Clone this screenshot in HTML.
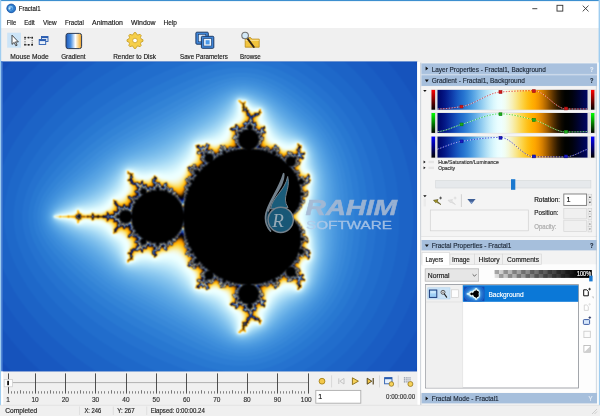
<!DOCTYPE html>
<html><head><meta charset="utf-8"><title>Fractal1</title>
<style>
html,body{margin:0;padding:0;background:#f0f0f0}
body{width:600px;height:416px;overflow:hidden;font-family:"Liberation Sans", sans-serif}
svg{display:block}
</style></head><body>
<svg width="600" height="416" viewBox="0 0 600 416" style="will-change:transform">
<defs><linearGradient id="uf" x1="0" x2="1" y1="0" y2="0"><stop offset="0.0000" stop-color="#000764"/><stop offset="0.0250" stop-color="#010d76"/><stop offset="0.0500" stop-color="#041988"/><stop offset="0.0750" stop-color="#092b9b"/><stop offset="0.1000" stop-color="#0f3eac"/><stop offset="0.1250" stop-color="#1652bc"/><stop offset="0.1500" stop-color="#1d65c7"/><stop offset="0.1750" stop-color="#2674d0"/><stop offset="0.2000" stop-color="#3586d7"/><stop offset="0.2250" stop-color="#4998df"/><stop offset="0.2500" stop-color="#61abe6"/><stop offset="0.2750" stop-color="#7cbeec"/><stop offset="0.3000" stop-color="#96cff1"/><stop offset="0.3250" stop-color="#b0dff6"/><stop offset="0.3500" stop-color="#c7edfa"/><stop offset="0.3750" stop-color="#daf7fd"/><stop offset="0.4000" stop-color="#e8fdff"/><stop offset="0.4250" stop-color="#eeffff"/><stop offset="0.4500" stop-color="#f1fdf2"/><stop offset="0.4750" stop-color="#f4f7d8"/><stop offset="0.5000" stop-color="#f7efb4"/><stop offset="0.5250" stop-color="#f9e68a"/><stop offset="0.5500" stop-color="#fbda60"/><stop offset="0.5750" stop-color="#fdce38"/><stop offset="0.6000" stop-color="#fec018"/><stop offset="0.6250" stop-color="#ffb304"/><stop offset="0.6500" stop-color="#fea600"/><stop offset="0.6750" stop-color="#ef9400"/><stop offset="0.7000" stop-color="#d27d00"/><stop offset="0.7250" stop-color="#ab6300"/><stop offset="0.7500" stop-color="#7f4800"/><stop offset="0.7750" stop-color="#542f00"/><stop offset="0.8000" stop-color="#2d1a00"/><stop offset="0.8250" stop-color="#100a00"/><stop offset="0.8500" stop-color="#010200"/><stop offset="0.8750" stop-color="#000203"/><stop offset="0.9000" stop-color="#00020f"/><stop offset="0.9250" stop-color="#000323"/><stop offset="0.9500" stop-color="#00043a"/><stop offset="0.9750" stop-color="#000550"/><stop offset="1.0000" stop-color="#000764"/></linearGradient><linearGradient id="gr" x1="0" x2="0" y1="0" y2="1"><stop offset="0" stop-color="#f00"/><stop offset="1" stop-color="#000"/></linearGradient><linearGradient id="gg" x1="0" x2="0" y1="0" y2="1"><stop offset="0" stop-color="#0f0"/><stop offset="1" stop-color="#000"/></linearGradient><linearGradient id="gb" x1="0" x2="0" y1="0" y2="1"><stop offset="0" stop-color="#00f"/><stop offset="1" stop-color="#000"/></linearGradient><linearGradient id="gicon" x1="0" x2="1" y1="0" y2="0"><stop offset="0" stop-color="#1c57b8"/><stop offset=".3" stop-color="#4a8fe0"/><stop offset=".6" stop-color="#fff"/><stop offset=".85" stop-color="#f6c56a"/><stop offset="1" stop-color="#e89a20"/></linearGradient><linearGradient id="opa" x1="0" x2="1" y1="0" y2="0"><stop offset="0" stop-color="#000" stop-opacity=".12"/><stop offset=".85" stop-color="#000" stop-opacity=".97"/><stop offset="1" stop-color="#000"/></linearGradient><radialGradient id="thumb" cx=".62" cy=".5" r=".6"><stop offset="0" stop-color="#fff"/><stop offset=".45" stop-color="#cfe6fa"/><stop offset="1" stop-color="#1b5fc4"/></radialGradient><filter id="soft" x="0" y="0" width="1" height="1" color-interpolation-filters="sRGB"><feConvolveMatrix order="3" kernelMatrix="1 2 1 2 5 2 1 2 1" edgeMode="duplicate" preserveAlpha="true"/></filter></defs>
<rect x="0.00" y="0.00" width="600.00" height="416.00" fill="#f0f0f0"/>
<rect x="0.00" y="0.00" width="600.00" height="28.00" fill="#fff"/>
<rect x="0.00" y="0.00" width="600.00" height="1.10" fill="#3d8fcf"/>
<rect x="0.00" y="0.00" width="1.20" height="416.00" fill="#9fcdf0"/>
<rect x="598.60" y="0.00" width="1.40" height="416.00" fill="#9fcdf0"/>
<circle cx="11.2" cy="8.4" r="4.5" fill="#2f7fd0"/><circle cx="11.2" cy="8.4" r="4.3" fill="none" stroke="#1f57a6" stroke-width=".9"/><circle cx="10.6" cy="8.2" r="2.4" fill="#86c2f0"/><circle cx="11.3" cy="8.8" r="1.400" fill="#3b88d6"/><circle cx="9.800" cy="8.300" r=".8" fill="#e6f3fc"/>
<line x1="532.30" y1="8.70" x2="537.30" y2="8.70" stroke="#333" stroke-width="0.9"/>
<rect x="557.00" y="5.30" width="5.80" height="5.80" fill="none" stroke="#333" stroke-width="0.9"/>
<path d="M582.7 5.6l5.8 5.8M588.5 5.6l-5.8 5.8" stroke="#333" stroke-width=".9" fill="none"/>
<rect x="7.20" y="32.70" width="13.80" height="15.00" fill="#cce4f7"/>
<path d="M12 35.2v9.2l2.2-2 1.6 3.4 1.3-.6-1.6-3.3h2.9z" fill="#fff" stroke="#222" stroke-width=".8" stroke-linejoin="round"/>
<rect x="25" y="37.6" width="7.2" height="7.2" fill="none" stroke="#333" stroke-width=".8" stroke-dasharray="1.2 1.2"/>
<rect x="24.20" y="36.80" width="1.60" height="1.60" fill="#222"/>
<rect x="31.40" y="36.80" width="1.60" height="1.60" fill="#222"/>
<rect x="24.20" y="44.00" width="1.60" height="1.60" fill="#222"/>
<rect x="31.40" y="44.00" width="1.60" height="1.60" fill="#222"/>
<rect x="27.80" y="36.80" width="1.60" height="1.60" fill="#222"/>
<rect x="27.80" y="44.00" width="1.60" height="1.60" fill="#222"/>
<rect x="41.50" y="36.50" width="6.50" height="5.00" fill="#e8f0fa" stroke="#2a5db0" stroke-width="0.9"/>
<rect x="41.50" y="36.50" width="6.50" height="1.60" fill="#2a5db0"/>
<rect x="39.20" y="39.50" width="6.50" height="5.00" fill="#e8f0fa" stroke="#2a5db0" stroke-width="0.9"/>
<rect x="39.20" y="39.50" width="6.50" height="1.60" fill="#2a5db0"/>
<rect x="66.00" y="33.40" width="15.60" height="15.20" fill="url(#gicon)" stroke="#2b3b55" stroke-width="1.0" rx="2.2"/>
<path d="M142.96 39.72L142.96 41.28L140.93 42.30L140.47 43.42L141.18 45.58L140.08 46.68L137.92 45.97L136.80 46.43L135.78 48.46L134.22 48.46L133.20 46.43L132.08 45.97L129.92 46.68L128.82 45.58L129.53 43.42L129.07 42.30L127.04 41.28L127.04 39.72L129.07 38.70L129.53 37.58L128.82 35.42L129.92 34.32L132.08 35.03L133.20 34.57L134.22 32.54L135.78 32.54L136.80 34.57L137.92 35.03L140.08 34.32L141.18 35.42L140.47 37.58L140.93 38.70z" fill="#f6cf4a" stroke="#c9a02a" stroke-width=".9" stroke-linejoin="round"/>
<circle cx="135" cy="40.5" r="2.3" fill="#fff" stroke="#c9a02a" stroke-width=".8"/>
<rect x="195.90" y="32.20" width="12.40" height="12.00" fill="#3f86d8" stroke="#1d3a66" stroke-width="1.0" rx="1"/>
<rect x="198.40" y="34.40" width="7.40" height="7.40" fill="#dbeafa" stroke="#1d3a66" stroke-width="0.6"/>
<rect x="201.40" y="36.30" width="12.40" height="12.00" fill="#3f86d8" stroke="#1d3a66" stroke-width="1.0" rx="1"/>
<rect x="203.80" y="38.60" width="7.60" height="7.40" fill="#eef5fd" stroke="#1d3a66" stroke-width="0.6"/>
<rect x="205.60" y="40.20" width="4.00" height="4.20" fill="#4a98e8"/>
<path d="M245.200 37.600h5.400l1.200 1.500h7.400v8.100h-14z" fill="#f2c43e" stroke="#b88a1c" stroke-width=".8" stroke-linejoin="round"/>
<path d="M245.600 40.300h13.200" stroke="#fbe39a" stroke-width="1.100"/>
<path d="M247.400 38.400l6.400 8.600" stroke="#33261a" stroke-width="1.900" stroke-linecap="round"/>
<circle cx="245.100" cy="35.500" r="3.300" fill="#d3e9f8" stroke="#747474" stroke-width="1.100"/>
<rect x="1.20" y="61.50" width="416.00" height="1.00" fill="#2a66c4"/>
<svg x="2.2" y="61.650" width="415" height="310" viewBox="0 0 415 310" fill-rule="evenodd"><g filter="url(#soft)"><rect x="-6" y="-6" width="427" height="322" fill="#124ab5"/><g transform="scale(.1)"><path fill="#144db8" d="M4148 3098l-4146 0 0-3096 4146 0z"/>
<path fill="#1653bc" d="M4112 3098l-4023 0-87-97 0-2902 87-97 4025 0 34 46 0 3004-34 46z"/>
<path fill="#1858c0" d="M3858 3098l-3471 0-109-102-99-104-94-110-83-110 0-2244 83-110 94-110 99-104 109-102 3471 0 82 100 75 103 69 107 64 113 0 1213 0 1037-64 113-69 107-75 103z"/>
<path fill="#1a5dc3" d="M3632 3098l-2963 0-104-82-100-87-93-88-87-91-80-92-75-96-67-97-61-100 0-1630 56-93 62-90 56-74 59-71 63-72 68-70 72-70 74-66 76-64 81-63 2963 0 85 90 80 96 73 100 69 107 62 110 55 113 49 117 43 121 0 1388-43 121-49 117-55 113-62 110-69 107-73 100-82 98z"/>
<path fill="#1c63c6" d="M3428 3098l-2488 0-122-82-116-87-124-102-113-104-103-107-92-108-83-110-38-56-35-57-32-57-29-56-27-57-24-58 0-1014 47-108 59-110 68-107 78-106 68-83 73-81 79-80 84-77 90-77 94-74 96-70 102-68 2488 0 77 70 75 76 69 80 67 87 60 87 57 93 53 97 47 100 42 103 37 103 31 107 25 107 20 110 14 110 8 110 3 110-3 113-9 110-14 110-20 107-25 106-32 107-36 103-41 100-47 100-53 97-57 93-60 87-67 87-69 80-75 76z"/>
<path fill="#1e68c9" d="M3208 3098l-1968 0-82-44-83-48-80-50-80-53-73-52-74-56-70-57-69-60-64-60-63-62-57-61-57-64-53-66-47-63-45-67-41-67-37-65-32-65-29-66-24-64-20-63-16-67-13-66-8-64-4-63 0-67 4-63 8-63 12-67 15-63 21-67 24-63 27-64 33-66 35-65 40-65 46-67 46-63 52-65 54-62 81-87 88-84 93-82 100-80 104-75 110-74 113-68 115-63 1970 0 78 59 74 62 75 72 72 77 67 80 61 83 57 87 51 90 47 93 41 97 36 100 31 103 26 107 20 106 14 110 8 110 3 110-3 114-8 110-14 106-19 107-26 107-31 103-34 97-41 96-46 94-51 90-56 86-61 84-66 80-71 76-77 74-82 70z"/>
<path fill="#216dcc" d="M3005 3098l-1463 0-144-65-140-72-140-81-130-84-123-88-117-92-110-97-100-99-53-58-49-57-45-57-45-60-41-60-35-56-31-57-29-57-24-56-21-57-18-57-13-53-10-57-7-56-3-57 1-53 4-57 8-53 11-57 16-57 19-56 22-57 27-57 29-56 34-58 38-59 42-59 44-58 49-59 51-57 56-59 57-56 96-88 100-82 110-82 114-77 120-74 126-71 127-64 127-57 1463 0 100 62 97 71 93 79 87 84 66 75 63 79 56 80 51 83 46 87 41 90 37 93 31 97 27 100 21 100 16 106 11 107 5 107-1 110-6 110-11 106-17 104-21 100-26 96-31 94-36 90-42 90-46 86-49 80-56 80-59 75-64 72-70 70-73 65-77 62-81 56z"/>
<path fill="#2572cf" d="M2772 3098l-891 0-119-42-130-53-134-60-136-70-107-58-103-61-100-64-94-65-90-67-86-70-80-70-77-73-74-77-69-79-62-77-54-77-45-73-39-74-30-70-24-70-14-56-9-57-5-57 0-56 5-57 9-57 14-56 19-57 23-57 29-60 34-60 38-60 42-60 49-63 53-63 58-64 62-63 64-60 69-62 70-57 74-57 76-55 80-55 80-50 87-52 93-53 97-50 93-46 97-44 90-38 90-35 86-29 892 0 79 34 80 42 63 38 64 42 63 46 60 49 58 52 55 55 51 55 50 60 45 60 41 60 39 63 36 67 32 67 29 70 27 73 23 73 20 77 18 80 13 80 11 80 7 83 4 84 0 86-2 84-6 83-10 83-12 80-16 80-19 77-22 73-25 74-28 70-31 66-34 67-37 63-39 60-43 60-48 60-50 57-52 53-57 54-58 50-60 46-64 45-63 40-67 37-66 33z"/>
<path fill="#2878d1" d="M2482 3098l-235 0-45-6-74-13-76-19-80-23-87-30-97-38-106-46-114-53-113-56-107-57-106-61-100-61-94-61-83-59-80-60-77-62-73-64-70-66-67-68-63-69-57-68-48-63-43-63-35-60-29-57-24-57-18-56-12-54-7-56-1-50 3-54 9-53 13-53 18-54 23-53 28-53 34-57 41-60 48-63 54-64 60-66 62-64 64-61 70-63 70-58 77-59 80-58 83-56 90-57 94-55 100-56 103-54 103-51 100-46 94-40 86-35 84-29 76-24 77-20 73-14 69-10 236 0 15 2 60 10 60 14 60 18 60 22 60 26 64 32 62 36 61 39 60 43 60 47 57 49 53 50 50 52 44 50 42 53 39 53 37 57 34 57 31 60 28 60 26 63 23 67 21 66 17 67 15 70 12 73 10 74 7 76 5 77 1 80-1 80-4 77-7 76-10 77-12 73-16 74-17 66-20 67-23 67-24 60-28 60-31 60-32 56-37 57-41 57-46 57-49 56-53 53-54 51-60 51-60 46-61 42-63 39-60 34-60 29-63 27-63 23-60 16-60 13z"/>
<path fill="#2d7dd4" d="M2418 3042l-60 0-63-4-63-8-67-13-67-17-70-22-76-27-80-32-104-46-120-56-126-64-117-62-110-61-97-58-93-59-87-59-76-56-74-57-70-59-70-62-67-65-66-68-60-66-52-63-41-55-35-51-29-50-24-50-18-47-14-50-8-50-3-47 1-50 7-46 11-47 16-47 20-46 27-50 32-51 38-53 49-61 56-65 60-64 67-66 67-62 70-61 70-56 73-56 83-59 87-57 93-57 100-58 114-62 116-61 120-59 110-51 87-37 80-32 73-26 70-21 67-16 63-12 64-8 63-3 57 0 56 5 57 9 57 12 53 16 57 21 56 24 57 29 60 34 60 39 60 43 60 46 57 49 53 50 50 51 46 52 37 47 37 50 33 50 31 53 28 54 27 56 23 57 20 57 20 63 16 63 15 67 12 67 9 70 7 70 6 73 2 73 0 74-2 73-5 73-7 74-9 70-13 70-14 66-16 64-19 60-21 60-23 56-26 57-28 53-31 54-33 50-36 50-43 53-47 53-53 54-53 49-57 48-60 46-60 43-60 38-56 32-57 28-57 25-56 20-54 15-56 13-57 8z"/>
<path fill="#3283d6" d="M2445 2988l-53 2-57-2-57-6-56-11-60-14-60-19-67-24-70-28-100-45-120-58-150-76-147-77-110-61-96-56-90-55-87-58-77-54-70-52-70-57-70-60-70-65-70-68-66-70-57-64-40-50-33-46-27-43-23-43-16-40-13-43-9-43-3-44 1-43 6-40 11-43 15-40 18-40 25-44 29-43 36-47 50-59 60-65 66-68 70-66 67-60 67-56 66-53 74-54 83-58 83-53 90-55 100-57 124-67 140-73 140-70 113-54 77-34 70-29 63-23 60-19 57-14 56-11 54-7 53-3 53 1 50 4 54 8 50 12 50 15 53 21 50 23 53 28 57 33 60 40 60 44 60 48 57 49 52 49 48 50 44 50 34 43 33 47 31 47 27 46 26 50 23 50 21 54 19 53 17 57 15 60 24 123 17 137 8 140-1 143-10 143-18 134-12 63-14 60-16 57-18 56-20 54-23 53-24 50-27 50-29 47-32 46-41 54-42 50-47 50-52 50-53 47-60 49-60 45-60 41-57 35-53 29-54 25-50 21-50 16-50 13-53 10z"/>
<path fill="#3888d8" d="M2445 2945l-40 2-47-1-60-7-36-7-54-13-56-18-54-20-63-26-100-47-143-72-344-181-190-107-103-62-67-43-76-54-54-40-73-58-63-53-2-3-55-47-90-84-138-139-45-53-30-40-19-30-21-37-14-30-14-43-7-30-4-44 1-33 3-27 9-36 12-37 17-37 24-40 30-43 32-40 39-43 75-77 140-133 55-47 2-3 80-67 133-101 63-43 84-53 116-69 111-61 3-3 380-201 200-99 106-46 54-20 56-18 54-13 36-7 60-7 24-1 50 1 50 5 40 6 43 11 53 17 50 20 54 25 53 30 57 36 53 37 63 48 57 46 57 50 50 48 40 42 44 50 60 80 30 47 24 43 45 93 36 100 31 114 21 110 13 106 9 157 0 150-6 120-13 123-10 60-14 70-31 114-36 100-45 93-24 43-30 47-36 50-44 53-54 59-60 58-57 50-57 46-106 79-40 26-57 33-53 28-57 24-47 16-50 14-53 10z"/>
<path fill="#3d8ddb" d="M2458 2912l-43 3-40-1-40-3-43-8-44-10-43-14-50-19-53-23-157-76-230-122-450-245-87-50-73-46-110-78-123-100-204-178-66-62-50-51-34-37-30-37-25-37-20-33-16-33-11-34-7-30-3-33 1-30 6-33 10-34 13-30 19-34 23-35 27-35 33-39 47-48 57-54 173-154 143-120 57-44 57-40 100-65 126-73 494-267 250-129 106-49 87-31 40-11 37-7 40-6 36-2 44 1 43 4 47 9 43 11 47 16 46 19 47 23 47 27 51 33 56 40 64 50 69 58 60 53 50 48 42 45 37 43 28 37 27 40 46 80 41 90 35 100 26 100 19 106 12 114 6 130 1 150-6 140-12 120-18 106-27 107-16 50-20 53-20 47-22 47-24 43-27 43-33 47-35 43-40 44-47 46-60 56-70 59-67 54-60 45-46 31-44 26-46 25-44 19-43 17-47 14-46 11z"/>
<path fill="#4292dc" d="M2448 2885l-36 2-34 0-33-3-37-7-36-9-37-12-83-35-144-74-482-265-268-142-76-44-67-41-87-61-96-78-267-225-60-54-47-45-57-64-23-30-18-30-15-29-10-27-7-30-3-27 2-27 5-30 9-26 13-30 18-30 20-28 26-33 30-33 47-46 57-51 256-218 100-81 87-63 70-45 83-48 265-141 389-214 220-117 80-37 66-24 64-15 63-5 40 1 43 5 40 8 44 12 43 15 43 19 44 22 43 26 50 34 57 42 153 128 57 51 43 42 37 39 33 39 26 36 25 36 42 77 39 90 30 93 24 97 16 100 11 107 5 130 0 156-4 137-11 113-16 104-26 103-33 100-40 90-23 43-25 40-30 43-33 41-37 40-43 43-64 57-89 76-70 57-57 43-44 29-40 24-43 23-40 17-40 16-43 13-44 9z"/>
<path fill="#4896de" d="M2442 2865l-60 1-60-8-64-18-66-29-90-48-529-298-112-60-216-111-63-35-57-36-67-46-70-55-160-134-180-147-86-77-54-57-22-29-17-26-13-27-9-23-6-27-2-23 2-24 5-26 8-24 13-26 17-27 20-27 51-56 40-37 50-44 183-149 154-128 66-53 64-45 53-35 60-34 330-172 540-304 80-44 60-27 57-21 53-11 53-5 37 1 40 5 40 9 40 11 40 15 43 19 40 21 40 24 48 34 56 43 186 158 84 77 32 35 27 33 47 67 39 73 36 87 31 97 22 93 14 93 9 104 4 123 0 170-3 133-9 107-15 97-24 103-32 100-19 47-20 43-22 40-22 37-28 40-29 36-35 38-40 39-63 57-129 110-58 47-50 38-40 27-37 22-40 21-40 18-40 15-40 11-40 9z"/>
<path fill="#4d9be0" d="M2422 2849l-50-2-50-8-50-16-54-24-55-31-201-120-366-210-125-66-226-112-60-33-53-33-47-33-51-39-188-157-214-167-70-61-50-52-34-47-12-23-8-20-5-20-2-23 2-24 4-20 8-21 11-22 16-24 20-26 50-52 70-61 214-167 188-157 48-37 46-32 57-36 60-33 226-112 125-66 349-201 210-125 60-33 50-23 47-16 46-10 44-3 33 1 37 5 40 9 36 11 40 15 40 19 37 19 40 25 42 30 46 37 232 197 67 64 50 59 24 33 20 33 37 74 34 86 29 97 18 87 13 90 6 100 3 126 0 184-3 120-7 96-13 90-23 100-16 54-18 50-37 86-19 37-22 37-26 36-27 34-30 32-37 36-243 208-81 64-39 26-37 21-36 18-40 17-37 13-40 11-37 7z"/>
<path fill="#53a0e2" d="M2435 2832l-47 1-46-6-47-14-47-21-59-34-211-133-369-217-133-70-228-107-53-29-47-28-43-30-47-36-141-120-62-50-217-161-73-60-47-47-32-42-11-20-8-20-4-16-2-20 2-20 3-17 8-20 10-20 31-41 47-48 76-63 221-165 196-164 43-33 44-31 50-31 53-29 231-108 133-70 375-220 205-130 53-31 43-20 40-14 37-7 40-3 33 1 33 5 34 8 36 11 40 15 37 17 37 20 33 20 37 26 39 32 131 114 133 111 53 50 42 48 40 57 36 66 31 77 29 90 20 83 14 84 7 86 4 104-1 363-5 93-10 80-19 97-30 103-16 47-20 47-17 36-21 37-22 33-25 34-27 30-33 33-47 42-123 103-112 98-59 47-66 43-70 35-36 14-40 12-34 8z"/>
<path fill="#59a4e3" d="M2425 2819l-40 0-40-6-40-13-37-16-53-32-123-86-80-51-390-233-73-40-67-34-230-102-50-27-44-26-40-28-40-31-138-119-66-53-72-54-167-116-70-55-43-42-30-37-16-33-4-17-2-16 1-17 4-17 6-16 11-19 26-34 44-43 70-55 170-119 72-54 68-54 133-116 40-31 40-28 43-26 50-27 234-104 67-34 73-40 390-233 80-51 123-86 50-30 37-17 33-11 33-7 34-2 30 1 30 4 33 8 37 12 36 14 37 17 33 18 34 21 60 46 146 131 150 122 44 41 35 39 37 53 32 60 31 77 29 90 19 80 13 77 8 80 2 93 0 400-4 83-8 74-18 96-28 100-33 90-17 37-20 37-21 33-22 30-25 29-30 30-44 38-126 103-134 120-54 43-62 41-34 18-36 16-37 14-37 11-33 7z"/>
<path fill="#5ea8e5" d="M2435 2805l-40 2-37-4-36-10-37-17-50-31-120-90-80-54-410-249-67-37-70-34-233-98-43-22-40-24-40-27-37-29-134-119-70-57-80-57-179-118-67-51-40-36-27-32-15-29-4-14-1-16 1-17 3-13 15-30 25-31 40-38 70-53 179-118 80-57 70-57 131-116 36-29 37-26 47-28 50-25 213-89 57-27 60-31 95-55 345-211 73-49 121-90 45-30 34-18 30-11 30-7 33-3 27 1 30 4 33 8 34 11 73 31 33 18 30 19 33 23 32 27 102 97 49 43 158 125 33 32 27 29 34 47 31 57 27 63 27 84 21 80 14 73 9 73 3 84-1 226 1 230-2 70-6 64-16 90-27 100-34 96-33 70-18 30-22 30-25 30-27 26-40 35-142 113-132 123-49 41-57 38-63 32-70 26-30 8z"/>
<path fill="#63ace6" d="M2438 2795l-36 3-34-2-33-9-37-16-46-29-120-96-77-54-421-260-62-35-59-29-71-30-167-64-50-24-47-27-33-23-37-29-133-122-72-57-87-60-188-119-70-52-33-30-23-26-14-27-5-26 4-27 11-24 24-29 36-33 70-52 188-119 87-60 72-57 130-119 37-30 33-23 43-25 47-23 218-86 59-27 63-33 85-50 362-224 70-49 117-94 43-30 30-16 23-9 33-9 30-2 24 1 26 3 60 17 37 14 40 18 33 18 30 19 32 23 31 27 97 95 44 39 47 39 123 93 33 30 28 30 34 47 27 50 24 57 28 86 22 80 13 67 9 70 3 77-3 250 3 240-2 63-4 50-15 87-25 96-33 100-32 70-17 30-20 29-21 25-26 26-43 37-102 77-48 39-47 42-86 85-47 41-53 36-60 31-64 25-33 9z"/>
<path fill="#68b0e7" d="M2428 2788l-33 2-33-4-34-10-30-15-40-29-123-104-80-58-65-42-152-91-156-101-70-41-60-31-67-29-227-85-40-19-33-20-28-19-29-24-137-126-43-37-43-33-79-54-181-107-57-38-36-28-30-27-19-23-12-23-4-20 4-24 12-23 19-23 30-27 36-28 57-38 181-107 79-54 43-33 43-37 134-124 57-43 36-22 40-19 235-88 67-30 65-34 60-36 153-99 157-94 63-41 80-59 116-97 41-30 27-15 23-9 27-6 26-2 24 1 26 4 54 15 80 35 33 17 27 17 26 19 26 24 101 101 52 49 54 43 117 85 30 27 27 28 31 43 28 50 23 57 26 83 23 84 13 63 7 67 3 76-5 254 5 246-1 60-5 54-13 80-27 100-31 96-15 37-15 30-18 30-19 27-20 24-22 22-38 32-100 72-54 43-53 49-97 98-42 36-51 34-66 32-64 24z"/>
<path fill="#6db4e9" d="M2418 2782l-30 0-30-4-26-9-27-14-35-27-118-106-80-61-67-43-153-93-154-101-70-42-57-30-59-27-71-27-169-57-44-20-36-21-27-18-27-22-134-128-46-40-44-34-81-53-135-75-56-34-57-36-37-27-23-20-19-21-11-20-4-20 3-20 11-22 17-20 26-23 37-27 57-36 56-34 135-75 81-53 44-34 46-40 134-128 27-22 27-18 36-21 44-20 169-57 74-29 63-28 57-30 67-41 146-97 158-95 66-44 83-63 111-100 36-28 23-13 23-9 24-6 26-2 24 1 23 4 50 15 83 36 30 16 27 17 26 19 26 23 98 104 56 53 55 43 116 80 30 26 26 28 31 43 26 47 21 53 24 77 23 83 13 63 8 64 3 76-7 247 0 67 7 190-1 66-5 57-12 73-25 97-32 100-14 37-15 30-16 26-18 27-20 23-21 21-36 30-101 69-59 47-57 53-95 100-42 37-50 32-76 36-57 20z"/>
<path fill="#73b7ea" d="M2418 2775l-30 1-26-4-27-9-23-13-36-28-68-67-40-37-40-34-43-33-70-46-157-94-150-103-71-43-58-30-61-27-76-27-164-52-43-18-37-20-26-19-25-20-122-122-39-35-38-30-45-33-48-30-177-95-113-70-30-22-23-24-12-19-5-20 2-17 10-20 15-17 23-21 40-28 63-38 60-34 130-69 44-26 40-27 43-33 40-34 43-40 92-93 28-25 27-19 37-21 40-17 172-55 74-27 64-27 61-32 65-41 150-102 157-94 70-47 43-32 40-34 40-37 68-67 36-28 20-12 20-7 23-5 23-2 44 4 46 14 90 41 27 14 27 16 23 19 22 20 98 107 57 55 61 48 115 76 29 24 25 26 25 34 23 40 20 46 17 54 33 113 13 60 9 67 3 73-1 70-8 197 1 66 8 184 0 63-4 57-10 66-18 70-38 130-14 37-15 30-15 27-18 26-18 22-20 20-43 34-109 71-48 38-60 58-95 104-37 33-21 15-27 16-80 38-53 20z"/>
<path fill="#78bbeb" d="M2422 2769l-30 1-27-3-23-8-24-12-33-29-63-67-40-39-40-35-44-34-70-48-163-97-153-107-68-43-59-30-67-28-80-27-160-46-40-16-33-18-23-16-26-22-121-125-42-38-42-34-43-30-48-30-168-85-127-73-30-22-20-19-12-17-5-20 4-20 13-20 20-20 30-22 127-73 168-85 49-30 46-33 42-34 41-38 118-122 22-19 24-17 33-19 43-17 166-48 78-27 66-28 64-33 66-42 144-101 166-99 70-48 44-34 43-38 37-36 63-67 31-27 19-11 17-7 20-5 23-2 40 3 43 13 97 44 50 28 22 17 21 20 97 111 60 59 30 24 31 23 119 74 27 22 23 24 25 33 21 37 16 36 15 47 38 133 13 54 8 60 4 70-2 76-8 140-2 64 1 70 10 183 0 67-3 53-9 57-15 63-41 140-13 37-14 30-15 26-16 24-16 20-20 20-44 34-107 66-53 40-60 58-97 112-36 33-23 16-24 13-86 40-44 17z"/>
<path fill="#7dbfec" d="M2428 2762l-30 3-26-2-24-7-23-12-30-26-60-69-40-42-43-39-44-35-73-50-163-97-154-110-69-44-64-32-67-27-80-25-156-41-37-13-33-18-26-18-26-23-85-94-40-40-37-33-42-33-48-33-46-27-164-78-133-74-27-18-20-18-13-19-4-16 3-17 11-18 20-19 30-21 133-74 164-78 46-27 48-33 42-33 37-33 43-44 79-87 25-23 26-19 34-18 36-14 162-42 84-27 71-29 63-33 64-41 104-77 46-31 166-99 73-50 44-36 43-40 37-38 57-66 30-27 16-10 17-7 20-4 20-2 40 4 37 11 106 49 44 25 22 18 20 20 91 109 33 36 31 28 29 24 33 23 117 69 27 20 23 24 21 27 20 33 17 37 13 36 45 160 9 40 9 54 3 63-2 87-10 150-3 63 2 67 12 180 1 66-3 54-6 46-12 54-46 163-12 33-12 27-14 27-16 23-16 20-19 20-41 31-112 66-57 43-54 53-95 114-19 20-19 16-20 14-24 14-93 44-33 14z"/>
<path fill="#83c2ed" d="M2418 2759l-26 1-24-3-20-6-20-11-27-25-56-70-37-41-43-41-45-38-36-27-39-25-123-70-44-27-44-31-109-83-67-43-66-34-69-27-88-25-153-36-37-13-30-15-23-17-26-24-78-90-43-45-42-38-42-33-45-30-48-28-40-19-120-53-143-75-27-18-20-17-12-17-3-13 3-17 12-17 20-17 27-18 143-75 120-53 40-19 48-28 46-31 41-32 39-34 43-45 85-98 25-22 27-19 26-13 34-11 160-37 90-28 43-16 40-18 37-19 39-23 47-33 92-71 45-32 47-29 116-66 67-45 51-41 49-46 40-44 53-67 20-20 17-12 17-9 20-5 23-2 37 4 36 11 117 55 33 20 19 15 17 17 94 118 34 36 31 29 29 23 34 24 119 65 27 20 20 21 21 27 20 33 14 30 13 37 56 207 7 50 3 60-2 90-13 150-2 66 2 67 14 180 1 67-2 53-7 47-10 43-48 173-10 30-12 27-17 30-17 23-18 22-20 18-37 25-73 39-37 21-35 25-35 30-27 27-29 33-82 104-34 33-38 23-106 51-34 13z"/>
<path fill="#88c6ef" d="M2408 2755l-23 0-20-3-17-5-16-10-26-25-51-70-33-40-44-43-46-41-37-27-40-27-127-70-46-29-46-33-94-76-54-37-36-22-38-19-39-16-43-16-94-26-156-32-30-10-27-12-25-18-25-23-77-93-43-47-44-40-48-37-45-30-49-26-154-65-147-74-26-16-20-16-13-16-4-13 2-14 11-16 17-14 27-17 153-78 117-48 40-18 46-26 50-33 47-36 40-37 43-47 77-93 25-23 25-18 27-12 30-10 160-33 93-26 43-16 40-17 37-19 37-22 50-35 94-76 46-33 46-29 117-64 70-47 53-44 50-50 37-43 51-70 19-19 14-11 16-7 20-5 20-2 33 4 34 10 123 58 30 18 21 18 18 20 64 86 34 41 27 29 29 27 30 24 35 23 119 61 23 17 23 23 20 25 18 30 14 30 11 30 24 96 33 118 8 46 2 57-3 93-14 154-3 66 3 67 15 177 2 73-2 53-6 40-8 37-27 90-24 97-11 30-10 23-17 30-17 23-18 20-20 18-33 21-71 35-37 20-39 26-33 29-50 52-30 37-58 79-18 20-17 16-37 23-117 56-30 10z"/>
<path fill="#8dc9f0" d="M2425 2749l-27 3-23-2-20-5-19-10-23-23-48-72-33-42-44-45-46-42-39-29-41-28-127-69-47-28-43-32-100-84-57-39-34-20-39-19-40-17-44-14-96-25-153-27-30-9-24-11-23-16-23-22-74-95-43-48-47-43-48-38-47-30-48-25-41-18-109-42-160-77-27-15-16-14-11-12-4-13 2-14 9-12 20-17 24-13 163-79 109-42 41-18 48-25 47-30 48-38 47-43 43-48 74-95 23-22 23-16 24-11 30-9 153-27 50-12 50-14 45-15 40-17 38-19 37-22 53-38 97-81 43-32 47-28 123-67 36-23 34-25 54-46 46-49 37-45 46-68 17-20 14-11 16-8 17-3 17-2 33 3 33 10 67 34 60 27 27 16 20 17 17 20 59 84 34 43 30 33 30 28 33 26 36 23 33 16 58 25 26 14 24 17 21 21 21 27 16 26 13 27 11 30 24 103 33 114 7 40 3 46-4 107-16 157-3 66 3 67 17 173 3 77-2 53-4 34-8 33-29 97-23 100-18 46-15 27-18 27-19 22-20 17-37 22-71 32-35 18-38 25-35 30-27 28-27 30-30 40-56 79-14 17-17 15-30 19-63 29-57 29-23 10z"/>
<path fill="#93cdf1" d="M2422 2745l-27 3-23-2-20-6-14-8-11-10-10-14-42-68-33-45-44-47-46-43-40-32-43-28-42-23-89-46-46-29-43-32-97-85-59-42-35-20-40-19-43-17-43-14-50-13-50-10-147-22-27-7-23-10-23-15-24-23-70-94-46-54-45-42-52-40-47-30-50-25-36-15-114-41-166-77-24-13-16-13-10-12-4-10 3-14 11-12 16-13 24-13 166-77 114-41 36-15 50-25 47-30 52-40 46-44 45-52 70-94 24-23 23-15 23-10 27-7 147-22 50-10 50-13 46-15 44-17 40-20 36-21 54-39 97-85 43-32 46-29 125-66 39-24 36-28 54-47 50-54 30-40 42-70 16-20 15-12 13-6 14-3 16-2 34 3 30 8 73 39 63 28 20 12 17 13 18 20 55 84 37 49 30 34 31 30 35 26 34 21 33 16 64 25 26 14 20 14 20 19 20 25 16 26 13 27 10 27 25 109 34 114 6 37 2 40-4 113-19 157-3 66 3 70 15 114 4 53 4 80-1 53-4 30-6 30-31 101-23 103-16 43-17 30-18 27-18 20-18 15-34 20-73 29-37 18-37 24-36 31-29 29-28 33-33 45-50 76-14 16-16 15-27 17-63 28-63 35-20 7z"/>
<path fill="#98d0f2" d="M2422 2742l-24 3-23-1-17-4-16-9-10-9-10-14-37-66-29-44-44-51-54-50-40-32-45-30-41-23-87-42-47-29-43-34-97-88-30-23-31-21-35-20-44-20-43-16-43-13-44-11-56-11-150-18-27-7-20-9-22-15-21-22-64-92-44-53-49-46-57-44-50-31-46-24-40-15-107-35-90-41-83-36-20-10-17-12-12-12-3-10 2-11 10-12 16-13 24-12 83-36 90-41 107-35 40-15 46-24 50-31 57-44 49-46 44-53 64-92 21-22 22-15 20-9 27-7 150-18 56-11 47-11 43-14 40-15 44-20 40-23 56-41 97-88 43-34 47-29 123-62 40-26 40-30 54-49 50-56 30-43 36-66 14-20 11-10 12-6 17-5 16-2 34 3 30 9 66 37 67 29 23 14 17 15 14 16 48 77 38 53 33 40 34 32 36 28 35 20 32 14 67 24 23 11 20 14 20 19 15 18 19 30 12 24 10 26 24 114 35 113 6 33 2 37-5 113-5 50-16 114-3 66 3 67 16 117 5 50 5 86-1 54-4 30-6 26-30 94-23 106-8 27-9 20-16 30-16 23-17 19-20 17-30 17-73 27-38 17-39 24-36 30-30 31-30 36-35 49-46 73-13 17-16 16-27 16-67 29-60 34-16 7z"/>
<path fill="#9dd4f3" d="M2395 2742l-17-1-16-3-14-6-12-10-14-20-37-75-27-39-50-57-60-56-34-27-37-23-132-65-43-26-41-32-93-89-33-27-33-23-37-21-40-19-42-15-48-13-59-13-54-10-140-12-24-5-20-8-22-15-18-20-63-97-40-50-53-51-64-49-44-27-49-23-46-17-101-29-81-37-95-39-37-21-10-10-4-10 2-10 9-11 16-12 24-12 95-39 81-37 101-29 46-17 49-23 44-27 64-49 53-51 40-50 63-97 18-20 22-15 20-8 24-5 140-12 54-10 59-13 48-13 42-15 40-19 37-21 33-23 33-27 93-89 41-32 43-26 133-66 37-23 37-29 60-56 46-54 27-39 37-75 14-20 9-8 13-7 14-4 16-1 34 4 26 7 70 41 64 26 23 13 17 15 14 18 46 78 36 53 34 40 33 33 37 28 40 23 36 15 60 18 24 11 20 12 20 19 15 20 18 30 12 23 9 23 23 117 28 83 8 27 5 33 2 37-6 123-22 154-4 66 4 67 23 163 5 97-1 47-8 50-32 96-7 30-14 80-7 24-9 20-16 30-18 26-18 20-17 13-30 16-73 24-37 15-42 26-37 30-31 32-33 42-34 49-42 73-13 17-15 13-23 15-70 29-67 39-23 7z"/>
<path fill="#a2d7f4" d="M2398 2739l-16 0-17-2-13-6-12-9-13-20-35-77-25-40-22-27-27-30-63-60-33-26-37-24-39-20-98-45-43-25-36-30-64-66-33-31-34-27-36-26-36-20-38-17-43-14-50-13-63-13-54-8-136-9-24-4-16-7-20-13-18-18-62-102-20-28-20-24-27-26-30-27-65-50-42-25-46-22-50-17-100-27-88-39-92-36-37-19-10-10-3-8 2-10 8-9 13-9 27-13 92-36 88-39 100-27 50-17 46-22 44-26 67-52 30-27 26-27 37-48 62-102 18-18 20-13 20-8 26-4 100-5 47-5 105-20 48-13 41-14 39-17 37-21 33-24 34-27 33-31 64-66 36-30 43-25 98-45 39-20 37-24 36-28 64-62 26-30 20-26 27-43 32-71 10-16 11-10 10-6 14-4 13-1 33 3 27 7 73 44 64 25 20 11 16 14 15 20 42 77 37 54 36 46 34 33 36 27 42 23 28 11 64 17 26 10 20 13 21 19 16 20 16 27 12 23 8 20 6 27 10 66 6 30 30 84 7 26 5 30 2 30-7 130-24 157-5 63 5 67 24 160 7 103-1 44-3 26-7 30-24 67-9 30-17 100-6 23-9 20-18 34-16 23-15 18-17 14-17 10-16 7-70 19-39 15-41 24-40 32-30 32-37 47-33 51-39 71-12 17-16 15-23 13-42 15-25 11-67 41-20 7z"/>
<path fill="#a8daf5" d="M2405 2735l-23 2-17-3-13-6-12-10-10-16-28-72-27-46-20-27-27-30-36-38-34-31-34-26-36-22-36-18-100-45-44-25-35-30-61-67-34-33-36-30-37-25-37-21-40-17-43-14-50-11-106-19-44-3-97-2-26-4-20-7-17-11-18-20-59-103-16-24-20-25-24-24-33-30-40-33-33-24-44-25-46-21-54-17-93-22-87-38-96-36-37-18-9-10-3-6 2-10 10-10 37-18 96-36 87-38 97-23 53-18 47-21 43-25 33-25 37-30 33-30 24-24 20-25 16-24 59-103 18-20 17-11 20-7 26-4 97-2 47-3 110-20 53-13 40-13 37-17 36-21 37-25 37-32 30-29 61-67 32-27 47-28 100-45 40-19 36-24 34-27 70-69 43-53 27-46 28-72 10-16 8-8 10-6 14-4 13-1 33 4 24 6 16 8 34 24 23 14 22 9 45 15 20 12 14 13 13 17 39 78 34 51 40 52 35 36 31 24 37 21 40 15 83 21 27 14 20 18 15 20 17 27 12 23 8 20 7 30 12 87 8 30 29 76 7 34 2 33-8 137-26 153-5 63 2 34 3 33 26 157 8 113 0 37-3 26-7 27-26 70-9 27-5 29-10 74-5 20-8 20-18 33-18 27-15 17-16 13-30 14-74 18-39 15-42 23-39 31-33 36-40 54-30 47-34 69-12 16-14 15-23 14-45 15-23 10-69 44-17 5z"/>
<path fill="#adddf6" d="M2412 2732l-24 3-16-1-17-6-12-10-10-16-25-74-13-26-13-22-20-27-27-30-43-45-32-30-32-25-36-21-34-17-100-42-46-26-33-29-61-69-33-34-37-32-40-28-36-20-40-17-44-13-56-12-107-17-43-2-94 2-23-3-20-6-18-12-15-17-57-107-17-25-19-24-24-26-31-28-45-36-34-25-47-27-53-21-47-14-73-14-27-8-77-35-89-30-27-11-23-14-9-11 4-10 8-8 37-18 99-34 87-39 90-18 57-17 47-20 45-26 35-25 42-35 31-28 24-26 19-24 17-25 57-107 15-17 18-12 20-6 23-3 94 2 43-2 43-6 73-13 54-12 40-13 40-17 37-20 36-26 37-32 33-34 61-69 33-29 46-26 100-42 37-18 37-23 36-29 74-75 23-28 18-24 14-23 11-24 24-69 8-17 8-9 10-6 24-5 36 4 24 6 13 8 37 27 20 12 23 10 47 15 16 9 14 12 15 20 35 75 33 53 40 54 37 38 36 27 37 20 40 14 63 12 20 6 24 12 22 19 12 17 20 33 17 37 7 30 6 63 5 27 9 30 29 73 7 34 2 30-9 140-28 153-5 63 1 30 4 34 28 160 9 116-1 37-3 27-7 26-26 64-9 30-5 26-9 77-5 20-6 17-20 36-18 27-14 15-17 13-13 8-17 6-70 13-40 14-45 24-41 34-34 37-43 60-27 45-31 68-12 16-13 14-20 11-47 15-23 10-67 45-13 5z"/>
<path fill="#b2e1f7" d="M2395 2732l-17 1-13-3-13-6-9-9-7-13-22-74-12-26-14-24-16-24-24-27-50-54-30-29-33-27-37-22-36-17-104-42-26-13-20-13-31-28-56-68-33-36-40-35-40-28-37-21-40-16-43-12-57-11-73-12-40-5-40-1-94 4-23-2-20-6-17-11-13-17-53-107-17-26-17-22-23-25-29-27-52-43-36-26-46-26-55-21-49-13-70-12-26-7-78-35-89-29-33-13-20-11-8-10 1-7 3-4 10-8 14-6 33-13 89-29 74-34 27-8 77-12 45-13 55-21 46-26 36-26 52-43 29-27 23-25 17-22 17-26 53-107 13-17 17-11 20-6 23-2 94 4 40-1 40-5 73-12 57-11 43-12 41-17 39-22 40-29 40-35 33-36 53-65 31-28 20-13 26-13 104-42 36-17 38-23 36-29 78-81 22-26 17-24 13-24 12-26 22-74 7-13 6-7 9-6 10-3 14-2 40 5 20 6 13 8 37 29 20 12 26 11 44 12 20 12 12 13 9 13 35 80 47 73 40 51 20 20 25 20 38 23 37 15 27 7 53 7 23 6 20 10 22 18 13 17 20 33 10 20 7 17 6 27 6 69 4 27 9 29 22 48 9 27 6 30 2 30-10 140-30 153-4 33-2 30 2 30 4 34 24 120 6 40 10 120 0 33-4 27-7 26-27 64-9 26-5 30-7 77-5 20-7 17-35 60-13 15-17 13-13 7-17 6-70 11-40 12-23 11-23 13-24 17-20 17-36 42-47 68-23 41-29 67-11 16-14 13-16 9-44 12-26 11-20 12-37 29-13 8-17 5z"/>
<path fill="#b8e4f8" d="M2402 2728l-20 3-14-2-13-5-10-9-6-13-11-49-8-28-11-27-13-23-16-23-22-26-56-62-30-30-34-27-36-21-33-14-107-41-27-13-20-13-28-27-55-72-34-37-40-36-43-31-43-23-47-17-47-10-106-17-40-5-34-2-116 9-20-2-17-5-13-9-13-16-51-112-14-25-17-23-22-23-25-24-65-54-33-24-47-26-57-21-50-12-70-9-23-5-76-35-94-29-33-12-20-10-7-9 3-10 20-12 30-11 101-31 76-35 23-5 70-9 50-12 57-21 47-26 33-24 65-54 25-24 22-23 17-23 14-25 51-112 13-16 13-9 17-5 20-2 116 9 34-2 40-5 106-17 47-10 47-17 46-25 44-32 40-37 33-37 52-68 28-27 20-13 27-13 107-41 36-16 37-22 33-27 86-91 19-24 16-23 13-23 11-27 8-28 11-49 6-13 7-7 10-5 20-4 40 6 16 4 14 8 33 28 23 15 27 11 47 12 19 12 12 13 10 17 21 57 11 23 47 73 20 29 20 24 20 19 22 18 39 24 39 15 30 7 56 5 20 5 20 10 21 18 12 16 23 40 13 27 5 27 4 70 5 30 8 26 24 50 8 20 7 30 2 30-11 144-33 156-4 30-2 30 2 30 4 30 27 127 6 37 11 123 0 30-4 27-6 23-29 63-10 30-5 30-5 77-3 17-7 16-37 64-15 16-17 12-27 10-67 7-43 11-23 11-24 13-23 16-20 18-19 19-18 23-53 80-20 37-22 60-13 20-12 13-16 9-44 11-20 7-30 17-43 36-17 6z"/>
<path fill="#bde7f9" d="M2385 2729l-20-2-10-5-8-7-6-17-6-40-9-33-9-27-12-23-16-23-17-22-94-102-33-28-37-21-33-14-113-41-24-11-20-12-14-13-13-13-49-71-34-39-43-41-44-32-46-25-47-15-40-9-130-19-33-3-33 0-84 10-26 2-24-2-13-4-12-9-10-13-48-116-13-24-16-23-18-20-22-20-78-66-33-25-23-13-27-13-58-20-52-11-67-6-23-5-49-25-24-10-100-28-30-11-20-10-7-7 2-7 5-4 16-9 34-12 100-28 24-10 49-25 23-5 67-6 52-11 58-20 27-13 23-13 33-25 78-66 22-20 18-20 16-23 13-24 48-116 10-13 12-9 13-4 24-2 26 2 84 10 33 0 33-3 130-19 40-9 47-15 46-25 44-32 43-41 34-39 49-71 13-13 14-13 20-12 24-11 113-41 33-14 37-21 33-28 87-94 30-38 17-28 13-32 9-35 7-43 4-14 5-6 8-6 10-3 14-2 43 6 13 4 14 9 33 30 23 15 27 11 43 8 10 4 10 7 12 13 11 20 17 54 10 23 50 80 20 30 17 20 20 20 23 19 34 21 36 16 40 9 57 2 17 3 20 8 23 19 15 20 26 46 7 17 5 27 3 70 4 30 10 30 24 46 8 20 7 30 2 30-13 147-34 153-5 30-1 30 1 30 4 31 36 159 5 74 7 56 0 27-4 27-6 23-31 63-9 27-5 30-3 80-4 17-6 16-37 64-13 13-16 12-14 6-13 4-67 3-23 4-20 6-27 12-23 13-23 16-21 17-19 20-17 22-58 88-16 34-22 63-12 20-12 12-17 9-43 8-27 11-23 15-33 30-14 9-13 4z"/>
<path fill="#c3eaf9" d="M2395 2725l-13 2-14-1-10-4-9-7-5-13-5-44-7-33-8-27-13-26-13-20-16-22-101-112-33-26-35-20-33-14-115-38-23-10-20-12-15-13-12-13-47-73-33-41-47-45-46-34-44-23-46-15-34-6-76-9-77-11-30-2-27 1-103 15-20 0-17-4-11-7-10-13-45-119-14-26-14-22-16-18-20-18-93-79-30-21-23-14-24-10-60-20-53-10-67-4-20-4-66-32-39-13-95-25-23-10-9-8 0-4 6-6 16-8 30-10 75-19 32-10 24-10 33-18 16-7 20-4 67-4 55-10 60-20 25-12 23-14 27-19 93-79 20-18 16-18 14-22 14-26 45-119 10-13 11-7 17-4 20 0 103 15 27 1 30-2 77-11 76-9 34-6 46-15 44-23 46-34 47-45 33-41 47-73 12-13 15-13 20-12 23-10 115-38 33-14 39-22 32-28 96-106 25-34 16-30 11-30 6-31 8-55 3-7 9-7 20-5 47 6 13 4 13 9 31 31 23 16 30 11 43 7 10 4 10 7 11 14 9 16 17 61 20 39 50 80 17 23 23 26 27 22 36 23 39 16 21 6 20 3 57-1 17 2 23 10 20 17 10 13 28 50 8 17 4 27 1 73 4 30 10 30 25 43 9 20 6 27 3 30-1 20-7 53-5 74-38 158-5 32-2 26 2 30 4 30 39 160 5 77 7 53 1 27-4 27-7 23-9 20-23 40-10 30-4 30-1 80-3 13-5 17-37 63-15 17-17 11-23 8-63-1-40 7-44 18-23 14-23 16-24 22-21 25-65 102-17 34-17 61-9 16-11 14-10 7-10 4-40 6-26 9-27 17-34 33-9 7-14 5z"/>
<path fill="#c8edfa" d="M2385 2725l-10 1-13-4-10-6-5-8-4-53-6-33-12-37-16-30-21-27-103-117-31-26-36-20-33-13-120-37-27-12-16-11-12-10-11-14-41-68-34-45-49-49-26-21-24-17-43-22-46-14-34-6-87-8-77-12-30-1-26 2-70 15-27 4-20 0-17-3-11-8-9-13-39-117-13-27-15-23-14-17-17-16-55-45-50-44-25-18-23-13-25-11-34-12-33-9-53-9-64 0-20-4-46-25-20-9-37-11-70-16-30-9-20-8-9-7 0-4 6-5 13-7 40-12 60-14 40-11 27-11 46-25 20-4 64 0 53-9 33-9 34-12 25-11 23-13 25-18 50-44 55-45 17-16 14-17 15-23 13-27 39-117 9-13 11-8 17-3 20 0 27 4 70 15 26 2 30-1 77-12 87-8 34-6 46-14 43-22 24-17 26-21 49-49 34-45 41-68 11-14 12-10 16-11 27-12 120-37 33-13 36-20 31-26 103-117 24-31 14-29 11-34 6-33 4-53 4-7 7-6 20-5 57 10 13 8 34 36 23 15 30 11 43 5 10 4 8 5 10 14 10 20 14 56 8 20 9 17 68 109 23 27 29 24 41 25 40 16 20 4 20 3 57-4 17 1 20 8 20 17 10 13 30 54 7 16 4 30-1 74 3 25 10 28 26 43 9 20 7 27 3 30-1 20-9 53-4 74-41 160-5 30-2 26 2 30 5 30 41 160 5 77 8 57 1 23-4 27-7 23-8 17-26 43-10 27-3 30 0 83-3 17-5 13-36 63-13 14-17 12-10 4-13 3-63-4-20 2-20 4-24 8-23 11-23 13-24 17-23 21-22 25-68 110-15 34-14 56-10 20-10 14-8 5-10 4-40 4-26 8-17 10-13 9-40 41-10 4z"/>
<path fill="#cdf0fb" d="M2392 2722l-10 2-14-1-10-3-8-8-3-10 0-44-3-30-9-33-11-27-24-36-55-60-57-69-33-27-37-20-26-9-64-17-63-20-23-10-17-10-10-8-11-14-42-76-30-41-27-29-30-28-27-22-23-16-42-21-45-13-36-5-80-5-87-13-27-1-26 3-67 16-33 6-20 1-14-3-9-6-8-13-37-120-11-27-15-23-13-17-17-17-53-40-53-49-29-21-25-14-29-12-33-10-41-10-47-6-60 1-16-2-14-5-35-22-21-9-39-11-68-14-27-7-20-7-11-8 0-4 5-5 16-7 37-10 68-14 45-14 20-9 30-19 14-5 16-2 60 1 47-6 41-10 33-10 29-12 25-14 29-21 53-49 53-40 17-17 13-17 15-23 11-27 37-120 8-13 9-6 14-3 20 1 33 6 67 16 26 3 27-1 87-13 80-5 36-5 47-14 43-22 24-17 26-22 30-28 24-26 30-41 42-76 11-14 10-8 17-10 23-10 63-20 64-17 30-11 36-20 32-27 55-67 52-56 22-30 14-30 10-37 4-33 0-40 2-10 3-7 6-5 20-4 50 7 10 4 11 8 29 34 17 13 17 9 26 7 40 3 7 2 10 7 11 15 8 17 11 57 14 33 73 118 21 25 27 23 43 27 42 17 23 5 20 1 20-1 37-6 13 1 20 7 24 18 38 65 7 16 3 27-3 77 3 26 11 30 27 40 10 20 6 24 3 33-1 20-10 53-1 50-4 27-42 157-6 30-1 26 1 27 5 30 43 160 4 27 1 50 10 56 1 24-4 30-7 23-8 17-27 40-11 30-3 30 3 83-2 13-5 14-18 30-20 36-13 14-17 11-10 4-13 2-60-7-20 1-20 3-24 8-25 11-28 16-24 17-23 21-20 25-41 71-30 47-12 30-11 56-8 17-9 13-9 7-10 4-43 3-27 9-13 7-17 13-29 34-11 8-10 4z"/>
<path fill="#d3f3fc" d="M2385 2723l-10 0-13-3-8-5-4-7 2-50-4-34-9-39-14-30-22-30-58-63-37-49-15-18-32-27-39-20-27-9-60-13-67-20-23-9-20-11-10-10-8-11-35-72-14-22-16-23-27-29-33-33-27-23-26-18-41-20-43-12-40-5-80-2-93-15-27 0-27 3-63 19-37 7-16 2-14-3-9-7-6-10-33-127-11-27-14-22-13-16-16-15-58-43-53-50-27-20-26-15-29-12-31-9-51-11-46-5-57 4-16-1-14-7-30-19-23-11-43-11-87-18-30-10-8-5 0-4 5-4 20-7 36-10 65-12 45-13 20-9 30-19 14-7 16-1 57 4 46-5 51-11 31-9 29-12 26-15 27-20 53-50 58-43 16-15 13-16 14-22 11-27 33-127 6-10 9-7 14-3 16 2 37 7 63 19 27 3 27 0 93-15 80-2 40-5 43-12 41-20 26-18 27-23 33-33 27-29 16-23 14-22 35-72 8-11 10-10 20-11 23-9 67-20 63-14 27-10 37-19 16-13 17-15 53-68 61-67 18-26 13-30 8-37 4-33-2-50 8-10 20-5 27 6 27 3 6 3 8 6 16 21 13 15 17 14 16 9 27 8 43 0 10 5 6 5 10 13 9 20 7 53 4 17 8 15 31 48 29 53 16 27 20 24 24 20 48 30 42 17 23 4 23 1 20-2 37-8 13 0 20 7 22 17 7 10 15 31 16 25 6 11 3 23-5 84 3 30 5 16 7 14 28 38 10 18 6 24 3 33-1 20-11 50-1 53-3 27-45 153-6 27-2 23 0 30 6 34 47 163 3 27 1 53 11 50 1 20-3 33-6 24-10 18-28 38-7 14-5 16-3 30 5 87-1 13-5 14-19 29-19 37-11 11-17 12-13 5-10 1-60-11-20 0-24 4-23 7-25 11-29 17-26 19-23 21-17 22-42 75-32 50-11 30-7 53-9 20-10 13-6 5-10 5-43 0-27 8-16 9-17 14-13 15-16 21-8 6-6 3-27 3z"/>
<path fill="#d8f6fd" d="M2382 2722l-20-3-7-4-4-7-1-6 5-40-1-34-9-43-12-30-22-30-62-67-34-49-17-20-14-14-18-13-38-20-33-10-60-12-70-19-20-7-17-10-10-9-9-13-31-72-13-23-15-22-27-30-41-42-27-23-23-16-40-20-44-11-40-4-83 1-70-14-30-3-27 1-23 4-60 21-33 8-20 3-14-2-7-6-5-10-30-130-10-27-14-23-14-17-14-13-62-44-54-53-30-22-26-15-30-11-90-20-40-3-54 7-13 0-13-6-30-21-24-10-53-14-63-11-40-10-14-7 0-4 4-3 16-6 37-9 67-12 46-12 24-10 29-21 11-5 16-1 54 7 43-4 60-12 30-8 30-12 27-15 30-23 50-50 62-44 14-13 14-17 14-23 10-27 30-130 5-10 7-6 14-2 20 3 33 8 60 21 23 4 27 1 30-3 70-14 83 1 40-4 44-11 40-20 23-16 27-23 41-42 27-30 15-22 13-23 31-72 9-13 10-9 17-10 20-7 70-19 60-12 33-10 38-20 18-13 14-14 17-20 34-49 62-67 24-33 12-34 7-40 1-30-5-40 1-6 7-9 20-5 27 7 27 2 6 3 9 8 15 23 10 12 18 15 18 11 27 6 43-1 14 8 7 10 11 23 5 53 3 15 7 15 35 54 42 80 19 23 24 21 53 32 24 11 20 7 26 4 24 0 20-3 33-11 13 0 20 7 20 16 9 13 13 30 17 23 6 13 2 24-8 83 3 27 4 16 7 14 31 38 10 18 6 20 4 37-2 20-12 50 0 53-4 27-48 157-5 23-3 23 0 30 7 34 49 163 4 27 0 53 12 50 2 20-4 37-6 20-10 18-31 38-7 14-4 16-3 30 6 47 2 40-1 13-4 10-20 30-20 40-12 12-16 11-10 3-14 0-40-11-20-3-20 0-20 3-23 7-27 12-34 20-26 18-20 18-16 21-42 79-35 54-7 15-3 15-5 53-11 23-7 10-14 8-43-1-28 7-19 11-16 14-10 12-15 23-9 8-10 4-23 1z"/>
<path fill="#def9fd" d="M2388 2719l-10 2-16-3-7-5-3-5 7-43 0-33-7-47-13-33-21-30-64-67-36-55-16-21-15-14-19-13-36-18-32-9-62-9-73-19-20-7-17-10-8-8-7-10-28-76-13-24-14-20-23-28-53-55-24-21-23-16-20-11-20-9-43-10-40-3-64 5-23-1-20-3-50-11-33-3-27 1-23 5-57 23-40 11-17 2-10-2-8-8-3-10-7-43-19-93-9-24-12-20-12-15-14-15-18-13-51-32-16-15-34-37-33-26-27-14-30-11-97-19-40-2-50 10-13 0-10-5-33-24-24-10-56-13-60-9-44-11-10-5 0-4 4-3 16-5 40-9 63-9 51-13 23-11 30-22 10-5 13 0 50 10 40-2 100-20 29-11 28-15 30-24 48-51 53-33 18-13 14-15 14-17 10-18 9-24 19-93 7-43 3-10 8-8 10-2 17 2 40 11 57 23 23 5 27 1 33-3 50-11 20-3 23-1 64 5 40-3 43-10 20-9 20-11 23-16 24-21 53-55 23-28 14-20 13-24 28-76 7-10 8-8 17-10 20-7 73-19 62-9 32-9 36-18 19-13 15-14 16-21 36-55 66-70 21-30 12-33 6-47 0-30-7-43 3-5 7-5 16-3 27 8 23 1 7 1 10 9 13 24 10 13 19 17 18 10 13 5 17 2 43-4 7 3 7 5 5 9 11 23 1 53 4 17 5 13 37 54 30 63 13 24 19 23 21 18 60 37 24 10 20 6 26 4 24 0 20-5 33-13 10-2 10 2 10 4 23 19 6 10 14 32 19 24 5 17-2 50-8 53 1 17 3 17 5 13 8 13 29 33 11 17 6 17 4 40-2 20-13 50 0 53-3 27-25 80-27 80-6 23-3 24 2 30 6 30 28 83 25 80 3 27 0 53 13 50 2 20-4 40-6 17-11 17-31 36-8 13-5 17-2 30 7 47 4 43-1 13-4 10-20 28-17 39-9 9-20 15-14 3-10 0-36-14-24-5-20 0-20 2-23 7-23 10-41 23-30 20-18 17-15 20-13 23-30 63-37 54-5 13-4 17 0 50-5 13-11 20-8 7-7 3-43-4-17 2-13 5-18 10-19 17-10 13-13 24-7 6-10 4-23 1z"/>
<path fill="#e3fbfe" d="M2385 2719l-7 1-16-3-9-9 10-40 1-30-5-53-4-17-7-16-10-17-11-13-69-70-11-17-22-41-17-22-14-14-18-13-18-10-23-10-30-7-70-8-80-20-17-7-10-7-7-8-5-10-14-49-13-34-21-36-20-24-66-71-21-19-23-16-36-18-44-10-46-2-64 8-20 1-23-4-50-13-37-3-23 1-25 6-18 7-34 18-43 13-17 3-10-2-6-6-3-10-4-40-9-40-8-60-8-23-11-20-15-20-19-17-19-13-38-19-13-10-44-51-16-14-17-13-30-15-30-11-103-18-20-2-20 2-50 13-10 0-10-5-28-24-25-12-57-12-60-7-43-10-13-5 0-4 3-2 10-3 46-10 60-8 54-11 25-12 28-24 10-5 10 0 50 13 20 2 20-2 103-18 30-11 30-16 17-12 17-15 43-50 13-10 38-19 19-13 19-17 15-20 11-20 8-23 8-60 9-40 4-40 3-10 6-6 10-2 17 3 43 13 34 18 18 7 25 6 23 1 37-3 50-13 23-4 20 1 64 8 46-2 44-10 36-18 23-16 21-19 66-71 20-24 21-36 13-34 14-49 5-10 7-8 10-7 17-7 80-20 70-8 30-7 23-10 18-10 18-13 14-14 17-22 22-41 11-17 69-70 11-13 10-17 7-16 4-17 5-53-1-30-10-40 9-9 16-3 27 9 23 0 8 3 7 6 12 25 10 14 20 18 20 12 17 5 16 2 40-7 7 2 6 6 13 23 3 10-3 50 3 17 4 13 10 17 29 37 32 72 11 21 15 20 20 18 70 42 22 10 22 7 26 3 27-2 20-6 29-15 11-3 17 4 24 19 6 10 13 33 19 23 6 17-4 53-9 50 0 20 3 17 6 13 8 14 31 29 11 17 7 20 4 37-3 20-15 50 2 50-4 30-27 83-28 77-7 27-2 20 0 26 7 30 30 84 27 83 4 30-2 50 15 50 3 17-4 40-7 20-11 17-22 19-11 14-8 13-5 17-3 16 1 17 9 47 5 43-1 13-4 10-21 27-16 40-27 22-14 4-10-1-33-17-23-6-20-2-24 2-23 6-27 12-51 30-24 17-18 16-13 19-42 91-29 37-10 17-4 13-3 17 3 50-3 10-13 23-6 6-7 2-30-6-13-1-17 2-16 6-17 11-20 18-10 14-12 25-7 6-8 3-23 0z"/>
<path fill="#e8feff" d="M2382 2719l-20-3-8-8 12-36 3-30-3-60-4-18-6-16-11-16-11-14-59-55-13-15-11-16-19-44-17-24-16-16-17-12-21-11-23-9-33-7-63-3-40-11-44-8-16-6-10-6-7-7-6-10-17-71-10-26-14-24-16-21-80-88-20-19-20-14-37-17-40-9-27-1-26 1-64 12-20 1-20-3-53-16-20-3-20-1-23 3-20 5-20 8-40 24-47 14-17 0-5-5-2-10-2-43-9-40-1-40-3-20-7-23-11-21-16-22-20-18-22-13-38-17-14-9-10-10-32-44-14-13-18-13-32-17-30-10-60-9-50-9-20-1-20 2-17 5-30 11-10 1-7-3-28-27-12-7-16-6-57-11-57-6-46-9-13-4 0-4 3-2 13-3 43-8 60-7 57-11 25-12 28-27 7-3 10 1 30 11 17 5 20 2 20-1 50-9 60-9 30-10 32-17 18-13 14-13 32-44 10-10 14-9 38-17 22-13 20-18 16-22 11-21 7-23 3-20 1-40 9-40 2-43 2-10 5-5 17 0 47 14 40 24 20 8 20 5 23 3 20-1 20-3 53-16 20-3 20 1 64 12 26 1 27-1 40-9 37-17 20-14 20-19 80-88 16-21 14-24 10-26 17-71 6-10 7-7 10-6 16-6 44-8 40-11 63-3 33-7 23-9 21-11 17-12 16-16 17-24 19-44 11-16 13-15 62-59 11-14 9-16 6-16 3-17 3-60-3-27-12-36 8-8 16-3 27 11 10 0 13-2 7 2 8 10 9 23 9 13 21 20 20 13 16 6 17 1 17-2 20-7 6-1 11 7 14 27 2 6-6 50 1 17 4 13 10 17 24 27 9 13 31 79 10 20 14 17 16 15 84 49 20 9 20 6 30 2 26-3 20-8 27-17 10-3 17 4 23 18 6 9 11 33 7 10 13 13 6 17-5 53-12 50 0 20 2 17 7 17 8 12 34 28 12 16 6 17 5 40-4 20-13 35-3 15-1 13 4 37-4 30-16 42-12 41-32 80-7 24-2 20 1 26 6 27 34 87 12 41 16 42 4 30-4 37 1 13 3 15 13 35 3 17-4 43-6 17-12 16-26 20-10 10-8 14-5 16-3 17 1 20 12 47 6 46-1 10-4 10-22 27-11 33-4 7-29 22-10 2-10-1-30-19-23-9-23-2-24 1-23 6-23 10-65 37-22 15-16 15-12 16-9 18-31 79-9 13-24 27-10 17-4 13-1 17 6 50-2 6-14 27-11 7-6-1-20-7-17-2-17 1-16 6-20 13-21 20-9 13-9 23-8 10-7 2-13-2-10 0z"/>
<path fill="#edfffe" d="M2385 2716l-7 2-16-3-7-7 15-36 5-24-1-70-2-16-6-17-10-17-11-12-63-55-16-16-9-17-16-46-9-17-10-13-14-14-20-13-26-13-24-9-30-4-63 2-43-12-44-6-16-6-10-5-6-7-3-7-5-43-11-43-7-20-9-17-18-23-45-47-43-55-17-16-20-15-33-16-20-6-20-2-33-1-30 2-24 5-43 13-17 3-16-3-37-16-20-6-20-3-23 1-27 3-20 6-20 10-30 25-50 17-13 2-7-5-1-6 0-47-9-43 3-37-1-23-5-22-11-22-19-26-23-20-24-13-40-13-13-8-9-10-18-31-11-15-16-16-20-14-32-17-28-9-26-4-40-2-37-9-20-2-20 0-17 3-20 7-24 13-9 1-7-5-13-16-10-10-13-8-14-5-66-12-54-3-53-10-5-2 0-4 5-2 53-10 54-3 66-12 14-5 13-8 10-10 13-16 7-5 9 1 24 13 20 7 20 3 20 0 54-11 43-2 27-5 30-10 30-17 19-14 14-15 28-45 9-10 13-8 40-13 24-13 23-20 19-26 11-22 5-22 1-23-3-37 9-43 0-47 1-6 7-5 13 2 50 17 30 25 20 10 20 6 27 3 23 1 20-3 20-6 37-16 16-3 17 3 43 13 24 5 30 2 33-1 20-2 20-6 33-16 20-15 17-16 43-55 45-47 18-23 9-17 7-20 11-43 5-43 3-7 6-7 10-5 16-6 44-6 43-12 63 2 34-5 23-9 24-12 19-14 16-16 17-27 16-46 9-17 12-13 69-60 11-14 9-16 5-14 2-16 0-74-5-23-14-33 7-7 16-3 17 9 10 3 10 1 13-4 7 3 6 8 6 23 8 13 23 25 24 15 16 5 20 0 14-3 20-10 6-1 10 7 15 32-11 50 0 17 4 17 10 16 26 24 9 13 6 13 28 84 13 21 20 19 97 56 17 7 16 5 34 2 30-5 16-8 27-22 10-4 17 4 23 18 5 10 8 33 5 7 19 16 5 17-6 27-1 23-12 34-4 16-1 20 2 20 7 17 9 13 12 10 25 15 11 12 7 17 6 43-4 20-16 37-3 13 0 13 5 37-4 30-17 40-13 43-36 84-7 23-3 20 2 23 6 24 38 90 13 43 17 40 4 30-5 37 0 13 3 13 14 34 6 20-5 43-6 17-13 15-25 15-12 10-9 13-7 20-2 17 1 16 4 20 12 37 2 22 5 21-3 17-6 8-11 9-8 10-12 40-5 6-24 17-10 2-10-2-26-22-24-11-23-4-30 1-20 5-20 8-87 50-14 10-17 16-12 21-28 83-6 13-9 13-26 24-11 20-3 13 0 17 11 50-13 30-12 9-6-1-20-10-14-3-20 0-16 5-24 15-23 25-8 13-6 23-6 8-7 3-13-4-10 1-10 3z"/>
<path fill="#f0fef7" d="M2382 2716l-4 1-6-3-10 0-7-6 19-26 9-20 2-57 6-37-1-13-4-13-9-17-14-17-38-24-21-19-22-16-13-14-4-13-1-30-3-17-8-20-11-18-15-15-21-14-37-16-31-11-16-2-14 1-46 11-17 2-37-14-16-2-30 1-24-7-6-5-4-8 2-40-7-56-5-19-6-15-21-26-49-44-9-13-18-37-13-21-20-22-24-19-23-11-23-7-24-2-34 2-32 4-24 5-16 6-40 21-17 4-10-2-37-23-23-10-23-2-44 4-23 5-20 10-13 13-15 22-5 4-30 9-17 10-17 2-2-2 2-23 5-20 1-13-11-37 11-43 2-27-2-20-8-20-28-38-13-14-13-10-24-9-46-5-14-4-7-10-12-37-9-16-12-15-15-12-41-23-27-10-37-5-46 3-34-11-23-4-23 1-19 6-18 8-23 18-7 3-20-31-14-12-15-6-21-4-23-1-30-5-37-3-17 2-10-3-46-6 0-4 3-1 40-4 13-4 17 2 37-3 30-5 23-1 21-4 15-6 14-12 20-31 7 3 23 18 18 8 19 6 23 1 23-4 34-11 46 3 37-5 27-10 41-23 15-12 12-15 9-16 12-37 7-10 14-4 46-5 24-9 13-10 13-14 28-38 8-20 2-20-2-27-11-43 11-37-1-13-5-20-2-23 2-2 17 2 17 10 30 9 5 4 15 22 13 13 20 10 23 5 44 4 23-2 23-10 37-23 10-2 17 4 40 21 16 6 24 5 32 4 34 2 24-2 23-7 23-11 24-19 20-22 13-21 18-37 9-13 49-44 21-26 6-15 5-19 7-56-2-40 4-8 6-5 24-7 30 1 16-2 37-14 17 2 46 11 14 1 16-2 31-11 37-16 21-14 15-15 11-18 8-20 3-17 1-30 4-13 13-14 22-16 21-19 38-24 14-17 9-17 4-13 1-13-6-37-2-57-9-20-19-26 7-6 10 0 6-3 5 2 9 9 13 5 13 0 10-6 6 2 6 10-1 17 4 13 29 34 24 19 16 5 26 0 20-7 17-15 7 2 6 5 4 15 8 12 0 3-21 50-3 17 3 17 6 13 10 13 9 7 21 11 9 9 6 13 10 40 5 37 6 20 11 21 16 17 15 9 45 17 60 40 27 9 43 0 17-2 13-4 20-14 10-12 7-14 10-7 13 3 14 12 10 5 4 10 3 27 3 10 8 10 18 9 3 4 3 13-8 24-2 26-16 30-6 20-4 27 3 23 10 20 12 14 12 6 27 7 12 10 9 17 0 23 5 20-1 7-7 20-17 26-6 17 1 13 9 24 2 10-4 33-20 36-6 27-6 17-48 93-7 20-2 17 1 20 7 23 49 97 6 17 6 27 20 36 4 33-2 10-9 24 0 16 5 14 17 26 8 24-1 10-4 13 0 23-9 17-12 10-27 7-13 8-14 16-8 22-2 20 4 24 6 20 16 30 2 26 8 20-3 17-6 7-15 6-8 10-8 44-6 5-6 3-10 10-7 3-10 2-7-3-16-27-10-9-14-8-26-6-40 0-17 2-17 7-60 40-45 17-16 10-15 16-11 21-6 20-5 37-10 40-6 13-9 9-21 11-9 7-10 13-6 13-3 17 3 17 21 50 0 3-8 12-4 15-6 5-7 2-17-15-20-7-26 0-16 5-24 19-29 34-4 13 1 17-6 10-6 2-10-6-13 0-13 5z"/>
<path fill="#f1fcf2" d="M2382 2715l-4 2-6-4-10 0-7-5 21-26 9-20 2-57 8-37-1-13-3-13-9-19-14-15-12-10-31-17-20-18-23-16-11-12-5-13 2-30-3-20-7-20-13-20-13-14-21-13-56-23-20-6-27-1-46 14-14 3-10-2-16-9-14-4-16-2-27 2-30-9-6-6 4-47-8-63-7-24-9-13-12-13-54-47-8-13-17-39-13-21-23-27-24-18-26-12-27-5-27 0-56 7-34 9-45 26-18 5-10-3-40-27-21-9-22-1-54 6-20 5-16 10-14 15-11 19-5 6-27 7-20 12-13 4-4-1-1-5 2-23 6-17 1-13-2-10-10-27 14-43 3-27-2-20-6-17-10-16-21-29-14-14-13-10-13-6-14-4-50-2-10-4-5-8-11-37-7-17-12-16-15-11-50-29-23-8-40-4-43 5-30-11-30-5-20 1-20 7-20 10-21 18-6 2-17-30-14-12-16-8-23-4-23 0-17-4-17-2-33-2-17 3-13-5-42-4 0-4 2 0 40-4 13-5 17 3 33-2 17-2 17-4 23 0 23-4 16-8 14-12 17-30 6 2 21 18 20 10 20 7 20 1 30-5 30-11 43 5 40-4 23-8 50-29 15-11 12-16 7-17 11-37 5-8 10-4 50-2 14-4 13-6 13-10 14-14 21-29 10-16 6-17 2-20-3-27-14-43 10-27 2-10-1-13-6-17-2-23 1-5 4-1 13 4 20 12 27 7 5 6 11 19 14 15 16 10 20 5 54 6 22-1 21-9 40-27 10-3 18 5 45 26 34 9 56 7 27 0 27-5 26-12 24-18 23-27 13-21 17-39 8-13 54-47 12-13 9-13 7-24 8-63-4-47 6-6 30-9 27 2 16-2 14-4 16-9 10-2 14 3 46 14 27-1 20-6 56-23 21-13 13-14 13-20 7-20 3-20-2-30 5-13 11-12 23-16 20-18 31-17 12-10 14-15 9-19 3-13 1-13-8-37-2-57-9-20-21-26 7-5 10 0 6-4 14 12 13 6 13-1 10-7 6 2 5 10-2 17 5 14 29 36 14 12 10 7 17 4 26 0 10-3 10-4 17-16 7 1 5 5 4 17 7 9 2 4-2 7-10 15-13 32-2 16 2 14 7 15 8 11 14 10 21 9 9 11 15 54 3 33 4 20 11 23 18 19 17 9 43 14 60 42 13 6 17 4 47 0 16-3 14-5 10-6 10-9 7-11 7-16 9-6 13 2 14 14 10 4 4 9 2 13 0 17 3 10 7 8 17 6 3 3 3 3 3 13-10 24 1 20-2 6-18 30-6 20-4 27 2 23 9 20 16 17 13 7 27 4 11 9 9 17 0 23 6 20-1 7-9 20-17 26-6 17 1 13 9 20 3 14-4 33-20 33-7 34-7 16-12 20-38 74-6 16-3 17 2 20 6 20 39 77 12 20 7 16 7 34 20 33 4 33-3 14-9 20-1 15 6 15 16 23 10 27 0 6-5 17 0 23-9 17-11 9-27 4-17 10-14 17-8 23-1 24 7 30 5 13 13 20 4 10 0 23 10 24-3 13-6 6-13 4-8 7-6 11 0 19-4 20-6 4-6 2-14 14-13 2-6-2-3-4-8-18-6-9-10-9-14-8-26-6-44 0-16 3-14 5-63 44-45 15-17 10-16 17-11 23-4 20-3 33-15 54-9 11-21 9-14 10-8 11-7 15-2 14 2 16 13 32 10 15 2 7-2 4-7 9-4 17-5 5-7 1-17-16-10-4-10-3-26 0-16 3-11 8-14 12-29 36-5 14 2 17-5 10-6 2-10-7-13-1-13 6z"/>
<path fill="#f2fbec" d="M2378 2717l-6-4-10 0-7-5 24-30 7-16 3-57 9-37-3-26-10-20-15-17-14-10-28-13-21-20-22-14-13-13-4-13 3-30-2-20-8-24-12-20-14-13-20-13-80-31-30 1-57 19-6-1-34-15-20-2-23 3-30-9-6-9 6-40-5-33-1-30-7-28-20-25-57-48-7-12-14-37-13-23-23-28-26-22-27-13-27-5-26 1-64 8-30 9-46 29-17 5-11-4-39-29-20-8-20-2-60 7-20 6-17 11-10 11-16 29-30 8-17 12-17 3 2-28 7-17 1-13-3-14-10-23 14-37 6-33-1-20-8-20-38-52-23-19-27-8-50 0-10-4-4-7-16-55-10-15-16-13-50-29-24-8-43-5-43 7-30-13-30-4-24 1-16 6-20 11-21 20-6 2-16-32-17-13-14-6-23-4-23 1-34-7-33-1-17 2-13-4-41-4 1-4 40-4 13-4 17 2 33-1 34-7 23 1 23-4 14-6 17-13 16-32 6 2 21 20 20 11 16 6 24 1 30-4 30-13 43 7 43-5 24-8 50-29 16-13 10-15 16-55 4-7 10-4 50 0 27-8 23-19 38-52 8-20 1-20-6-33-14-37 10-23 3-14-1-13-7-17-2-28 17 3 17 12 30 8 16 29 10 11 17 11 20 6 60 7 20-2 20-8 39-29 11-4 17 5 46 29 30 9 64 8 26 1 27-5 27-13 26-22 23-28 13-23 14-37 7-12 57-48 20-25 7-28 1-30 5-33-6-40 6-9 30-9 23 3 20-2 34-15 6-1 57 19 30 1 80-31 20-13 14-13 12-20 8-24 2-20-3-30 4-13 13-13 22-14 21-20 28-13 14-10 15-17 10-20 3-26-9-37-3-57-7-16-24-30 7-5 10 0 6-4 14 13 13 6 13-2 10-7 6 2 5 10-3 20 5 13 28 34 26 22 17 4 30-2 16-7 17-17 7 1 5 5 3 17 9 13-27 54-2 16 2 14 6 16 11 14 13 8 23 9 8 9 15 54 1 36 4 20 11 24 16 16 18 10 44 12 60 44 13 7 17 4 50-1 30-7 13-8 10-10 7-11 4-16 9-6 13 3 13 13 11 4 3 6 2 16 0 17 3 10 9 10 19 7 5 16-10 24 1 20-2 6-17 27-7 18-6 32 2 23 11 24 13 14 17 8 27 3 10 8 9 17 0 23 6 20-10 27-19 26-6 17 2 13 10 20 3 14-4 33-21 33-6 30-6 17-53 97-9 33 1 20 7 20 54 100 6 17 6 30 21 33 4 33-3 14-10 20-2 13 6 17 19 26 10 24 0 6-6 17 0 23-9 17-10 8-27 3-17 8-16 18-9 23-1 17 3 23 8 27 15 21 5 12 0 23 10 24-3 13-5 6-16 4-7 7-5 13 0 17-4 20-12 6-13 13-13 3-5-2-15-31-13-12-14-8-26-5-47-1-17 3-13 6-63 46-44 12-20 11-14 15-11 24-4 20-1 36-15 54-8 9-23 9-13 8-11 14-6 16-2 14 2 16 27 54-9 13-3 17-5 5-7 1-17-17-16-7-30-2-17 4-26 22-28 34-5 13 3 20-5 10-6 2-10-7-13-2-13 6z"/>
<path fill="#f3fae7" d="M2378 2717l-6-5-10 1-6-5 13-13 18-30 3-60 11-40-3-24-10-20-16-19-11-7-33-15-19-18-24-16-12-11-4-13 4-30-1-23-9-24-11-19-14-14-20-12-83-32-17-1-13 2-33 14-24 7-6-1-20-11-14-4-20-2-23 3-30-8-5-9 7-40-5-33 0-33-7-27-19-23-61-50-6-10-14-43-11-21-26-31-26-22-27-12-27-4-23 1-73 11-27 9-42 28-18 7-9-3-41-31-20-9-20-2-63 8-20 7-15 10-12 15-13 27-24 5-13 6-10 8-17 4 2-25 8-20 1-13-3-14-11-23 15-33 8-37-1-20-5-18-40-55-24-20-26-9-54 2-10-4-4-9-12-52-10-16-14-12-56-32-24-8-46-4-40 8-30-14-30-4-20 1-20 7-23 12-19 20-5 2-15-32-15-13-14-7-26-4-23 1-34-6-36-2-14 3-13-5-40-3 0-4 40-3 13-5 14 3 36-2 34-6 23 1 26-4 14-7 15-13 15-32 5 2 19 20 23 12 20 7 20 1 30-4 30-14 40 8 46-4 24-8 56-32 14-12 10-16 12-52 4-9 10-4 54 2 26-9 24-20 40-55 5-18 1-20-8-37-15-33 11-23 3-14-1-13-8-20-2-25 17 4 10 8 13 6 24 5 13 27 12 15 15 10 20 7 63 8 20-2 20-9 41-31 9-3 18 7 42 28 27 9 73 11 23 1 27-4 27-12 26-22 26-31 11-21 14-43 6-10 61-50 19-23 7-27 0-33 5-33-7-40 5-9 30-8 23 3 20-2 14-4 20-11 6-1 24 7 33 14 13 2 17-1 83-32 20-12 14-14 11-19 9-24 1-23-4-30 4-13 12-11 24-16 19-18 33-15 11-7 16-19 10-20 3-24-11-40-3-60-18-30-13-13 6-5 10 1 6-5 14 14 13 5 13-1 10-8 5 2 5 10-3 20 5 13 13 14 14 20 18 17 10 7 17 3 30-2 16-6 17-18 3-1 8 6 4 17 9 13-29 54-3 16 3 17 7 17 11 12 13 8 21 6 9 7 5 13 3 20 7 24 1 36 4 24 11 22 16 18 20 10 44 10 26 18 34 27 13 7 17 4 56-2 27-7 20-17 8-14 4-16 8-6 13 3 12 13 12 5 3 5 2 16-2 17 3 10 10 11 20 6 5 16-11 24 2 20-4 10-15 20-7 15-8 38 1 23 10 24 16 16 18 8 23 0 14 9 9 17-1 23 7 20-10 27-20 26-7 17 2 13 11 20 3 14-3 30-22 36-10 44-56 99-7 17-3 17 1 17 6 20 43 81 14 22 7 20 5 27 22 36 3 30-3 14-11 20-2 13 7 17 20 26 9 24 1 6-7 17 1 23-9 17-14 9-23 0-18 8-16 16-11 27 0 23 9 37 4 10 15 20 5 10-1 23 11 24-3 13-5 6-17 3-8 8-5 13 2 17-2 16-3 5-14 6-10 12-13 3-7-4-10-28-13-14-13-8-24-6-53-2-17 3-13 6-37 29-26 18-44 10-23 13-15 17-10 24-3 20-1 36-7 20-3 24-4 10-7 9-24 7-15 10-11 14-6 16-2 17 3 13 29 54-9 13-4 17-8 6-3-1-17-18-16-6-30-2-17 3-10 7-18 17-14 20-13 14-5 13 3 20-5 10-5 2-10-8-13-1-13 5z"/>
<path fill="#f3f9e1" d="M2378 2716l-6-4-10 1-6-5 13-13 19-30 3-60 12-40-3-27-10-20-15-16-16-10-31-13-17-17-26-17-13-13-3-10 6-30 0-20-7-24-13-23-13-14-20-13-87-33-17-1-13 3-37 16-20 6-6-1-20-11-14-5-20-1-23 4-30-8-5-9 8-43-5-30 1-37-6-23-18-23-63-50-7-14-12-40-12-23-28-33-26-22-27-11-27-4-96 13-30 11-41 29-16 7-8-3-42-34-20-9-20-1-30 6-33 2-20 6-17 12-10 13-13 29-25 6-12 5-10 9-17 3 2-24 9-20 2-13-3-14-12-23 15-33 10-40-1-20-6-17-42-57-24-20-26-8-54 4-8-2-4-7-12-57-11-16-15-13-30-14-26-17-24-8-46-3-37 9-33-15-34-5-20 2-16 6-24 13-18 21-5 1-13-31-17-14-13-7-30-4-20 2-30-7-37-1-17 3-12-5-40-3 0-4 40-3 12-5 17 3 37-1 30-7 20 2 30-4 13-7 17-14 13-31 5 1 18 21 24 13 16 6 20 2 34-5 33-15 37 9 46-3 24-8 26-17 30-14 15-13 11-16 12-57 4-7 8-2 54 4 26-8 24-20 42-57 6-17 1-20-10-40-15-33 12-23 3-14-2-13-9-20-2-24 17 3 10 9 12 5 25 6 13 29 10 13 17 12 20 6 33 2 30 6 20-1 20-9 42-34 8-3 16 7 41 29 30 11 96 13 30-5 26-12 28-23 26-33 10-22 12-38 7-14 63-50 18-23 6-23-1-37 5-30-8-43 5-9 30-8 23 4 20-1 14-5 20-11 6-1 20 6 37 16 13 3 17-1 87-33 20-13 13-14 13-23 7-24 0-20-6-30 3-10 13-13 26-17 17-17 31-13 16-10 15-16 10-20 3-27-12-40-3-60-19-30-13-13 6-5 10 1 6-4 14 14 13 5 13-1 10-9 5 2 5 10-4 20 4 13 44 50 13 9 17 4 33-3 17-9 13-16 3-1 8 6 3 17 10 13-31 54-3 16 2 17 8 17 11 13 12 7 27 8 5 5 6 13 2 24 8 20-1 36 4 24 10 23 16 18 20 10 33 6 14 4 30 21 30 26 13 7 13 3 57-2 28-6 12-8 12-12 7-14 3-16 8-5 13 2 11 13 13 5 3 5 2 16-2 17 3 12 10 10 17 2 5 6 2 13-11 24 2 20-3 10-16 20-6 13-10 40 1 23 10 24 16 18 20 8 23-1 13 8 10 17-1 23 6 20-10 27-21 26-6 17 1 13 12 20 4 14-5 33-22 33-4 27-5 17-55 96-9 20-3 17 1 20 7 20 44 80 14 20 6 20 4 27 22 33 5 33-4 14-12 20-1 13 6 17 21 26 10 24 0 6-6 17 1 23-10 17-13 8-23-1-20 8-17 19-10 26 0 23 11 40 5 10 14 17 4 10-2 20 12 23-2 17-5 6-17 2-9 9-4 13 2 17-2 16-7 7-10 4-10 12-13 2-7-4-4-17-6-12-13-14-13-8-27-6-53-2-17 3-13 7-30 26-30 21-14 4-33 6-21 11-16 18-10 23-3 23 1 33-8 23-2 24-6 13-5 5-27 8-12 7-11 13-8 17-2 17 3 16 31 54-10 13-3 17-8 6-3-1-13-16-17-9-33-3-17 4-13 9-44 50-4 13 4 20-5 10-5 2-10-9-13-1-13 5z"/>
<path fill="#f4f8db" d="M2378 2716l-6-4-10 1-6-5 12-11 17-22 4-10 3-63 11-24 3-13-3-27-10-20-18-19-13-8-34-13-16-17-24-14-15-15-3-10 7-30 0-20-7-27-13-23-13-14-16-10-93-35-17-1-13 2-33 17-24 7-6 0-20-13-12-3-22-2-23 5-30-9-4-8 8-43-5-33 2-37-5-20-18-23-65-50-7-14-12-43-10-20-27-35-27-23-27-12-30-4-100 16-26 9-34 26-23 12-7-2-43-36-20-9-20-1-33 7-34 2-20 6-13 10-10 13-11 28-6 6-23 4-10 4-10 9-17 4 3-24 9-20 2-13-3-14-13-23 16-30 11-37 0-23-6-20-45-61-23-19-27-7-54 5-7-1-5-7-11-59-10-16-13-12-34-15-26-17-21-8-49-3-40 10-30-16-34-4-20 2-16 6-24 13-19 22-4 1-13-32-17-14-13-7-30-4-20 2-14-4-20-2-36-1-14 2-10-4-41-3 0-4 41-3 10-4 14 2 36-1 20-2 14-4 20 2 30-4 13-7 17-14 13-32 4 1 19 22 24 13 16 6 20 2 34-4 30-16 40 10 49-3 21-8 26-17 34-15 13-12 10-16 11-59 5-7 7-1 54 5 27-7 23-19 45-61 6-20 0-23-11-37-16-30 13-23 3-14-2-13-9-20-3-24 17 4 10 9 10 4 23 4 6 6 11 28 10 13 13 10 20 6 34 2 33 7 20-1 20-9 43-36 7-2 23 12 34 26 26 9 100 16 30-4 27-12 27-23 27-35 10-20 12-43 7-14 65-50 18-23 5-20-2-37 5-33-8-43 4-8 30-9 23 5 22-2 12-3 20-13 6 0 24 7 33 17 13 2 17-1 93-35 16-10 13-14 13-23 7-27 0-20-7-30 3-10 15-15 24-14 16-17 34-13 13-8 18-19 10-20 3-27-3-13-11-24-3-63-4-10-17-22-12-11 6-5 10 1 6-4 14 14 13 5 10 0 13-9 5 1 5 10-4 17 3 16 15 14 10 16 20 22 13 9 17 3 36-4 14-8 11-15 5-3 10 10 1 13 9 10 0 7-12 13-20 37-3 16 2 16 7 18 13 15 16 8 21 4 9 9 4 14 2 20 8 20-2 36 3 24 12 26 15 17 22 11 33 4 14 4 29 21 31 27 13 7 13 3 64-3 23-6 13-9 10-12 7-13 3-17 7-5 13 2 10 13 14 5 3 5 1 16-2 17 4 13 10 10 17 2 5 5 2 13-12 24 3 16-2 10-3 7-16 17-6 13-10 43 2 24 11 23 16 17 20 7 23-2 13 8 10 17-2 23 7 20-10 27-22 26-7 17 2 13 12 20 4 10 0 10-4 27-23 33-4 30-4 14-59 100-7 16-4 17 1 17 7 20 35 60 11 23 14 20 6 17 4 30 23 33 4 27 0 10-4 10-12 20-2 13 7 17 22 26 10 24 0 6-7 17 2 23-10 17-13 8-26-2-18 7-16 18-12 29 1 23 11 43 7 11 13 13 4 10-2 20 1 7 11 16-2 17-5 5-17 2-10 9-4 14 2 17-1 16-7 7-10 3-10 13-13 2-7-4-3-18-7-13-13-14-13-9-24-5-56-2-17 3-13 7-31 27-29 21-14 4-33 4-23 12-16 19-10 23-3 24 2 36-8 20-2 20-4 14-9 9-21 4-16 8-13 15-7 18-2 16 3 16 20 37 12 13 0 7-9 10-1 13-10 10-5-3-11-15-14-8-36-4-17 3-13 9-20 22-10 16-15 14-3 16 4 17-5 10-5 1-13-9-10 0-13 5z"/>
<path fill="#f4f7d5" d="M2378 2716l-5-4-11 0-6-4 12-10 18-23 4-10 3-60 12-27 3-13-2-27-10-20-19-20-15-9-34-12-16-18-24-13-15-14-2-10 8-27 1-23-8-29-14-24-13-14-17-10-93-35-17-1-13 3-33 18-24 8-6-1-17-11-13-5-24-3-23 6-30-8-4-8 10-40-6-36 3-37-6-23-19-24-65-48-6-12-10-43-10-22-30-38-27-23-27-11-30-4-23 3-40 11-40 4-27 11-30 25-23 13-6-2-44-38-17-9-20-2-33 8-37 2-20 6-16 13-11 16-7 24-6 6-16 1-17 6-10 10-17 4 4-27 9-17 2-13-3-14-13-23 15-27 13-40 1-23-6-20-48-65-20-17-27-7-57 7-10-4-10-61-8-16-15-14-33-15-30-19-20-7-54-3-36 10-27-15-37-6-20 2-16 6-24 14-19 23-4 1-7-22-6-11-17-15-13-6-30-4-20 3-14-5-20-2-36-1-14 3-8-4-42-3 0-4 42-3 8-4 14 3 36-1 20-2 14-5 20 3 30-4 13-6 17-15 6-11 7-22 4 1 19 23 24 14 16 6 20 2 37-6 27-15 36 10 54-3 20-7 30-19 33-15 15-14 8-16 10-61 10-4 57 7 27-7 20-17 48-65 6-20-1-23-13-40-15-27 13-23 3-14-2-13-9-17-4-27 17 4 10 10 17 6 16 1 6 6 7 24 11 16 16 13 20 6 37 2 33 8 20-2 17-9 44-38 6-2 23 13 30 25 27 11 40 4 40 11 23 3 30-4 27-11 27-23 30-38 10-22 10-43 6-12 65-48 19-24 6-23-3-37 6-36-10-40 4-8 30-8 23 6 24-3 13-5 17-11 6-1 24 8 33 18 13 3 17-1 93-35 17-10 13-14 14-24 8-29-1-23-8-27 2-10 15-14 24-13 16-18 34-12 15-9 19-20 10-20 2-27-3-13-12-27-3-60-4-10-18-23-12-10 6-4 11 0 5-4 13 14 17 7 10-2 10-9 5 1 5 10-5 17 3 16 16 15 10 16 20 22 13 10 13 2 42-5 12-7 11-16 5-3 10 10 0 13 10 10 0 7-13 13-21 37-3 13 1 17 8 20 12 14 16 10 24 3 9 9 4 10 1 24 8 20-3 36 4 27 10 24 17 18 23 11 33 3 10 3 31 21 33 30 13 6 13 3 64-3 23-6 13-9 10-11 7-13 3-20 7-5 13 2 10 14 14 5 3 4 1 16-3 17 4 13 11 11 17 1 6 8 1 10-13 24 3 16-2 10-5 10-14 14-5 10-12 46 2 24 12 26 17 16 20 7 23-3 13 7 10 17-3 23 8 20-11 27-22 26-7 17 1 13 14 20 3 10 1 10-4 27-22 30-3 10-2 20-5 17-16 23-13 27-31 50-8 20-3 16 2 17 6 17 34 56 13 27 14 20 7 20 3 27 24 33 4 27-1 10-3 10-14 20-1 13 7 17 22 26 10 24 0 10-7 13 3 23-10 17-13 7-26-3-20 9-17 19-11 28 1 22 12 45 6 10 14 13 5 10-3 20 1 7 11 16-2 17-4 5-18 2-9 7-5 16 3 17-1 16-7 7-10 2-10 14-13 2-7-5-2-16-4-12-14-16-13-9-23-6-64-3-13 3-13 6-33 30-31 21-10 3-33 3-13 5-13 8-15 17-9 23-4 27 3 36-8 20-1 24-4 10-9 9-24 3-16 10-12 14-8 20-1 17 3 13 21 37 13 13 0 7-10 10 0 13-10 10-5-3-11-16-12-7-42-5-13 2-13 10-20 22-10 16-16 15-3 16 5 17-5 10-5 1-10-9-10-2-17 7z"/>
<path fill="#f5f6d0" d="M2378 2716l-5-4-11 0-6-4 12-10 19-23 4-10 2-60 16-37 1-16-2-14-10-20-20-21-14-9-36-11-16-19-24-12-14-14-3-10 10-30 0-20-7-27-13-27-13-13-16-10-54-18-43-19-17-1-13 3-33 19-27 9-20-13-13-5-24-2-23 6-30-9-4-7 11-40-6-36 4-37-6-23-8-14-11-10-67-49-5-11-8-40-10-24-33-43-27-23-27-11-26-3-24 3-43 12-40 4-27 11-30 26-23 14-5-2-45-40-17-9-20-1-36 9-37 1-19 6-14 12-10 15-8 27-6 5-17 1-16 7-10 10-17 4 4-27 10-17 2-10-3-17-14-23 16-27 14-40 1-23-5-20-9-13-23-27-19-29-20-15-14-5-16-2-60 8-5-7-5-47-4-14-9-16-14-12-33-14-30-20-20-7-54-3-36 12-27-16-37-6-20 2-13 5-27 15-16 21-7 4-10-31-20-17-12-6-31-4-20 3-14-5-20-2-36-1-14 3-7-4-42-3 0-4 42-3 7-4 14 3 36-1 20-2 14-5 20 3 31-4 12-6 20-17 10-31 7 4 16 21 27 15 13 5 20 2 37-6 27-16 36 12 54-3 20-7 30-20 33-14 14-12 9-16 4-14 5-47 5-7 60 8 16-2 14-5 20-15 19-29 23-27 9-13 5-20-1-23-14-40-16-27 14-23 3-17-2-10-10-17-4-27 17 4 10 10 16 7 17 1 6 5 8 27 10 15 14 12 19 6 37 1 36 9 20-1 17-9 45-40 5-2 23 14 30 26 27 11 40 4 43 12 24 3 26-3 27-11 27-23 33-43 10-24 8-40 5-11 67-49 11-10 8-14 6-23-4-37 6-36-11-40 4-7 30-9 23 6 24-2 13-5 20-13 27 9 33 19 13 3 17-1 43-19 54-18 16-10 13-13 13-27 7-27 0-20-10-30 3-10 14-14 24-12 16-19 36-11 14-9 20-21 10-20 2-14-1-16-16-37-2-60-4-10-19-23-12-10 6-4 11 0 5-4 6 4 1 5 5 5 18 7 10-2 10-9 5 1 5 10-6 17 3 16 17 16 10 16 20 23 12 9 14 2 44-5 13-10 9-14 4-3 10 10 0 13 10 10 0 7-13 13-22 37-4 13 2 17 7 20 14 16 16 9 24 2 8 9 4 10 1 24 9 20-4 36 3 27 11 27 16 16 22 11 36 2 14 5 30 22 26 26 14 8 13 3 70-3 20-5 13-10 14-15 5-14 1-16 7-5 13 2 10 14 14 5 3 4 1 16-4 17 4 13 5 7 7 5 17 0 5 8 2 10-13 24 3 16-2 10-5 9-15 15-5 10-12 46 1 24 13 26 16 17 19 7 26-4 12 7 10 17-2 23 7 20 0 7-10 20-23 26-7 17 1 13 14 20 4 10 1 10-5 27-22 30-3 10-1 20-7 20-15 20-13 27-31 50-9 20-3 16 2 17 8 20 33 53 13 27 15 20 7 20 1 20 3 10 22 30 5 27-1 10-4 10-14 20-1 13 7 17 23 26 10 24-1 10-6 13 2 23-10 17-8 6-30-3-20 8-17 19-12 30 0 20 13 47 6 10 15 13 4 10-2 23 12 20-2 17-4 5-20 2-7 6-6 17 4 17-1 16-7 7-10 2-10 14-13 2-7-5-1-16-5-14-14-15-13-10-20-5-67-4-13 3-13 6-30 29-30 22-14 5-36 2-24 12-16 19-9 23-3 27 4 36-9 20-1 24-4 10-8 9-24 2-16 9-14 16-7 20-2 17 4 13 22 37 13 13 0 7-10 10 0 13-10 10-4-3-9-14-13-10-44-5-14 2-12 9-20 23-10 16-17 16-3 16 6 17-5 10-5 1-10-9-10-2-18 7-5 5-1 5z"/>
<path fill="#f5f4ca" d="M2378 2716l-4-4-12 0-6-4 13-10 18-23 5-9 2-61 17-37 1-16-2-14-12-22-20-21-13-8-33-9-20-21-24-12-14-13-2-10 9-27 2-23-8-31-13-26-14-13-16-10-50-15-34-17-16-5-27 3-33 20-27 10-20-14-13-5-24-2-23 7-30-9-3-7 11-40-6-36 5-37-6-23-8-14-10-10-69-50-5-10-8-43-10-23-34-45-26-22-24-10-30-4-24 4-43 13-43 4-27 12-25 24-25 16-9-6-41-38-17-8-20-2-36 10-37 0-20 7-13 11-10 15-9 29-5 5-18 1-15 6-10 11-17 4 4-27 11-17 2-10-3-17-15-23 16-23 16-44 2-23-6-20-11-17-22-23-19-30-21-17-14-4-16-2-60 10-5-7-6-60-9-17-15-13-35-14-27-19-23-8-54-3-33 13-30-17-37-6-20 2-16 6-24 14-17 22-6 4-10-32-20-17-10-5-33-5-20 4-13-6-21-1-36-1-14 3-6-4-42-3 0-4 42-3 6-4 14 3 36-1 21-1 13-6 20 4 33-5 10-5 20-17 10-32 6 4 17 22 24 14 16 6 20 2 37-6 30-17 33 13 54-3 23-8 27-19 35-14 15-13 9-17 6-60 5-7 60 10 16-2 14-4 21-17 19-30 22-23 11-17 6-20-2-23-16-44-16-23 15-23 3-17-2-10-11-17-4-27 17 4 10 11 15 6 18 1 5 5 9 29 10 15 13 11 20 7 37 0 36 10 20-2 17-8 41-38 9-6 25 16 25 24 27 12 43 4 43 13 24 4 30-4 24-10 26-22 34-45 10-23 8-43 5-10 69-50 10-10 8-14 6-23-5-37 6-36-11-40 3-7 30-9 23 7 24-2 13-5 20-14 27 10 33 20 27 3 16-5 34-17 50-15 16-10 14-13 13-26 8-31-2-23-9-27 2-10 14-13 24-12 20-21 33-9 13-8 20-21 12-22 2-14-1-16-17-37-2-61-5-9-18-23-13-10 6-4 12 0 4-4 6 4 1 6 5 4 18 8 14-4 6-8 4 1 6 10-6 17 2 16 18 16 10 18 20 22 10 8 16 3 44-6 10-6 16-21 10 10-1 13 10 10 1 7-13 12-23 38-4 13 1 17 9 23 11 13 19 10 24 2 8 8 4 10 1 24 8 23-5 33 4 27 10 27 16 18 24 11 36 1 14 5 29 21 27 28 14 8 13 3 70-4 20-5 13-9 14-16 6-15 0-16 7-5 13 2 10 15 10 1 7 7-2 6 2 10-3 17 3 13 10 11 7 2 13-1 5 8 2 10-14 24 4 16-2 10-5 9-14 11-6 11-14 49 1 20 13 30 17 18 20 7 26-5 12 7 10 17-3 23 8 20-1 7-9 20-25 26-7 17 2 13 15 20 4 10 1 10-5 27-23 30-3 10 0 20-6 17-17 23-10 23-36 57-8 17-3 16 3 17 8 20 36 57 10 23 17 23 6 17 0 20 3 10 23 30 5 27-1 10-4 10-15 20-2 13 7 17 25 26 10 24-1 10-7 13 3 23-10 17-12 7-26-5-20 7-17 18-13 32 0 21 13 47 6 10 15 13 5 10-3 23 13 20-2 17-4 5-13-1-7 2-8 7-5 17 3 17-2 10 2 6-7 7-10 1-10 15-13 2-7-5 0-16-5-14-15-17-13-9-20-5-67-4-13 2-13 6-31 31-29 21-14 5-36 1-26 13-14 16-10 27-4 27 5 33-8 23-1 24-4 10-8 8-24 2-19 10-11 13-9 23-1 17 4 13 23 38 13 12-1 7-10 10 1 13-10 10-16-21-10-6-44-6-16 3-10 8-20 22-10 18-18 16-2 16 6 17-6 10-4 1-6-8-14-4-18 8-5 4-1 6z"/>
<path fill="#f6f3c5" d="M2378 2716l-4-4-12 0-6-4 13-10 23-30 3-40-1-23 17-33 3-17-3-17-12-23-21-22-15-8-31-7-20-22-24-11-13-13-3-10 11-27 2-23-8-30-13-27-12-13-17-10-57-18-30-16-16-4-17 0-13 4-30 19-27 10-20-14-13-4-24-3-23 8-30-9-3-7 11-40-6-33 7-37-6-27-8-13-10-10-71-50-4-10-7-43-10-23-36-49-24-20-26-12-30-3-24 4-43 14-43 4-27 12-23 24-27 17-8-5-12-14-30-26-17-8-23-1-33 10-37 0-20 6-16 13-11 19-5 25-5 5-20 1-15 7-8 10-17 3 4-13 0-13 10-14 3-13-3-19-14-21 16-23 17-44 2-23-6-20-10-17-23-23-19-31-20-16-13-6-17-2-63 12-4-7-6-62-10-18-14-11-36-14-25-18-25-10-54-2-13 4-20 10-30-18-40-6-27 5-26 15-10 9-11 16-6 3-10-32-20-17-10-5-33-4-20 4-14-6-46-3-24 4-6-4-41-3 0-4 41-3 6-4 24 4 46-3 14-6 20 4 33-4 10-5 20-17 10-32 6 3 11 16 10 9 26 15 27 5 40-6 30-18 20 10 13 4 54-2 25-10 25-18 36-14 14-11 10-18 6-62 4-7 63 12 17-2 13-6 20-16 19-31 23-23 10-17 6-20-2-23-17-44-16-23 14-21 3-19-3-13-10-14 0-13-4-13 17 3 8 10 15 7 20 1 5 5 5 25 11 19 16 13 20 6 37 0 33 10 23-1 17-8 30-26 12-14 8-5 27 17 23 24 27 12 43 4 43 14 24 4 30-3 26-12 24-20 36-49 10-23 7-43 4-10 71-50 10-10 8-13 6-27-7-37 6-33-11-40 3-7 30-9 23 8 24-3 13-4 20-14 27 10 30 19 13 4 17 0 16-4 30-16 57-18 17-10 12-13 13-27 8-30-2-23-11-27 3-10 13-13 24-11 20-22 31-7 15-8 21-22 12-23 3-17-3-17-17-33 1-23-3-40-23-30-13-10 6-4 12 0 4-4 6 4 1 6 4 4 19 8 10-2 10-10 4 1 6 10-7 17 3 16 5 7 10 7 13 20 20 23 10 8 16 3 44-6 10-7 16-21 10 10-1 13 10 10 1 7-12 10-26 40-4 13 2 17 9 23 11 14 17 9 27 2 8 8 4 10 0 24 9 23-6 33 4 30 10 27 16 17 25 11 36 0 10 3 32 22 28 30 14 8 13 3 73-5 20-6 14-10 12-16 5-14-1-16 4-4 16 2 10 14 10 1 7 7-2 6 2 14-4 13 3 13 11 12 7 2 13-2 5 8 1 10-14 24 5 16-4 14-18 16-5 10-15 50 2 24 13 29 18 17 19 6 26-5 12 6 10 17-3 26 7 10 1 7-1 7-10 20-25 26-7 17 3 17 15 16 3 10 1 10-4 27-24 30-3 30-5 17-16 21-12 25-35 54-9 20-3 16 2 17 8 20 37 57 12 25 16 21 5 17 3 30 24 30 4 27-1 10-3 10-15 16-3 17 7 17 25 26 11 24-1 10-5 6-2 7 3 23-10 17-12 6-26-5-20 6-17 17-14 33-1 20 15 51 5 9 15 12 6 11-4 23 14 20-2 17-7 5-7-2-10 2-9 8-5 17 4 13-2 14 2 6-7 7-10 1-10 14-13 2-7-4 1-16-5-14-12-16-17-12-17-4-70-5-13 2-13 6-32 33-32 22-10 3-36 0-14 5-13 8-16 18-8 24-4 30 6 33-9 23 0 24-4 10-8 8-27 2-17 9-11 14-9 23-2 17 4 13 26 40 12 10-1 7-10 10 1 13-10 10-16-21-10-7-44-6-16 3-10 8-20 23-13 20-10 7-5 7-3 16 7 17-6 10-4 1-10-10-10-2-19 8-4 4-1 6z"/>
<path fill="#f6f2bf" d="M2378 2716l-3-4-13 0-6-4 14-10 22-30 2-10-1-16 3-14-1-23 18-33 2-17-2-17-12-23-22-23-14-8-33-7-17-19-27-14-15-16-1-6 13-30 1-20-8-33-13-27-10-10-17-11-60-18-30-17-16-4-17 0-13 4-30 21-27 10-20-14-11-5-26-3-23 8-30-8-3-7 12-40-6-33 7-37-4-26-8-14-10-10-73-50-4-10-6-43-8-21-37-50-27-25-26-11-30-2-27 5-40 14-43 4-27 12-23 24-27 18-47-44-20-11-23-1-33 11-24-1-16 1-20 8-14 11-10 18-6 27-4 5-16 0-17 6-10 12-17 3 4-13 1-13 9-14 4-13-4-20-14-20 17-23 18-44 2-23-6-20-10-17-24-23-20-34-20-16-13-5-17-1-63 13-4-4-5-66-9-17-16-13-33-11-27-20-26-10-54-2-13 4-20 10-30-18-40-5-27 4-26 15-10 9-11 17-6 3-5-23-5-10-20-17-10-4-33-5-20 4-14-5-43-3-17 0-10 3-6-3-40-3 0-4 40-3 6-3 10 3 17 0 43-3 14-5 20 4 33-5 10-4 20-17 5-10 5-23 6 3 11 17 10 9 26 15 27 4 40-5 30-18 20 10 13 4 54-2 26-10 27-20 33-11 16-13 9-17 5-66 4-4 63 13 17-1 13-5 20-16 20-34 24-23 10-17 6-20-2-23-18-44-17-23 14-20 4-20-4-13-9-14-1-13-4-13 17 3 10 12 17 6 16 0 4 5 6 27 10 18 14 11 20 8 16 1 24-1 33 11 23-1 20-11 47-44 27 18 23 24 27 12 43 4 40 14 27 5 30-2 26-11 27-25 37-50 8-21 6-43 4-10 73-50 10-10 8-14 4-26-7-37 6-33-12-40 3-7 30-8 23 8 26-3 11-5 20-14 27 10 30 21 13 4 17 0 16-4 30-17 60-18 17-11 10-10 13-27 8-33-1-20-13-30 1-6 15-16 27-14 17-19 33-7 14-8 22-23 12-23 2-17-2-17-18-33 1-23-3-14 1-16-2-10-22-30-14-10 6-4 13 0 3-4 6 4 4 10 20 8 10-2 10-10 4 1 6 10-7 17 2 16 5 7 13 10 11 18 20 24 10 7 16 3 44-6 10-7 16-22 10 10-1 13 10 10 1 7-13 10-7 14-19 26-4 13 1 17 9 23 14 17 19 8 24 0 7 8 5 14-1 20 9 23-6 33 3 30 9 26 17 18 13 8 14 4 33-1 13 3 31 22 29 32 10 6 14 4 76-4 20-6 14-11 13-18 4-13-1-16 4-3 16 1 10 14 10 1 7 7-2 6 2 14-4 13 2 13 5 8 7 4 7 2 13-1 5 7 1 10-14 24 0 6 4 10-3 14-19 16-4 7-16 53 0 20 15 34 18 17 20 7 26-7 12 6 10 17-3 26 7 10 1 7-1 7-10 20-26 26-7 17 3 17 15 16 5 14-4 33-25 30-2 30-6 17-15 20-13 26-37 57-8 17-3 16 2 17 9 20 37 57 13 26 15 20 6 17 2 30 25 30 4 33-5 14-15 16-3 17 7 17 26 26 11 24-1 10-7 10 3 26-10 17-12 6-26-7-22 8-11 10-7 10-13 33 0 17 16 53 4 7 16 12 6 11 0 7-4 10 0 6 14 20-1 14-5 7-17-1-7 4-6 6-4 17 4 13-2 14 2 6-7 7-10 1-10 14-13 2-7-4 1-16-4-14-13-17-17-12-17-5-73-4-13 2-14 8-29 32-31 22-13 3-33-1-14 4-14 8-16 18-9 26-3 30 6 33-9 23 1 20-5 14-7 8-24 0-19 8-14 17-9 23-1 17 4 13 19 26 7 14 13 10-1 7-10 10 1 13-10 10-16-22-10-7-44-6-16 3-10 7-20 24-11 18-13 10-5 7-2 16 7 17-6 10-4 1-10-10-10-2-20 8-4 10z"/>
<path fill="#f7f0b9" d="M2378 2716l-3-4-13 0-6-4 14-10 23-30 2-10-2-16 3-14-1-23 19-33 3-17-2-17-12-23-22-23-16-9-33-6-17-20-27-13-15-16 0-6 13-30 2-20-10-38-13-25-10-11-17-9-56-16-34-18-16-5-17 0-13 4-30 22-27 11-20-15-10-4-27-3-23 8-30-8-3-3 0-4 13-40-6-33 8-37-1-13-4-16-17-21-40-29-34-21-5-10-5-43-8-23-41-56-24-20-26-11-30-2-27 6-40 15-47 4-26 13-21 24-26 18-47-46-20-11-23 0-33 12-24-3-16 2-20 7-14 11-13 27-4 23-3 2-16-1-15 6-5 3-7 10-16 3 0-6 4-7 0-13 10-14 4-13-4-20-15-20 18-23 18-44 3-23-5-20-11-17-24-23-22-37-20-15-17-5-16-1-60 14-3-3-5-66-8-17-14-13-14-7-23-5-27-20-26-10-56-2-11 4-20 11-30-19-40-5-27 4-26 16-10 8-11 18-6 3-5-23-4-10-21-18-10-4-33-4-20 4-10-5-24-3-40 0-10 3-6-4-39-2 0-4 39-2 6-4 10 3 40 0 24-3 10-5 20 4 33-4 10-4 21-18 4-10 5-23 6 3 11 18 10 8 26 16 27 4 40-5 30-19 20 11 11 4 56-2 26-10 27-20 23-5 14-7 14-13 8-17 5-66 3-3 60 14 16-1 17-5 20-15 22-37 24-23 11-17 5-20-3-23-18-44-18-23 15-20 4-20-4-13-10-14 0-13-4-7 0-6 16 3 7 10 5 3 15 6 16-1 3 2 4 23 13 27 14 11 20 7 16 2 24-3 33 12 23 0 20-11 47-46 26 18 21 24 26 13 47 4 40 15 27 6 30-2 26-11 24-20 41-56 8-23 5-43 5-10 34-21 40-29 17-21 4-16 1-13-8-37 6-33-13-40 0-4 3-3 30-8 23 8 27-3 10-4 20-15 27 11 30 22 13 4 17 0 16-5 34-18 56-16 17-9 10-11 13-25 10-38-2-20-13-30 0-6 15-16 27-13 17-20 33-6 16-9 22-23 12-23 2-17-3-17-19-33 1-23-3-14 2-16-2-10-23-30-14-10 6-4 13 0 3-4 6 4 4 10 20 9 10-2 10-10 4 0 6 10-8 17 2 16 5 7 14 10 9 17 22 26 10 7 14 3 46-7 10-6 16-23 10 10-2 13 5 7 6 3 0 7-12 10-7 13-20 27-4 13 1 17 10 25 13 16 20 8 24 0 7 7 4 14-1 20 10 23-7 33 3 33 10 26 17 18 27 11 33-2 13 3 30 22 30 33 10 6 14 4 80-6 16-5 14-10 13-18 5-15-1-16 3-3 16 1 10 15 10 0 7 7-2 6 2 14-5 13 2 13 6 9 7 4 20 0 5 7 1 10-15 24 0 6 5 10-3 14-20 16-4 7-16 53 0 22 17 35 17 16 10 4 13 2 23-8 12 6 10 17-4 26 9 14-1 10-6 7-4 13-27 26-7 17 3 17 15 15 4 8 2 10-3 27-9 14-18 19-2 30-5 17-16 20-14 30-36 53-8 17-3 16 2 17 7 17 38 56 14 30 16 20 5 17 2 30 18 19 9 14 3 27-2 10-4 8-15 15-3 17 7 17 27 26 11 24-1 10-8 10 4 26-10 17-12 6-23-8-13 2-10 4-10 8-9 11-15 34 0 20 16 53 4 7 17 13 6 10 0 7-5 10 0 6 15 20-1 14-5 7-17-1-13 9-5 18 5 13-2 14 2 6-7 7-10 0-10 15-13 2-6-4 1-16-4-14-14-19-14-11-16-4-44-2-33-4-13 3-14 7-30 33-30 22-13 3-33-2-15 4-15 10-15 17-9 24-3 33 7 33-10 23 1 20-4 14-7 7-24 0-20 8-13 16-10 25-1 17 4 13 20 27 7 13 12 10 0 7-6 3-5 7 2 13-10 10-16-23-10-6-46-7-14 3-10 7-22 26-9 17-14 10-5 7-2 16 8 17-6 10-4 0-10-10-10-2-20 9-4 10z"/>
<path fill="#f7efb2" d="M2378 2715l-3-4-13 1-6-4 15-10 23-30 2-10-3-16 4-14-2-23 3-7 14-16 4-10 3-17-2-17-12-23-23-25-17-8-33-6-18-21-26-12-15-15 0-6 15-30 2-17-8-36-15-31-9-10-16-10-64-17-30-18-16-5-17 0-13 4-30 23-27 12-20-16-10-4-27-3-23 9-10-5-13 0-7-3-3-3 0-4 14-40-7-33 9-37 0-13-5-17-15-20-42-30-28-14-9-9-6-50-8-23-41-57-26-23-23-9-30-3-30 6-40 17-47 3-26 14-22 25-25 18-47-47-18-11-25-1-33 13-27-3-17 2-20 8-13 14-10 21-5 26-18 1-16 6-11 12-15 4-1-6 4-10-1-7 14-20 1-10-4-20-15-20 17-21 21-46 3-23-5-20-10-17-29-26-18-34-20-16-15-6-17-1-63 16-3-3 0-23-3-43-8-17-16-15-14-6-23-5-27-21-26-9-57-2-10 4-20 12-30-20-40-5-27 4-27 16-9 8-11 19-6 2-3-19-6-13-21-18-10-5-33-4-20 5-8-5-9-2-53-1-14 3-6-4-38-2 0-4 38-2 6-4 10 3 37 0 27-3 10-5 20 5 33-4 10-5 21-18 6-13 3-19 6 2 11 19 9 8 27 16 27 4 40-5 30-20 20 12 10 4 57-2 26-9 27-21 23-5 14-6 16-15 8-17 3-43 0-23 3-3 63 16 17-1 15-6 20-16 18-34 29-26 10-17 5-20-3-23-21-46-17-21 15-20 4-20-1-10-14-20 1-7-4-10 1-6 15 4 11 12 16 6 18 1 5 26 10 21 13 14 20 8 17 2 27-3 33 13 25-1 18-11 47-47 25 18 22 25 26 14 47 3 40 17 30 6 30-3 23-9 26-23 41-57 8-23 6-50 9-9 28-14 42-30 15-20 5-17 0-13-9-37 7-33-14-40 0-4 3-3 7-3 13 0 10-5 23 9 27-3 10-4 20-16 27 12 30 23 13 4 17 0 16-5 30-18 64-17 16-10 9-10 15-31 8-36-2-17-15-30 0-6 15-15 26-12 18-21 33-6 17-8 23-25 12-23 2-17-3-17-4-10-14-16-3-7 2-23-4-14 3-16-2-10-23-30-15-10 6-4 13 1 3-4 5 3 4 10 21 9 10-2 10-10 4 0 6 10-6 10-3 10 3 14 4 6 15 10 8 17 10 10 13 17 10 7 13 3 20-5 28-2 15-14 10-16 10 10-2 13 5 7 6 3 0 7-13 10-6 13-20 23-5 14 0 16 9 27 13 17 21 10 26-1 7 7 4 14-1 20 9 20-1 13-6 23 4 37 9 23 15 17 13 8 17 5 13 0 20-4 13 4 30 22 30 34 10 6 14 3 36-4 44-1 16-5 14-11 15-20 3-14-1-16 3-3 16 1 10 15 10 0 7 7-3 6 3 14-5 13 2 13 6 10 7 4 20-1 5 7 1 10-15 24 0 6 5 10-4 14-19 15-5 8-16 53 0 20 15 35 9 12 9 7 22 6 26-9 11 6 11 17-4 26 7 10 2 10-11 24-28 26-7 17 3 17 14 13 6 10 2 10-3 13-1 14-8 14-18 19-2 7 1 20-6 20-17 20-14 30-36 53-8 17-4 16 2 17 8 17 38 56 14 30 17 20 6 20-1 20 2 7 18 19 8 14 1 14 3 13-2 10-6 10-14 13-3 17 7 17 28 26 11 24-2 10-7 10 4 26-11 17-7 5-7 1-13-7-14-2-20 8-16 17-16 38 1 17 16 53 7 10 15 10 5 10 1 7-5 10 0 6 15 20-1 14-5 7-17-2-13 9-5 19 5 13-3 14 3 6-7 7-10 0-10 15-13 2-6-4 1-16-3-14-15-20-14-11-16-5-47-1-30-4-13 2-14 7-30 34-30 22-13 4-20-4-13 0-17 5-13 8-15 17-9 23-4 37 6 23 1 13-9 20 1 20-4 14-7 7-26-1-21 10-13 17-9 27 0 16 5 14 20 23 6 13 13 10 0 7-6 3-5 7 2 13-10 10-10-16-15-14-28-2-20-5-13 3-10 7-13 17-10 10-8 17-15 10-4 6-3 14 3 10 6 10-6 10-4 0-10-10-10-2-21 9-4 10z"/>
<path fill="#f8eeac" d="M2378 2715l-3-4-13 1-6-4 15-10 23-30 2-10-2-16 3-14-1-23 2-6 13-14 6-13 3-17-2-18-11-22-25-27-17-7-33-5-17-21-27-12-12-11-4-7 16-30 3-23-10-40-13-26-10-10-13-8-67-18-30-19-16-5-17 1-13 4-10 6-20 18-27 11-20-16-10-3-27-4-23 10-9-5-14 0-7-3-3-3 0-4 15-40-8-36 11-34 0-13-5-17-7-11-10-10-43-30-27-14-9-8-4-50-8-23-42-60-23-21-27-12-30-1-30 6-40 18-47 3-26 13-23 27-24 17-6-4-11-14-30-30-16-10-14-2-13 1-33 13-27-3-17 2-20 8-13 13-10 22-5 27-18 0-17 7-10 12-15 4-1-6 5-10-2-7 12-17 4-13-4-20-16-20 18-20 22-47 3-23-6-22-12-18-27-23-19-37-9-8-13-8-17-5-16 0-27 10-33 7-3-3 1-20-2-46-10-19-16-15-14-5-23-5-24-20-26-10-60-1-10 3-20 12-30-20-40-5-27 4-28 17-8 8-11 19-6 2-3-21-5-11-22-19-10-4-37-4-16 5-7-5-10-2-53-2-14 4-6-4-37-2 0-4 37-2 6-4 10 3 40 0 24-2 10-6 16 5 37-4 10-4 22-19 5-11 3-21 6 2 11 19 8 8 28 17 27 4 40-5 30-20 20 12 10 3 60-1 26-10 24-20 23-5 14-5 16-15 10-19 2-46-1-20 3-3 33 7 27 10 16 0 17-5 13-8 9-8 19-37 27-23 12-18 6-22-3-23-22-47-18-20 16-20 4-20-4-13-12-17 2-7-5-10 1-6 15 4 10 12 17 7 18 0 5 27 10 22 13 13 20 8 17 2 27-3 33 13 13 1 14-2 16-10 30-30 11-14 6-4 24 17 23 27 26 13 47 3 40 18 30 6 30-1 27-12 23-21 42-60 8-23 4-50 9-8 27-14 43-30 10-10 7-11 5-17 0-13-11-34 8-36-15-40 0-4 3-3 7-3 14 0 9-5 23 10 27-4 10-3 20-16 27 11 20 18 10 6 13 4 17 1 16-5 30-19 67-18 13-8 10-10 13-26 10-40-3-23-16-30 4-7 12-11 27-12 17-21 33-5 17-7 25-27 11-22 2-18-3-17-6-13-13-14-2-6 1-23-3-14 2-16-2-10-23-30-15-10 6-4 13 1 3-4 5 3 4 10 21 10 10-3 10-10 4 0 6 10-6 9-3 11 3 16 6 7 13 7 7 17 11 10 13 18 10 7 13 3 17-4 20-1 13-3 16-17 7-13 10 10-2 13 4 7 7 3 0 7-14 10-6 13-20 23-6 14 0 16 11 28 13 18 20 8 27-1 6 7 5 14-1 22 9 18 0 10-9 26 4 37 9 24 17 18 14 8 16 4 13 0 20-4 10 1 33 24 30 35 10 6 14 4 36-6 47-1 17-6 13-12 13-18 3-14-2-16 3-3 16 1 10 15 4 2 6-1 7 6-3 6 2 14-5 13 3 15 6 8 7 5 7 1 13-3 5 7 1 10 0 4-16 20 0 6 6 10-4 14-19 14-6 9-4 20-12 33-1 20 17 37 16 17 20 7 14-2 13-8 7 1 7 5 10 17-4 26 8 10 2 10-9 14-3 10-28 26-7 17 3 17 14 13 7 10 2 10-4 13 0 14-8 13-19 20-2 7 1 20-6 20-16 20-12 26-40 57-8 17-3 16 2 17 8 17 41 60 12 26 16 20 6 20-1 20 2 7 19 20 8 13 0 14 4 13-2 10-7 10-14 13-3 17 7 17 28 26 3 10 9 14-2 10-8 10 4 26-10 17-7 5-7 1-13-8-14-2-20 7-16 17-17 38 1 19 18 56 5 7 16 10 5 10 1 7-6 10 0 6 16 20-3 17-6 5-7-3-10 0-10 8-5 10-1 10 5 13-2 14 3 6-7 6-6-1-4 2-10 15-13 2-6-4 2-16-3-14-16-22-14-10-13-4-50-2-30-5-13 2-14 8-30 35-33 24-10 1-20-4-13 0-17 5-16 9-15 17-8 26-4 34 9 26 0 10-9 18 1 22-5 14-6 7-27-1-20 8-13 18-11 28 0 16 6 14 20 23 6 13 14 10 0 7-7 3-4 7 2 13-10 10-7-13-16-17-13-3-20-1-17-4-13 3-10 7-13 18-11 10-7 17-13 7-6 7-3 16 3 11 6 9-6 10-4 0-10-10-10-3-21 10-4 10z"/>
<path fill="#f8eca5" d="M2378 2715l-3-4-13 0-6-3 15-10 24-30 2-10-3-16 4-14-2-23 21-30 5-20-2-17-11-23-27-28-17-8-20 0-13-4-17-21-10-6-13-3-16-13-3-7 16-30 4-20-11-46-12-24-12-12-13-7-63-15-34-22-16-5-17 1-17 6-26 23-27 12-20-16-10-4-27-3-23 9-8-4-22-3-3-3 1-4 15-40-8-36 11-34 0-13-4-17-8-13-11-10-23-14-20-15-27-14-8-7-5-53-6-20-44-63-23-22-27-11-30-1-30 7-40 19-33 0-17 3-26 14-17 24-27 20-6-4-11-15-16-15-14-16-16-10-14-2-13 2-33 14-27-4-20 3-18 7-13 13-11 27-3 23-18 0-17 6-10 13-14 4-2-6 5-10-2-7 13-17 4-13-4-20-16-20 17-20 23-47 4-20-5-23-13-20-28-23-19-38-20-16-16-5-17-1-30 11-33 8-3-3 2-20-3-49-8-17-15-14-15-6-25-4-23-21-27-10-60-1-10 3-20 13-3 0-14-14-11-6-42-6-27 4-16 12-14 6-6 7-14 22-4-2-2-20-4-10-20-18-11-5-39-4-16 5-7-5-10-2-53-2-14 4-6-4-32-2 0-4 32-2 6-4 10 4 40-1 24-2 10-6 16 5 39-4 11-5 20-18 4-10 2-20 4-2 14 22 6 7 14 6 16 12 27 4 42-6 11-6 14-14 3 0 20 13 10 3 60-1 27-10 23-21 25-4 15-6 15-14 8-17 3-49-2-20 3-3 33 8 30 11 17-1 16-5 20-16 19-38 28-23 13-20 5-23-4-20-23-47-17-20 16-20 4-20-4-13-13-17 2-7-5-10 2-6 14 4 10 13 17 6 18 0 3 23 11 27 13 13 18 7 20 3 27-4 33 14 13 2 14-2 16-10 14-16 16-15 11-15 6-4 27 20 17 24 26 14 17 3 33 0 40 19 30 7 30-1 27-11 23-22 44-63 6-20 5-53 8-7 27-14 20-15 23-14 11-10 8-13 4-17 0-13-11-34 8-36-15-40-1-4 3-3 22-3 8-4 23 9 27-3 10-4 20-16 27 12 26 23 17 6 17 1 16-5 34-22 63-15 13-7 12-12 12-24 11-46-4-20-16-30 3-7 16-13 13-3 10-6 17-21 13-4 20 0 17-8 27-28 11-23 2-17-5-20-21-30 2-23-4-14 3-16-2-10-24-30-15-10 6-3 13 0 3-4 5 3 4 10 21 10 10-2 10-11 4 0 6 10-6 7-4 13 3 17 7 6 12 7 8 18 13 12 11 17 10 7 13 2 20-6 17 0 13-3 17-17 3-10 3-3 10 10-3 13 5 7 6 3 1 7-14 10-6 13-21 23-6 14 0 16 12 31 13 17 10 5 13 3 24-2 6 6 5 14-2 23 10 17-1 10-9 26 4 37 7 23 16 19 17 9 17 5 13-1 20-5 10 2 34 25 29 35 10 6 14 3 36-6 47-1 17-5 13-13 13-19 4-17-3-13 3-3 16 1 9 15 5 2 6-1 7 6-3 6 2 14-6 13 4 16 5 7 8 5 7 1 13-3 5 7 1 10 0 4-13 13-4 7 1 6 6 10-4 14-19 13-6 9-5 21-13 33 0 20 18 39 16 16 20 7 14-2 13-8 7 0 7 5 10 17-4 26 8 10 2 10-9 14-3 10-29 26-7 17 3 17 15 13 6 10 3 10-4 13 0 14-8 13-20 20 0 30-6 17-17 20-12 26-42 60-7 17-3 13 3 17 7 17 42 60 12 26 17 20 6 17 0 30 20 20 8 13 0 14 4 13-3 10-6 10-15 13-3 17 7 17 29 26 3 10 9 14-2 10-8 10 4 26-10 17-7 5-7 0-13-8-14-2-20 7-16 16-19 42 1 17 13 33 6 23 5 7 17 11 5 9 1 7-6 10-1 6 4 7 13 13-3 17-6 5-7-4-10 1-11 8-6 20 6 13-2 14 3 6-7 6-6-1-5 2-9 15-13 2-6-4 3-13-4-17-16-23-14-11-16-4-47 0-30-6-13 2-14 7-29 35-34 25-10 2-20-5-17 0-16 5-16 10-14 17-7 23-4 37 9 26 1 10-10 17 2 23-5 14-6 6-24-2-13 3-10 5-13 17-12 31 0 16 6 14 21 23 6 13 14 10-1 7-6 3-5 7 3 13-10 10-3-3-3-10-17-17-13-3-17 0-20-6-13 2-10 7-11 17-13 12-8 18-12 7-7 6-3 17 4 13 6 7-6 10-4 0-10-11-10-2-21 10-4 10z"/>
<path fill="#f8eb9f" d="M2378 2715l-3-4-13 0-6-3 16-10 23-28 2-12-2-16 3-14-2-23 4-7 14-13 5-10 4-20-1-18-12-22-28-30-16-7-21 0-13-3-17-22-10-5-13-3-16-13-3-7 17-30 4-20-2-17-10-34-10-20-10-11-14-8-66-15-30-20-20-7-17 0-17 6-10 7-16 18-27 12-20-17-10-4-27-3-23 10-7-4-23-3-3-3 1-4 15-36-8-40 13-34-1-16-4-15-6-12-11-10-81-50-3-53-6-20-46-67-23-21-27-10-30-1-30 7-40 20-33 0-17 3-27 14-17 25-26 20-6-4-11-16-16-14-14-18-16-9-14-2-13 1-33 15-27-4-20 2-20 9-12 13-11 27-2 23-18 0-17 6-5 4-5 9-14 4-2-6 5-10-2-7 14-17 3-13-3-20-17-20 18-20 8-20 16-27 3-23-6-23-11-17-29-23-12-30-8-11-20-15-16-5-17 0-30 12-33 8-3-3 2-20-1-50-8-16-17-16-13-5-27-4-23-21-30-11-57 0-10 3-20 14-3-1-14-13-10-7-43-5-27 3-20 15-11 4-9 11-10 18-4-2-2-22-4-8-20-18-9-5-37-5-10 1-10 4-10-5-24-2-40-1-10 4-6-4-29-2 0-4 29-2 6-4 10 4 40-1 24-2 10-5 10 4 10 1 37-5 9-5 20-18 4-8 2-22 4-2 10 18 9 11 11 4 20 15 27 3 43-5 10-7 14-13 3-1 20 14 10 3 57 0 30-11 23-21 27-4 13-5 17-16 8-16 1-50-2-20 3-3 33 8 30 12 17 0 16-5 20-15 8-11 12-30 29-23 11-17 6-23-3-23-16-27-8-20-18-20 17-20 3-20-3-13-14-17 2-7-5-10 2-6 14 4 5 9 5 4 17 6 18 0 2 23 11 27 12 13 20 9 20 2 27-4 33 15 13 1 14-2 16-9 14-18 16-14 11-16 6-4 26 20 17 25 27 14 17 3 33 0 40 20 30 7 30-1 27-10 23-21 46-67 6-20 3-53 81-50 11-10 6-12 4-15 1-16-13-34 8-40-15-36-1-4 3-3 23-3 7-4 23 10 27-3 10-4 20-17 27 12 16 18 10 7 17 6 17 0 20-7 30-20 66-15 14-8 10-11 10-20 10-34 2-17-4-20-17-30 3-7 16-13 13-3 10-5 17-22 13-3 21 0 16-7 28-30 12-22 1-18-4-20-5-10-14-13-4-7 2-23-3-14 2-16-2-12-23-28-16-10 6-3 13 0 3-4 5 3 3 10 22 10 10-2 10-11 4 0 5 10-5 7-4 13 3 17 6 6 13 7 8 19 13 11 10 17 11 8 13 2 20-6 17 0 13-3 17-17 3-11 3-3 10 10-3 13 4 7 7 3 1 7-15 10-5 13-23 23-5 14 0 16 13 33 13 16 10 5 13 3 24-3 6 6 4 14-1 23 10 17-1 10-10 26 4 40 8 24 16 16 17 10 13 4 17 0 20-6 13 3 30 23 17 23 13 14 10 6 14 3 36-7 47 0 17-6 13-12 14-21 3-17-3-13 3-3 16 1 9 15 5 2 6-1 7 6-3 6 2 14-6 13 4 18 6 8 7 3 7 1 10-4 3 0 4 7 2 10 0 4-14 13-3 7 0 6 7 10-4 14-5 5-15 8-5 7-4 20-15 40 0 16 19 41 16 16 20 6 14-2 13-9 7 0 7 5 10 17-5 26 9 10 2 10-9 14-3 10-30 26-7 17 2 17 17 13 6 10 3 10-4 13 0 14-9 13-20 20 0 30-5 17-18 20-11 26-43 60-8 17-2 13 2 17 8 17 43 60 11 26 18 20 5 17 0 30 20 20 9 13 0 14 4 13-3 10-6 10-17 13-2 17 7 17 30 26 3 10 9 14-2 10-9 10 5 26-10 17-7 5-7 0-13-9-14-2-20 6-17 17-19 43 1 17 14 33 5 23 5 7 18 11 5 9 1 7-7 10 0 6 3 7 14 13-3 17-6 4-7-3-10 0-12 9-5 20 6 13-2 14 3 6-7 6-6-1-5 2-9 15-13 2-6-4 3-13-3-17-17-25-14-10-16-4-47 0-33-7-14 3-10 6-13 14-17 23-30 23-13 3-20-6-17 0-16 5-17 11-15 18-6 23-4 37 10 26 1 10-10 17 1 23-4 14-6 6-24-3-13 3-10 5-13 16-13 33 0 16 5 14 23 23 5 13 15 10-1 7-7 3-4 7 3 13-10 10-3-3-3-11-17-17-13-3-17 0-20-6-13 2-11 8-10 17-13 11-8 19-13 7-6 6-3 17 4 13 5 7-5 10-4 0-10-11-10-2-22 10-3 10z"/>
<path fill="#f9e99a" d="M2382 2713l-4 2-3-4-13 0-6-3 16-9 23-28 3-13-3-16 4-14-2-23 3-7 15-13 5-10 4-20-2-20-13-23-27-28-14-6-23 0-13-3-17-23-10-5-13-3-15-12-4-7 18-30 4-20-3-20-10-33-10-20-10-11-14-7-66-15-30-21-20-7-17 1-17 6-10 7-16 19-27 12-20-18-9-3-28-4-23 11-7-4-23-3-3-3 1-4 16-36-8-40 13-34 0-16-5-17-6-10-10-10-28-15-18-15-25-12-11-8-2-7-1-46-6-20-47-70-23-20-26-10-28-1-33 8-40 21-33-1-17 3-27 14-17 26-26 20-5-4-12-17-15-13-15-19-16-10-14-1-13 1-33 16-27-5-20 3-20 8-13 14-10 26-2 24-18-1-17 7-5 4-5 9-13 4-3-6 5-7-2-10 14-17 4-13-4-20-17-20 19-20 8-20 16-27 4-23-6-23-11-17-30-23-12-30-9-13-19-14-17-5-17-1-13 4-17 9-33 9-3-3 3-20-1-50-9-18-17-15-13-5-27-3-23-22-27-10-60-1-10 3-20 15-3-1-14-14-10-6-43-6-27 4-20 15-11 4-9 10-10 19-4-2-2-23-4-8-28-22-38-5-10 1-10 4-14-6-20-2-40 0-10 4-6-4-27-2 0-4 27-2 6-4 10 4 40 0 20-2 14-6 10 4 10 1 38-5 28-22 4-8 2-23 4-2 10 19 9 10 11 4 20 15 27 4 43-6 10-6 14-14 3-1 20 15 10 3 60-1 27-10 23-22 27-3 13-5 17-15 9-18 1-50-3-20 3-3 33 9 17 9 13 4 17-1 17-5 19-14 9-13 12-30 30-23 11-17 6-23-4-23-16-27-8-20-19-20 17-20 4-20-4-13-14-17 2-10-5-7 3-6 13 4 5 9 5 4 17 7 18-1 2 24 10 26 13 14 20 8 20 3 27-5 33 16 13 1 14-1 16-10 15-19 15-13 12-17 5-4 26 20 17 26 27 14 17 3 33-1 40 21 33 8 28-1 26-10 23-20 47-70 6-20 1-46 2-7 11-8 25-12 18-15 28-15 10-10 6-10 5-17 0-16-13-34 8-40-16-36-1-4 3-3 23-3 7-4 23 11 28-4 9-3 20-18 27 12 16 19 10 7 17 6 17 1 20-7 30-21 66-15 14-7 10-11 10-20 10-33 3-20-4-20-18-30 4-7 15-12 13-3 10-5 17-23 13-3 23 0 14-6 27-28 13-23 2-20-4-20-5-10-15-13-3-7 2-23-4-14 3-16-3-13-23-28-16-9 6-3 13 0 3-4 5 3 3 10 22 11 10-3 10-10 4 0 5 9-5 7-5 13 3 17 6 6 14 7 8 20 12 10 10 17 12 8 13 3 20-7 17 0 13-3 17-17 3-11 3-3 10 10-3 14 4 6 7 3 1 7-15 10-5 13-23 23-6 14 0 16 14 35 13 15 23 7 24-3 6 6 4 14-2 23 11 17-1 10-10 26 3 40 8 24 14 16 17 10 16 5 17-1 20-6 13 3 30 23 28 36 12 8 14 3 36-8 50 0 14-5 13-12 15-22 2-17-3-13 3-3 16 1 8 15 6 3 6-2 6 6-3 6 3 14-6 13 4 19 6 7 7 3 7 1 10-4 3 1 4 6 2 10 0 4-14 13-4 7 1 6 7 10-4 14-5 5-16 8-5 7-4 20-15 40 0 16 18 40 17 17 21 7 14-3 13-9 7 0 6 5 11 17-5 26 9 10 1 10-8 14-3 10-30 26-8 17 0 10 3 8 17 13 6 9 3 10-5 13 1 14-9 13-20 20-2 7 2 23-6 17-17 20-11 26-44 60-8 17-2 13 1 14 7 16 46 64 11 26 17 20 6 17-2 23 2 7 20 20 9 13-1 14 5 13-3 10-6 9-17 13-3 8 0 10 8 17 30 26 3 10 8 14-1 10-9 10 5 26-11 17-6 5-7 0-13-9-14-3-21 7-12 10-7 10-17 40 2 17 14 36 4 20 5 7 19 11 6 12-7 14-1 6 4 7 14 13-3 17-6 4-7-4-10 1-13 9-4 20 6 13-3 14 3 6-6 6-6-2-6 3-8 15-13 2-6-4 3-13-2-17-18-26-14-10-16-4-47 0-33-7-14 3-12 8-28 36-30 23-13 3-20-6-17-1-16 5-17 10-14 16-8 24-3 40 10 26 1 10-11 17 2 23-4 14-6 6-24-3-23 7-13 15-14 35 0 16 6 14 23 23 5 13 15 10-1 7-7 3-4 6 3 14-10 10-3-3-3-11-17-17-13-3-17 0-20-7-13 3-12 8-10 17-12 10-8 20-14 7-6 6-3 17 5 13 5 7-5 9-4 0-10-10-10-3-22 11z"/>
<path fill="#f9e895" d="M2382 2713l-4 2-3-4-13 0-6-3 16-9 23-27 3-14-3-16 4-14-2-23 5-8 13-12 6-10 4-20-2-20-13-23-28-29-14-6-23 1-13-3-10-17-7-6-10-5-13-3-15-12-4-7 19-30 4-20-13-53-9-20-10-10-12-8-74-17-26-20-20-7-17 1-17 6-10 7-16 19-27 12-17-15-10-5-30-4-23 11-7-4-23-3-3-3 1-4 16-36-8-40 14-34 0-16-5-17-5-10-10-10-27-14-20-16-26-12-11-8-2-7 0-46-6-20-45-68-23-23-27-11-30-1-33 8-40 22-33-1-17 3-27 14-8 10-9 17-26 20-5-4-12-17-15-13-15-20-16-10-27 0-33 17-27-6-20 3-20 7-13 14-10 27-3 25-17-1-17 6-7 6-3 8-13 4-3-6 6-10-3-7 15-17 3-13-3-20-18-20 20-20 7-20 17-27 4-23-6-23-13-19-29-21-11-30-8-14-22-15-16-5-17 0-13 4-20 11-30 8-3-3 3-20-2-16 3-20-1-14-8-16-17-17-15-6-27-3-22-21-28-11-60-1-13 6-17 12-3 0-14-15-10-6-46-5-24 3-20 15-12 5-18 29-3-2-3-23-4-9-27-21-39-5-10 1-10 4-14-7-20-1-40 0-10 3-6-3-26-2 0-4 26-2 6-3 10 3 40 0 20-1 14-7 10 4 10 1 39-5 27-21 4-9 3-23 3-2 18 29 12 5 20 15 24 3 46-5 10-6 14-15 3 0 17 12 13 6 60-1 28-11 22-21 27-3 15-6 17-17 8-16 1-14-3-20 2-16-3-20 3-3 30 8 20 11 13 4 17 0 16-5 22-15 8-14 11-30 29-21 13-19 6-23-4-23-17-27-7-20-20-20 18-20 3-20-3-13-15-17 3-7-6-10 3-6 13 4 3 8 7 6 17 6 17-1 3 25 10 27 13 14 20 7 20 3 27-6 33 17 27 0 16-10 15-20 15-13 12-17 5-4 26 20 9 17 8 10 27 14 17 3 33-1 40 22 33 8 30-1 27-11 23-23 45-68 6-20 0-46 2-7 11-8 26-12 20-16 27-14 10-10 5-10 5-17 0-16-14-34 8-40-16-36-1-4 3-3 23-3 7-4 23 11 30-4 10-5 17-15 27 12 16 19 10 7 17 6 17 1 20-7 26-20 74-17 12-8 10-10 9-20 13-53-4-20-19-30 4-7 15-12 13-3 10-5 7-6 10-17 13-3 23 1 14-6 28-29 13-23 2-20-4-20-6-10-13-12-5-8 2-23-4-14 3-16-3-14-23-27-16-9 6-3 13 0 3-4 5 3 2 10 23 11 10-2 10-11 4 0 5 9-5 7-5 13 3 17 5 6 15 7 8 20 12 10 9 17 13 9 13 2 20-7 13 1 17-3 7-5 10-13 3-11 3-3 10 10-3 3 0 12 4 5 7 3 1 7-15 9-6 14-23 23-6 14 0 16 13 34 14 16 11 6 13 2 24-4 6 6 4 14-2 23 10 17-1 10-10 26 3 40 7 24 16 18 17 9 16 5 17-1 20-7 13 4 29 22 28 37 13 8 14 3 33-8 50 0 17-5 13-12 15-23 3-17-4-13 3-3 16 1 8 15 6 3 6-2 6 6-3 6 3 14-7 13 5 20 6 7 8 3 19-3 3 3 3 13 0 4-15 13-3 7 0 6 8 10-4 14-5 5-16 8-5 7-4 20-16 40 0 16 17 39 7 9 10 9 23 8 14-3 13-10 7 0 6 5 11 17-5 26 9 10 1 10-7 10-4 14-31 26-8 17 0 10 4 9 17 12 6 9 3 10-5 13 1 14-9 13-21 20-1 7 2 23-6 17-18 20-11 26-43 60-9 17-2 13 1 14 8 16 45 64 11 26 18 20 6 17-2 23 1 7 21 20 9 13-1 14 5 13-3 10-6 9-17 12-4 9 0 10 8 17 31 26 4 14 7 10-1 10-9 10 5 26-11 17-6 5-7 0-13-10-14-3-23 8-10 9-7 9-18 42 2 17 15 36 4 20 5 7 19 11 6 12 0 4-8 10 0 6 3 7 15 13-3 17-6 4-7-4-10 0-13 10-5 20 7 13-3 14 3 6-6 6-6-2-6 3-8 15-13 2-6-4 4-13-3-17-15-23-13-12-17-5-50 0-33-8-14 3-13 8-28 37-29 22-13 4-20-7-17-1-18 6-17 10-14 16-7 24-3 40 10 26 1 10-10 17 2 23-4 14-6 6-14-3-13-1-13 3-10 6-14 19-12 33 1 13 6 14 23 23 6 14 15 9-1 7-7 3-4 5 0 12 3 3-10 10-3-3-3-11-10-13-7-5-17-3-13 1-20-7-13 2-13 9-9 17-12 10-8 20-15 7-5 6-3 17 5 13 5 7-5 9-4 0-10-11-10-2-23 11z"/>
<path fill="#f9e790" d="M2382 2713l-4 2-3-4-13 0-6-3 16-9 24-27 3-14-4-16 5-14-3-23 5-8 12-9 8-13 4-20-1-20-14-23-29-30-14-6-23 1-13-3-10-17-6-5-11-6-13-2-15-12-4-7 19-30 5-20-12-53-10-21-10-11-13-8-74-15-26-21-20-7-17 1-17 6-10 7-16 20-20 11-7 1-17-15-10-5-30-4-23 11-7-4-23-3-3-3 1-4 17-36-9-40 15-34 0-16-4-17-7-12-9-8-28-14-20-16-23-11-14-9-2-7 1-46-5-20-47-71-23-22-27-11-30-1-33 9-40 23-33-2-17 3-28 15-9 11-8 16-25 20-5-4-12-18-14-12-16-21-16-10-14-1-16 2-30 17-27-6-23 3-17 6-13 14-10 26 0 20-3 7-17-1-17 6-7 6-3 8-13 4-3-6 6-10-3-7 15-17 4-13-4-20-18-20 20-20 8-20 17-27 4-20-5-26-14-20-29-20-12-32-7-12-9-9-14-7-16-5-17 0-13 4-17 10-33 10-3-3 3-20-1-16 3-20-1-14-8-17-17-17-14-6-29-2-21-21-29-11-60-1-13 5-17 13-3 0-14-15-10-7-46-5-25 4-19 15-13 5-17 29-3-2-3-23-4-9-26-22-40-4-10 1-10 4-14-7-20-1-40 0-10 3-6-4-24-1 0-4 24-1 6-4 10 3 40 0 20-1 14-7 10 4 10 1 40-4 26-22 4-9 3-23 3-2 17 29 13 5 19 15 25 4 46-5 10-7 14-15 3 0 17 13 13 5 60-1 29-11 21-21 29-2 14-6 17-17 8-17 1-14-3-20 1-16-3-20 3-3 33 10 17 10 13 4 17 0 16-5 14-7 9-9 7-12 12-32 29-20 14-20 5-26-4-20-17-27-8-20-20-20 18-20 4-20-4-13-15-17 3-7-6-10 3-6 13 4 3 8 7 6 17 6 17-1 3 7 0 20 10 26 13 14 17 6 23 3 27-6 30 17 16 2 14-1 16-10 16-21 14-12 12-18 5-4 25 20 8 16 9 11 28 15 17 3 33-2 40 23 33 9 30-1 27-11 23-22 47-71 5-20-1-46 2-7 14-9 23-11 20-16 28-14 9-8 7-12 4-17 0-16-15-34 9-40-17-36-1-4 3-3 23-3 7-4 23 11 30-4 10-5 17-15 7 1 20 11 16 20 10 7 17 6 17 1 20-7 26-21 74-15 13-8 10-11 10-21 12-53-5-20-19-30 4-7 15-12 13-2 11-6 6-5 10-17 13-3 23 1 14-6 29-30 14-23 1-20-4-20-8-13-12-9-5-8 3-23-5-14 4-16-3-14-24-27-16-9 6-3 13 0 3-4 5 3 2 10 23 11 10-2 10-11 4 0 5 9-5 6-5 14 2 17 6 7 15 6 8 20 12 10 8 17 14 10 13 2 20-8 13 1 15-2 9-5 11-15 2-10 3-3 10 10-3 3 0 12 3 5 8 3 1 7-15 9-6 14-24 23-6 14-1 13 13 35 14 18 10 5 16 3 24-4 6 6 4 14-3 23 11 17-2 13-10 23 4 42 6 23 17 18 17 9 16 5 17-1 20-8 13 4 29 22 28 38 10 7 13 4 14-1 23-8 50 1 17-5 13-12 16-24 2-17-4-13 3-3 16 1 8 15 6 3 6-2 6 6-3 6 3 14-5 6-2 7 4 20 6 7 8 3 7 1 10-5 3 1 3 3 3 13-1 4-14 13-3 7 0 6 8 10-4 14-5 5-17 8-5 7-3 20-17 40 0 16 21 44 7 9 10 7 14 5 10 1 10-3 13-11 7 0 6 5 11 17-1 10-5 16 11 14 0 6-7 10-5 14-30 26-9 17 1 10 4 10 17 11 6 9 2 10-4 13 1 10-2 7-7 10-21 20-2 7 3 23-6 17-18 20-11 26-44 60-9 17-2 13 2 17 9 17 44 60 11 26 18 20 6 17-3 23 2 7 21 20 7 10 2 7-1 10 4 13-2 10-6 9-17 11-4 10-1 10 9 17 30 26 5 14 7 10 0 6-11 14 5 16 1 10-11 17-6 5-7 0-13-11-14-3-11 2-12 6-9 8-8 10-18 43 0 13 17 40 3 20 5 7 20 11 6 12 0 4-8 10 0 6 3 7 14 13-2 17-6 4-7-4-10 0-8 3-5 7-5 20 2 7 5 6-3 14 3 6-6 6-6-2-6 3-8 15-13 2-6-4 4-13-2-17-16-24-13-12-17-5-50 1-33-9-14 3-13 8-28 38-29 22-13 4-20-8-17-1-20 6-17 11-13 15-6 23-4 42 10 23 2 13-11 17 3 23-4 14-6 6-24-4-16 3-10 5-14 18-13 35 1 13 6 14 24 23 6 14 15 9-1 7-8 3-3 5 0 12 3 3-10 10-3-3-2-10-11-15-9-5-15-2-13 1-20-8-13 2-14 10-8 17-12 10-8 20-15 6-6 7-2 17 5 14 5 6-5 9-4 0-10-11-10-2-23 11z"/>
<path fill="#f9e68c" d="M2382 2713l-4 2-3-5-13 1-6-3 16-9 24-27 3-14-4-16 5-14-3-23 5-7 13-10 7-11 5-22-1-20-13-23-31-31-14-6-23 2-13-3-16-22-11-6-13-2-15-12-4-7 20-30 5-20-13-57-10-20-10-10-17-8-70-14-26-21-20-7-17 1-17 6-13 10-12 17-25 13-6-1-14-15-10-5-30-4-23 12-13-6-10 1-7-2-3-3 1-4 18-36-9-40 15-34 0-16-5-20-7-10-10-9-27-13-20-16-23-10-13-9-3-7 2-46-5-20-28-40-20-33-23-23-23-9-30-2-37 9-40 24-33-2-17 3-29 16-8 9-8 18-25 20-5-4-12-19-13-11-17-23-16-9-14-1-16 2-30 17-27-6-26 4-17 7-11 13-10 26 1 20-3 7-17-2-17 7-7 5-3 9-13 4-3-6 6-10-3-7 16-17 3-13-3-20-19-20 19-18 9-22 18-27 4-20-5-26-14-20-29-20-16-41-10-11-14-8-19-6-17 0-13 5-17 10-33 10-3-3 4-20-2-16 3-20 0-14-9-19-17-16-16-6-27-1-23-23-30-11-60 1-10 4-17 14-3 0-14-16-10-6-46-5-27 4-15 14-15 6-17 29-3-2-3-23-4-10-26-21-40-5-10 1-10 5-14-7-56-1-14 3-6-4-23-1 0-4 23-1 6-4 10 3 40 0 21-1 13-7 10 5 10 1 40-5 26-21 4-10 3-23 3-2 17 29 15 6 15 14 27 4 46-5 10-6 14-16 3 0 17 14 10 4 60 1 30-11 23-23 27-1 16-6 17-16 9-19 0-14-3-20 2-16-4-20 3-3 33 10 17 10 13 5 17 0 19-6 14-8 10-11 16-41 29-20 14-20 5-26-4-20-18-27-9-22-19-18 19-20 3-20-3-13-16-17 3-7-6-10 3-6 13 4 3 9 7 5 17 7 17-2 3 7-1 20 10 26 11 13 17 7 26 4 27-6 30 17 16 2 14-1 16-9 17-23 13-11 12-19 5-4 25 20 8 18 8 9 29 16 17 3 33-2 40 24 37 9 30-2 23-9 23-23 20-33 28-40 5-20-2-46 3-7 13-9 23-10 20-16 27-13 10-9 7-10 5-20 0-16-15-34 9-40-18-36-1-4 3-3 7-2 10 1 13-6 23 12 30-4 10-5 14-15 6-1 25 13 12 17 13 10 17 6 17 1 20-7 26-21 70-14 17-8 10-10 10-20 13-57-5-20-20-30 4-7 15-12 13-2 11-6 16-22 13-3 23 2 14-6 31-31 13-23 1-20-5-22-7-11-13-10-5-7 3-23-5-14 4-16-3-14-24-27-16-9 6-3 13 1 3-5 5 3 2 11 23 10 10-2 10-11 4 0 5 9-5 6-6 14 3 17 6 7 14 6 8 20 13 10 8 17 14 11 13 2 20-9 13 2 16-3 8-5 10-13 3-12 3-3 10 10-3 3 0 13 11 7 1 7-13 6-8 17-25 23-6 14-1 13 14 37 14 17 12 6 14 2 24-5 6 6 4 14-4 13 1 10 11 17-2 13-11 23 5 47 6 20 16 17 18 10 16 4 17-1 20-8 13 3 28 22 29 39 10 7 13 4 14-2 23-7 50 1 17-5 13-12 16-25 2-17-4-13 3-3 16 1 7 15 7 3 6-2 6 6-3 6 3 14-6 6-1 7 4 20 6 7 8 4 7 0 10-5 3 1 3 3 0 10 3 3-1 4-14 13-4 7 2 10 7 6-5 14-4 4-17 8-6 8-3 20-17 40 0 16 21 44 8 10 9 6 15 6 10 0 10-3 13-11 7 1 6 4 11 20-6 23 11 14 0 6-7 10-5 14-28 23-8 10-3 10 0 10 4 10 18 11 6 9 2 10-4 13 1 10-2 7-10 13-14 10-5 7-1 7 3 23-6 17-18 20-11 26-45 60-9 17-2 13 1 14 8 16 47 64 11 26 18 20 6 17-3 23 1 7 5 7 14 10 10 13 2 7-1 10 4 13-2 10-6 9-18 11-4 10 0 10 3 10 8 10 28 23 5 14 7 10 0 6-11 14 6 23-11 20-6 4-7 1-13-11-14-3-23 7-10 8-7 9-19 45 0 13 17 40 3 20 6 8 20 11 6 11 0 4-8 10-1 6 4 7 14 13-2 17-6 4-7-4-10-1-13 10-4 8-1 13 1 7 6 6-3 14 3 6-6 6-6-2-7 3-7 15-13 2-6-4 4-13-2-17-16-25-13-12-17-5-50 1-33-9-14 3-13 8-29 39-28 22-13 3-20-8-17-1-20 6-18 12-13 16-6 20-4 44 11 23 2 13-11 17-1 10 4 13-4 14-6 6-24-5-14 2-12 6-14 17-14 37 1 13 6 14 25 23 8 17 13 6-1 7-11 7 0 13 3 3-10 10-3-3-3-12-10-13-8-5-16-3-13 2-20-9-13 2-14 11-8 17-13 10-8 20-14 6-6 7-3 17 6 14 5 6-5 9-4 0-10-11-10-2-23 10z"/>
<path fill="#fae27d" d="M2382 2713l-4 2-3-5-13 1-6-3 16-8 24-28 3-14-4-16 5-14-3-23 5-7 13-10 7-10 6-23-1-20-14-23-31-32-14-5-23 2-13-3-14-21-13-7-13-2-17-16-2-3 2-3 9-10 11-20 3-17-13-59-9-18-11-11-17-8-70-13-26-22-20-7-17 1-20 8-10 8-12 18-25 13-6-1-14-15-10-5-30-4-23 12-13-6-10 1-7-2-3-3 1-4 18-36-9-40 15-34 1-16-6-20-7-12-10-8-27-12-20-17-23-9-13-9-2-7 2-46-5-20-29-40-20-35-23-22-24-10-29-1-37 10-40 24-33-2-17 2-30 17-7 8-8 19-25 20-5-4-12-19-13-11-17-24-16-9-14-1-16 3-30 17-27-7-28 5-15 7-12 13-10 30 2 16-3 7-17-2-17 7-7 5-3 9-13 4-3-6 6-10-3-7 16-17 4-13-4-20-19-20 19-17 9-23 19-27 4-20-5-26-13-20-31-20-16-42-10-11-13-8-20-6-17 0-13 5-17 11-33 10-3-3 4-20-2-16 4-20 0-14-10-20-17-16-16-6-27-1-23-23-30-10-34 2-13-3-13 1-10 5-17 14-3 0-14-16-10-7-46-5-27 5-15 14-15 6-17 28-3-1-2-20-5-13-26-21-40-5-10 1-10 5-14-7-56-1-14 3-6-4-22-1 0-4 22-1 6-4 10 3 40 0 21-1 13-7 10 5 10 1 40-5 26-21 5-13 2-20 3-1 17 28 15 6 15 14 27 5 46-5 10-7 14-16 3 0 17 14 10 5 13 1 13-3 34 2 30-10 23-23 27-1 16-6 17-16 10-20 0-14-4-20 2-16-4-20 3-3 33 10 17 11 13 5 17 0 20-6 13-8 10-11 16-42 31-20 13-20 5-26-4-20-19-27-9-23-19-17 19-20 4-20-4-13-16-17 3-7-6-10 3-6 13 4 3 9 7 5 17 7 17-2 3 7-2 16 10 30 12 13 15 7 28 5 27-7 30 17 16 3 14-1 16-9 17-24 13-11 12-19 5-4 25 20 8 19 7 8 30 17 17 2 33-2 40 24 37 10 29-1 24-10 23-22 20-35 29-40 5-20-2-46 2-7 13-9 23-9 20-17 27-12 10-8 7-12 6-20-1-16-15-34 9-40-18-36-1-4 3-3 7-2 10 1 13-6 23 12 30-4 10-5 14-15 6-1 25 13 12 18 10 8 20 8 17 1 20-7 26-22 70-13 17-8 11-11 9-18 13-59-3-17-11-20-9-10-2-3 2-3 17-16 13-2 13-7 14-21 13-3 23 2 14-5 31-32 14-23 1-20-6-23-7-10-13-10-5-7 3-23-5-14 4-16-3-14-24-28-16-8 6-3 13 1 3-5 5 3 2 11 23 10 10-2 10-11 4 0 5 9-5 6-6 14 2 17 7 7 14 6 8 20 12 10 9 18 14 10 13 2 20-9 13 2 17-3 7-5 10-13 3-12 3-3 10 10-3 3 0 13 11 7 1 7-14 6-7 17-26 23-6 14 0 13 14 38 14 17 10 5 16 2 24-5 6 6 4 14-4 23 12 17-2 13-11 23 4 47 7 22 14 15 20 10 16 5 17-2 20-8 13 3 30 24 27 38 10 7 13 3 14-1 23-8 50 1 17-4 13-13 17-25 2-17-5-13 3-3 16 1 7 15 7 4 6-3 6 6-3 6 3 14-6 6-1 7 4 20 5 7 9 4 7 0 10-5 3 1 3 3 0 10 3 3-3 6-13 11-3 7 2 10 7 6-5 14-4 4-17 8-6 8-3 20-17 40 0 16 20 44 8 10 9 6 12 5 14 2 13-5 10-10 7 1 6 4 11 20-6 23 11 14 0 6-9 13 0 7-33 29-10 18 0 10 5 10 18 11 6 9 2 10-4 13 1 10-2 7-10 13-14 10-5 7-1 7 3 23-6 17-19 20-10 26-48 64-6 13-3 13 2 14 7 16 48 64 10 26 19 20 6 17-3 23 1 7 5 7 14 10 10 13 2 7-1 10 4 13-2 10-6 9-18 11-5 10 0 10 10 18 33 29 0 7 9 13 0 6-11 14 6 23-11 20-6 4-7 1-13-12-14-3-23 7-10 8-7 9-20 46 1 13 17 40 5 24 7 6 17 9 6 11 0 4-9 10 0 6 3 7 15 13-2 17-6 4-7-5-10 0-13 9-4 9-1 13 1 7 6 6-3 14 3 6-6 6-6-3-7 4-7 15-13 2-6-4 5-13-2-17-17-25-13-13-17-4-50 1-33-10-14 3-13 8-27 38-30 24-13 3-20-8-20-1-17 5-20 13-12 16-5 20-4 44 11 23 2 13-12 17 4 23-4 14-6 6-24-5-16 2-10 5-14 17-14 38 0 13 6 14 26 23 7 17 14 6-1 7-11 7 0 13 3 3-10 10-3-3-3-12-10-13-7-5-17-3-13 2-20-9-13 2-14 10-9 18-12 10-8 20-14 6-7 7-2 17 6 14 5 6-5 9-4 0-10-11-10-2-23 10z"/>
<path fill="#fbdb62" d="M2382 2712l-4 2-3-4-13 1-6-3 15-6 27-30 3-17-6-13 7-14-4-13 1-13 18-10 8-10 7-27 0-20-10-20-37-38-17-6-23 4-13-2-12-21-15-8-13-1-16-15-1-5 11-11 14-20 3-14-14-70-7-14-13-12-17-9-74-9-23-24-10-5-13-4-17 2-22 9-10 10-11 19-27 14-17-18-10-5-33-4-17 13-3 0-13-6-7 2-10-3-3-2 8-14 2-10 9-10 3-6 0-7-12-33 15-20 5-12 0-18-4-21-7-13-9-8-34-13-17-15-23-8-15-9-2-7 5-50-3-16-10-17-20-23-21-44-24-23-23-9-27-1-46 13-40 29-34-6-16 4-30 18-7 10-4 15-26 23-13-21-18-15-12-24-17-11-17-1-20 5-26 19-27-9-33 5-17 9-9 14-8 30 3 16-3 7-16-3-10 6-7 0-7 5-3 10-13 5-2-6 4-4 2-6-3-7 17-17 4-10-3-20-3-6-19-17 22-17 6-20 19-20 7-13 3-20-6-27-5-10-9-10-34-18-7-32-6-13-11-11-16-9-20-6-17 1-13 6-20 15-10 1-20 9-3-3 6-23-3-13 7-20 0-17-7-17-20-20-17-6-30 2-17-22-33-13-17-1-20 4-13-3-13 0-10 5-17 17-5-3-8-13-10-8-50-6-27 4-7 4-10 13-13 3-7 9-10 22-4-8 1-10-4-16-13-7-6-10-10-6-44-4-16 6-7-5-7-2-56-1-14 4-3-3-12-2 0-4 12-2 3-3 10 4 14 0 50-2 10-6 16 6 44-4 10-6 6-10 13-7 4-16-1-10 4-8 10 22 7 9 13 3 10 13 7 4 27 4 50-6 10-8 8-13 5-3 17 17 10 5 13 0 13-3 20 4 17-1 33-13 17-22 30 2 17-6 20-20 7-17 0-17-7-20 3-13-6-23 3-3 20 9 10 1 20 15 13 6 17 1 20-6 16-9 11-11 6-13 7-32 34-18 9-10 5-10 6-27-3-20-7-13-19-20-6-20-22-17 19-17 3-6 3-20-4-10-17-17 3-7-2-6-4-4 2-6 13 5 3 10 7 5 7 0 10 6 16-3 3 7-3 16 8 30 9 14 17 9 33 5 27-9 26 19 20 5 17-1 17-11 12-24 18-15 13-21 26 23 4 15 7 10 30 18 16 4 34-6 40 29 46 13 27-1 23-9 24-23 21-44 20-23 10-17 3-16-5-50 2-7 15-9 23-8 17-15 34-13 9-8 7-13 4-21 0-18-5-12-15-20 12-33 0-7-3-6-9-10-2-10-8-14 3-2 10-3 7 2 13-6 3 0 17 13 33-4 10-5 17-18 27 14 11 19 10 10 22 9 17 2 13-4 10-5 23-24 74-9 17-9 14-13 7-17 13-66-3-14-14-20-11-11 1-5 16-15 13-1 15-8 12-21 13-2 23 4 17-6 37-38 10-20 0-20-7-27-8-10-18-10-1-13 4-13-7-14 6-13-3-17-27-30-15-6 6-3 13 1 3-4 4 2 0 7 3 5 23 11 10-3 14-11 5 8-5 4-8 16 0 10 4 10 7 7 10 0 3 3 7 21 13 9 7 18 17 14 16 1 17-11 13 2 17-2 10-8 9-14 1-10 3-2 9 9-2 3-1 13 4 5 7 2 2 7-16 6-6 17-29 23-7 14 0 13 18 43 11 15 12 5 22 2 20-8 6 6 4 14-6 16 0 7 13 17-1 10-12 16-3 10 4 50 5 20 15 17 25 13 16 4 20-4 17-10 10 2 33 25 17 31 10 12 10 6 13 4 14-2 23-11 53 3 17-5 10-11 19-30 1-18-6-12 3-3 16 2 7 15 7 3 6-3 6 6-4 10 4 6-9 14 3 23 7 9 10 4 7 0 13-6 3 3 0 10 3 3-6 10-12 7-3 7 2 10 8 6-4 14-8 5-14 5-7 6-2 24-20 40 0 16 23 50 16 14 14 5 14 2 13-6 10-12 7 0 6 5 4 9 6 7 0 10-7 13 1 6 12 11 0 6-9 10 0 10-35 27-7 10-4 10-1 10 4 10 7 7 16 5 6 8 2 10-5 13 1 10-1 7-10 12-20 15-3 10 5 13 0 10-5 17-20 18-11 28-13 14-36 50-8 13-3 13 2 14 9 16 36 50 13 14 11 28 20 18 5 17 0 10-5 13 3 10 20 15 10 12 1 7-1 10 5 13-2 10-6 8-16 5-7 7-4 10 1 10 4 10 7 10 35 27 0 10 9 10 0 6-12 11-1 6 7 13 0 10-6 7-4 9-6 5-7 0-10-12-13-6-14 2-14 5-16 14-24 53 2 17 19 36 2 24 7 6 18 7 8 13-2 6-6 5-2 9 3 7 17 13-2 17-6 3-7-5-7-1-11 3-5 4-6 13-1 13 2 7 7 10-4 6 4 10-6 6-6-3-7 3-7 15-6-1-7 3-6-3 6-12-1-18-19-30-10-11-17-5-53 3-33-13-14 2-13 8-10 12-17 31-33 25-10 2-17-10-20-4-23 7-22 13-11 15-5 19-4 50 3 10 12 16 1 10-13 17 0 7 6 16-4 14-6 6-20-8-22 2-12 5-11 15-18 43 0 13 7 14 29 23 6 17 16 6-2 7-7 2-4 5 1 13 2 3-9 9-3-2-1-10-9-14-10-8-17-2-13 2-17-11-16 1-17 14-7 18-13 9-7 21-3 3-10 0-7 7-4 10 0 10 8 16 5 4-5 8-14-11-10-3-23 11-3 5z"/>
<path fill="#fcd349" d="M2382 2712l-4 2-3-5-13 2-5-3 15-6 28-30 2-17-6-13 8-14-5-13 0-13 18-7 10-10 9-33 1-17-8-17-44-46-17-5-23 8-10-1-6-6-2-10-5-8-17-8-13 1-16-15-1-4 27-29 5-13-11-50-2-27-6-14-13-13-20-9-77-6-23-28-23-9-17 2-27 12-7 8-9 22-27 15-23-25-17 1-20-5-17 15-16-7-17 0-2-2 9-14 1-10 8-6 5-10-13-40 18-20 5-10 1-20-5-27-7-11-10-8-33-9-23-19-35-13-2-7 8-50-2-16-13-20-21-24-18-46-27-27-21-8-26 0-54 17-36 31-34-7-16 2-34 21-6 11-3 16-24 23-12-23-18-13-10-26-17-13-13-2-27 6-26 22-27-11-37 5-13 7-11 15-8 34 5 16-3 6-16-3-10 6-10 1-7 15-13 4-2-5 7-10-4-7 19-16 4-11-6-26-20-17 22-14 7-23 18-16 12-17 2-20-8-33-15-18-36-16-7-45-10-12-19-9-24-8-17 1-17 9-16 16-14 2-16 9-3-3 7-23-3-13 9-20 1-20-8-17-23-22-17-5-30 5-17-25-33-12-20 0-17 5-13-5-17 1-23 23-22-25-15-3-13 3-23-6-30 5-14 17-15 4-15 30-4-7-1-26-8-7-7 0-6-12-7-5-47-4-16 7-6-6-8-1-60-1-10 3-10-4 0-4 10-4 24 4 46-2 8-1 6-6 16 7 47-4 7-5 6-12 7 0 8-7 1-26 4-7 15 30 15 4 14 17 30 5 23-6 13 3 15-3 22-25 23 23 17 1 13-5 17 5 20 0 33-12 17-25 30 5 17-5 23-22 8-17-1-20-9-20 3-13-7-23 3-3 16 9 14 2 16 16 17 9 17 1 24-8 19-9 10-12 7-45 36-16 15-18 8-33-2-20-12-17-18-16-7-23-22-14 20-17 6-26-4-11-19-16 4-7-7-10 2-5 13 4 7 15 10 1 10 6 16-3 3 6-5 16 8 34 11 15 13 7 37 5 27-11 26 22 27 6 13-2 17-13 10-26 18-13 12-23 24 23 3 16 6 11 34 21 16 2 34-7 36 31 54 17 26 0 21-8 27-27 18-46 21-24 13-20 2-16-8-50 2-7 35-13 23-19 33-9 10-8 7-11 5-27-1-20-5-10-18-20 13-40-5-10-8-6-1-10-9-14 2-2 17 0 16-7 17 15 20-5 17 1 23-25 27 15 9 22 7 8 27 12 17 2 23-9 23-28 77-6 20-9 13-13 6-14 2-27 11-50-5-13-27-29 1-4 16-15 13 1 17-8 5-8 2-10 6-6 10-1 23 8 17-5 44-46 8-17-1-17-9-33-10-10-18-7 0-13 5-13-8-14 6-13-2-17-28-30-15-6 5-3 13 2 3-5 4 2 3 13 23 11 7-1 17-14 5 8-6 3-8 17 3 20 9 9 13 1 7 23 13 7 4 17 20 18 16 0 17-12 13 3 18-3 9-6 10-17 1-10 2-2 9 9-4 16 12 7 1 7-14 4-5 6-2 12-31 21-8 13-2 14 21 50 13 16 10 4 25 0 19-10 6 6 3 14-7 23 12 13 2 7-1 7-15 20-2 10 4 16 0 44 5 13 9 10 32 17 18 4 17-3 20-14 7 0 11 6 9 12 15 8 25 46 13 9 13 3 14-3 23-14 30 0 27 5 16-6 28-43 0-20-7-10 3-3 16 2 7 17 7 2 6-4 6 6-5 10 5 6-10 14 4 27 7 7 13 4 17-8 5 16-5 9-14 8-3 7 2 10 10 6-5 14-10 6-13 2-8 8 0 24-23 40 0 16 26 54 17 13 28 7 13-6 10-14 13 4 10 19-8 27 12 7 2 9-10 10 1 10-37 26-13 21 1 13 4 10 8 6 14 1 8 10 2 10-5 13 1 17-10 11-23 16-2 10 7 16-6 24-20 16-10 30-12 11-41 53-11 26 2 14 7 13 43 56 12 11 10 30 20 16 6 24-7 16 2 10 23 16 10 11-1 17 5 13-2 10-8 10-14 1-8 6-4 10-1 13 13 21 37 26-1 10 10 10-2 9-12 7 8 27-10 19-13 4-10-14-13-6-14 1-20 9-13 13-25 54 1 13 23 40 2 27 9 6 17 4 8 13-2 6-8 4-2 10 3 7 19 13-2 17-6 2-14-7-18 8-5 14-1 16 10 14-5 6 5 10-6 6-6-4-6 2-7 16-11 3-9-3 7-10-1-23-23-37-7-6-13-3-27 5-30 0-23-14-14-3-13 3-13 9-25 46-15 8-9 12-11 6-7 0-20-14-17-3-18 4-32 17-9 10-5 13 0 44-4 16 2 10 15 20 1 7-2 7-12 13 7 23-3 14-6 6-19-10-25 0-10 4-13 16-21 50 2 14 8 13 31 21 2 12 5 6 14 4-1 7-12 7 4 16-9 9-2-2-1-10-10-17-9-6-18-3-13 3-17-12-16 0-20 18-4 17-13 7-7 23-13 1-9 9-3 20 8 17 6 3-5 8-17-14-7-1-23 11z"/>
<path fill="#fdcb32" d="M2378 2713l-3-4-13 2-5-3 16-6 5-10 16-10 8-10 2-17-8-13 9-14-6-13 0-13 19-5 12-12 12-40-1-13-7-14-32-29-17-22-17-3-23 11-10-1-6-6-1-11-6-9-17-7-13 1-15-14-2-3 31-30 5-13-13-50 1-30-7-17-16-13-21-8-33 2-40-3-7-5-17-25-11-8-12-4-20 3-30 14-8 10-5 20-27 17-17-23-6-4-17 3-13-7-7 0-17 16-16-6-17 0-2-2 9-12 1-12 11-6 5-10-16-40 22-20 4-10-3-50-14-17-40-9-19-18-21-5-20-11 12-54-2-16-14-22-21-22-8-33-8-17-29-32-27-9-30 5-50 19-33 34-34-11-16 3-36 21-5 10-3 20-23 23-8-13-2-10-19-13-2-13-9-20-17-11-13-1-30 8-23 24-27-14-40 6-13 8-11 16-1 20-5 14 6 16-3 6-16-5-10 8-12 1-4 7 0 7-14 5-2-5 5-4 2-6-4-7 19-13 5-14-5-26-22-17 25-15 4-22 31-26 7-24-9-36-7-14-13-10-35-10-1-42-14-19-40-16-20-1-20 10-16 19-10 1-17 8-3-3 6-23-4-10 8-14 5-20-1-13-6-10-22-22-13-8-13 0-24 9-3-2-13-25-34-12-23-1-17 6-13-6-17 1-10 6-13 18-14-21-9-6-14-1-13 3-20-6-30 3-10 6-7 14-10-1-7 5-13 30-3-7 0-26-7-7-10-1-3-9-7-7-50-4-10 1-6 6-5-6-9-2-33 1-13-2 0-4 13-2 7 2 33-2 7-7 6 6 10 1 50-4 7-7 3-9 10-1 7-7 0-26 3-7 13 30 7 5 10-1 7 14 10 6 30 3 20-6 13 3 14-1 9-6 14-21 13 18 10 6 17 1 13-6 17 6 23-1 34-12 13-25 3-2 24 9 13 0 13-8 22-22 6-10 1-13-5-20-8-14 4-10-6-23 3-3 17 8 10 1 16 19 20 10 20-1 40-16 14-19 1-42 35-10 13-10 7-14 9-36-7-24-31-26-4-22-25-15 22-17 5-26-5-14-19-13 4-7-2-6-5-4 2-5 14 5 0 7 4 7 12 1 10 8 16-5 3 6-6 16 5 14 1 20 11 16 13 8 40 6 27-14 23 24 30 8 13-1 17-11 9-20 2-13 19-13 2-10 8-13 23 23 3 20 5 10 36 21 16 3 34-11 33 34 50 19 30 5 27-9 29-32 8-17 8-33 21-22 14-22 2-16-12-54 20-11 21-5 19-18 40-9 14-17 3-50-4-10-22-20 16-40-5-10-11-6-1-12-9-12 2-2 17 0 16-6 17 16 7 0 13-7 17 3 6-4 17-23 27 17 5 20 8 10 30 14 20 3 12-4 11-8 17-25 7-5 40-3 33 2 21-8 16-13 7-17-1-30 13-50-5-13-31-30 2-3 15-14 13 1 17-7 6-9 1-11 6-6 10-1 23 11 17-3 17-22 32-29 7-14 1-13-12-40-12-12-19-5 0-13 6-13-9-14 8-13-2-17-8-10-16-10-5-10-16-6 5-3 13 2 3-4 7 15 23 11 7-1 17-14 4 7-5 3-10 20 4 19 9 8 13 0 6 23 15 7 4 20 20 18 20-1 13-13 13 3 20-3 7-5 10-17 1-12 2-2 9 9-5 16 6 7 7 1 1 6-14 3-6 7-1 12-34 21-9 13-2 14 3 10 11 13 11 33 10 13 13 4 27-2 17-11 6 6-1 7 4 7-8 23 5 10 10 7 0 3-3 9-15 14-3 14 5 16-2 47 5 13 9 10 38 18 16 4 20-5 17-16 7 0 10 6 10 14 13 6 26 50 14 9 13 3 14-3 16-15 10-2 27 1 27 6 16-4 30-48-1-20-8-10 3-3 16 3 4 13 6 6 10-5 6 6-6 10 6 6-11 14 5 30 7 6 13 3 17-9 3 6-1 7 3 3-5 9-16 8-3 7 2 10 12 6-5 14-10 6-14 0-8 7 0 27-25 40-1 16 14 20 14 37 13 10 20 9 14 1 16-8 7-15 7 0 6 4 4 12 6 7-9 27 3 4 10 3 2 9-11 10 1 10-3 4-33 20-16 23 0 13 6 13 10 6 14-1 8 9 2 10-1 7-5 6 1 17-9 11-23 12-4 7 0 7 8 16-5 24-22 16-3 17-6 13-12 10-10 17-35 40-10 23 2 14 8 13 35 40 10 17 12 10 6 13 3 17 22 16 5 24-8 16 1 10 26 16 9 11-2 13 6 10-1 17-8 9-14-1-9 5-7 14 0 13 16 23 33 20 3 4-1 10 11 10-2 9-10 3-3 4 9 27-6 7-4 12-6 4-7 0-7-15-16-8-14 1-20 9-13 10-14 37-15 23 2 13 25 40 0 27 8 7 21 3 8 13-2 5-10 5-2 10 3 7 20 13-2 17-2 3-17-9-20 8-5 31 11 14-6 6 6 10-6 6-10-5-6 6-4 13-10 3-9-3 8-10 1-20-30-48-16-4-27 6-27 1-10-2-16-15-14-3-13 3-14 9-26 50-13 6-10 14-10 6-7 0-17-16-20-5-20 5-36 19-12 21 2 47-5 20 3 10 15 14 3 9 0 3-10 7-5 10 8 23-4 7 1 7-6 6-17-11-27-2-13 4-10 13-11 33-11 13-3 10 2 14 9 13 34 21 1 12 6 7 14 3-1 6-7 1-6 7 5 16-9 9-2-2-1-12-10-17-7-5-20-3-13 3-13-13-20-1-20 18-4 20-15 7-6 23-13 0-9 8-4 19 10 20 5 3-4 7-17-14-7-1-23 11zM1112 1385l-3-3 3-3 3 3zM578 1556l-6-4 6-8 20 4 0 4zM1112 1721l-3-3 3-3 3 3z"/>
<path fill="#fec31e" d="M2378 2713l-12-8 7-3 12-16 11-4 7-10 1-20-8-10 8-7 3-7-8-13 0-13 19-3 14-11 13-43 0-13-9-17-34-28-7-16-7-7-16-3-17 6-10 7-10-1-6-5 2-6-6-14-20-9-13 2-15-13-2-3 32-27 7-13-1-13-14-40 5-30-8-20-16-14-25-9-33 6-44-4-16-29-14-11-13-5-17 3-35 16-8 10-3 23-27 17-17-25-6-3-17 3-13-8-7 0-7 3-3 10-7 5-16-7-17 1-2-2 9-10 2-14 12-6 5-10 0-7-10-13-7-20 21-17 7-10-2-57-15-17-43-6-22-20-18-3-20-10 7-17 1-20 7-17 0-16-19-27-21-20-8-43-17-26-17-17-27-10-30 6-56 23-30 36-34-13-16 2-40 25-4 10 0 20-14 10-9 13-10-25-19-11 0-13-9-24-15-11-14-1-34 9-9 7-13 20-27-17-20 6-23 1-14 9-10 16 1 21-6 14 4 13 4 3-3 6-16-6-10 9-14 1-2 14-14 4-2-4 6-4 2-6-5-7 21-13 5-14-5-26-24-17 25-12 5-11 0-14 14-6 19-17 6-10 2-13-10-44-7-13-16-10-34-7 2-43-5-13-9-9-47-17-17 0-16 8-12 11-8 13-10 0-17 10-3-3 7-23-4-10 9-14 7-20-1-13-5-10-27-27-10-6-16 0-24 11-16-29-37-12-23 1-14 6-13-7-17 1-10 6-13 20-13-22-7-5-17-3-13 4-7-5-13-1-30 2-10 6-7 16-10-2-9 6-11 29-3-6 0-29-7-6-10 1-3-12-7-5-50-4-10 2-6 5-7-6-25-2 0-4 8-3 4 3 16-3 4-5 6 5 10 2 44-2 9-3 7-16 10 1 7-6 0-29 3-6 11 29 9 6 10-2 7 16 10 6 30 2 13-1 7-5 13 4 17-3 7-5 13-22 13 20 10 6 17 1 13-7 14 6 23 1 37-12 16-29 24 11 16 0 10-6 27-27 5-10 1-13-7-20-9-14 4-10-7-23 3-3 17 10 10 0 8 13 12 11 16 8 17 0 47-17 9-9 5-13-2-43 34-7 16-10 7-13 10-44-2-13-6-10-19-17-14-6 0-14-5-11-25-12 24-17 5-26-5-14-21-13 5-7-2-6-6-4 2-4 14 4 2 14 14 1 10 9 16-6 3 6-4 3-4 13 6 14-1 21 10 16 14 9 23 1 20 6 27-17 13 20 9 7 34 9 14-1 15-11 9-24 0-13 19-11 10-25 9 13 14 10 0 20 4 10 40 25 16 2 34-13 30 36 56 23 30 6 27-10 17-17 17-26 8-43 21-20 19-27 0-16-7-17-1-20-7-17 20-10 18-3 22-20 43-6 15-17 2-57-7-10-21-17 7-20 10-13 0-7-5-10-12-6-2-14-9-10 2-2 17 1 16-7 7 5 3 10 7 3 7 0 13-8 17 3 6-3 17-25 27 17 3 23 8 10 35 16 17 3 13-5 14-11 16-29 44-4 33 6 25-9 16-14 8-20-5-30 14-40 1-13-7-13-32-27 2-3 15-13 13 2 20-9 6-14-2-6 6-5 10-1 10 7 17 6 16-3 7-7 7-16 34-28 9-17 0-13-13-43-14-11-19-3 0-13 8-13-3-7-8-7 8-10-1-20-7-10-11-4-12-16-7-3 12-8 6 15 24 12 7-1 17-15 4 7-6 3-10 20 4 20 8 8 15-1 4 10 0 13 16 7 1 18 22 22 22-1 13-15 13 4 20-3 8-5 2-10 7-7 1-13 2-2 9 9-6 16 7 7 7 1 0 6-15 3-5 7 0 11-35 19-12 16-2 14 5 13 13 13 11 37 9 10 11 3 30-3 17-13 6 6-2 7 5 7-4 3-6 20 6 10 11 7-2 10-16 13-6 13 7 20-5 50 5 14 7 8 47 21 13 3 24-9 13-16 7 1 10 6 10 14 13 5 23 53 17 11 13 3 17-5 17-18 33 0 30 8 17-5 28-50-2-20-9-10 3-3 16 4 3 12 7 7 10-5 6 5-6 10 6 6-12 13 4 31 6 6 16 4 17-9 3 5-2 7 4 3-5 8-13 6-7 6 2 14 12 6-4 14-10 5-17 0-8 8 0 10 4 10-1 7-9 16-19 24-2 16 18 24 11 33 10 10 26 11 14 2 16-9 7-17 7 0 6 4 3 12 6 4 1 10-10 13-1 7 5 6 10 1 1 9-11 10 2 7-3 7-9 3-7 9-17 6-14 15-5 10 1 17 5 10 10 7 17-3 8 9 1 10 0 7-6 6 2 17-12 13-22 10-4 7 0 7 10 16-5 24-23 16-6 27-16 13-9 17-37 40-11 23 8 24 40 43 9 17 16 13 6 27 23 16 5 24-10 16 0 7 4 7 22 10 12 13-2 17 6 6 0 7-1 10-8 9-17-3-10 7-5 10-1 17 5 10 14 15 17 6 7 9 9 3 3 7-2 7 11 10-1 9-10 1-5 6 1 7 10 13-1 10-6 4-3 12-6 4-7 0-7-17-16-9-14 2-26 11-10 10-11 33-18 27 2 13 19 24 9 16 1 7-5 13 3 10 6 5 17 0 10 5 4 14-11 4-3 12 3 7 21 13-3 7 1 10-2 2-17-9-20 7-6 33 12 14-6 6 6 10-6 5-10-5-7 7-3 12-10 4-9-3 9-10 2-20-28-50-17-5-30 8-33 0-17-18-17-5-13 3-17 11-23 53-13 5-10 14-10 6-7 1-13-16-24-9-13 3-47 21-7 8-5 14 5 50-7 20 6 13 16 13 2 10-11 7-6 10 6 20 4 3-5 7 2 7-6 6-17-13-30-3-11 3-9 10-11 37-13 13-5 13 2 14 12 16 35 19 0 11 5 7 15 3 0 6-7 1-7 7 6 16-9 9-2-2-1-13-7-7-2-10-8-5-20-3-13 4-13-15-22-1-22 22-1 18-16 7 0 13-4 10-15-1-8 8-4 20 10 20 6 3-4 7-17-15-7-1-24 12zM2365 394l-8-2 5-2 5 2zM1112 1385l0-5 3 2zM578 1555l-4-3 4-7 9 3 0 4zM618 1552l-3 2-5-6 5-2 6 2zM625 1552l-2-4 5 0zM1112 1720l0-5 3 3zM2365 2709l-8-1 8-2z"/>
<path fill="#ffbb0e" d="M2378 2712l-12-7 8-3 11-15 12-5 7-10 1-20-9-10 10-7 2-7-2-6-7-7 3-3-3-10 3-3 15 3 15-10 17-47 0-13-8-17-39-30-5-17-9-8-16-2-17 7-10 9-10-1-5-5 2-6-7-15-20-9-13 3-17-16 36-27 6-13-1-10-15-43 8-30-7-23-17-13-30-10-33 8-14-4-30 1-6-20-14-16-10-9-13-4-17 4-40 19-6 10 0 23-11 4-16 13-6-13-14-16-20 4-17-10-11 5-2 10-7 5-16-8-17 2-2-2 4-7 6-3 1-14 11-3 8-13 0-7-11-13-7-20 24-17 5-7 2-13-1-47-8-13-12-9-43-1-10-14-14-9-16 0-20-10 9-20 0-14 9-20 0-16-19-27-23-20-4-43-22-36-17-16-20-8-20 1-17 6-23 14-27 7-16 14-7 14-13 16-34-15-16 1-17 14-17 6-9 8-3 10 2 20-15 10-8 13-9-26-19-10 1-13-9-27-14-12-17-1-36 12-9 8-11 20-27-19-20 7-27 0-13 11-9 17 2 20-6 14 4 13 5 3-2 4-20-4-7 8-14 1-3 15-13 4-1-4 7-8-4-9 21-13 5-14-4-10 0-16-25-17 24-10 6-10 0-17 14-5 22-18 6-10 2-13-9-27-2-20-7-13-16-10-36-4 5-46-5-13-10-10-30-7-20-10-17 0-16 8-14 15-6 13-10 0-17 10-3-3 8-23-5-10 9-10 10-27-6-22-16-12-14-18-10-5-16 1-24 13-13-29-10-5-13 0-14-7-26 0-14 8-10-7-22 0-8 4-13 22-13-23-7-5-17-2-13 5-7-6-16-2-30 3-10 9-4 13-10-2-10 6-10 30-3-6 1-30-8-6-10 2-2-12-8-6-50-3-10 1-6 6-4-6-16-2-4 2-3-2 3-6 10 2 10-2 4-6 6 6 10 1 54-4 4-5 2-12 10 2 8-6-1-30 3-6 10 30 10 6 10-2 4 13 10 9 30 3 16-2 7-6 13 5 17-2 7-5 13-23 13 22 8 4 22 0 10-7 14 8 26 0 14-7 13 0 10-5 13-29 24 13 16 1 10-5 14-18 16-12 6-22-10-27-9-10 5-10-8-23 3-3 17 10 10 0 6 13 14 15 16 8 17 0 20-10 30-7 10-10 5-13-5-46 36-4 16-10 7-13 2-20 9-27-2-13-6-10-22-18-14-5 0-17-6-10-24-10 25-17 0-16 4-10-5-14-21-13 4-9-7-8 1-4 13 4 3 15 14 1 7 8 20-4 2 4-5 3-4 13 6 14-2 20 9 17 13 11 27 0 20 7 27-19 11 20 9 8 36 12 17-1 14-12 9-27-1-13 19-10 9-26 8 13 15 10-2 20 3 10 9 8 17 6 17 14 16 1 34-15 13 16 7 14 16 14 27 7 23 14 17 6 20 1 20-8 17-16 22-36 4-43 23-20 19-27 0-16-9-20 0-14-9-20 20-10 16 0 14-9 10-14 43-1 12-9 8-13 1-47-2-13-5-7-24-17 7-20 11-13 0-7-8-13-11-3-1-14-6-3-4-7 2-2 17 2 16-8 7 5 2 10 11 5 17-10 20 4 14-16 6-13 16 13 11 4 0 23 6 10 40 19 17 4 13-4 10-9 14-16 6-20 30 1 14-4 33 8 30-10 17-13 7-23-8-30 15-43 1-10-6-13-36-27 17-16 13 3 20-9 7-15-2-6 5-5 10-1 10 9 17 7 16-2 9-8 5-17 39-30 8-17 0-13-17-47-15-10-15 3-3-3 3-10-3-3 7-7 2-6-2-7-10-7 9-10-1-20-7-10-12-5-11-15-8-3 12-7 5 14 25 12 7 0 17-15 4 6-6 3-12 20 6 24 11 6 11-3 5 10-3 7 2 6 5 6 12 1 1 20 20 22 10 2 16-4 11-16 13 6 20-3 10-9 1-8 8-10-1-10 2-2 9 9-6 16 7 8 7 0 0 6-16 3-5 7 1 11-10 2-10 9-17 7-13 17-2 14 5 13 15 13 9 37 10 12 13 4 17-5 13 0 17-14 6 6-2 7 5 7-5 3-6 20 5 10 13 7-3 11-18 12-5 13 8 20-8 54 5 13 8 8 53 23 10 1 24-9 6-6 5-10 9-2 10 6 10 15 13 4 3 17 7 10 10 26 19 14 14 4 20-8 14-19 33 0 33 11 16-5 5-7 3-16 20-30-4-21-8-9 2-2 16 4 4 4-1 7 7 7 7-1 3-4 6 5-7 10 6 6-12 10 4 36 4 4 19 5 7-1 10-9 3 5-3 7 4 3-4 8-15 6-6 6 1 14 14 6-4 14-10 5-17-2-10 8-1 9 7 13-10 23-22 24-2 16 18 20 11 37 9 11 40 15 21-9 4-7 2-12 7-1 6 5 2 11 7 4 1 10-11 13-1 7 4 6 12 2 1 8-12 10 3 10-6 7-8 0-5 8-17 5-20 24 0 20 6 13 11 6 17-5 7 9 2 10 0 7-7 6 4 10-1 7-12 13-20 7-9 10 3 10 9 10 0 13-4 4-1 10-8 8-16 8-1 20-3 7-17 13-9 17-41 43-9 20 1 10 8 14 41 43 9 17 17 13 3 7 1 20 16 8 8 8 1 10 4 4 0 13-9 10-3 10 9 10 20 7 12 13 1 7-4 10 7 6 0 7-2 10-7 9-17-5-11 6-6 13 0 20 20 24 17 5 5 8 8 0 6 7-3 10 12 10-1 8-12 2-4 6 1 7 11 13-1 10-7 4-2 11-6 5-7-1-2-12-4-7-21-9-41 16-8 10-9 33-17 17-4 10 3 13 22 24 8 16 2 7-7 13 2 10 9 7 17-2 10 5 4 14-11 3-5 13 3 7 23 13 0 4-4 3 2 10-2 2-10-9-7-1-22 8-5 37 12 10-6 6 7 10-6 5-3-4-7-1-7 7 1 7-4 4-10 4-8-2 8-9 4-21-20-30-3-16-5-7-16-5-33 11-33 0-14-19-20-8-14 4-19 14-10 26-7 10-3 17-13 4-10 15-10 6-9-2-5-10-6-6-24-9-11 2-54 23-11 20 8 54-8 20 5 13 18 12 3 11-13 7-5 10 6 20 5 3-5 7 2 7-6 6-17-14-13 0-17-5-13 4-10 12-9 37-15 13-5 13 2 14 13 17 17 7 10 9 10 2-1 11 5 7 16 3 0 6-7 0-7 8 6 16-9 9-2-2 1-10-8-10-1-8-10-9-20-3-13 6-11-16-16-4-10 2-20 22-1 20-12 1-5 6-2 6 3 7-5 10-11-3-11 6-6 24 12 20 6 3-4 6-17-15-7 0-25 12zM582 1554l-7-2 3-7 7 3z"/>
<path fill="#ffb204" d="M2378 2712l-11-7 8-3 10-15 13-5 7-10 1-20-9-10 10-7 2-7-1-6-9-7 3-3-2-10 18 1 17-11 7-30 10-17 1-13-11-20-40-27-2-17-8-10-10-4-10 1-20 10-7 9-10-2-5-4 2-6-4-14-23-11-13 4-17-16 14-7 9-12 14-5 7-13 0-13-17-43 11-30-2-14-6-13-13-10-37-13-13 2-20 9-14-4-30 1-6-23-20-24-14-5-16 3-24 14-21 7-7 13 1 23-11 4-15 13-13-26-7-5-20 5-10-9-7-2-13 7-1 10-6 4-16-7-17 1 2-8 7-3 1-14 12-3 8-13-2-10-11-10-7-20 24-14 8-10 1-63-8-13-12-9-10-2-36 4-10-16-14-8-16 1-20-10 10-17 0-20 10-14 2-19-23-30-22-17-1-43-26-45-14-14-20-8-20 1-23 9-23 18-27 5-15 14-6 16-12 15-34-17-16 1-17 16-17 5-10 7-4 10 4 23-16 10-7 13-7-13 0-13-21-10 2-13-7-31-17-12-13-1-20 10-20 3-10 9-10 22-24-21-10 1-13 7-13-3-16 2-11 9-11 18 3 23-6 14 4 13 6 3-2 4-17-6-10 10-14 1-4 15-12 3-1-3 8-7-1-7-4-3 11-9 10-3 7-15-6-10 1-16-11-10-8-1-7-6 26-10 6-10-1-16 12-4 24-17 8-10 3-16-11-27-1-23-8-14-17-9-20 1-14-1-5-4 11-43-4-14-12-12-13-5-20-1-20-12-17 1-20 11-12 15-4 13-10-1-17 11-3-3 9-23-6-10 11-10 11-27-5-23-20-13-11-17-13-7-16 1-24 16-11-30-12-6-13 1-17-8-23 1-14 8-10-8-23 0-10 8-1 7-9 13-11-23-9-7-17-1-13 5-10-6-43 1-10 7-4 16-10-3-10 5-10 32-2-6 1-30-9-7-10 2-1-11-5-6-54-4-10 2-6 5-4-5-8-2 0-4 8-2 4-5 6 5 10 2 54-4 5-6 1-11 10 2 9-7-1-30 2-6 10 32 10 5 10-3 4 16 10 7 43 1 10-6 13 5 17-1 9-7 11-23 9 13 1 7 10 8 23 0 10-8 14 8 23 1 17-8 13 1 12-6 11-30 24 16 16 1 13-7 11-17 20-13 5-23-11-27-11-10 6-10-9-23 3-3 17 11 10-1 4 13 12 15 20 11 17 1 20-12 20-1 13-5 12-12 4-14-11-43 5-4 14-1 20 1 17-9 8-14 1-23 11-27-3-16-8-10-24-17-12-4 1-16-6-10-26-10 7-6 8-1 11-10-1-16 6-10-7-15-10-3-11-9 4-3 1-7-8-7 1-3 12 3 4 15 14 1 10 10 17-6 2 4-6 3-4 13 6 14-3 23 11 18 11 9 16 2 13-3 13 7 10 1 24-21 10 22 10 9 20 3 20 10 13-1 17-12 7-31-2-13 21-10 0-13 7-13 7 13 16 10-4 23 4 10 10 7 17 5 17 16 16 1 34-17 12 15 6 16 15 14 27 5 23 18 23 9 20 1 20-8 14-14 26-45 1-43 22-17 23-30-2-19-10-14 0-20-10-17 20-10 16 1 14-8 10-16 36 4 10-2 12-9 8-13-1-63-8-10-24-14 7-20 11-10 2-10-8-13-12-3-1-14-7-3-2-8 17 1 16-7 6 4 1 10 13 7 7-2 10-9 20 5 7-5 13-26 15 13 11 4-1 23 7 13 21 7 24 14 16 3 14-5 20-24 6-23 30 1 14-4 20 9 13 2 37-13 13-10 6-13 2-14-11-30 17-43 0-13-7-13-14-5-9-12-14-7 17-16 13 4 23-11 4-14-2-6 5-4 10-2 7 9 20 10 10 1 10-4 8-10 2-17 40-27 11-20-1-13-10-17-7-30-17-11-18 1 2-10-3-3 9-7 1-6-2-7-10-7 9-10-1-20-7-10-13-5-10-15-8-3 11-7 4 14 26 13 7 0 17-15 3 4-17 21 5 27 12 7 10-4 6 10-4 7 1 7 7 6 12 0-1 20 22 24 10 2 17-5 10-17 13 7 7-4 13 1 10-8 1-10 8-10-1-10 2-2 2 5 7 4-4 3-3 13 8 8 7 1 0 4-13 1-8 6-1 7 2 7-3 3-9 0-8 8-17 5-15 17-3 17 4 13 18 13 8 40 12 13 13 3 17-8 16 1 14-15 6 6-3 7 6 7-5 3-8 20 7 11 13 6-3 10-21 13-5 13 10 20-11 54 4 13 8 10 12 6 16 2 30 15 10 2 27-12 8-16 9-2 11 8 7 14 15 3 3 7-1 10 8 10 7 27 23 17 13 3 20-7 7-9 1-8 6-5 10-2 13 4 7-3 36 14 17-5 7-10 1-16 20-30-5-22-8-8 2-2 16 5 3 3-1 7 8 8 7-1 3-5 6 5-7 10 6 6-13 10 4 37 4 5 20 4 7-1 10-10 3 5-3 7 4 3-7 10-13 4-7 6 4 17 13 3-4 14-10 5-20-3-9 8-1 10 9 13-11 23-24 24-2 16 5 9 15 11 7 17 4 23 7 8 43 17 24-12 3-18 7-1 6 5 2 11 7 4 1 10-12 13-1 8 7 7 10 0 1 8-13 10 4 10-6 6-9 1-7 9-14 2-22 26 0 20 5 13 14 8 17-6 7 8 2 10 0 7-8 10 5 6-2 7-11 12-23 8-8 10 2 10 12 10 0 13-5 7 2 3-10 12-17 7 0 21-4 7-18 13-8 17-43 43-10 20 2 10 8 14 43 43 8 17 18 13 4 7 0 21 17 7 10 12-2 3 5 7 0 13-12 10-2 10 8 10 23 8 11 12 2 7-5 6 8 10 0 7-2 10-7 8-17-6-14 8-5 13 0 20 22 26 14 2 7 9 9 1 6 6-4 10 13 10-1 8-10 0-7 7 1 8 12 13-1 10-7 4-2 11-6 5-7-1-3-18-24-12-43 17-7 8-4 23-7 17-15 11-5 9 2 16 24 24 3 10 6 6 2 7-9 13 3 13 7 5 20-3 10 5 4 14-13 3-4 17 26 17 1 3-4 3 2 10-2 2-10-10-7-1-23 7-5 39 13 10-6 6 7 10-6 5-3-5-7-1-8 8 1 7-3 3-13 6-5-3 8-8 5-22-20-30-1-16-7-10-17-5-36 14-7-3-13 4-10-2-6-5-7-17-17-7-17 3-23 17-7 27-8 10 1 10-3 7-15 3-7 14-11 8-9-2-8-16-27-12-10 2-30 15-16 2-12 6-8 10-4 13 11 54-10 20 5 13 21 13 3 10-13 6-7 11 8 20 5 3-6 7 3 7-6 6-14-15-16 1-17-8-13 3-12 13-8 40-18 13-4 13 3 17 15 17 17 5 8 8 9 0 3 3-2 7 1 7 8 6 13 1 0 4-7 1-8 8 3 13 4 3-7 4-2 5-2-2 1-10-8-10-1-10-10-8-13 1-7-4-13 7-10-17-17-5-10 2-22 24 1 20-12 0-7 6-1 7 4 7-6 10-10-4-12 7-5 27 17 21-3 4-17-15-7 0-26 13zM582 1554l-7-2 3-6 7 2z"/>
<path fill="#ffaa00" d="M2378 2711l-10-6 7-3 2-7 8-7 10-3 10-10 2-23-10-10 11-7 2-7-2-7-9-6 3-3-2-10 15 3 20-10 8-33 12-17 1-13-11-20-17-8-6-9-19-10-1-20-10-10-10-4-10 1-20 12-7 9-10-1-5-4 3-6-5-16-23-10-13 4-17-15 15-7 8-12 17-4 7-13 0-14-20-43 14-27-1-17-4-13-16-13-40-13-13 2-20 12-14-6-26 4-5-3-3-20-16-22-10-9-10-3-22 8-18 12-23 6-7 12 3 26-12 4-14 12-4-12-8-7-1-8-7-4-20 6-10-11-7-1-13 6-3 5 2 7-6 4-16-8-17 2 2-8 8-3-2-7 2-6 13-4 9-13-1-10-14-10 0-9-7-11 28-14 5-6 2-20-3-17 5-20-1-13-9-14-14-9-10-1-16 5-20 1-9-16-15-9-6-1-10 4-20-10 11-17-1-17 12-16 3-20-25-32-23-15 5-33-2-11-27-49-17-17-20-7-20 3-23 9-23 21-27 4-17 15-5 18-11 15-34-19-16 0-20 20-14 2-12 9-4 10 6 23-16 10-7 13-6-13 0-13-21-10 2-13-6-34-16-12-16-2-20 13-20 2-11 9-9 23-24-22-13 2-10 7-13-3-17 1-10 7-12 22 4 23-7 14 5 13 5 3-1 4-17-6-10 10-14 0-6 16-10 3-1-3 8-7-1-7-4-3 8-3 3-6 10-1 8-17-6-10 2-13-3-7-24-13 10-6 10 0 6-3 6-11-2-15 13-4 10-9 17-9 7-10 4-16-3-10-11-17 2-23-7-14-19-12-23 3-18-4 13-43-3-14-12-15-14-6-23 2-20-14-20 2-13 7-16 18-4 15-10-1-17 12-3-3 10-23-6-10 9-7 13-23 2-17-7-17-20-10-8-17-10-7-13-3-10 2-24 19-3-4-3-23-14-10-16 2-7-7-13-3-20 2-14 9-10-9-20-1-12 7-2 10-9 12-8-12-2-10-7-7-20-2-13 5-7-6-16-1-37 4-10 20-7-2-10 5-6 19-5-8-1-17-8-5-6 1-4-9-6-7-48-3 0-4 8-2 40-1 6-7 4-9 6 1 8-5 1-17 5-8 6 19 10 5 7-2 10 20 37 4 16-1 7-6 13 5 20-2 7-7 2-10 8-12 9 12 2 10 12 7 20-1 10-9 14 9 20 2 13-3 7-7 16 2 14-10 3-23 3-4 24 19 10 2 13-3 10-7 8-17 20-10 7-17-2-17-13-23-9-7 6-10-10-23 3-3 17 12 10-1 4 15 16 18 13 7 20 2 20-14 23 2 14-6 12-15 3-14-13-43 18-4 23 3 19-12 7-14-2-23 11-17 3-10-4-16-7-10-17-9-10-9-13-4 2-15-6-11-6-3-10 0-10-6 24-13 3-7-2-13 6-10-8-17-10-1-3-6-8-3 4-3 1-7-8-7 1-3 10 3 6 16 14 0 10 10 17-6 1 4-5 3-5 13 7 14-4 23 12 22 10 7 17 1 13-3 10 7 13 2 24-22 9 23 11 9 20 2 20 13 16-2 16-12 6-34-2-13 21-10 0-13 6-13 7 13 16 10-6 23 4 10 12 9 14 2 20 20 16 0 34-19 11 15 5 18 17 15 27 4 23 21 23 9 20 3 20-7 17-17 27-49 2-11-5-33 23-15 25-32-3-20-12-16 1-17-11-17 20-10 10 4 6-1 15-9 9-16 20 1 16 5 10-1 14-9 9-14 1-13-5-20 3-17-2-20-5-6-28-14 7-11 0-9 14-10 1-10-9-13-13-4-2-6 2-7-8-3-2-8 17 2 16-8 6 4-2 7 3 5 13 6 7-1 10-11 20 6 7-4 1-8 8-7 4-12 14 12 12 4-3 26 7 12 23 6 18 12 22 8 10-3 10-9 16-22 3-20 5-3 26 4 14-6 20 12 13 2 40-13 16-13 4-13 1-17-14-27 20-43 0-14-7-13-17-4-8-12-15-7 17-15 13 4 23-10 5-16-3-6 5-4 10-1 7 9 20 12 10 1 10-4 10-10 1-20 19-10 6-9 17-8 11-20-1-13-12-17-8-33-20-10-15 3 2-10-3-3 9-6 2-7-2-7-11-7 10-10-2-23-10-10-10-3-8-7-2-7-7-3 10-6 4 13 30 14 16-14 4-1 3 3-6 4-11 17 4 28 10 6 6 1 7-5 3 3 3 7-5 7 2 9 7 5 12-1-3 20 24 27 10 1 17-5 7-7 3-12 13 7 7-4 13 2 11-9 0-10 9-10-1-10 9 7-3 3-4 13 9 8 7 1 0 3-7 3-7-1-8 6-1 7 3 7-3 3-7-2-10 9-17 4-18 19-3 17 6 16 19 10 6 42 14 15 13 2 17-10 16 1 14-15 6 5-3 7 6 7-6 3-8 20 8 12 13 5-6 13-20 10-5 13 11 20-3 24-9 20-1 13 4 13 8 10 11 5 20 1 30 17 10 2 29-15 7-16 8-1 11 7 6 14 15 3 4 7-2 10 9 10 1 20 5 10 24 17 13 4 21-8 7-10 0-10 9-5 7-2 13 5 7-4 36 16 20-6 7-11-3-13 22-33-6-24-6-4 0-4 16 5 3 3-1 7 8 9 10-7 6 5-8 10 7 6-2 4-9 2-4 4 6 40 28 7 13-12 3 5-3 7 4 3-7 10-15 4-6 6 4 17 13 7-3 10-10 4-20-4-10 8-2 12 11 13-3 7-6 6-3 12-23 18-5 10-1 10 6 10 17 10 8 17 2 23 8 10 44 17 25-13 3-10-1-8 7-2 6 5 1 11 8 4 1 10-13 12-1 11 8 6 10-1 1 8-5 6-9 4 5 7-6 9-10 1-6 9-14 1-24 27 1 26 6 10 14 8 17-9 6 8 3 10 0 7-9 6 6 10-2 7-6 3 1 4-13 9-18 4-8 10 2 10 14 10 0 13-6 7 3 3-10 11-17 6-2 7 2 16-4 7-19 13-7 17-10 7-38 40-8 16 8 20 38 40 10 7 7 17 19 13 4 7-2 16 2 7 17 6 10 11-3 3 6 7 0 13-14 10-2 10 8 10 18 4 13 9-1 4 6 3 2 7-6 10 9 6 0 7-3 10-6 8-17-9-14 8-6 10-1 26 24 27 14 1 6 9 10 1 6 9-5 7 9 4 5 6-1 8-10-1-8 6 1 11 13 12-1 10-8 4-1 11-6 5-7-2 1-8-3-10-25-13-44 17-8 10-2 23-8 17-17 10-6 10 1 10 5 10 23 18 3 12 6 6 3 7-11 13 3 14 9 6 20-4 10 4 3 10-13 7-4 17 6 6 18 7 4 7-4 3 2 10-2 2-13-12-27 6-7 41 4 4 9 2 2 4-7 6 8 10-6 5-10-7-8 9 1 7-3 3-13 6-5-3 8-6 6-24-22-33 3-13-7-11-20-6-36 16-7-4-13 5-7-2-9-5 0-10-4-8-20-10-14 3-27 18-5 10-1 20-9 10 2 10-4 7-15 3-6 14-11 7-8-1-7-16-29-15-10 2-30 17-20 1-11 5-8 10-4 13 1 13 9 20 3 24-11 20 5 13 20 10 6 13-13 5-8 12 8 20 6 3-6 7 3 7-6 5-14-15-16 1-17-10-13 2-14 15-6 42-19 10-6 16 3 17 18 19 17 4 10 9 7-2 3 3-3 7 1 7 8 6 7-1 7 3 0 3-7 1-9 8 4 13 3 3-9 7 1-10-9-10 0-10-11-9-13 2-7-4-13 7-3-12-7-7-17-5-10 1-24 27 3 20-12-1-7 5-2 9 5 7-3 7-3 3-7-5-6 1-10 6-4 28 11 17 6 4-3 3-4-1-16-14-30 14zM758 1501l-2-9 2-5 3 8zM662 1559l-4-6-6-1 0-4 6-1 4-6 6 6 9 1 0 4-9 1zM582 1554l-6-2 2-6 6 2zM758 1613l-2-5 2-9 3 6z"/>
<path fill="#f39900" d="M2378 2711l-8-6 36-30 2-23-11-10 11-6 3-8-3-8-9-5 4-3-3-10 19 3 19-10 6-33 12-14 3-16-14-24-17-5-6-10-19-8 2-20-10-12-20-5-23 15-7 10-10-2-4-3 3-6-4-17-25-10-10 6-20-16 16-7 7-11 17-3 8-12 1-17-22-43 17-27-5-33-12-11-47-15-13 3-20 13-14-6-26 5-5-3-1-20-18-27-20-10-26 11-17 13-23 4-6 13 5 26-13 3-13 13-13-29-7-4-20 7-10-11-7-1-16 9 0 12-7 2-13-8-17 2 3-9 7-2 0-12 13-4 11-14-1-10-16-10-6-20 29-13 6-7-3-37 7-20 0-13-9-14-18-12-46 8-8-16-16-10-16 3-20-9 12-17-2-17 13-15 5-21-28-34-22-13 5-43-19-30-8-24-16-18-17-7-20 1-33 14-20 22-30 5-17 16-2 14-11 18-34-22-16 1-20 22-14 0-15 11-3 10 8 23-17 10-6 13-6-13 1-13-22-10 4-13-5-10 1-21-6-12-10-5-20-3-20 15-24 2-10 12-6 21-24-24-13 2-10 9-13-5-20 2-8 7-13 23 6 23-8 14 5 13 6 3-2 4-16-7-10 10-14 0-7 17-9 1 7-8-5-10 11-8 11-2 8-17-7-10 1-20-26-13 10-6 16-2 7-12-3-15 13-3 30-17 11-28-2-10-15-17 5-23-6-14-23-14-23 4-18-3 17-47-16-28-13-6-27 4-20-16-22 3-11 6-18 21-2 15-10-2-17 13-3-3 11-23-7-10 12-9 14-25 0-10-5-20-23-10-6-16-10-10-26-2-24 21-9-33-14-5-13 3-17-9-26 1-11 9-10-9-26 0-8 7 0 10-9 11-8-21-9-8-21-2-12 6-7-6-46 0-10 6-7 17-7-3-10 5-6 19-4-24-10-6-6 2-10-17-24-2 7-6 18-1 9-16 6 2 10-6 4-24 6 19 10 5 7-3 7 17 10 6 46 0 7-6 12 6 21-2 9-8 8-21 9 11 0 10 8 7 26 0 10-9 11 9 26 1 17-9 13 3 14-5 9-33 24 21 26-2 10-10 6-16 23-10 5-20 0-10-14-25-12-9 7-10-11-23 3-3 17 13 10-2 2 15 18 21 11 6 22 3 20-16 27 4 13-6 16-28-17-47 18-3 23 4 23-14 6-14-5-23 15-17 2-10-11-28-30-17-13-3 3-15-7-12-16-2-10-6 26-13-1-20 7-10-8-17-11-2-11-8 5-10-7-8 9 1 7 17 14 0 10 10 16-7 2 4-6 3-5 13 8 14-6 23 13 23 8 7 20 2 13-5 10 9 13 2 24-24 6 21 10 12 24 2 20 15 20-3 10-5 6-12-1-21 5-10-4-13 22-10-1-13 6-13 6 13 17 10-8 23 3 10 15 11 14 0 20 22 16 1 34-22 11 18 2 14 17 16 30 5 20 22 33 14 20 1 17-7 16-18 8-24 19-30-5-43 22-13 28-34-5-21-13-15 2-17-12-17 20-9 16 3 16-10 8-16 46 8 18-12 9-14 0-13-7-20 3-37-6-7-29-13 6-20 16-10 1-10-11-14-13-4 0-12-7-2-3-9 17 2 13-8 7 2 0 12 16 9 7-1 10-11 20 7 7-4 13-29 13 13 13 3-5 26 6 13 23 4 17 13 26 11 20-10 18-27 1-20 5-3 26 5 14-6 20 13 13 3 47-15 12-11 5-33-17-27 22-43-1-17-8-12-17-3-7-11-16-7 20-16 10 6 25-10 4-17-3-6 4-3 10-2 7 10 23 15 20-5 10-12-2-20 19-8 6-10 17-5 14-24-3-16-12-14-6-33-19-10-19 3 3-10-4-3 9-5 3-8-3-8-11-6 11-10-2-23-36-30 8-6 3 13 25 13 6 2 13-10 3 1-12 20 6 27 10 5 13-5 3 3 0 24 7 5 11-2-3 20 25 29 30-6 7-19 13 8 10-5 10 3 12-10-1-10 9-10-1-10 9 7-7 16 16 12-15 2-8 6 3 14-3 2-7-1-13 10-14 1-21 21-3 17 6 16 21 10 5 44 16 16 16 0 14-11 16 2 14-16 6 5-4 7 7 7-6 3-10 20 10 13 13 4-6 13-20 8-7 15 13 20-16 57 3 15 10 11 13 5 20-1 40 20 30-16 6-17 8-1 10 7 6 14 16 3 1 17 9 10 3 30 28 20 13 4 24-10 6-11-1-10 15-7 13 6 7-5 33 18 25-5 7-14-5-13 23-33-6-24-7-8 16 5 1 10 9 9 10-7 5 5-7 10 7 6-2 4-14 6 6 40 5 5 24 2 13-12 0 12 4 3-7 10-16 4-6 6 4 17 14 7-3 10-10 4-23-5-10 11-1 10 12 13-2 7-7 6-2 11-26 19-6 20 6 10 16 6 6 8 6 16 0 24 8 8 46 17 26-15 1-18 7-2 6 6 0 10 8 4 1 10-12 11-2 12 7 7 12-1 0 7-14 10 6 7-6 9-10 0-6 10-14 0-26 28 1 26 5 10 17 9 17-10 9 18-1 7-8 6 5 10-6 14-13 9-21 4-7 10 2 10 16 10 0 13-6 7 2 3-9 11-18 6 1 23-4 7-19 12-7 18-50 47-8 16 8 20 50 47 9 20 17 10 4 7-1 23 18 6 9 11-2 3 6 7 0 13-16 10 0 14 10 8 23 6 12 15-6 10 9 10-4 20-8 4-13-9-13 5-9 14-1 26 26 28 14 0 6 10 10 0 6 6-6 10 13 6 1 10-14 1-5 9 3 10 11 10-1 10-8 4 1 10-7 6-8-3 0-17-22-15-50 17-8 8 0 24-6 16-6 8-16 6-6 13 6 17 26 19 2 11 7 6 2 7-12 13 4 15 10 6 20-5 10 4 3 10-14 7-4 17 6 6 19 7 4 7-4 3 1 10-14-10-27 4-8 43 14 6 2 4-7 6 7 10-5 5-10-7-9 9-1 10-13 6-5-3 9-6 6-24-23-33 5-13-7-14-25-5-33 18-7-5-13 6-15-7 1-10-6-11-24-10-13 4-28 20-3 30-9 10-1 17-16 3-6 14-10 7-8-1-6-17-30-16-40 20-23-1-13 7-8 11-2 16 16 54-13 20 7 15 20 8 6 13-13 4-10 13 10 20 6 3-7 7 4 7-6 5-12-15-18 1-17-12-17 3-12 14-5 44-21 10-6 20 3 13 21 21 14 1 13 10 7-1 3 2-3 14 8 6 15 2-16 12 7 16-9 7 1-10-9-10 1-10-12-10-10 3-10-5-13 8-7-19-30-6-25 29 3 20-11-2-7 5 0 24-3 3-13-5-10 5-6 27 12 20-3 1-13-10-6 2-25 13zM662 1559l-8-7 8-11 13 7zM582 1553l-6-1 2-6 6 2zM695 1553l-7-5 10 0z"/>
<path fill="#cb7800" d="M2388 2696l-6-4 23-14 5-23-2-7-10-6 11-4 3-10-2-10-10-3 4-3-3-10 11 5 28-9 5-36 15-10 5-20-16-27-17-2-8-11-19-7 4-23-11-12-16-7-10 0-24 20-3 10-10-2-3-28-17-2-10-8-10 8-20-16 17-5 6-12 20 0 8-10 3-23-16-17 2-10-12-16 21-24 1-30-4-13-13-10-36-5-20-10-30 22-14-8-26 7-4-3 1-20-14-16-3-17-24-12-30 17-13 14-13-3-15 4-5 13 9 30-13 2-13 14-2-12-9-7 1-10-10-6-20 9-10-14-10 0-14 8 1 15-7 1-3-6-7 2-3-4-17 3 3-8 9-3-2-10 13-3 14-17 0-11-17-7-3-14-7-5 17-13 10 3 13-9 0-28-7-13 14-23 0-14-30-29-14 0-16 12-20 3-7-18-17-10-6-1-10 6-20-9 15-17-5-17 13-10 11-20 1-10-8-10-17-9-10-15-21-9 10-43-21-30-5-30-23-28-17-6-17 3-40 21-16 26-30 1-20 19 0 17-10 17-11-10-9 0-17-18-13 2-14 13-6 14-14-2-20 14-2 10 12 23-18 10-5 12-6-12 3-15-23-8 4-10-5-13 6-27-5-10-11-6-26-5-10 5-14 17-20-2-12 14 1 14-5 9-20-27-17 2-10 12-10-7-23 0-10 7-14 25 0 12 8 10-9 17 6 13 7 3-8 3-7-7-7 1-6 10-14-1-6 16-7-15 10-8 13-2 8-17-8-10 3-20-27-13 8-6 10 3 8-4 7-13-5-13 3-3 10 1 10-12 26-6 12-30-5-14-17-13 9-23-6-17-29-17-23 10-17-3 6-10-1-10 13-13 5-14-4-13-17-23-15-5-24 11-20-21-30 5-26 29 0 15-10-2-17 13 10-25-8-10 12-7 1-10 14-13 3-10-5-28-10-6-17 0-3-21-10-10-30-2-24 26-3-32-20-9-13 5-7-8-33-1-14 10-6-9-27-2-13 10 1 10-8 10-7-21-9-9-24-1-10 5-7-6-23 0-7 4-16-3-10 3-7 20-7-3-10 4-6 20-4-25-10-6-6 4-7-16-13-3 16-10 4-13 6 4 10-6 4-25 6 20 10 4 7-3 7 20 10 3 16-3 7 4 23 0 7-6 10 5 24-1 9-9 7-21 8 10-1 10 13 10 27-2 6-9 14 10 33-1 7-8 13 5 20-9 3-32 24 26 32-3 8-9 3-21 17 0 10-6 5-28-3-10-14-13-1-10-12-7 8-10-10-25 17 13 10-2 0 15 26 29 30 5 20-21 24 11 15-5 17-23 4-13-5-14-13-13 1-10-6-10 17-3 23 10 29-17 6-17-9-23 17-13 5-14-12-30-26-6-10-12-10 1-3-3 5-13-7-13-8-4-10 3-8-6 27-13-3-20 8-10-8-17-13-2-10-8 7-15 6 16 14-1 6 10 7 1 7-7 8 3-7 3-6 13 9 17-8 10 0 12 14 25 10 7 23 0 10-7 10 12 17 2 20-27 5 9-1 14 12 14 20-2 14 17 10 5 26-5 11-6 5-10-6-27 5-13-4-10 23-8-3-15 6-12 5 12 18 10-12 23 2 10 20 14 14-2 6 14 14 13 13 2 17-18 9 0 11-10 10 17 0 17 20 19 30 1 16 26 40 21 17 3 17-6 23-28 5-30 21-30-10-43 21-9 10-15 17-9 8-10-1-10-11-20-13-10 5-17-15-17 20-9 10 6 6-1 17-10 7-18 20 3 16 12 14 0 30-29 0-14-14-23 7-13 0-28-13-9-10 3-17-13 7-5 3-14 17-7 0-11-14-17-13-3 2-10-9-3-3-8 17 3 3-4 7 2 3-6 7 1-1 15 14 8 10 0 10-14 20 9 10-6-1-10 9-7 2-12 13 14 13 2-9 30 5 13 15 4 13-3 13 14 30 17 24-12 3-17 14-16-1-20 4-3 26 7 14-8 30 22 20-10 36-5 13-10 4-13-1-30-21-24 12-16-2-10 16-17-3-23-8-10-20 0-6-12-17-5 20-16 10 8 10-8 17-2 3-28 10-2 3 10 24 20 10 0 16-7 11-12-4-23 19-7 8-11 17-2 16-27-5-20-15-10-5-36-28-9-11 5 3-10-4-3 10-3 2-10-3-10-11-4 10-6 2-7-5-23-23-14 6-4 24 14 14-10-2 10-9 7 6 20-2 10 13 7 13-6 2 2-1 24 6 6 14-3-6 13 2 10 10 4 16 26 34-10 3-18 10 9 13-6 10 4 12-9 0-13 8-9 5 2-5 14 16 6-6 4-10-1-7 7 1 16-10-2-7 9-19 1-4 9-18 11-5 13 7 27 25 6-3 17 7 10-3 19 16 18 17 3 17-16 20 1 10-17 6 5-5 7 8 7-7 3-12 20 13 15 13 2-6 12-24 7-7 17 3 10 14 10-7 14 2 10-13 16-4 20 2 17 8 10 19 7 20-7 43 26 31-19 6-20 7 0 10 6 3 14 19 3 3 7-3 13 10 10-2 27 36 28 10 3 28-15 5-13-3-10 14-6 13 7 7-7 33 22 26-3 10-16-8-17 3-7 22-26-8-24-10-6 5-2 13 6 0 9 10 11 10-8 5 4-8 10 6 10-10 0-6 6 6 10-1 30 8 8 7-3 20 3 7-7 3 3 0 13-22 7-6 6 7 20 14 4-6 12-27-7-10 4-9 21 16 11-1 9-9 6 0 10-30 20-7 20 7 14 20 3 5 7 6 16-2 27 7 9 17-1 37 18 23-16 4-13-4-7 7-2 8 9-2 8 8 2 1 10-12 9-3 16 10 7 10-2 0 6-16 10 8 7-6 9-10-2-10 13-11-3-5 9-24 17 5 40 22 13 17-13 8 17 0 7-10 6 1 7 6 3-9 16-10 6-19 2-12 10 2 16 13 1 6 6 0 13-7 7 3 3-9 10-22 7 5 17-4 13-12 10-8 0 1 10-7 10-13 7-7 12-37 31-7 13 7 17 37 31 7 12 13 7 7 10-1 10 8 0 12 10 4 13-5 17 22 7 9 10-3 3 7 7 0 13-6 6-13 1-2 16 12 10 19 2 10 6 9 16-6 3-1 7 10 6 0 7-8 17-17-13-22 13-5 40 24 17 5 9 11-3 10 13 10-2 6 9-8 7 16 10 0 6-10-2-10 7 3 16 12 9-1 10-8 2 2 8-8 9-7-2 4-7-4-13-23-16-37 18-17-1-7 9 2 27-6 16-5 7-20 3-7 14 7 20 30 20 0 10 9 6 1 9-16 11 9 21 10 4 27-7 6 12-14 4-7 20 6 6 22 7 0 13-3 3-7-7-20 3-7-3-8 8 1 30-6 10 6 6 10 0-6 10 8 10-5 4-10-8-10 11 0 9-13 6-5-2 10-6 8-24-22-26-3-7 8-17-10-16-26-3-33 22-7-7-13 7-14-6 3-10-5-13-28-15-10 3-36 28 2 27-10 10 3 13-3 7-19 3-3 14-10 6-7 0-6-20-31-19-43 26-20-7-19 7-8 10-2 17 4 20 13 16-2 10 7 14-14 10-3 10 7 17 24 7 6 12-13 2-13 15 12 20 7 3-8 7 5 7-6 5-10-17-20 1-17-16-17 3-16 18 3 19-7 10 3 17-25 6-7 27 5 13 18 11 4 9 19 1 7 9 10-2-1 16 7 7 10-1 6 4-16 6 5 14-5 2-8-9 0-13-12-9-10 4-13-6-10 9-3-18-34-10-16 26-10 4-2 10 6 13-14-3-6 6 1 24-2 2-13-6-13 7 2 10-6 20 9 7 2 10-14-10zM662 1555l-3-3 3-7 6 3z"/>
<path fill="#8f5200" d="M2388 412l-6-4 6-4 5 4zM2425 2691l-13-10-13 4 9-10-2-7 5-13-1-7-12-6 13-4 2-10-1-10-12-3 5-3-4-10 14 7 27-9 4-15-4-7 6-6-2-10 16-7 8-17-2-10-16-27-20 1-7-12-19-5 9-23-11-14-22-10-10 0-14 20-10 3-3 11-10-1-2-29-18-1-10-10-10 9-19-15 16-3 6-13 22 3 8-9 4-31-17-13 2-11-14-16 23-17 6-43-4-12-20-11-36-1-20-13-10 4-20 22-14-8-10 1-6 7-10 0-3-3 3-20-17-16 1-20-28-15-10 3-33 33-10-5-23 5-3 9 3 20 9 10 0 6-13 1-13 15-2-12-8-7 3-10-16-10-17 13-7-15-13 0-16 9 5 13-6 3-16-9-13 3-1-5 10-5-3-10 13-2 19-22-9-14-15-2 2-7-10-10 17-13 10 6 18-10-4-30-7-13 18-23 1-14-36-35-17 2-13 16-7-2-13 5-6-19-11-3-6-7-7-2-10 8-20-9 17-17-6-17 12-6 14-20 3-17-7-8-20-6-13-19-20-7 14-43-24-30 0-30-27-41-17-5-20 5-23 20-20 8-13 28-31-2-23 23 3 17-9 16-10-10-10 0-17-22-13 2-15 17-5 14-14-4-25 17 0 10 14 23-9 1-9 9-4 12-6-12 6-10-2-6-23-7 5-13-6-10 11-30-5-10-10-8-37-5-10 7-10 19-20-6-14 19 3 14-5 9-20-30-20 4-7 12-10-8-27 0-10 9-2 14-9 6-2 14 10 13-9 20 6 3 0 7 8 3-8 3-10-9-10 12-14-1-6 17-7-15 10-7 13-2 9-21-8-7 3-22-15-8-9 2-3-5 7-6 10 5 10-4 7-15-7-13 3-3 10 3 10-13 7 2 22-6 14-33-6-17-20-10 15-27-8-16-14-4-20-14-10 2-13 12-17-3 7-7-1-13 17-13 6-14-2-12-12-11-8-19-20-6-24 17-13-22-17-3-10 7-20 5-8 21-9 3 1 17-10-1-17 13 6-19 5-3 0-7-9-6 14-7 1-10 16-13 3-10-5-30-11-8-20 3 1-22-8-10-30-6-9 3-21 29 0-33-20-10-7 0-6 7-10-10-37 0-10 10-6-10-14 3-16-4-12 11 3 10-8 9-6-22-6-7-28-2-10 5-7-6-13 0 20-10 10 5 28-2 6-7 6-22 8 9-3 10 12 11 16-4 14 3 6-10 10 10 37 0 10-10 6 7 7 0 20-10 0-33 21 29 9 3 30-6 8-10-1-22 20 3 11-8 5-30-3-10-16-13-1-10-14-7 9-6 0-7-5-3-6-19 17 13 10-1-1 17 9 3 8 21 20 5 10 7 17-3 13-22 24 17 20-6 8-19 12-11 2-12-6-14-17-13 1-13-7-7 17-3 13 12 10 2 20-14 14-4 8-16-15-27 20-10 6-17-14-33-22-6-7 2-10-13-10 3-3-3 7-13-7-15-10-4-10 5-7-6 3-5 9 2 15-8-3-22 8-7-9-21-13-2-10-7 7-15 6 17 14-1 10 12 10-9 8 3-8 3 0 7-6 3 9 20-10 13 2 14 9 6 2 14 10 9 27 0 10-8 7 12 20 4 20-30 5 9-3 14 14 19 20-6 10 19 10 7 37-5 10-8 5-10-11-30 6-10-5-13 23-7 2-6-6-10 6-12 4 12 9 9 9 1-14 23 0 10 25 17 14-4 5 14 15 17 13 2 17-22 10 0 10-10 9 16-3 17 23 23 31-2 13 28 20 8 23 20 20 5 17-5 27-41 0-30 24-30-14-43 20-7 13-19 20-6 7-8-3-17-14-20-12-6 6-17-17-17 20-9 10 8 7-2 6-7 11-3 6-19 13 5 7-2 13 16 17 2 36-35-1-14-18-23 7-13 4-30-18-10-10 6-17-13 10-10-2-7 15-2 9-14-19-22-13-2 3-10-10-5 1-5 13 3 16-9 6 3-5 13 16 9 13 0 7-15 17 13 16-10-3-10 8-7 2-12 13 15 13 1 0 6-9 10-3 20 3 9 23 5 10-5 33 33 10 3 28-15-1-20 17-16-3-20 3-3 10 0 6 7 10 1 14-8 20 22 10 4 20-13 36-1 20-11 4-12-6-43-23-17 14-16-2-11 17-13-4-31-8-9-22 3-6-13-16-3 19-15 10 9 10-10 18-1 2-29 10-1 3 11 10 3 14 20 10 0 22-10 11-14-9-23 19-5 7-12 20 1 16-27 2-10-8-17-16-7 2-10-6-6 4-7-4-15-27-9-14 7 4-10-5-3 12-3 1-10-2-10-13-4 12-6 1-7-5-13 2-7-9-10 13 4 13-10-2 9-9 7 7 20-3 12 14 6 15-5 2 7-6 3 1 14 8 8 13-5-7 20 4 6 11 4 5 17 10 9 10 0 7-9 17-1 3-21 10 10 13-7 10 6 14-11-1-13 4-3 3 11 10 5-10 2-9 8 3 16-10-4-7 11-17-4-6 12-23 13-4 10 7 33 29 3-5 17 9 13-8 17 25 25 13-1 17-20 20 3 10-19 5 5-4 7 7 7-19 16-1 7 11 7 3 10 14 0-6 12-24 2-10 22 3 10 17 10-8 14 1 13-14 10-7 37 5 12 30 13 20-11 43 30 11-4 6-13 17-7 5-20 5 0 9 6 3 14 8 5 10-4 5 9-4 13 11 10-8 20 2 11 20 8 20 22 10 2 33-20 2-16-4-7 13-6 13 8 7-8 10 10 10 1 10 14 33-3 10-23-11-13 2-7 9-4 1-9 13-13-7-10-1-14-10-6 17 4-1 9 11 12 10-2-3 10 7 3-4 6-10-3-5 7 7 10-4 10 4 4 0 23 35 2 7-8 4 9-4 9-6-2-22 13 8 20 15 4-5 6 2 4-9 3-20-11-10 2-12 26 9 10 10 2-1 8-10 6 3 7-6 6-10 7-10 0-15 17-3 13 12 19 20-2 5 7 5 16-5 27 8 13 23-3 10 4 17 16 7 0 25-20 3-13-4-7 6-2 7 9-1 9 7 1 2 10-12 7-5 19 12 7 6-3 3 6-16 9 3 8 5 0-5 9-12-2 0 6-8 7-13-5-3 11-27 17 5 40 22 16 13-4 7-11 8 16 0 7-12 7 0 6 9 3-2 7-7 3 0 6-10 6-16-1-17 11-2 12 4 10 8 2 7-5 6 6 0 13-8 7 4 3-16 13-18 4-1 7 9 6-5 17-11 10-10 0 2 10-6 10-13 5-5 12-42 33-9 13 9 17 40 32 7 13 13 5 6 10-2 10 10 0 11 10 5 17-9 6 1 7 18 4 16 13-4 3 8 7 0 13-6 6-7-5-10 5 1 21 16 9 23 3 11 14-8 10 12 10-2 17-6 6-9-13-18 0-17 17 1 23-4 14 27 17 3 11 13-5 8 7 0 6 12-2 5 6-8 11 13 4 3 8-17 3-4 7 5 16 12 7-2 10-7 1 0 12-10 6-1-22-29-21-30 21-23-3-8 13 5 27-5 16-5 7-14-4-9 4-10 20 4 10 15 17 10 0 14 10-1 10 10 6 1 8-10 2-9 10 12 26 10 2 20-11 9 3-2 4 5 6-15 4-8 20 22 13 6-2 3 15-3 3-7-8-35 2 0 23-4 4 4 10-7 10 5 7 10-3 4 6-7 3 3 10-10-2-11 12 3 7-15 8-4-2 10-6 1-14 7-10-13-13-1-9-9-4-2-7 11-13-10-23-33-3-10 14-10 1-10 10-7-8-13 8-13-6 4-7-2-16-33-20-10 2-20 22-20 8-2 11 8 20-11 10 4 13-5 9-10-4-8 5-3 14-9 6-5 0-5-20-17-7-6-13-11-4-43 30-20-11-30 12-5 13 6 34 15 13-1 13 8 14-17 10-3 10 10 22 24 2 6 12-14 0-3 10-11 7 1 7 19 16-7 7 4 7-5 5-10-19-20 3-17-20-13-1-25 25 8 17-9 13 5 17-29 3-7 33 4 10 23 13 6 12 17-4 7 11 10-4-3 16 9 8 10 2-10 5-3 11-4-3 1-13-14-11-10 6-13-7-10 10-3-21-17-1-7-9-10 0-10 9-5 17-11 4-4 6 7 20-13-5-8 8-1 14 6 3-2 7-15-5-14 6 3 12-7 20 9 7zM762 1598l-2-26-12-7-6 5 0-10-11-8 11-12 0-10 6 5 12-7 2-26 0 16 16 10 9-3-2 9 6 11 21 3 6-5 13 5-13 9-6-5-21 3-6 11 2 9-9-3-16 10zM665 1553l-6-1 3-6 5 2zM2388 2696l-6-4 3-3 8 3z"/>
<path fill="#512d00" d="M2392 410l-10-2 6-3zM2422 420l-7-2 10-9zM2408 2682l-6 0 7-7-3-7 6-16-10-10 10-3 2-17-6-7-8 0 8-6 14 0 6-7 7 5 8-5 5-17-6-7 7-6-3-10 16-3 11-27-15-20-3-14-7-2-16 6-6-14-19-3-2-3 13-17 0-10-36-22-14 1-10 24-10 0-3 13-7 0-5-3 4-26-12-4-10 3-3-9-7-3-10 11-19-15 16-2 6-13 24 5 9-10-1-17 6-16-21-14 3-10-12-10-2-6 22-10 4-7-1-27 10-16-4-15-23-13-40 4-7-11-13-6-20 14-1 10-9 6-14-9-13 3-3 6-10 0 0-27-17-12 5-24-35-17-10 5-7 16-13 6-10 14-10-6-20-1-7 4-3 9 6 27 10 7 0 6-13 0-13 16-1-12-9-7 5-10-18-12-17 15-7-18-15 2-16 10 6 13-5 2-6-6-7 2-7-5-3-16 13 0 22-24-12-16-13 2 1-9-10-10 9-3 7-10 10 7 16-2 6-5 0-10-9-14 2-13-8-10 23-23 3-14-17-16-13-7-10-17-20 2-13 21-7-3-13 5-7-21-10-1-13-10-10 10-5-6-14-3 18-17-8-17 15-6 6-14 10-6 3-17-7-10-25-4-4-13-9-8-10 1-10-6 5-10 0-10 14-20-15-23-14-10 6-27-18-40-12-14-20-6-28 13-15 20-17 4-6 6-14 30-23-8-7 3-6 12-17 13 6 17-9 16-10-11-13-2-11-22-13-1-20 23-3 13-14-5-10 11-6-1-13 9 1 10 12 10 5 13-9 0-10 10-3 12 0-8-6-4 8-10-2-6-23-6-3-4 8-7-8-13 17-30-4-10-14-12-20 4-20-10-13 11-1 13-6 7-16-9-7 2-13 23 4 11-4 9-4-9-7-4-2-16-7-4-20 5-7 14-10-10-10 3-17-4-12 12-1 13-10 7-1 17 11 10-11 17 7 10-3 3-10-3-6 12-5-6 11-20-8-10 5-20-29-13 6-5 10 5 10-3 0-7 9-10-8-13 2-3 10 4 8-5 2-9 23 2 10-6 3-17 12-16-8-19-22-8 19-27-1-10-9-11-17 0-8-12-15-4-20 17-16-3 9-13-3-7 21-13 5-10-1-17-17-13-5-22-27-5-20 21-10-24-20-4-10 10-10-2-10 5-9 14-1 10-9 3 2 17-6-3-10 6-4-10 6-3 0-7-9-6 15-7-1-10 19-13 2-14-5-10 5-13-15-15-23 7 4-25-11-11-16 2-10-7-12 2-18 29-5-9 2-23-21-9-10 2-3 7-7-10-40-1-10 11-3-10-13-1-4 3-13-4-15 9 2 13-7 8-6-11 2-10-6-7-30-3 3-6 27-1 6-7-2-10 6-11 7 8-2 13 15 9 13-4 4 3 13-1 3-10 6 3 1 8 27 2 17-3 6-10 7 9 20-4 9-8-4-20 5-9 18 29 12 2 10-7 16 2 11-11-4-25 23 7 15-15-5-13 5-10-2-14-19-13 1-10-15-7 9-6 0-7-6-3 4-10 10 6 6-3-2 17 9 3 1 10 9 14 10 5 10-2 10 10 20-4 10-24 20 21 27-5 5-22 17-13 1-17-5-10-21-13 3-7-9-13 16-3 20 17 15-4 8-12 17 0 9-11 1-10-19-27 22-8 8-19-12-16-3-17-10-6-23 2-2-9-8-5-10 4-2-3 8-13-9-10 0-7-10-3-10 5-6-5 29-13-5-20 8-10-11-20 5-6 6 12 10-3 3 3-7 10 11 17-11 10 1 17 10 7 1 13 12 12 17-4 10 3 10-10 7 14 20 5 7-4 2-16 7-4 4-9 4 9-4 11 13 23 7 2 16-9 6 7 1 13 13 11 20-10 20 4 14-12 4-10-17-30 8-13-8-7 3-4 23-6 2-6-8-10 6-4 0-8 3 12 10 10 9 0-5 13-12 10-1 10 13 9 6-1 10 11 14-5 3 13 20 23 13-1 11-22 13-2 10-11 9 16-6 17 17 13 6 12 7 3 23-8 14 30 6 6 17 4 15 20 28 13 20-6 12-14 18-40-6-27 14-10 15-23-14-20 0-10-5-10 10-6 10 1 9-8 4-13 25-4 7-10-3-17-10-6-6-14-15-6 8-17-18-17 14-3 5-6 10 10 13-10 10-1 7-21 13 5 7-3 13 21 20 2 10-17 13-7 17-16-3-14-23-23 8-10-2-13 9-14 0-10-6-5-16-2-10 7-7-10-9-3 10-10-1-9 13 2 12-16-22-24-13 0 3-16 7-5 7 2 6-6 5 2-6 13 16 10 15 2 7-18 17 15 18-12-5-10 9-7 1-12 13 16 13 0 0 6-10 7-6 27 3 9 7 4 20-1 10-6 10 14 13 6 7 16 10 5 35-17-5-24 17-12 0-27 10 0 3 6 13 3 14-9 9 6 1 10 20 14 13-6 7-11 40 4 23-13 4-15-10-16 1-27-4-7-22-10 2-6 12-10-3-10 21-14-6-16 1-17-9-10-24 5-6-13-16-2 19-15 10 11 7-3 3-9 10 3 12-4-4-26 5-3 7 0 3 13 10 0 10 24 14 1 36-22 0-10-13-17 2-3 19-3 6-14 16 6 7-2 3-14 15-20-11-27-16-3 3-10-7-6 6-7-5-17-8-5-7 5-6-7-14 0-8-6 8 0 6-7-2-17-10-3 10-10-6-16 3-7-7-7 3-2 13 6-5 10 8 13-4 3 1 11 14 5 15-6 2 7-7 3 1 14 9 9 10-3-6 14 2 7 14 5 6 21 10 9 13-2 4-9 7 2 11-3 5-20 7 10 13-8 10 6 14-12-1-13 4-3 3 11 8 2 1 3-9 1-10 9 4 16-10-5-7 12-17-6-7 7 1 6-23 10-8 14 7 10 2 26 8 4 23-4-7 17 11 13-11 10-1 7 29 29 13 0 13-13 4-11 20 3 8-18 7 3-5 7 8 7-21 16-2 7 14 7 1 10 13 3-1 7-12 5-10-5-7 3-1 10-9 13 2 10 21 10-10 14 3 13-17 10 0 13-10 24 5 16 36 14 13-7 7-9 43 34 14-6 3-15 20-7 1-17 6-3 13 13-3 7 10 6 10-5 4 9-4 14 11 6 0 10-10 13 2 13 7 5 13-1 20 26 13 6 37-25-1-17-5-7 13-6 12 9 4 0 4-9 10 12 6-2 10 17 40-2 10-26-6-10-8-3 4-9 8-1 3-13 12-10-11-17 5-10 5 3-4 7 25 23-3 5-10-3-6 8 8 10-5 7 5 7-2 24 10 4 7-6 20 4 7-9 2 16-31 10-1 7 8 6 2 11 15 3-12 13-20-13-10 0-16 30 13 11 9 2-1 7-10 6 4 7-16 13-13 0-16 17-4 10 13 24 14 2 10-6 3 3 7 20-7 30 7 12 10 2 10-8 6 1 7 6 3-2 17 19 7 1 10-14 17-10 1-13-4-7 6-2 7 9-1 10 7 0 2 10-13 6-5 20 10 7 9-3 3 3-3 8-13 2 1 10 7 0-5 9-13-3 1 7-8 7-13-8-3 14-30 16 6 11-3 28 20 19 20-3 7-13 6 6-2 7 3 10-12 10 9 6-2 7-7 3 3 4-12 7-13 2-3-3-19 10-3 17 5 9 10 3 7-8 5 6 1 13-10 7 6 3-16 13-20 2-2 9 12 6-5 17-11 9-10-1 2 12-6 10-13 3-7 14-43 33-10 13 6 14 34 23 3 8 17 12 0 7 13 3 6 10-2 12 10-1 11 9 5 17-12 6 2 9 20 2 16 13-6 3 10 7-1 13-5 6-7-8-11 5-4 7 5 19 17 8 3-3 13 2 10 5-1 6 9 6-9 10 12 10-3 10 2 7-6 6-7-13-20-3-20 19 3 28-7 10 4 6 27 11 3 14 13-8 8 7-1 7 13-3 5 6-1 5-7-1 0 9 13 2 3 8-3 3-9-3-10 7 5 20 13 6-2 10-7 0 1 10-7 9-6-2 4-7-1-13-17-10-10-14-7 1-17 19-3-2-7 6-24-7-9 14 7 30-7 20-3 3-10-6-14 2-13 24 4 10 16 17 13 0 16 13-4 7 10 6 1 7-9 2-13 11 16 30 10 0 20-13 12 13-15 3-2 11-8 10 23 13 7-2 2 15-2 3-7-9-20 4-7-6-10 4 2 24-5 7 5 7-8 10 6 8 10-3 3 5-25 23 4 7-5 3-5-10 11-17-12-10-3-13-8-1-4-9 8-3 6-10-10-26-40-2-10 17-6-2-10 12-4-9-4 0-12 9-13-6 5-7 1-17-37-25-13 6-20 26-13-1-7 5-2 13 10 13 0 10-11 6 4 14-4 9-10-5-10 6 3 7-13 13-6-3-1-17-20-7-3-15-14-6-43 34-7-9-13-7-36 14-5 16 10 24 0 13 17 10-3 13 10 14-21 10-2 10 9 13 1 10 7 3 10-5 12 5 1 7-13 3-1 10-14 7 2 7 21 16-8 7 5 7-7 3-8-18-20 3-4-11-13-13-13 0-29 29 1 7 11 10-11 13 7 17-23-4-8 4-2 26-7 10 8 14 23 10-1 6 7 7 17-6 7 12 10-5-4 16 10 9 9 1-1 3-8 2-3 11-4-3 1-13-14-12-10 6-13-8-7 10-5-20-11-3-7 2-4-9-13-2-10 9-6 21-14 5-2 7 6 14-10-3-9 9-1 14 7 3-2 7-15-6-14 5-1 11 4 3-8 13 5 10zM1275 1121l-10 0-3-6-6 0 6-14 3 13 13 4zM765 1580l-13-15-9 0-1-7-8-6 9-17 9 0 13-15 3 5 16 3 5 17 10 3-10 7-5 17-16 3zM818 1556l-4-4 4-8 4 4zM858 1557l-9-5 6-9 10 5zM1262 1999l-6-14 6 0 3-6 10 0 3 3-13 4zM2425 2691l-10-9 7-2zM2392 2692l-10 0 6-4z"/>
<path fill="#1d1100" d="M2408 2682l-6 0 8-7-4-7 7-16-6-7 8-13 0-14-9-6 16-2 6-7 9 5 8-6 4-17-6-7 7-6-4-10 16 0 15-27-18-23 2-10-5-7-8-2-16 8-4-13-20-3-2-3 16-17 0-11-7-7-23-5-10-14-16 4-8 26-10-1-3 13-7 1-5-3 3-3-3-10 5-3 0-11-13-4-10 4-3-9-7-4-10 12-9-8 12-21 24 7 10-6-1-24 8-16-24-14 4-10-13-10-2-6 28-14-2-30 13-13-1-21-7-6-27-8-16 8-20 0-6-13-18-8-18 18 1 10-9 6-10-10-17 3-3 7-10-1-3-12 6-6-3-10-17-10 10-24-40-22-13 8-5 18-12 4-10 16-8-7-12 1-10-5-12 7-1 10 9 17-2 10 12 7-1 6-8-2-10 6-7 12 0-13-10-6 7-10-20-14-17 17-4-6 1-9-7-6-29 15 6 14-7 1-3-7-9 2-6-7 3-3-5-10 3-3 10 5 10-15 13-7 1-7-14-15-13 4 1-9-10-10 11-3 5-9 6 7 20 1 9-6 1-13-12-14 3-13-10-10 28-23 2-17-21-15-10-2-6-20-7-5-23 4-10 24-7-4-13 6-6-11 2-10-13-1-13-12-10 12-4-6-15-3 18-14-7-20 14-5 4-11 13-7 6-23-7-10-29-2-3-12-10-9-10 2-10-6 7-10-2-10 17-20-16-24-16-9 10-27-15-23-2-22-13-18-24-6-31 19-12 22-20 3-10 12 0 16-7 10-23-11-7 2-7 16-18 13 7 17-8 16-7-11-16-2 1-6-12-22-13 0-10 10 0 8-10 7-3 16-14-7-10 13-6-3-15 8 0 13 15 11 5 12-9-1-13 14-5-3 8-10-1-6-28-10 9-7-9-13 21-27-2-13-16-16-10-1-14 8-16-13-20 15 1 13-5 7-16-12-8 2-5 17-9 10 6 10-4 9-13-19 2-10-9-7-7 0-7 8-7-1-6 14-10-10-10 4-13-6-7 2-10 10 0 14-12 8 3 7-4 10 12 10-6 3 3 7-8 7 5 6-10 3-3-3 4-13-9-7 5-22-16-8 13-4 3-6-2-3 9-7-9-16 12 2 13-12 25 0 11-10-2-14 13-10 2-6-9-21-6-3-10 3-8-6 24-27-2-10-11-13-10-3-10 4-7-13-16-5-20 19-13-5 6-10-2-7 24-13 4-7-1-23-19-10 1-24-10-6-24-2-20 26-10-29-22-2-8 12-10-2-12 7-8 11 0 11-10 3 0 11-13 9-2-9 6-3-1-7-10-6 17-7-2-10 17-10 5-13-6-14 7-13-8-13-10-6-20 9-3-3 7-17-3-10-14-9-13 6-14-9-16 9-5 20-5 4-5-8 6-20-8-9-10 2-13-6-7 9-5-9-17-3 2-5 15-2 5-9 7 9 13-6 10 2 8-9-6-20 5-8 5 4 5 20 16 9 14-9 13 6 14-9 3-10-7-17 3-3 20 9 10-6 8-13-7-13 6-14-5-13-17-10 2-10-17-7 10-6 1-7-6-3 2-9 13 9 0 11 10 3 0 11 8 11 12 7 10-2 8 12 22-2 10-29 20 26 24-2 10-6-1-24 19-10 1-23-4-7-24-13 2-7-6-10 13-5 20 19 16-5 7-13 10 4 10-3 11-13 2-10-24-27 8-6 10 3 6-3 9-21-2-6-13-10 2-14-11-10-25 0-13-12-12 2 9-16-9-7 2-3-3-6-13-4 16-8-5-22 9-7-4-13 3-3 10 3-5 6 8 7-3 7 6 3-12 10 4 10-3 7 12 8 0 14 10 10 7 2 13-6 10 4 10-10 6 14 7-1 7 8 7 0 9-7-2-10 13-19 4 9-6 10 9 10 5 17 8 2 16-12 5 7-1 13 20 15 16-13 14 8 10-1 16-16 2-13-21-27 9-13-9-7 28-10 1-6-8-10 5-3 13 14 9-1-5 12-15 11 0 13 15 8 6-3 10 13 14-7 3 16 10 7 0 8 10 10 13 0 12-22-1-6 16-2 7-11 8 16-7 17 18 13 7 16 7 2 23-11 7 10 0 16 10 12 20 3 12 22 31 19 24-6 13-18 2-22 15-23-10-27 16-9 16-24-17-20 2-10-7-10 10-6 10 2 10-9 3-12 29-2 7-10-6-23-13-7-4-11-14-5 7-20-18-14 15-3 4-6 10 12 13-12 13-1-2-10 6-11 13 6 7-4 10 24 23 4 7-5 6-20 10-2 21-15-2-17-28-23 10-10-3-13 12-14-1-13-9-6-20 1-6 7-5-9-11-3 10-10-1-9 13 4 14-15-1-7-13-7-10-15-10 5-3-3 5-10-3-3 6-7 9 2 3-7 7 1-6 14 29 15 7-6-1-9 4-6 17 17 20-14-7-10 10-6 0-13 7 12 10 6 8-2 1 6-12 7 2 10-9 17 1 10 12 7 10-5 12 1 8-7 10 16 12 4 5 18 13 8 40-22-10-24 17-10 3-10-6-6 3-12 10-1 3 7 17 3 10-10 9 6-1 10 18 18 18-8 6-13 20 0 16 8 27-8 7-6 1-21-13-13 2-30-28-14 2-6 13-10-4-10 24-14-8-16 1-24-10-6-24 7-12-21 9-8 10 12 7-4 3-9 10 4 13-4 0-11-5-3 3-10-3-3 5-3 7 1 3 13 10-1 8 26 16 4 10-14 23-5 7-7 0-11-16-17 2-3 20-3 4-13 16 8 8-2 5-7-2-10 18-23-15-27-16 0 4-10-7-6 6-7-4-17-8-6-9 5-6-7-16-2 9-10-3-16-5-7 6-7-7-16 4-7-8-7 3-2 13 6-6 10 9 13-5 3 2 13 17 4 11-7 2 7-7 3 1 14 10 10 10-3-7 12 3 11 14 3-2 7 6 3 1 10 11 11 14-3 3-10 7 3 13-4 3-20 7 11 13-9 10 8 15-14-1-13 3-3 3 3 0 13-10 10 0 7-11 7 0 6-19-5-8 9 1 6-19 6-11 8-2 10 9 13-4 17 4 10 7 3 25-7-7 17 11 13-14 10 0 10 5 6 10 2 16 22 11 2 6-4 2-8 10-6 2-12 20 4 6-12 12 10-25 20 7 10 8 0 2 11 12 2 0 7-12 5-10-7-7 2-4 6 3 7-11 13 2 12 22 8-10 14 4 13-15 3-5 7 4 10-15 27 2 17 43 16 15-10 5-9 19 12 18 24 6 2 17-9 0-15 20-5-2-10 3-10 6-3 13 13-3 8 10 6 10-5 4 8-6 6 1 10 11 4 1 10-11 10 1 20 12 4 10-4 13 13 7 17 13 6 10-5 4-9 24-12 3-7-9-20 12-6 6 9 10 1 4-9 10 12 6-3 10 20 14-4 27 3 12-30-6-10-10-3 2-7 10-3 2-13 6-1 7-9 0-10 11 6 0 7 7 7-12-3-8 9 9 10-4 7 4 7-4 13 3 14 11 3 9-8 4 5 3-4 10 4 7-9 2 15-28 7-6 6 10 10 2 13 9 1-6 13-23-17-10 3-2 11-14 20 16 13 8 0 0 7-11 6 5 7-12 5-4 7-13-1-3 9-18 10-3 10 17 27 14 1 10-8 3 3 6 30-9 20 10 16 11 1 8-10 7 0 17 10 10 16 10 1 4-14 22-13-4-20 5-2 7 9-1 11 7 0 1 9-14 6-4 24 23 3-3 8-15 2 2 10 8 0-5 8-13-4-3 6 3 3-7 6-13-9-4 3 1 13-33 14 0 7 9 6-3 32 23 19 20-7 4-12 6 5-3 7 4 10-13 10 2 6 8 0-2 7-8 3 4 4-25 9-3-4-20 11-4 17 7 11 11 2 6-9 5 6 1 13-11 7 7 3-16 13-21 1-2 12 12 4 0 10-7 4 3 3-11 9-12-2-2 3 6 10-6 10-15 3 2 7-7 7-10 4-3 8-36 24-8 10 8 14 49 36 7 7-2 7 15 3 6 10-6 10 2 3 12-2 15 16 0 10-13 6 3 10 21 1 16 13-7 3 11 7-1 13-5 6-4-8-10-2-9 11 4 23 19 8 3-4 13 2 10 6 0 8 4-2 3 5-9 10 13 10-4 10 3 7-6 5-4-12-16-7-7 2-22 19 5 30-10 10 7 8 17 2 10 7-1 13 4 3 13-9 7 6-3 3 3 6 13-4 5 5-1 4-7-1-2 10 15 2 3 8-13 0-11 7 5 20 14 6-1 9-7 0 0 12-6 8-5-2 4-20-19-10-3-13-7-5-10 4-14 20-4-3-6 7-7 0-8-10-11 1-10 16 9 20-6 30-3 3-10-8-14 1-17 27 3 10 18 10 3 9 13-1 4 7 12 5-5 7 11 6 0 7-8 0-14 9-1 8 18 30 10-2 20-15 6 7 0 6-9 1-2 13-10 10 25 13 7-2 2 15-9-7-10 4-3-4-4 5-9-8-11 3-3 14 4 13-4 7 4 7-9 10 8 9 10-4 2 5-18 16-4-16-9-4-1-11-10-4-3-8 10-3 6-10-9-28-7-3-23 4-14-4-10 20-6-3-10 12-4-9-10 1-6 9-12-6 9-20-3-7-24-12-7-12-10-2-11 6-6 17-13 13-10-4-12 4-1 20 11 10-1 10-11 4-1 10 6 6-4 8-10-5-10 6 3 8-13 13-6-3-3-10 2-10-20-5 0-15-17-9-6 2-18 24-19 12-5-9-15-10-41 13-5 17 16 30-4 10 5 7 15 3-4 13 10 14-22 8-3 9 12 16-3 7 4 6 7 2 10-7 12 5 0 7-12 2-2 11-8 0-7 10 25 20-12 10-6-12-20 4-2-12-10-6-2-8-6-4-11 2-16 22-10 2-5 6 0 10 14 10-11 13 7 17-25-7-7 3-4 10 4 17-9 13 2 10 11 8 19 6-1 6 8 9 19-5 0 6 11 7 0 7 10 10 0 13-3 3-3-3 1-13-15-14-10 8-13-9-7 11-3-20-13-4-7 3-3-10-14-3-11 11-1 10-6 3 2 7-14 3-3 11 7 12-10-3-10 10-1 14 7 3-2 7-11-7-17 4-2 13 5 3-9 13 6 10zM2572 533l-6-1 2-7zM2622 655l-3-3 3-8 5 4zM2285 678l-9-3 6-5 6 5zM2968 844l-6-2-1-7 4-10 4 3-4 7 6 7zM1285 1132l-7-10 4-6 5 9zM1262 1190l-6-5 2-4 13 4zM905 1582l-5-10 2-11-13-9 13-13-2-11 5-10 6 7-3 14 17 9-17 13 3 14zM765 1578l-11-13-10 0 0-7-9-6 9-17 10 0 11-13 17 6 6 17 5 3-11 24zM962 1564l-6-2-1-8-13-1-4 4-13-9 13-5 4 4 13-1 3-10 6 2 1 9 26 1-3 5-23 0zM818 1556l-3-4 3-8 3 4zM858 1556l-7-4 4-8 9 4zM1258 1919l-2-4 6-5 9 5zM1282 1984l-4-6 7-10 2 7zM2968 2273l-6-1-1-7 4-10 6 3-6 7zM2282 2430l-6-5 9-3 3 3zM2622 2456l-3-8 3-3 5 7zM2568 2575l-2-7 6-1z"/>
<path fill="#030300" d="M2415 454l-6-16 3-6 9 13zM2412 2647l-4-2 8-27-10-6 16-1 6-8 4 6 6 0 8-7 4-17-7-7 8-3-4-13 15 2 17-26-4-13-16-13 4-14-15-8-16 11-4-15-16 2-5-6 18-15 0-12-7-10-26-4-4-11-6-5-17 2-8 31-9-2-3 13-7 1-5-2 4-3-4-10 7-7-2-10-13-2-10 4-2-8-8-5-10 12-9-11 16-18 20 10 11-5 3-10-4-17 8-6 2-14-24-7 2-13-5-7-9-3-1-6 13-8 10 2 6-8-3-30 14-10 2-26-7-7-32-8-16 11-7-4-10 4-5-3-2-10-20-12-6 4-6 15-7 3-1 12-6 4-10-11-10 5-4-4-6 10-10-1-3-12 7-6-3-10-18-10 13-17-1-10-25-9-17-14-15 10-3 20-12 3-10 16-10-8-10 2-10-7-17 10 1 10 12 17-3 12 10 2 2 9-8-3-11 7-6 11 0-13-10-5 8-10-21-16-17 19-3-18-7-5-30 16 7 15-7 0-3-7-8 3-7-7 4-3-5-10 2-3 11 6 9-16 15-7 1-7-16-17-13 5 2-8-11-10 12-3 4-9 6 9 10-3 14 5 6-4 3-18-12-7-3-7 5-6-2-7-10-10 13-6 3-9 13-5 6-20-25-17-11 0-3-20-7-7-30 4-4 23-9-2-13 7-1-8-5-3 2-12-13 1-13-13-10 13-4-6-15-3 12-13 7-1 1-6-7-4-2-10 15-3 6-16 13-4 7-27-10-10-17 5-13-3-2-12-11-10-10 3-10-6 8-10-2-10 20-20-21-27-15-6 13-27-17-23 2-20-18-31-10-5-14 2-33 24-10 23-20 2-12 15-2 6 4 7-7 13-23-13-7 1-7 19-9 2-11 11 9 17-8 16-7-13-16 0 2-6-6-7-3-17-7-4-10 2-11 12 1 10-10 5-3 18-14-9-10 14-6-3-18 9 1 13 17 11 5 12-9-2-13 15-5-3 9-10 0-6-30-10 10-7-10-13 7-4 2-11 16-12-1-13-21-20-10 0-14 10-16-17-21 17-3 6 5 10-5 7-16-15-10 4-4 18-9 10 6 6-3 13-13-19 3-13-10-6-9 2-5 8-8-1-5 14-7-11-13 4-13-7-8 3-12 17 3 7-13 9 3 7-3 11 12 9-6 3 3 7-8 7 5 6-10 2-2-8 4-7-9-7 5-23-17-7 16-6-2-7 11-10-5-10 9 0 10-13 22 3 15-10 2-7-5-10 15-6 4-10-13-24-16 2-8-5 8-12 17-8 3-7-1-10-16-17-10-1-10 5-5-13-18-5-17 11-3 9-13-5 7-10-2-7 24-12 6-8 1-23-7-7-16-3 6-17-3-11-10-7-13 3-14-3-10 7-1 14-9 7-8-30-25-3-7 14-10-3-13 8-1 7-6 4 1 10-11 3-1 13-12 9-3-2 7-17-10-6 16-6 0-8 17-13 5-13-7-14 8-6 1-10-11-15-13-3-17 11-3-3 10-17-2-10-18-12-13 8-14-10-16 9-1 12-9 14-4-8 6-20-9-11-10 4-4-6-13 0-3 9-3-9-18-3 1-4 17-3 3-9 3 9 13 0 4-6 10 4 9-11-6-20 4-8 9 14 1 12 16 9 14-10 13 8 18-12 2-10-10-17 3-3 17 11 13-3 11-15-1-10-8-6 7-14-5-13-17-13 0-8-16-6 10-6-7-17 3-2 12 9 1 13 11 3-1 10 6 4 1 7 13 8 10-3 7 14 25-3 8-30 9 7 1 14 10 7 14-3 13 3 10-7 3-11-6-17 16-3 7-7-1-23-6-8-24-12 2-7-7-10 13-5 3 9 17 11 18-5 5-13 10 5 10-1 16-17 1-10-3-7-17-8-8-12 8-5 16 2 13-24-4-10-15-6 5-10-2-7-15-10-22 3-10-13-9 0 5-10-11-10 2-7-16-6 17-7-5-23 9-7-4-7 2-8 10 2-5 6 8 7-3 7 6 3-12 9 3 11-3 7 13 9-3 7 12 17 8 3 13-7 13 4 7-11 5 14 8-1 5 8 9 2 10-6-3-13 13-19 3 13-6 6 9 10 4 18 10 4 16-15 5 7-5 10 3 6 21 17 16-17 14 10 10 0 21-20 1-13-16-12-2-11-7-4 10-13-10-7 30-10 0-6-9-10 5-3 13 15 9-2-5 12-17 11-1 13 18 9 6-3 10 14 14-9 3 18 10 5-1 10 11 12 10 2 7-4 3-17 6-7-2-6 16 0 7-13 8 16-9 17 11 11 9 2 7 19 7 1 23-13 7 13-4 7 2 6 12 15 20 2 10 23 33 24 14 2 10-5 18-31-2-20 17-23-13-27 15-6 21-27-20-20 2-10-8-10 10-6 10 3 11-10 2-12 13-3 17 5 10-10-7-27-13-4-6-16-15-3 2-10 7-4-1-6-7-1-12-13 15-3 4-6 10 13 13-13 13 1-2-12 5-3 1-8 13 7 9-2 4 23 30 4 7-7 3-20 11 0 25-17-6-20-13-5-3-9-13-6 10-10 2-7-5-6 3-7 12-7-3-18-6-4-14 5-10-3-6 9-4-9-12-3 11-10-2-8 13 5 16-17-1-7-15-7-9-16-11 6-2-3 5-10-4-3 7-7 8 3 3-7 7 0-7 15 30 16 7-5 3-18 17 19 21-16-8-10 10-5 0-13 6 11 11 7 8-3-2 9-10 2 3 12-12 17-1 10 17 10 10-7 10 2 10-8 10 16 12 3 3 20 15 10 17-14 25-9 1-10-13-17 18-10 3-10-7-6 3-12 10-1 6 10 4-4 10 5 10-11 6 4 1 12 7 3 6 15 6 4 20-12 2-10 5-3 10 4 7-4 16 11 32-8 7-7-2-26-14-10 3-30-6-8-10 2-13-8 1-6 9-3 5-7-2-13 24-7-2-14-8-6 4-17-3-10-11-5-20 10-16-18 9-11 10 12 8-5 2-8 10 4 13-2 2-10-7-7 4-10-4-3 5-2 7 1 3 13 9-2 8 31 17 2 6-5 4-11 26-4 7-10 0-12-18-15 5-6 16 2 4-15 16 11 15-8-4-14 16-13 4-13-17-26-15 2 4-13-8-3 7-7-4-17-8-7-6 0-4 6-6-8-16-1 10-6-8-27 4-2 10 12 23 0-5 3 1 14 11 11 10-3-7 8 3 16 13 1-2 7 6 3 0 10 13 14 14-4 6-10 18-3 2-20 7 12 13-9 10 7 10-12 6 2-9 10 3 3-12 7-1 8-17-8-10 9 0 10-16 1-14 10-1 13 11 10-7 20 7 11 7 2 10-8 13 2-6 15 10 5 2 6-16 8 0 16 4 4 13 0 13 24 14 4 6-3 3-13 11-6 0-11 20 4 6-13 12 10-26 20 8 11 6-3 4 14 10-1 1 9-11 5-10-8-7 0-6 9 4 7-13 17 2 10 25 6-11 14 5 13-16 2-6 8 6 10-16 20-5 17 6 13 12 4 10-4 26 12 17-21 10 11 8 1 22 29 23-12-3-14 20-4 3-9-5-3 5-7-2-3 6-3 13 13-3 10 13 5 7-6 4 8-7 6 1 10 12 4 0 10-12 10 2 23 13 2 10-4 13 12 4 17 16 11 11-5 6-16 24-10 2-7-11-20 12-6 6 10 10 1 7-8 7 11 6-4 6 6-1 13 5 4 14-7 30 5 11-32-7-10-9-3 0-7 11-3 1-13 9-3 7-14 7 4 0 6 8 7-13-4-8 10 10 10-5 7 4 10-4 10 4 17 14 0 6-7 4 4 3-3 10 3 9-7-2 15-7-3-20 7-7 7 4 8 7 2 2 14 10 0 0 6-6 7-20-17-10-3-5 3 0 14-16 20 3 6 22 7 1 7-12 6 6 7-6 5-6-1-4 8-13-3 0 8-24 13-4 10 11 10 7 18 17 1 10-8 2 2 7 30-11 17 8 21 17 1 7-11 6-1 4 6 6-2 10 9 4 14 13 3 7-7-3-10 23-12 0-14 6 12 7 0 1 8-14 6-5 24 24 3-3 7-16 3 3 11 8-1-5 8-13-5-4 7 4 3-7 6-10-11-7 2 1 16-7 1-3 6-18 0-8 7 2 10 10 3 0 17-7 10 2 7 9 0 16 19 20-8 4-13 6 5-3 7 4 10-14 9 10 11-3 4-6-1 2 8-23 8-3-5-4 5-17 4-4 20 8 14 13 0 4-10 5 6 0 13-11 7 8 3-16 13-13-3-10 3-3 11 6 6 7-2 2 12-7 4 2 3-10 9-14-2 6 13-6 10-16 3 3 7-10 10-7 0-3 9-38 24-9 10 4 10 43 28 3 9 10 3 7 7-3 7 16 3 6 10-6 13 14-2 10 9-2 3 7 4-2 12-7-2-6 6 3 11 10 3 13-3 16 13-8 3 11 7 0 13-5 6-4-10-13 0-8 14 4 20 17 4 4 5 3-5 13 4 10 4-2 8 6-1 3 4-10 7 2 7 12 6-4 10 3 7-6 5-4-13-23-6-13 17-11 4 7 13 0 17-10 3-3 7 9 10 18 0 3 6 7 1-1 16 7 2 10-11 7 6-4 3 4 7 15-4 3 7-8-1-3 11 16 3 3 7-23 2-2 5 6 20 13 5 0 9-7 0-6 12 0-14-23-12 3-10-7-7-13 3-4 14-10 9-6-2-4 6-6-1-7-11-13-1-12 20 11 20-7 30-2 2-10-8-17 1-7 18-11 10 4 10 24 13 0 8 13-3 4 8 6-1 6 5-6 7 12 6-1 7-22 7-2 10 15 16-2 10 7 7 10-3 20-17 3 3 3 10-10 0-2 14-7 2-4 8 7 7 20 7 7-3 2 15-9-7-10 3-3-3-4 4-6-7-14 0-4 17 4 10-4 10 5 7-10 10 8 10 13-4-15 17-7-14-9-3-1-13-11-3 0-7 9-3 7-10-8-30-10-4-23 7-14-7-5 4 1 13-6 6-6-4-7 11-7-8-10 1-6 10-12-6 11-20-2-7-24-10-6-16-11-5-16 11-4 17-13 12-10-4-13 2-2 23 12 10 0 10-12 4-1 10 7 6-4 8-7-6-13 5 3 10-13 13-6-3 2-3-5-7 5-3-3-9-20-4 3-14-23-12-22 29-8 1-10 11-17-21-26 12-10-4-12 4-6 13 5 17 16 20-6 10 6 8 16 2-5 13 11 14-25 6-2 10 13 17-4 7 6 9 7 0 10-8 11 5-1 9-10-1-4 14-6-3-8 11 26 20-12 10-6-13-20 4 0-11-11-6-3-13-6-3-14 4-13 24-13 0-4 4 0 16 16 8-2 6-10 5 6 15-13 2-10-8-7 2-7 11 7 20-11 10 1 13 14 10 16 1 0 10 10 9 17-8 1 8 12 7-3 3 9 10-6 2-10-12-10 7-13-9-7 12-2-20-18-3-6-10-14-4-13 14 0 10-6 3 2 7-13 1-3 16 7 8-10-3-11 11-1 14 5 3-23 0zM2575 511l-3-16 3-3 3 13zM2622 655l0-11 5 4zM2285 678l-9-3 6-5 6 5zM2968 843l-6-1 3-7 5 3zM1285 1131l-3-15 5 9zM1262 1190l-4-8 13 3zM905 1581l-3-22-11-7 11-11 3-22 5 6-2 15 12 8-5 10-7 2 2 15zM765 1578l-3-9-17-7-9-10 2-8 24-13 3-9 17 8 8 18-8 22zM962 1563l-6-1-1-9-9-1 0-4 9-1 3-11 5 2-3 4 5 6 20 0-3 5-17-1-5 6zM855 1555l-3-3 3-7 8 3zM938 1557l-3-5 3-9 4 5zM1268 1918l-11-3 5-5 9 5zM1282 1984l3-15 2 6zM2968 2263l-5-1 2-6 5 2zM2282 2430l-6-5 9-3 3 3zM2622 2456l0-11 5 7zM2575 2608l-3-3 3-16 3 6zM2412 2668l-3-6 6-16 6 9z"/>
<path fill="#000208" d="M2418 447l-9-9 3-6 9 13zM2415 2642l3-24-5-3 15-12 4 7 6 1 10-9 3-17-8-7 9-3-5-13 16 3 7-17 11-10-4-13-17-13 6-14-18-11-16 14-3-16-20 0 6-13 13-5 0-12-10-13-10 3-6-5-10 1-2-13-5-5-22 2-2 17-4 3 4 7-6 8-7-5-10 15-4-2 4-3-4-10 7-7 0-10-16-3-10 5-1-8-9-7-6 3-4 11-9-11 16-17 20 11 10-2 3-5 2-10-5-17 10-5 1-18-25-4 4-13-7-9-7 2-3-9 10-7 13 3 8-10-4-30 16-10 6-20-2-10-9-6-25-1-10-7-16 14-7-4-10 4-5-3-1-10-17-15-11 5-4 13-10 7 1 12-6 4-10-11-10 5-4-5-6 11-10-1-3-12 8-6-3-10-19-10 16-17-2-13-27-7-17-17-18 14 0 20-12 2-10 17-10-9-10 2-10-9-20 12 0 11 16 17-3 13 10 2 2 8-9-3-10 7-6 11 0-15-9-3 8-10-22-18-17 21-7-24-33 15 1 13 6 4-24-11 4-3-6-10 14 3 6-13 9-2 12-15-19-19-13 7 3-8-12-10 12-3 4-9 6 10 10-4 14 7 9-4 3-20-14-7-4-7 6-6-2-7-11-10 13-4 3-10 13-3 10-23-6-9-37-11 4-7-7-20-15 0-9 6-10-2-5 6 5 14-4 6-9-2-13 6 0-7-6-3 4-4-2-10-13 2-13-13-7 4-3 10-12-13 2-6 14-7-10-7-2-10 17-3 4-16 13-1 11-30-14-14-13 7-17-1-2-12-11-11-10 4-10-6 8-10-2-10 17-11 5-12-15-10-7-14-16-6 15-27-18-23 4-20-11-29-10-12-10-3-14 3-16 13-7 13-13 5-10 26-17-3-15 20 5 10-7 13-13-5-10-10-7 0-7 22-9 1-15 16 12 13-7 15-7-5 0-8-16 1 3-6-7-7-3-23-17 0-13 16 3 10-10 4-3 19-14-11-10 16-6-4-20 9 1 14 19 12 5 11-9-2-13 14-5-2 5-9 5-1-1-6-7-6-7 3-10-7-3 3-2-3 9-4 1-6-10-10 7-4 1-11 20-12-2-17-14-6-10-13-14 2-10 11-10-17-6-3-10 5-14 18 4 13-4 7-16-17-12 4-2 18-10 11 6 7-2 7-13-13 5-7-2-8-14-7-10 12-10-1-3 15-7-12-13 5-13-8-9 4-12 17 4 6-14 7 4 10-3 13 12 7-6 2-2 5 5 3-9 7-1-7-9-7 4-23-17-7 14-3 4-7-4-3 12-10-6-7 9-2 10-13 20 3 17-8 4-10-6-10 19-6 2-7-16-30-16 5-7-5 7-11 18-6 5-6 0-15-13-7-5-12-12 0-10 6-3-13-10 0-10-6-17 12-3 10-12-5 15-25 17-4 4-8-3-7 6-10-7-14-19-2 9-20-7-14-10-5-13 6-14-6-10 9-1 16-9 6-5-29-8-6-10 6-10-6-7 8 0 9-10-4-13 8-1 8-7 4 2 10-12 3-1 13-11 9 4-19-4-6-6 0 16-6 0-8 17-13 7-13-9-14 8-4 4-12-9-7-3-10-15-3-17 13-2-3 11-17-2-12-10-2-7-10-10 0-6 10-7-11-7-1-16 9-1 14-9 13-3-17 6-10-10-13-7 0-3 6-3-7-14 0-3 10-3-10-15-2 0-4 15-2 3-10 3 10 14 0 3-7 3 6 7 0 10-13-6-10 3-17 9 13 1 14 16 9 7-1 7-11 6 10 10 0 7-10 10-2 2-12-11-17 2-3 17 13 15-3 3-10 9-7-4-12-8-4 9-14-7-13-17-13 0-8-16-6 6 0 4-6-4-19 11 9 1 13 12 3-2 10 7 4 1 8 13 8 10-4 0 9 7 8 10-6 10 6 8-6 5-29 9 6 1 16 10 9 14-6 16 6 10-9 4-10-9-20 19-2 7-14-6-10 3-7-4-8-17-4-15-25 12-5 3 10 17 12 10-6 10 0 3-13 10 6 12 0 5-12 13-7 0-15-5-6-18-6-7-11 7-5 16 5 16-30-2-7-19-6 6-10-4-10-17-8-20 3-10-13-9-2 6-7-12-10 4-3-4-7-14-3 17-7-4-23 9-7 1-7 9 7-5 3 2 5 6 2-12 7 3 13-4 10 14 7-4 6 12 17 9 4 13-8 13 5 7-12 3 15 10-1 10 12 14-7 2-8-5-7 13-13 2 7-6 7 10 11 2 18 12 4 16-17 4 7-4 13 14 18 10 5 6-3 10-17 10 11 14 2 10-13 14-6 2-17-20-12-1-11-7-4 10-10-1-6-9-4 2-3 3 3 10-7 7 3 7-6 1-6-5-1-5-9 5-2 13 14 9-2-5 11-19 12-1 14 20 9 6-4 10 16 14-11 3 19 10 4-3 10 13 16 17 0 3-23 7-7-3-6 16 1 0-8 7-5 7 15-12 13 15 16 9 1 7 22 7 0 10-10 13-5 7 13-5 10 15 20 17-3 10 26 13 5 7 13 16 13 14 3 10-3 10-12 11-29-4-20 18-23-15-27 16-6 7-14 15-10-5-12-17-11 2-10-8-10 10-6 10 4 11-11 2-12 17-1 13 7 14-14-11-30-13-1-4-16-17-3 2-10 10-7-14-7-2-6 12-13 3 10 7 4 13-13 13 2 2-10-4-4 6-3 0-7 13 6 9-2 4 6-5 14 5 6 10-2 9 6 15 0 7-20-4-7 37-11 6-9-10-23-13-3-3-10-13-4 11-10 2-7-6-6 4-7 14-7-3-20-9-4-14 7-10-4-6 10-4-9-12-3 12-10-3-8 13 7 19-19-12-15-9-2-6-13-14 3 6-10-4-3 24-11-6 4-1 13 33 15 7-24 17 21 22-18-8-10 9-3 0-15 6 11 10 7 9-3-2 8-10 2 3 13-16 17 0 11 20 12 10-9 10 2 10-9 10 17 12 2 0 20 18 14 17-17 27-7 2-13-16-17 19-10 3-10-8-6 3-12 10-1 6 11 4-5 10 5 10-11 6 4-1 12 10 7 4 13 11 5 17-15 1-10 5-3 10 4 7-4 16 14 10-7 25-1 9-6 2-10-6-20-16-10 4-30-8-10-13 3-10-7 3-9 7 2 7-9-4-13 25-4-1-18-10-5 5-17-2-10-3-5-10-2-20 11-16-17 9-11 4 11 6 3 9-7 1-8 10 5 16-3 0-10-7-7 4-10-4-3 4-2 10 15 7-5 6 8-4 7 4 3 2 17 22 2 5-5 2-13 10 1 6-5 10 3 10-13 0-12-13-5-6-13 20 0 3-16 16 14 18-11-6-14 17-13 4-13-11-10-7-17-16 3 5-13-9-3 8-7-3-17-10-9-6 1-4 7-15-12 5-3-3-24 5 7 25 0-6 3 4 7-3 7 12 12 6-5 4 2-8 7 4 18 12-1-2 8 7 3 0 10 13 14 16-5 4-10 4 3 15-6 1-20 7 13 13-10 7 7 7-2 6 5-13 7 0 8-13-9-6 1-9 10 1 8-6-2-4 6-6-3-17 14 1 13 12 7-5 3 2 7-6 10 6 10 7 6 13-10 14 4-8 13 11 4 2 6-18 7 2 23 17-1 2 8 8 3 0 13 20 5 7-7 0-11 11-6-1-11 13 6 10-3 3-11 6 5-4 14-11 3-8 10 11 9 6-4 4 15 6-3 5 10-11 5-17-11-8 12 5 7-11 10-3 17 29 6-11 10 4 17-15 0-8 10 8 10-7 13-11 7-7 20 3 10 19 7 10-7 26 15 17-23 30 25 3 15 7 3 23-13-3-16 23-6 0-7-4-3 2-10 6-3 13 13-3 11 6-1 7 6 7-6 3 7-7 6 2 10 12 7-4 12-10 5 0 23 18 3 9-5 13 12 3 20 17 11 14-8 3-16 27-10 1-7-13-20 12-6 6 11 10 1 7-9 7 12 6-5 6 6-4 13 8 7 14-10 23 9 10-2 4-7-4-10 9-20-17-17 11-2 1-14 9-2 7-14 6 6-13 16 10 10-4 7 4 13-5 7 3 17 17 0 5-6 4 3 3-3 3 4 10-1 5-7-1 14-4-3-10 6-6-1-15 10 5 9 7 1 1 14 10 0 1 6-6 7-27-22-11 5 2 14-16 16-1 7 3 5 10-1 7 8 6-1 0 7-10 2 0 7 5 3-5 5-6-2-4 9-13-5-3 3 3 7-28 13-3 10 14 10 7 21 17-1 10-9 2 2 4 10-4 4 7 6 0 10-13 17 10 24 18-1 6-12 6-1 4 7 6-3 10 9-3 4 5 10 15 6 9-10-5-10 10-3 3-6 10-2 0-15 6 13 7 0-3 3 4 4-8 6-6-2 1 6-8 20 26 3-3 7-17 3 4 11 7-1-4 8-13-7-4 9 4 3-7 6-6-10-7-2-8 6 5 13-7 1-3 6-21 0-7 7 1 10 13 3 0 17-10 13 4 6 10-1 16 20 20-9 7-12 3 3-3 7 3 10-12 6-2 7 10 7-2 4-7-1 3 8-23 8-3-6-4 6-19 4 2 7-6 13 10 16 10 0 12-6 0 13-12 7 8 3-15 13-23-1-3 16 6 4 7-4 2 12-8 4 3 3-10 9-16-2 0 6 7 4-5 13-16 2 2 8-9 9-8 1-2 9-10 3-40 31 6 10 44 28 2 9 11 4 6 6-2 8 16 2 5 13-7 4 0 6 16-2 10 9-3 3 8 4-2 12-7-4-6 4 0 11 13 8 13-4 15 13-8 3 3 4 9 3-2 15-7-7-11-2-11 14 5 16-2 7 19 4 4 6 3-6 23 8-3 8 7-1 2 4-10 7 1 4 13 9-3 20-7-12-20-9-16 20-12 1-1 7 9 10 0 17-13 3-1 10 7 7 21 0 3 6 7 1-3 16 9 4 10-13 7 6-4 3 4 9 15-6 2 7-7-1-4 11 17 3 3 7-23 0-3 7 8 16-1 6 6-2 7 5 0 8-7 0-6 13 0-15-10-2-3-6-10-3 5-10-9-10-15 6-5 10 3 4-10 9-6-3-4 7-6-1-6-12-18-1-10 24 13 17 0 10-7 6 4 4-4 10-2 2-10-9-17-1-7 21-14 10 3 10 28 13-3 7 3 3 13-5 4 9 6-2 5 5-5 3 0 7 10 2 0 7-6-1-7 8-10-1-2 12 12 10 4 6-3 10 9 9 12-5 8-10 7 0 3-7 3 3 2 10-10 0-1 14-7 1-5 9 15 10 6-1 10 6 4-3 1 14-5-7-10-1-3 4-3-3-4 3-5-6-17 0-3 17 5 7-4 13 4 7-10 6 13 17-6 9-7-14-9-2-1-14-11-2 17-17-9-20 4-10-4-7-10-2-23 9-14-10-8 7 4 13-6 6-6-5-7 12-7-9-10 1-6 11-12-6 13-20-1-7-27-10-3-16-14-8-17 11-3 20-13 12-9-5-18 3 0 23 10 5 4 12-12 7-2 10 7 6-3 7-7-6-7 6-6-1 3 11-13 13-6-3-2-10 4-3 0-7-23-6 3-16-23-13-7 3-3 15-30 25-17-23-26 15-10-7-19 7-3 10 7 20 11 7 7 13-8 10 8 10 15 0-4 17 11 10-29 6 3 17 11 10-5 7 8 12 17-11 11 5-5 10-6-3-4 15-6-4-11 9 8 10 11 3 4 14-6 5-3-11-10-3-13 6 1-11-11-6 0-11-7-7-20 5 0 13-8 3-2 8-17-1-2 23 18 7-2 6-11 4 8 13-14 4-13-10-7 6-6 10 6 10-2 7 5 3-12 7-1 13 17 14 6-3 4 6 6-2-1 8 9 10 6 1 13-9 0 8 13 7-6 5-7-2-7 7-13-10-7 13-1-20-15-6-4 3-4-10-16-5-13 14 0 10-7 3 2 8-12-1-4 18 8 7-4 2-6-5-12 12 3 7-4 7 6 3-25 0zM2575 511l-3-16 3-3zM2565 522l-2-7 10-3zM2622 654l0-10 5 4zM2285 677l-9-2 6-5 6 5zM1292 1138l-5-6 8-2zM1262 1189l-4-6 13 2zM905 1581l-3-23-7-6 7-10 3-23 3 22 4-2 5 9-3 10-6 1zM765 1577l-3-9-25-16 1-8 24-12 3-9 21 15 2 10-2 14zM962 1563l-6-1-1-10 3-16 7 12-7 10zM938 1556l-3-4 3-8 3 4zM862 1552l-7 3-2-7 5-3zM1268 1917l-11-2 5-4 9 4zM1295 1970l-8-2 5-6zM2282 2430l-6-5 9-2 3 2zM2622 2456l0-10 5 6zM2572 2589l-9-4 2-7zM2575 2608l-3-3 3-16zM2412 2668l-3-6 9-9 3 2z"/>
<path fill="#000321" d="M2415 441l-6-3 3-6zM2428 2636l-12-4 2-14-3-3 13-12 4 7 6 2 11-10 2-17-8-7 10-3-5-13 17 3 6-17 12-10-5-15-18-11 8-14-20-13-16 16-1-16-22 0 6-13 13-2 4-8-10-22-14 5-6-7-10 3 1-13-5-6-26 0-3 6 2 14-5 3 5 7-6 8-7-6-6 14-8-13 9-10-1-8-17-2-10 5 0-8-13-7-7 13-8-10 15-16 20 11 13-3 4-15-7-17 10-3 4-20-4-4-20 2-6-5 6-10-6-3-1-7-7 3-3-9 10-7 13 5 10-12 0-6-6-4 4-6-4-10 3-6 13-4 10-27-3-10-13-7-20 3-14-9-16 16-7-5-10 5-5-3 1-10-9-4-10-14-14 8-1 13-11 7 2 12-6 3-10-11-10 6-4-6-6 12-10-1-3-12 10-6-4-11-20-9 18-17-1-13-7-6-23-2-10-17-7-3-20 18 1 20-11 1-10 18-10-10-10 3-7-11-25 12 0 13 18 17-4 13 13 4-2 8-7-5-10 7-3 8-3-13-9-2 9-7 0-4-13-7-10-11-17 22-7-26-10 9-23 7 0 14 7 3-23-10 3-3-4-7 13 0 5-13 9 0 14-17-21-20-13 8 3-8-12-10 12-2 4-10 6 11 10-5 14 10 10-3 4-28-16-3-3-7 6-6-2-7-11-10 12-3 6-13 10 1 14-22-1-6-9-9-14 2-10-9-10 2 0-24-6-9-24 8-13-2-4 14 7 7-5 6-8-3-13 7 0-7-6-3 4-14-15 2-13-14-7 3-3 12-12-13 5-8 7 1 5-6-2-5-9-2-1-10 17-2 3-17 13 2 4-19 10-14-14-17-6 0-10 10-17-2-1-11-12-12-10 5-10-6 9-10-3-10 17-10 9-13-19-11-10-16-3 3-10-6 17-27-10-17-10-6 8-17-11-17 0-16-11-17-13-5-14 5-16 14-7 17-13 3-7 10 2 9-5 10-20-3-13 20 6 10-7 12-3-4-10 0-10-13-7 0-7 25-9 0-17 17 14 13-11 13-3-11-16 1 4-6-8-7 0-25-7-3-16 4-2 11-9 6 4 10-11 4-2 18-14-11-13 16-3-4-7 6-13 0-1 18 21 13-10 16-4-14-28-8 11-7-11-13 8-3 0-11 21-10 0-20-16-6-8-16-17 2-10 13-10-21-6-2-14 10 0 7-11 10 5 13-4 6-20-20-10 8 0 16-6 10-7-3-3-10-14-6-6 3-4 10-10-3-3 16-7-12-13 5-13-7-10 4-12 17 4 6-13 7 4 10-3 4-7-7-16-4 16-4 3-6-5-3 12-7-6-10 3-3 13-3 3-8 10-2 10 5 8-2 2-6 7 1 6-12-8-10 19-3 5-7-3-13-9-7 1-6-8-8-16 5-5-4 5-10 20-5 6-8 0-17-16-6-4-13-13 0-7 7-6-14-7-2-3 4-14-6-14 13-2 9-12-5 15-24 17-3 6-10-5-7 9-10-9-16-20 0 12-20-10-20-10-3-13 9-14-7-12 11 1 16-9 6-3-29-10-9-10 8-10-7-10 18-7-4-13 7 4-23-8-7 9-3 5-14-13-9-4-12-15 2-15 12-2-2 12-17-3-16-10 1-7-11-10 1-6 11-7-13-10-1-13 9-1 16-9 13-3-7 6-16-1-10-9-8-7 1-3 5-3-7-10-1-7 12-6-12 6-16 7 12 10-1 3-7 3 5 7 1 9-8 1-10-6-16 3-7 9 13 1 16 13 9 10-1 7-13 6 11 10 1 7-11 10 1 3-16-12-17 2-2 15 12 15 2 4-12 13-9-5-14-9-3 8-7-4-23 13 7 7-4 10 18 10-7 10 8 10-9 3-29 9 6-1 16 12 11 14-7 13 9 10-3 10-20-12-20 20 0 9-16-9-10 5-7-6-10-17-3-15-24 12-5 2 9 14 13 14-6 3 4 7-2 6-14 7 7 13 0 4-13 16-6 0-17-6-8-20-5-5-10 5-4 16 5 8-8-1-6 9-7 3-13-5-7-19-3 8-10-6-12-7 1-2-6-8-2-10 5-10-2-3-8-13-3-3-3 6-10-12-7 5-3-3-6-16-4 16-4 7-7 3 4-4 10 13 7-4 6 12 17 10 4 13-7 13 5 7-12 3 16 10-3 4 10 6 3 14-6 3-10 7-3 6 10 0 16 10 8 20-20 4 6-5 13 11 10 0 7 14 10 6-2 10-21 10 13 17 2 8-16 16-6 0-20-21-10 0-11-8-3 11-13-11-7 28-8 4-14 10 16-21 13 1 18 13 0 7 6 3-4 13 16 14-11 2 18 11 4-4 10 9 6 2 11 16 4 7-3 0-25 8-7-4-6 16 1 3-11 11 13-14 13 17 17 9 0 7 25 7 0 10-13 10 0 3-4 7 12-6 10 13 20 20-3 5 10-2 9 7 10 13 3 7 17 16 14 14 5 13-5 11-17 0-16 11-17-8-17 10-6 10-17-17-27 10-6 3 3 10-16 19-11-9-13-17-10 3-10-9-10 10-6 10 5 12-12 1-11 17-2 10 10 6 0 14-17-10-14-4-19-13 2-3-17-17-2 1-10 9-2 2-5-5-6-7 1-5-8 12-13 3 12 7 3 13-14 15 2-4-14 6-3 0-7 13 7 8-3 5 6-7 7 4 14 13-2 24 8 6-9 0-24 10 2 10-9 14 2 9-9 1-6-14-22-10 1-6-13-12-3 11-10 2-7-6-6 3-7 16-3-4-28-10-3-14 10-10-5-6 11-4-10-12-2 12-10-3-8 13 8 21-20-14-17-9 0-5-13-13 0 4-7-3-3 23-10-7 3 0 14 23 7 10 9 7-26 17 22 10-11 13-7 0-4-9-7 9-2 3-13 3 8 10 7 7-5 2 8-13 4 4 13-18 17 0 13 25 12 7-11 10 3 10-10 10 18 11 1-1 20 20 18 7-3 10-17 23-2 7-6 1-13-18-17 20-9 4-11-10-6 3-12 10-1 6 12 4-6 10 6 10-11 6 3-2 12 11 7 1 13 14 8 10-14 9-4-1-10 5-3 10 5 7-5 16 16 14-9 20 3 13-7 3-10-10-27-13-4-3-6 4-10-4-6 6-4 0-6-10-12-13 5-10-7 3-9 7 3 1-7 6-3-6-10 6-5 20 2 4-4-4-20-10-3 7-17-4-15-13-3-20 11-15-16 8-10 7 13 13-7 0-8 10 5 17-2 1-8-9-10 8-13 6 14 7-6 6 8-5 7 5 3-2 14 3 6 26 0 5-6-1-13 10 3 6-7 14 5 10-22-4-8-13-2-6-13 22 0 1-16 16 16 20-13-8-14 18-11 5-15-12-10-6-17-17 3 5-13-10-3 8-7-2-17-11-10-6 2-4 7-13-12 3-3-2-14 12-4 10 4 5 7-3 7 8 10 13 0-8 6 5 19 11-2-1 10 7 2 0 11 13 14 17-7 3-10 4 4 3-4 7 2 6-5 0-19 7 12 13-10 7 8 12 2-13 7-2 6-10-8-7 1-17 23-6-4-17 12 0 18 13 5-6 3 3 7-8 7 2 6 13 15 13-12 10 1 4 3-10 13 16 7-10 9-7-3-5 4 2 23 7 3 13-3 1 7 9 3-2 14 22 7 7-4 0-17 12-6-2-10 13 6 10-3 3-12 6 5-5 14-11 3-8 10 18 10 4 11 6-4 4 6-10 8-10-10-8-1-8 13 6 7-7 10-5 0-6 13 4 7 14-3 6 7 9-1-12 10 5 17-8 3-7-4-7 8-1 6 8 7-10 16-10 4-9 20 1 10 21 10 14-10 26 17 17-25 9 11 11 4 1 6 9 4 1 16 9 5 10-10 15-5 1-6-6-10 3-3 20-1 1-10-5-3 8-12 12 12-2 12 6-1 7 6 7-7 3 7-7 6 1 10 13 7-4 12-12 5 1 26 21 1 7-6 13 12 0 20 24 14 12-11-2-13 13-8 13-1 7-8-14-23 11-6 6 11 11 2 6-10 7 13 6-6 5 6-3 17 8 4 7-1 7-10 16 4 7 7 13-4 3-10-5-7 9-20-17-17 10-1 1-15 9-1 7-15 6 9-14 17 9 6-3 14 5 3-6 10 3 17 7 3 23-9 3 4 14-1 0 7-4-4-10 7-6-2-17 11 7 10 6 0 2 14 9 0 1 6-5 6-30-23-10 7 3 14-16 15-1 11 7 4 7-3 7 9 6 0 0 4-11 3 6 10-5 5-6-3-4 9-15-4 2 10-30 13-4 10 4 7 13 3 7 23 10-5 9 2 8-9 2 2 4 10-5 4 8 6 0 10-6 4 3 3-3 5-9 5 12 27 20-3 3-11 7-2 4 6 3 2 3-5 4 8 6 1 0 14 17 8 10-12-6-10 11-3 2-6 10-1 0-16 5 13 8 0-3 3 4 4-8 5-7-2 2 7-8 22 22 4 0 4-17 3 5 12 7-2-4 8-13-8-5 10 5 3-7 6-10-14-11 5 1 10 6 3-12 10-17-1-12 5 0 13 15 3 0 17-10 10 2 10 12-2 16 22 21-10 6-13 3 3-3 7 3 10-15 13 11 7-2 4-8-1 4 8-13 5-3-3-7 6-3-7-4 7-21 4 4 7-7 16 11 14 13 0 9-7 0 13-12 7 6 7-13 8-23-2-6 14 6 9 10-5 2 12-9 4 3 3-9 9-17-3-1 7 9 4-5 13-16 1 2 9-9 9-8 1-2 9-10 2-42 32 6 10 16 8 20 18 10 2 2 9 11 4 6 6-2 9 16 1 5 13-9 4 1 7 17-3 9 9-3 3 9 4-2 12-7-5-6 2-3 7 3 8 3 6 10 1 13-3 13 8-6 7 3 5 9 2-2 15-7-8-13-1-11 14 7 16-3 9 20 2 4 7 3-7 7 6 3-3 13 5-4 8 8-1 2 4-11 7 15 13-3 20-6-13-21-10-16 22-14-1 0 9 10 10 0 17-13 2-3 11 7 7 23 0 3 6 7 2-6 12 8 6 8 0 6-12 7 6-5 3 5 10 15-7 2 7-7-2-5 12 17 3 0 4-22 6 8 20-2 7 7-2 8 5-4 4 3 3-8 0-5 13 0-16-10-1-2-6-11-3 6-10-10-12-17 8 0 14-6 1-4 8-3-5-3 2-4 6-7-2-3-11-20-3-12 27 9 5 3 5-3 3 6 4 0 10-8 6 5 4-4 10-2 2-8-9-9 2-10-5-7 23-13 3-4 10 11 12 20 5 1 13 15-4 4 9 6-3 5 5-6 10 11 3 0 4-6 0-7 9-7-3-7 4 1 11 16 15-3 14 13 6 27-22 5 6-1 6-9 0-2 14-6 0-7 10 17 11 6-2 10 7 4-4 0 7-14-1-3 4-23-9-7 3-3 17 6 10-5 3 3 14-9 6 14 17-6 9-7-15-9-1-1-15-10-1 17-17-9-20 5-7-3-10-13-4-7 7-16 4-7-10-7-1-8 4 3 17-5 6-6-6-7 13-6-10-11 2-6 11-11-6 14-23-7-8-13-1-10-5-1-16-16-11-20 14 0 20-13 12-7-6-21 1-1 26 12 5 4 12-13 7-1 10 7 6-3 7-7-7-7 6-6-1 2 12-12 12-8-12 5-3-1-10-20-1-3-3 6-10-1-6-15-5-10-10-9 5-1 16-9 4-1 6-11 4-9 11-17-25-26 17-10-10-21 7-5 6 1 10 10 20 8 1 10 16-9 10 9 11 7-4 8 3-5 17 12 10-9-1-6 7-7-3-10 3 5 17 5 0 7 10-6 7 9 14 17-12 10 8-4 6-6-4-4 11-18 10 8 10 11 3 5 14-6 5-3-12-10-3-13 6 2-10-12-6 0-17-7-4-22 7 2 14-9 3-1 7-13-3-7 3-2 23 5 4 7-3 10 9-16 7 10 13-4 3-10 1-13-12-13 15-2 6 8 7-3 7 6 3-13 5 0 18 17 12 6-4 17 23 7 1 10-8 2 6 13 7-12 2-7 8-13-10-7 12 0-19-6-5-7 2-3-4-4 4-3-10-17-7-13 14 0 11-7 2 1 10-11-2-5 19 8 6-13 0-8 10 3 7-5 7zM2575 510l-3-15 3-3zM2565 521l-1-6 7-3zM2622 654l0-10 5 4zM2285 677l-9-2 6-4 5 4zM1288 1171l-6-19 16-9 3 2-6 3 9 7-12 6zM1395 1215l-6-7 13-13 2 7zM1152 1445l-16-13 1-7-9-10 0-15 8 2-1 13 13 3-3 10 9 4zM905 1581l-2-23-7-6 7-10 2-23 3 23 6 0 1 6-1 10-6 0zM772 1573l-35-21 1-7 30-18 17 11 1 10-1 14zM958 1557l0-14 6 5zM858 1554l-5-2 2-6 6 2zM1135 1700l-8-2 3-3-2-12 9-8-1-7 16-13 2 13-9 4 3 10-13 3zM1402 1905l-13-13 6-7 9 13zM1298 1957l-16-9 6-19 4 10 12 6-9 7 6 3zM2282 2429l-6-4 9-2 2 2zM2622 2456l0-10 5 6zM2568 2589l-6-7 3-3 6 6zM2575 2608l-3-3 3-15zM2412 2668l-3-6 6-3z"/>
<path fill="#000542" d="M2448 498l-9-10-7 1-4 8 0-5-10-4-3-13 3-10 20 3 4 7-3 7 12 13zM2452 2604l-5-9 5-12-8-5 9-3-5-13 17 4 4-14 15-14-6-17-6 1-3-7-9-3 11-10-3-7-16-12-7 1-4 11-6 3-6-6 3-7-23 0 6-13 3 3 15-7-8-29-7-2-10 7-5-6-11 3 0-20-30-2-5 6 4 17-6 3 6 7-6 8-7-7-6 14-8-12 10-10-2-9-20-1-4 3-13-13-7 1-3 12-7-6 10-19 17 4 7 7 14-2 4-20-8-14 11-3 5-21-6-6-10 6-10-1-5-5 6-10-7-3-1-7-7 2-2-8 12-7 10 7 4-10 7-4 0-6-7-4 4-6-4-10 6-6 11-1 3-17 10-13-4-13-16-6-20 5-17-10-13 16-7-4-10 5-4-3 1-10-13-7-1-10-6-4-16 11 0 13-11 7 3 12-6 3-8-12-12 7-4-7-6 13-10-2-3-11 10-6-4-13-7 2-13-9 7-4 3-8 9-2-1-20-5-3-13 3-13-4-10-20-10-3-11 17-10 7 7 10-2 7-11 0-10 19-10-10-10 2-7-12-29 14 3 15 18 15-3 13 11 2 0 10-7-5-15 13-1-12-9-1 10-7-1-6-13-5-10-12-5 0-5 17-7 6-3-26-37 16 0 12-16-5 18-17 1-8 8 2 15-17-9-4-12-16-15 7 4-7-13-10 12-1 4-11 6 12 10-6 14 12 11-3 5-30-17-3-4-7 6-6-4-4 2-3-11-10 13-3 5-12 11 2 16-24 0-6-13-12-14 5-10-10-10 3 1-30-7-6-24 11-14-5-4 17 7 7-5 7-7-4-13 6 0-6-6-3 6-14-7-3-10 5-13-14-7 2-3 13-9-9-1-9 10-1 7-7-4-7-8 0-2-10 17 0 3-19 14 3 5-14-2-6 12-14-16-20-10 1-10 13-14-4 1-10-13-13-10 6-10-6 10-10-3-10 26-17 1-6-21-11-10-16-3 3-10-6 10-17 9-7-9-17-13-9 10-17-13-17 3-16-14-25-13-4-16 9-5 10-13 8-3 15-17 6-6 27-20-5-15 25 8 7-7 12-3-5-10 0-10-14-7-1-8 28-10 0-17 17 15 13-10 13-3-12-16 2 4-6-8-7 4-27-11-4-16 4-3 14-9 6 5 10-11 4-2 18-14-13-13 18-3-4-7 6-13-2-1 20 21 13-7 8-13-11-7 4-10-7 6-4 0-6-11-10 8-3 7-14 17-6 0-22-7-6-10 1-3-14-7-4-19 4-8 13-8-23-8-3-14 10 0 10-9 3-4 7 6 13-3 6-20-22-12 10 2 16-6 10-6-3-3-10-8-1-3-6-10 3-4 10-10-4-3 11-7-6-20 5-10-6-16 11-3 10 5 6-14 7 4 10-2 3-7-7-16-3 16-3 4-7-5-3 12-7-7-10 3-3 6 2 10-13 10-2 10 6 9-3 1-5 7 1 7-13-9-10 19 0 7-10-3-13-11-7 2-6-9-10-16 7-4-4 5-10 9-5 12 2 6-7 2-20-7-6-13-1-1-13-16 0-7 8-6-15-7-1-3 4-4-6-10-1-10 13-5 1-1 9-11-5 11-19 21-8 6-10-5-7 11-10-13-19-18 3 14-24-9-10-2-10-15-2-10 12-7-9-10 1-10 11 1 17-8 5 0-25-10-13-6 0-7 9-10-9-9 10-1 10-7-4-13 6 6-22-9-7 10-3 5-17-12-4 0-12-7-5-16 4-14 13-2-2 14-20-3-14-12 2-3-11-14-1-6 12-5-12-12-2-13 9-2 17-8 12-2-16 6-6-1-11-10-7-10 6-3-7-10-1 3-5 7 0 3-7 10 6 10-7 1-11-6-6 2-16 8 12 2 17 13 9 12-2 5-12 6 12 10 0 6-4 1-8 13 0 2-12-14-20 2-2 17 14 17 2 3-7-2-7 11-3 4-7-6-13-10-3 9-7-6-22 13 6 7-4 1 10 9 10 10-9 7 9 6 0 10-13 0-25 8 5-1 17 10 11 10 1 7-9 10 12 15-2 2-10 9-10-14-24 18 3 13-19-11-10 5-7-6-10-21-8-11-19 11-5 1 9 5 1 10 13 10-1 4-6 3 4 7-1 6-15 7 8 16 0 1-13 13-1 7-6-2-20-6-7-12 2-9-5-5-10 4-4 16 7 9-10-2-6 11-7 3-13-7-10-19 0 9-10-7-13-7 1-1-5-9-3-10 6-10-2-10-13-6 2-3-3 7-10-12-7 5-3-4-7-16-3 16-3 7-7 2 3-4 10 14 7-5 6 3 10 16 11 10-6 20 5 7-6 3 11 10-4 4 10 10 3 3-6 8-1 3-10 6-3 6 10-2 16 12 10 20-22 3 6-6 13 4 7 9 3 0 10 14 10 8-3 8-23 8 13 19 4 7-4 3-14 10 1 7-6 0-22-17-6-7-14-8-3 11-10 0-6-6-4 10-7 7 4 13-11 7 8-21 13 1 20 13-2 7 6 3-4 13 18 14-13 2 18 11 4-5 10 9 6 3 14 16 4 11-4-4-27 8-7-4-6 16 2 3-12 10 13-15 13 17 17 10 0 8 28 7-1 10-14 10 0 3-5 7 12-8 7 15 25 20-5 6 27 17 6 3 15 13 8 5 10 16 9 13-4 14-25-3-16 13-17-10-17 13-9 9-17-9-7-10-17 10-6 3 3 10-16 21-11-1-6-26-17 3-10-10-10 10-6 10 6 13-13-1-10 14-4 10 13 10 1 16-20-12-14 2-6-5-14-14 3-3-19-17 0 2-10 8 0 4-7-7-7-10-1 1-9 9-9 3 13 7 2 13-14 10 5 7-3-6-14 6-3 0-6 13 6 7-4 5 7-7 7 4 17 14-5 24 11 7-6-1-30 10 3 10-10 14 5 13-12 0-6-16-24-11 2-5-12-13-3 11-10-2-3 4-4-6-6 4-7 17-3-5-30-11-3-14 12-10-6-6 12-4-11-12-1 13-10-4-7 15 7 12-16 9-4-15-17-8 2-1-8-18-17 16-5 0 12 37 16 3-26 7 6 5 17 5 0 10-12 13-5 1-6-10-7 9-1 1-12 15 13 7-5 0 10-11 2 3 13-18 15-3 15 29 14 7-12 10 2 10-10 10 19 11 0 2 7-7 10 10 7 11 17 10-3 10-20 13-4 13 3 5-3 1-20-9-2-3-8-7-4 13-9 7 2 4-13-10-6 3-11 10-2 6 13 4-7 12 7 8-12 6 3-3 12 11 7 0 13 16 11 6-4 1-10 13-7-1-10 4-3 10 5 7-4 13 16 17-10 20 5 16-6 4-13-10-13-3-17-11-1-6-6 4-10-4-6 7-4 0-6-7-4-4-10-10 7-12-7 2-8 7 2 1-7 7-3-6-10 5-5 10-1 10 6 6-6-5-21-11-3 8-14-4-20-14-2-7 7-17 4-10-19 7-6 3 12 7 1 13-13 4 3 20-1 2-9-10-10 8-12 6 14 7-7 6 8-6 7 6 3-4 17 5 6 30-2 0-20 11 3 5-6 10 7 7-2 8-29-15-7-3 3-6-13 23 0-3-7 6-6 6 3 4 11 7 1 16-12 3-7-11-10 9-3 3-7 6 1 6-17-15-14-4-14-17 4 5-13-9-3 8-5-5-12 5-9 6 22 10-3 0 10 7 3-3 4 3 6 13 14 18-7 2-10 4 5 3-5 7 3 10-16 6 4 10-11 7 9 12 1-14 7-1 6-10-9-7 2-17 23-6-5-18 13 1 20 13 3-7 3 3 7-9 7 1 6 16 17 13-13 10 0 3 3-10 13 16 7-9 9-10-3-4 4 4 27 20-2 0 5 9 3-4 10 2 6 23 7 9-6-2-17 13-6-3-9 12 5 14-6 3 3-2 7-17 6-3 7 18 10 5 11 6-4 3 6-9 8-10-11-10 0-7 13 7 7-7 10-6 0-7 13 3 8 17-4 6 8 9-2-13 10 6 17-8 2-7-4-11 12 10 10-9 15-10 2 0 6-13 20 3 10 27 9 10-12 26 19 7-7-3-5 10-4 3-11 9 11 11 4 0 7 10 3 0 18 13 5 7-11 17-6-7-16 13-6 10 4 1-12-5-3 8-12 12 12-6 3 4 10 6-2 7 6 7-6 3 6-7 6 3 7-3 5 13 5-3 11-13 2 3 17-3 13 7 5 23-9 12 11 1 22 24 16 14-15-4-13 13-8 13 1 8-10 0-6-9-4-1-10-5-3 11-6 6 12 12 1 5-10 7 13 9-3-4 20 11 6 7 0 7-12 6 5 10-2 7 8 13-3 4-12-6-7 10-20-16-13 8-5 2-15 5 2 15-12 1 3-15 17 9 6-3 14 6 3-6 9 3 21 7 1 23-10 18 9-5-3-33 13 7 14 6-1 1 14 6 3-3 3-7-1-7-10-13-8-12 9 5 14-6 9-11 4-2 13 3 5 13-4 7 9 6 0 0 4-12 3 7 10-5 4-6-3-4 10-10-6-7 2 1 12-14 7-6-2-14 13 7 12 13 1 7 25 10-7 10 3 7-10 2 2 3 10-4 4 8 6 0 10-7 4 4 3-3 4-10 6 9 13 1 14 23-1 3-13 7-2 7 9 3-6 4 8 6 1-1 14 18 10 11-14-7-10 12-3 1-6 11-1-1-16 5 13 8 7-7 5-8-2 3 7-9 23 21 3-16 7 6 12 7 1-4 5-14-8-4 10 5 3-7 6-10-15-13 6 9 13-12 10-17-2-14 6 1 13 16 3 0 17-11 10 1 11 14-2 9 8 7 15 10-9 12-3 5-13 2 3-3 10 4 7-16 13 11 7-1 4-8-1 4 7-13 6-3-3-7 6-3-8-4 8-10 3-10-3-2 4 5 7-8 16 12 16 13-2 9-7 0 13-13 7 7 7-6 0-7 8-25-2-5 14 6 10 11-5 2 11-9 4 2 3-8 9-17-4-3 8 11 4-7 10 2 3-16 0-4 3 6 7-9 9-9 1-1 9-7 4-3-3-7 10-37 23 2 7 35 20 7 10 3-3 7 4 1 9 12 4 7 9-7 4 20 3-2 3 7 10-11 4 3 8 17-4 8 9-2 3 9 4-2 11-11-5-6 10 5 14 25-2 7 8 3-2 3 2-7 7 13 7 0 10-2 5-7-9-13-2-12 16 8 16-4 10 21 1 4 8 3-8 7 6 3-3 13 6-4 7 8-1 1 4-11 7 16 13-3 20-5-13-12-3-10-9-7 15-9 8-14-2-1 11 11 10 0 17-16 3-1 13 14 6 17-2 12 10-9 13 13 6 10-15 7 6-5 3 4 10 15-7 3 4-7 1-6 12 16 7-20 3-1 3 9 20-3 7 8-2 7 5-8 7-5 13 1-16-11-1-1-6-12-3 7-10-11-14-18 10 1 14-6 1-4 8-3-6-7 9-7-2-3-13-23-1-1 14-9 13 10 6 3 4-4 3 7 4 0 10-8 6 4 4-3 10-2 2-7-10-10 3-10-7-7 25-13 1-7 12 14 13 6-2 14 7-1 12 7 2 10-6 4 10 6-3 5 4-7 10 12 3 0 4-6 0-7 9-13-4-3 5 2 13 11 4 6 9-5 14 12 9 13-8 7-10 7-1 3 3-6 3-1 14-6-1-7 14 33 13 4-4 0 5-14 0-3 5-23-10-7 1-3 21 6 9-6 3 3 14-9 6 15 17-6 3-7-10-8 0-2-15-8-5 16-13-10-20 6-7-4-12-13-3-7 8-10-2-6 5-7-12-7 0-11 6 4 20-9-3-7 13-5-10-12 1-6 12-11-6 5-3 1-10 9-4 0-6-8-10-13 1-13-8 4-13-11-13-7-1-21 17 3 10-5 6 2 4-12 11-23-9-7 5 3 13-3 17 13 2 3 11-13 5 3 5-3 7 7 6-3 6-7-6-7 6-6-2-4 10 6 3-12 12-8-12 5-3-1-12-10 4-13-6 7-16-17-6-7-11-13 5 0 18-10 3 0 7-11 4-9 11-3-11-10-4 3-5-7-7-26 19-10-12-27 8-3 11 13 20 0 6 10 2 9 15-10 10 11 12 7-4 8 2-6 17 13 10-9-2-6 8-17-4-3 8 7 13 6 0 7 10-7 7 7 13 10 0 10-11 9 8-3 6-6-4-5 11-18 10 3 7 17 6 2 7-3 3-14-6-12 5 3-9-13-6 2-17-9-6-23 7-2 6 4 10-9 3 0 5-20-2-4 27 4 4 10-3 9 9-16 7 10 13-3 3-10 0-13-13-16 17-1 6 9 7-3 7 7 3-13 3-1 20 18 13 6-5 17 23 7 2 10-9 1 6 14 7-12 1-7 9-10-11-6 4-10-16-7 3-3-5-4 5-2-10-18-7-13 14-3 6 3 4-7 3 0 10-10-3zM2622 662l-6-4 2-5zM3005 974l-3-6 6-6 2 6zM1288 1171l-5-19 9-4 12 7-12 6zM1395 1215l-6-7 13-12 2 6zM1152 1445l-16-13 2-7-10-10 3-10-3-3 4-3 5 9-2 8 10 6 0 7 9 3zM772 1572l-34-20 0-5 30-20 17 15-1 20zM905 1568l-2-10-7-6 9-20 2 10 7 0 0 6 0 10-7 0zM1015 1564l-4-12 4-16 7 12zM958 1555l0-10 6 3zM858 1554l-4-2 1-5 6 1zM1135 1699l-7-1 3-3-3-10 10-10-2-7 16-13 2 13-9 3 0 7-10 6zM1402 1904l-13-12 6-7 9 13zM1292 1952l-9-4 5-19 4 10 12 6zM3008 2138l-6-6 3-6 5 6zM2618 2447l-2-5 6-4zM2428 2636l-12-4 0-17 12-7 0-5 7 9 13-10 3 3-12 13 3 7z"/>
<path fill="#000760" d="M2428 492l-10-7 0-19 17 1 7 8-4 7 4 3zM2448 497l-9-9 3-3 9 10zM2452 511l-4-6 4-8 3 8zM2455 2588l-7-25 17 5 4-16 9-4 7-10-7-18-6 1-2-6-9-3 10-7 1-7-14-7-3-8-10-1-4 13-6 2-6-5 3-8-23 1 6-13 3 3 17-7 1-6-10-14 2-10-10-3-10 9-4-6-12 3 4-16-4-6-20 2-10-4-7 8 6 17-6 6 6 4-6 8-7-7-6 14-6-5 9-17 0-9-23-2-4 4-6-10-17-6 7-9 13 4 6 8 16-3 4-20-6-4-3-10 13-3 6-20-6-9-13 8-10-2-5-4 6-10-7-3-1-8-7 3-2-8 12-7 10 8 5-11 8-4-1-6-8-4 5-6-5-10 6-6 7 3 5-4 2-17 13-14-3-14-20-6-20 7-17-12-13 18-7-5-10 6-4-3 1-10-13-7 0-13-7-3-18 13 4 10-3 5-10 3 3 14-6 3-10-12-10 7-4-7-6 13-10-2-2-11 10-6-5-14-7 3-13-9 8-4 2-8 11-2-3-23-11-1-7 4-13-4-9-22-11-4-11 20-12 7 9 10-3 7-11 0-9 19-10-11-7 5-3-3-7-14-16 13-16 4 6 18 6-1 4 10 8 3-5 12 3 4 10 0 0 8-8-4-13 13-2-13-9 0 11-7-2-6-13-5-7-12-7-3-6 20-7 5-3-27-10 3-4 7-10 1-3 5-13-1 31-30-5-5-6 1-10-16-17 7 4-7-7-10-6 0 12 0 4-11 3 11 13-6 14 14 12-1 1-24 5-10-12-5-7 2-4-7 7-6-5-4 3-3-12-10 14-3 4-12 13 2 4-14 13-10-1-6-14-14-11 7-14-10-10 3 2-33-5-5-27 12-16-5-3 18 8 7-5 7-7-4-13 6 0-6-5-3 6-10-8-8-10 5 0-8-3 3-10-9-8 3-2 12-9-8-1-9 10-1 8-7-14-17 18 0 1-19 17 3 0-20 12-7 3-7-19-23-10 2-3 11-7 3-13-3 0-13-7 0-6-10-10 5-10-5 11-10-4-10 26-15 3-12-16-3-9-7 0-6-8-8-3 4-10-6 10-17 11-7-13-20-11-6 11-17-13-17 4-16-16-32-13-3-17 12-5 13-12 5-4 18-12 1-4 4-6 12 3 6-3 9-20-6-4 14-13 13 10 7-7 12-3-6-10 1-10-17-7 0-8 30-8-2-7 11-13 8 15 10-9 16 0-12-19 2 5-6-9-7 0-7 8-13-1-8-14-6-19 7-1 14-8 6 4 10-11 4-1 18-10-5 1-7-5-2-13 19-3-5-7 7-15-2 0 20 21 13-6 7-13-10-7 3-10-6 7-4 0-7-12-9 8-2 1-8 6-6 13-2 7-9-2-20-8-5-10 1-3-16-4-3-23 5 0 8-7 6-5-9-1-16-14-3-3 9-8 3 1 10-10 2-5 11 7 7-2 9-11-12-2-9-7-3-13 9 2 19-5 9-6-2-1-10-10-2-3-7-10 4-4 11-10-5-3 11-7-5-20 5 0-8 10-4 0-5 8 2 6-10 1-7-8-2-1-5 21 1 6-7-5-10 2-7-12-7 3-6-11-11-16 7-3-3 13-14 10 2 9-5 4-23-10-8-12 1 1-13-4-3-16 3-8 7-1-13-7-3-6 5-4-6-10-2-10 14-6 1 0 8-10-4 10-19 20-6 8-9-6-10 11-5 2-8-15-17-17 4 15-24-3-6-8-4 0-13-17-2-10 14-7-10-10 1-2 7-8 4 1 19-8 5-3-11 3-15-10-14-9 2-4 9-5-9-8-1-7 21-7-5-13 6 7-21-9-7 10-3 6-13-4-9-12-1 2-14-7-3-6 5-7-1-17 15-2-2 15-20 0-10-6-7-10 4-1-11-16-1-6 13-4-12-14-3-6 9-6 0-2 18-5 2-5-6 6-6-1-12-10-7-10 7-4-8 4-12 10 7 10-7 1-12-6-6 5-6 5 2 2 18 6 0 7 9 13-3 4-12 4 12 12 2 7-4 0-9 10 4 4-3 2-14-15-20 2-2 17 15 7-1 6 5 7-3-2-14 12-1 4-9-6-13-10-3 9-7-7-21 13 6 7-5 7 21 8-1 5-9 4 9 9 2 10-14-3-15 3-11 8 5-1 19 8 4 2 7 10 1 7-10 10 14 17-2 0-13 8-4 3-6-15-24 17 4 15-17-2-8-11-5 6-10-8-9-20-6-10-19 10-4 0 8 6 1 10 14 10-2 4-6 6 5 7-3 1-13 8 7 16 3 4-3-1-13 12 1 10-8-4-23-9-5-10 2-13-14 3-3 16 7 11-11-3-6 12-7-2-7 5-10-6-7-21 1 1-5 8-2-1-7-6-10-8 2 0-5-10-4 0-8 20 5 7-5 3 11 10-5 4 11 10 4 3-7 10-2 1-10 6-2 5 9-2 19 13 9 7-3 2-9 11-12 2 9-7 7 5 11 10 2-1 10 8 3 3 9 14-3 1-16 5-9 7 6 0 8 23 5 4-3 3-16 10 1 8-5 2-20-7-9-13-2-6-6-1-8-8-2 12-9 0-7-7-4 10-6 7 3 13-10 6 7-21 13 0 20 15-2 7 7 3-5 13 19 5-2-1-7 10-5 1 18 11 4-4 10 8 6 1 14 19 7 14-6 1-8-8-13 0-7 9-7-5-6 19 2 0-12 9 16-15 10 13 8 7 11 8-2 8 30 7 0 10-17 10 1 3-6 7 12-10 7 13 13 4 14 20-6 3 9-3 6 6 12 4 4 12 1 4 18 12 5 5 13 17 12 13-3 16-32-4-16 13-17-11-17 11-6 13-20-11-7-10-17 10-6 3 4 8-8 0-6 9-7 16-3-3-12-26-15 4-10-11-10 10-5 10 5 6-10 7 0 0-13 13-3 7 3 3 11 10 2 19-23-3-7-12-7 0-20-17 3-1-19-18 0 14-17-8-7-10-1 1-9 9-8 2 12 8 3 10-9 3 3 0-8 10 5 8-8-6-10 5-3 0-6 13 6 7-4 5 7-8 7 3 18 16-5 27 12 5-5-2-33 10 3 14-10 11 7 14-14 1-6-13-10-4-14-13 2-4-12-14-3 12-10-3-3 5-4-7-6 4-7 7 2 12-5-5-10-1-24-12-1-14 14-13-6-3 11-4-11-12 0 6 0 7-10-4-7 17 7 10-16 6 1 5-5-31-30 13-1 3 5 10 1 4 7 10 3 3-27 7 5 6 20 7-3 7-12 13-5 2-6-11-7 9 0 2-13 13 13 8-4 0 8-10 0-3 4 5 12-8 3-4 10-6-1-6 18 16 4 16 13 7-14 3-3 7 5 10-11 9 19 11 0 3 7-9 10 12 7 11 20 11-4 9-22 13-4 7 4 11-1 3-23-11-2-2-8-8-4 13-9 7 3 5-14-10-6 2-11 10-2 6 13 4-7 10 7 10-12 6 3-3 14 10 3 3 5-4 10 18 13 7-3 0-13 13-7-1-10 4-3 10 6 7-5 13 18 17-12 20 7 20-6 3-14-13-14-2-17-5-4-7 3-6-6 5-10-5-6 8-4 1-6-8-4-5-11-10 8-12-7 2-8 7 3 1-8 7-3-6-10 5-4 10-2 13 8 6-9-6-20-13-3 3-10 6-4-4-20-16-3-6 8-13 4-7-9 17-6 6-10 4 4 23-2 0-9-9-17 6-5 6 14 7-7 6 8-6 4 6 6-6 17 7 8 10-4 20 2 4-6-4-16 12 3 4-6 10 9 10-3-2-10 10-14-1-6-17-7-3 3-6-13 23 1-3-8 6-5 6 2 4 13 10-1 3-8 14-7-1-7-10-7 9-3 2-6 6 1 7-18-7-10-9-4-4-16-17 5 7-25 3 7 10-4-1 10 8 3-4 4 3 6 14 15 19-8 1-10 4 5 3-5 7 4 10-16 6 3 10-11 7 9 10-1 0 4-13 5 0 6-10-9-7 2-17 23-6-6-17 10-2 24 15 3-7 3 3 7-9 4-1 9 18 18 13-13 13 2-11 13 11 8 4-4 2 6-9 6-10-5-3 3-2 26 8 8 14-7 5 9 5-2 2 2-6 10 4 8 30 6 4-20-4-4 13-6-3-7 3-3 7 6 16 0-16 10-4 10 18 7 6 12 9-2-9 11-18-14-9 14 0 6 6 3-6 10-7-1 2 4-9 10 1 7 6 3 14-6 6 9 8-3-13 10 7 17-8 2-7-5-12 13 11 10-9 15-12 2 2 6-16 20 1 10 32 11 10-14 26 21 7-8-3-6 11-4 2-11 8 11 12 4 0 7 10 3-1 20 14 5 7-13 19-6-9-16 13-5 10 4 1-13-5-3 8-12 12 12-6 3 4 11 6-3 2 6 5 0 3-6 7 6-7 6 3 7-4 3 14 7-3 11-15 2 5 17-5 13 9 7 23-11 12 11 0 23 8 0 17 17 16-17-5-13 12-8 16 1 8-13-11-7-1-10-5-3 10-6 6 13 14 0 3-10 7 14 6-6 5 5-8 17 17 8 5-2 5-12 6 5 10-2 7 10 17-5 1-12-7-7 11-20-17-13 8-4 2-16 8 0 3 3-6 7 9 6-2 14 5 3-5 10 3 21 30-10 3 5 10 1-34 13 8 14 6-1 0 14 7 3-10 2-7-11-16-8-12 14 8 10-6 3 3 3-16 7 3 20 13-6 6 9 7 0 0 4-13 3 8 10-5 4-6-4-4 11-10-7-9 3 5 10-2 2-14 7-6-3-16 14 8 13 14 0 3 23 4 3 10-7 10 3 4-9 5 0 3 10-5 4 9 6-1 10-17 20 10 10 2 17 24-3 3-14 6-2 7 9 3-6 4 8 6 1-3 14 20 12 13-16-9-10 13-3 0-6 12-1-2-15 4 12 9 7-7 5-3-4-5 2 2 7-9 23 22 3-17 7 7 13 6 0-2 4-16-7-4 10 6 3-7 6-10-17-14 8 9 13-11 10-17-3-16 7 3 15 16 1-1 17-12 10 3 13 14-4 9 8 2 13 5 4 10-11 12-3 5-13 2 3-4 10 4 7-15 13 10 10-9 0-5 10-6-1-7 7-3-9-4 9-23 1 6 10-10 16 13 10 1 7 17-7 5 10-9 2-4 5 1 10-7 5-10 0-3-4-13 2-5 14 5 10 10 0 5 6-9 4 2 3-8 9-17-5-3 11 10 0 1 5-8 7 3 3-20 1 6 9-9 9-10 1 0 9-7 4-3-3-7 10-39 23 2 7 37 20 7 10 3-3 7 4 0 9 13 4 7 9-7 1 0 5 20 1-3 3 8 7-1 5-10 0 3 11 17-5 8 9-2 3 9 4-5 6-10 0-5 10 5 14 13 2 3-4 10 0 7 5-1 10 4 5 9 2-5 10-17-7-1 7-13 10 10 16-6 10 23 1 3 9 4-9 7 7 3-3 8 12 9 0-10 10 15 13-4 7 5 7-3 6-5-13-12-3-10-11-5 4-2 13-9 8-14-4-3 13 12 10 1 17-16 1-3 15 16 7 17-3 11 10-9 13 14 8 10-17 7 6-6 3 4 10 16-7 2 4-6 0-7 13 17 7-22 3 9 23-2 7 5 2 3-4 7 5-9 7-4 12 2-15-12-1 0-6-13-3 9-10-13-16-20 12 3 14-6 1-4 8-3-6-7 9-6-2-3-14-24-3-2 17-10 10 17 20 1 10-9 6 5 4-3 10-5 0-4-9-10 3-10-7-4 3-3 23-14 0-8 13 16 14 6-3 14 7 2 2-5 10 9 3 10-7 4 11 6-4 5 4-8 10 13 3 0 4-7 0-6 9-13-6-3 20 16 7-3 3 6 3-8 10 12 14 16-8 7-11 10 2-7 3 0 14-6-1-8 14 34 13-10 1-3 5-30-10-3 21 5 10-5 3 2 14-9 6 6 7-9 5-4-18-8-4 17-13-11-20 7-7-1-12-17-5-7 10-10-2-6 5-5-12-5-2-17 8 8 17-5 5-6-6-7 14-3-10-14 0-6 13-10-6 5-3 1-10 11-7-8-13-16 1-12-8 5-13-16-17-17 17-8 0 0 23-12 11-23-11-9 7 5 13-5 17 15 2 3 11-14 7 4 3-3 7 7 6-7 6-3-6-5 0-2 6-6-3-4 11 6 3-12 12-8-12 5-3-1-13-10 4-13-5 9-16-19-6-7-13-14 5 1 20-10 3 0 7-12 4-8 11-2-11-11-4 3-6-7-8-26 21-10-14-14 7-15 0-5 7 4 13 13 14-2 6 12 2 9 15-11 10 12 13 7-5 8 2-7 17 13 10-8-3-6 9-17-6-4 10 9 10-2 4 7-1 6 10-7 7 8 15 11-2 9-11 9 11-9-2-6 12-18 7 4 10 16 10-16 0-7 6-3-3 3-7-13-6 4-4-4-20-30 6-4 8 6 10-2 2-5-2-5 9-14-7-8 8 2 26 3 3 10-5 9 6-2 6-4-4-11 8 11 13-13 2-13-13-18 18 1 9 9 4-3 7 7 3-15 3 2 24 17 10 6-6 17 23 7 2 10-9 0 6 13 5 0 4-10-1-7 9-10-11-6 3-10-16-7 4-3-5-4 5-1-10-19-8-14 15-3 6 4 4-8 3 1 10-10-4zM2295 678l-3-7-4 1 7-9 3 12zM1962 855l-13-10 16-4zM3005 974l-3-6 6-6 2 6zM1288 1170l-4-18 11-3 8 6-11 6zM1295 1201l-11-6 5-3-2-7-18-3 19-7 1 10 15 7zM1395 1215l-6-7 13-12 2 6zM1318 1228l-10-3-10-13-9 0 9-13 4 10 6 0 4 7 16 6zM1152 1444l-16-12 2-7-9-10 3-10 5 3-3 7 10 7 1 7 8 3zM772 1572l-33-20 29-25 17 15-1 20zM905 1568l-1-10-7-6 8-20 1 10 8 0 0 16-8 0zM1015 1557l-3-5 3-9 4 5zM962 1553l-6-1 2-7 5 3zM1135 1694l-6-2 0-7 9-10-2-7 16-12 1 12-8 3-1 7-9 6zM1298 1901l-9-13 3-2 6 2 10-13 10-3 10 6-16 6-4 7-6 0zM1402 1904l-13-12 6-7 9 13zM1288 1925l-19-7 18-3 2-7-5-3 11-6 9 9-15 7zM1295 1951l-11-3 4-18 4 9 11 6zM3008 2138l-6-6 3-6 5 6zM1965 2259l-16-4 13-10zM2295 2437l-7-9 4 1 3-7 3 3zM2452 2603l-4-8 4-6 3 6zM2442 2615l-3-3 9-9 3 2zM2428 2635l-10-1-3-9 3-11 10-6 14 7-4 3 4 7z"/>
<path fill="#02107b" d="M2428 491l-9-6-4-10 3-9 17 1 7 8-4 7 3 3zM2452 511l-4-6 4-6zM2455 2588l-1-16-6-8 17 4 4-16 9-3 7-13-6-8 3-3-4-7-6 3-1-6-10-3 13-10-2-8-16-6-1-7-11 1-6 15-9-5 3-9-22 2 5-12 3 2 17-4 2-9-11-14 4-10-12-5-10 11-3-6-13 3 6-16-6-8-20 3-7-6-11 8 7 20-6 1-1 5 7 4-6 8-7-8 0 6-6 4-3-7 7-10-1-10-23-2-4 5-6-10-16-6 2-8 17 3 3 8 10-3 4 4 6-4-2-10 6-10-6-4-4-10 14-3 6-22-7-9-13 9-7-4-3 3-5-4 8-6-1-4-8-3-1-9-7 4-2-8 12-7 10 10 5-13 9-4 0-6-10-4 5-6-5-10 6-6 7 4 7-5 0-17 10-3 7-17-4-10-23-6-10 8-10 1-17-14-10 18-3 2-7-5-10 6-3-13-13-7 2-13-9-5-19 15 5 10-3 4-11 3 4 14-6 4-10-13-10 8-4-8-13 11-5-10 11-6-6-7 1-7-8 2-13-8 8-4 2-8 13-2-6-13 3-11-13-1-7 5-3-4-10-1-7-11 1-10-14-7-7 4-5 19-12 7 10 10-4 7-10 0-7 6 4 7-6 5-10-11-7 6-3-3-7-16-16 15-17 1-2 6 9 16 6-1 4 9 8 3-6 10 6 10-10 7-2 7-6-17 6-4-2-6-14-5-6-12-8-4-6 21-7 5-3-28-24 10-3 7-13-1 32-30-6-6-6 1-10-16-17 8 4-7-7-10 7 0 3-11 3 11 13-5 14 14 13 0 1-26 6-13-14-3-6 3-5-7 8-6-6-4 3-3-12-10 15-3 3-12 14 4 3-16 16-13-16-18-13 8-14-10-12 0 5-7-4-6 4-4-3-6 4-7-7-8-23 15-22-7-2 23 9 4-5 7-7-4-13 5 1-5-6-3 7-10-9-9-7 8-4-3 1-7-3 3-10-9-9 3-1 12-8-8-2-9 19-8-14-17 18 1 0-20 17 6 1-23 13-7 3-7-14-13-3-11-15 1-2 13-7 3-13-4 1-12-8 0-6-11-4-1-6 7-10-5 12-10-5-10 26-13 6-14-6-6-13 3-9-7 1-6-9-9-3 5-10-6 10-17 13-7-15-20-11-6 12-17-6-13-8-4 7-13-9-13 1-14-11-15-13-1-20 16-3 14-11 3-3 7-1 13-16 3-7 14 4 6-3 9-20-8-4 16-13 13 10 7-7 12-3-6-10-1-9-8-1-10-7 0-8 33-12-1-3 10-3-2-12 10 5 6 12 4-9 16 0-13-16 5 3-8-10-7 11-23-2-7-16-6-10 8-10-1-3 9 3 7-9 3 5 13-12 4 0 18-10-5 3-7-7-3-13 19-3-5-7 7-16-1 0 20 21 13-5 7-13-11-16-2 6-4 0-8-12-8 8-1 1-9 13-10 10 2 5-9-5-7 3-13-10-7-10 2-3-19-27 5 0 9-7 6-5-9 1-17-16-4-5 4 1 7-9 3 3 10-10 1-5 12 7 7-2 9-11-12-2-11-7-3-14 10 3 14-5 15-6-2 0-10-11-2-3-8-10 5-4 10-10-5-3 12-7-6-20 6 0-8 7-1 3-8 10 2 5-10 1-7-9-2 0-6 10-1 10 5 8-9-7-10 2-9-12-5 3-6-11-12-16 8-3-6 13-11 13 4 9-7-2-13 6-10-13-10-12 3 3-13-4-5-20 5-4 7-4-4 1-10-10-3-3 6-4-6-10-2-10 14-9-2-3-7 6-4 23-9-2-3 8-4-6-10 13-6 0-10-10-11-10-4-11 5-1-7 12-7 4-10-2-6-10-4 2-14-7-4-13 1-10 15-7-11-12 3 0 7-8 3-7 24 0-28-10-13-10 3-3 10-3-9-10-2-7 15-20 8 8-14-5-13-4-1 11-3 6-10-3-12-14-1 4-14-10-5-6 7-13-2 3-19-7-5-7 4-3-10-7-3-13 3-3 11-7-14-13 0-2 7-8 1-4 15-3-19-3 1-7-8-10 8-3-8 3-12 10 8 7-8 3 1 3-19 4 15 8 1 2 7 13 0 7-14 3 11 13 3 7-3 3-10 7 4 7-5-3-19 13-2 6 7 10-5-4-14 14-1 3-12-6-10-11-3 4-1 5-13-8-14 20 8 7 15 10-2 3-9 3 10 10 3 10-13 0-28 7 24 8 3 0 7 12 3 7-11 10 15 13 1 7-4-2-14 10-4 2-6-4-10-12-7 1-7 11 5 10-4 10-11 0-10-13-6 6-10-8-4 2-3-23-9-6-4 3-7 9-2 10 14 10-2 4-6 3 6 10-3-1-10 4-4 4 7 20 5 4-5-3-13 12 3 13-10-6-10 2-13-9-7-13 4-13-11 3-6 16 8 11-12-3-6 12-5-2-9 7-10-8-9-10 5-10-1 0-6 9-2-1-7-5-10-10 2-3-8-7-1 0-8 20 6 7-6 3 12 10-5 4 10 10 5 3-8 11-2 0-10 6-2 5 15-3 14 14 10 7-3 2-11 11-12 2 9-7 7 5 12 10 1-3 10 9 3-1 7 5 4 16-4-1-17 5-9 7 6 0 9 27 5 3-19 10 2 10-7-3-13 5-7-5-9-10 2-13-10-1-9-8-1 12-8 0-8-6-4 16-2 13-11 5 7-21 13 0 20 16-1 7 7 3-5 13 19 7-3-3-7 10-5 0 18 12 4-5 13 9 3-3 7 3 9 10-1 10 8 16-6 2-7-11-23 10-7-3-8 16 5 0-13 9 16-12 4-5 6 12 10 3-2 3 10 12-1 8 33 7 0 1-10 9-8 10-1 3-6 7 12-10 7 13 13 4 16 20-8 3 9-4 6 7 14 16 3 1 13 3 7 11 3 3 14 20 16 13-1 11-15-1-14 9-13-7-13 8-4 6-13-12-17 11-6 15-20-13-7-10-17 10-6 3 5 9-9-1-6 9-7 13 3 6-6-6-14-26-13 5-10-12-10 10-5 6 7 4-1 6-11 8 0-1-12 13-4 7 3 2 13 15 1 3-11 14-13-3-7-13-7-1-23-17 6 0-20-18 1 14-17-19-8 2-9 8-8 1 12 9 3 10-9 3 3-1-7 4-3 7 8 9-9-7-10 6-3-1-5 13 5 7-4 5 7-9 4 2 23 22-7 23 15 7-8-4-7 3-6-4-4 4-6-5-7 12 0 14-10 13 8 16-18-16-13-3-16-14 4-3-12-15-3 12-10-3-3 6-4-8-6 5-7 6 3 14-3-6-13-1-26-13 0-14 14-13-5-3 11-3-11-7 0 7-10-4-7 17 8 10-16 6 1 6-6-32-30 13-1 3 7 24 10 3-28 7 5 6 21 8-4 6-12 14-5 2-6-6-4 6-17 2 7 10 7-6 10 6 10-8 3-4 9-6-1-9 16 2 6 17 1 16 15 7-16 3-3 7 6 10-11 6 5-4 7 7 6 10 0 4 7-10 10 12 7 5 19 7 4 14-7-1-10 7-11 10-1 3-4 7 5 13-1-3-11 6-13-13-2-2-8-8-4 13-8 8 2-1-7 6-7-11-6 5-10 13 11 4-8 10 8 10-13 6 4-4 14 11 3 3 4-5 10 19 15 9-5-2-13 13-7 3-13 10 6 7-5 3 2 10 18 17-14 10 1 10 8 23-6 4-10-7-17-10-3 0-17-7-5-7 4-6-6 5-10-5-6 10-4 0-6-9-4-5-13-10 10-12-7 2-8 7 4 1-9 8-3 1-4-8-6 5-4 3 3 7-4 13 9 7-9-6-22-14-3 4-10 6-4-6-10 2-10-6-4-4 4-10-3-3 8-17 3-2-8 16-6 6-10 4 5 23-2 1-10-7-10 3-7 6 4 0 6 7-8 6 8-7 4 1 5 6 1-7 20 11 8 7-6 20 3 6-8-6-16 13 3 3-6 10 11 12-5-4-10 11-14-2-9-17-4-3 2-5-12 22 2-3-9 9-5 6 15 11 1 1-7 16-6 2-8-13-10 10-3 1-6 6 3 4-7-3-3 6-8-7-13-9-3-4-16-17 4 6-8 1-16 3 7 10-3-1 9 8 3-4 4 3 6 14 16 20-9 0-10 4 6 3-6 10 7-7 12-6-7-10 10-8 1-2 7 3 3-3 14 15 3-7 3 4 7-10 3-2 7 12 20 11 3 10-14 10-2 1 6-10 10 12 8 4-4 2 3-9 8-10-5-7 7 5 10-3 17 8 6 14-9 3 9 9 0-7 10 5 10 10-3 13 10 11-7 1-16-4-4 13-6-4-7 25 3-15 9-5 11 18 7 9 17-2 3-9-10-11-4-2 11-7 6 8 7-6 10-7-2 1 5-10 10 6 12 17-8 6 9 8-3-13 10 6 17-7 2-7-6-13 14 12 10-9 14-13 3 3 6-20 24 4 10 9 4 10-4 14 8 10-15 26 23 8-13-4-3 12-4 1-10 9 7-2 3 13 4 0 8 10 2-4 20 17 7 7-14 21-7-10-16 12-5 11 5 0-14-4-3 7-12 12 12-6 3 4 12 6-4 1 6 6 0 3-6 7 6-8 6 4 7-4 3 5 6 9 1-3 10-16 3 6 17-7 13 11 9 6-8 10 2 7-7 12 11-2 7 5 3-5 13 10 1 10 16 7 3 17-20-6-13 12-7 17 1 8-14-15-10 3-3-5-7 9-6 5 13 15 1 3-11 7 14 8-4 1 10-7 10 18 9 6-2-3-4 7-9 6 6 10-2 7 10 18-5 0-17-6-3 10-20-17-13 8-3 4-11 11 10-2 14 6 3-6 10 4 23 30-12 3 6 9 0-22 6-13 10 10 12 5-2 1 14 6 3-9 2-6-12-4 2-7-9-6-1-13 15 9 10-6 3 2 3-16 7 1 20 13 0 3-6 5 9 8 0-14 7 9 10-5 4-6-4-7 11-5-8-12 4 6 10-2 2-14 7-6-3-16 7-2 7 8 13 16 0 5 27 7 0 5-8 10 4 4-10 5 0 3 10-5 4 9 6-1 10-18 20 11 10-2 14 4 5 27-5-3-7 9-9 7 9 3-6 4 9 6 0-3 16 22 11 11-15-9-12 3-2 6 1 4-8 6 2 7-6 10 7-7 5-3-5-6 3 3 7-9 23 22 3-18 7 8 13-13-3-3 10 5 3-6 6-10-18-16 9 11 13-11 9-17-3-17 8 3 16 17 0-1 17-13 10 2 13 9 2 7-6 6 5 7 13-3 3 6 5 10-12 13-3-1-7 5-5 3 5-6 7 5 7-16 13 11 9-10 1-7 12-3-3-7 7-2-9-5 0 0 9-24 1 7 10-3 10-8 6 11 7 4 11 17-8 5 10-9 1-5 6 1 10-6 5-10 0-3-5-14 3-5 14 6 10 10 0 5 6-10 4-5 12-17-6-5 7 2 7 10-1 1 4-8 7 2 3-19 0-1 7 5-3 3 3-7 9-13 3 0 9-7 5-4-3-6 10-38 20-3 7 41 23 6 10 4-3 7 5 0 9 10 0 9 9-2 6-5-3 1 7 19 0-2 3 6 4 2 6-11 0 0 10 10 4 10-6 5 12 10 4-5 6-10 0-6 10 5 14 14 3 3-5 10 0 6 5-1 10 5 6 9 1-5 10-17-8-4 11-11 7 8 6 3 10-7 10 24 1 0 9 4 0 3-9 7 7 6-1 4 10 10 1-11 9 16 13-5 7 5 10-2 2-5-5 1-7-13-3-10-12-6 5 3 3-7 13-6 5-7-6-9 2-2 13 13 10 1 17-17 0-3 19 17 5 17-3 11 9-11 13 16 9 10-18 6 6-5 3 3 10 13-3-8 13 18 7-22 3 9 23-3 7 6 3 3-5 7 5-10 7-7-6-6 2-4-8-6 1-3-2 9-12-11-15-22 11 3 16-6 0-4 9-3-6-7 9-9-9 3-7-27-5-4 5 2 14-11 10 18 20 1 10-9 6 5 4-3 10-5 0-4-10-10 4-5-8-7 0-5 27-16 0-8 13 2 7 16 7 6-3 14 7 2 2-6 10 12 4 5-8 7 11 6-4 5 4-9 10 14 7-8 0-5 9-3-6-10-1-5 4 1 17 14 4 0 6 6 3-9 10 13 15 6-1 7-9 4 2 6-12 9 2-6 3-1 14-5-2-10 12 13 10 22 6-9 0-3 6-30-12-4 23 6 10-6 3 2 14-11 10-4-11-8-3 17-13-10-20 6-3 0-17-18-5-7 10-10-2-6 6-7-9 3-4-6-2-18 9 7 10-1 10-8-4-7 14-3-11-15 1-5 13-9-6 5-7-3-3 15-10-8-14-17 1-12-7 6-13-17-20-7 3-10 16-10 1 5 13-5 3 2 7-12 11-7-7-10 2-6-8-11 9 7 13-6 17 16 3 3 10-9 1-5 6 4 3-4 7 8 6-7 6-3-6-6 0-1 6-6-4-4 12 6 3-12 12-7-12 4-3 0-14-11 5-12-5 10-16-21-7-7-14-17 7 4 20-10 2 0 8-13 4 2 3-9 7-1-10-12-4 4-3-8-13-26 23-10-15-14 8-10-4-10 5-3 9 20 24-3 6 13 3 9 14-12 10 13 14 7-6 7 2-6 17 13 10-8-3-6 9-17-8-6 12 10 10-1 5 7-2 6 10-8 7 7 6 2 11 11-4 9-10 2 3-9 17-18 7 5 11 15 9-25 3 4-7-13-6 4-4-1-16-11-7-13 10-10-3-5 10 7 10-9 0-3 9-14-9-8 6 3 17-5 10 7 7 10-5 9 8-2 3-4-4-12 8 10 10-1 6-10-2-10-14-11 3-12 20 2 7 10 3-4 7 7 3-15 3 3 14-3 3 2 7 8 1 10 10 6-7 7 12-10 7-3-6-4 6 0-10-20-9-14 16-3 6 4 4-8 3 1 9-10-3zM2552 538l-13-13 9-9 7 9 11 0-14 7zM2525 542l-3-4 10-9 2 6zM2068 839l-10-1 10-7zM1962 855l-13-10 16 0zM3005 974l-3-6 6-6 2 6zM1288 1170l-3-18 7-3 6 6zM1285 1184l-15-2 8-3 10 3zM1295 1201l-11-6 6-3-2-8 15 8zM1395 1214l-6-6 13-11 2 5zM1318 1228l-10-3-1-7-9-6-8 0 8-13 4 10 6 1 4 7 16 5zM1268 1355l-6-7 10-4 2 4zM1132 1418l0-13 5 3zM1142 1435l-6-3 3-4-4-11 9 5 4 10zM1152 1444l-6-6 2-6 7 10zM1128 1512l-6-7 3-3 6 6zM1055 1525l-5-3 8-5zM768 1572l-29-20 29-24 12 7 5 10-2 17zM905 1568l0-10-8-6 8-10 0-10 1 10 7 6zM1058 1583l-8-5 5-3zM1125 1598l-3-3 6-7 3 4zM1148 1668l-2-6 6-6 3 2zM1138 1683l-5-1 5-6-2-8 9-3-1 13zM1135 1694l-6-2 3-10zM1272 1756l-10-4 6-7 6 7zM1298 1901l-6-15 6 2 9-6 1-7 10-3 10 6-16 5-4 7-6 1zM1402 1903l-13-11 6-6 9 12zM1288 1916l2-8-6-3 11-6 8 9zM1285 1920l-15-2 8-2 10 2zM1295 1950l-10-2 3-18 10 15zM3008 2138l-6-6 3-6 5 6zM1962 2257l-13-2 13-10 3 10zM2068 2269l-10-7 10-1zM2532 2571l-10-9 3-4 9 7zM2552 2583l-13-8 13-13 0 6 14 7-11 0-5 3zM2452 2601l-4-6 4-6zM2435 2633l-19-1 3-17 9-6 13 6-3 3 4 7z"/>
<path fill="#1850b7" d="M2428 491l-9-6-1-19 17 1 6 8 0 10zM2465 532l-10-4 0-15 3 7 12-2zM2552 537l-12-12 8-9 7 10 11-1-15 7zM2478 551l-10-6 0-17 13 17zM2518 553l-9-8-1-10 4 6 3-5 9 6zM2508 2555l-20-10-3 6-7-3 7-6-3-20-4-5-6 4 0-6-10-3 12-7-2-13-14-1-3-12-10 1-10 17-6-5 3-9-20-1 3-9 20-1 4-10-12-14 6-6-5-7-13-3-7 12-3-7-13 3 7-15-7-10-20 4-7-7-13 10 9 20-6 0-1 6 7 4-6 7-7-7-6 9 3-27-23-1-4 5-6-10-16-6 2-8 17 4 2 7 21 0-1-13 6-10-11-14 15-3 5-23-7-10-13 11-10-2-3-6 7-3-10-7-1-9-7 4-2-8 12-7 10 11 5-14 12-7-13-7 6-6-6-10 21-7-1-17 11-3 9-17-4-11-30-6-6 9-10 1-17-16-10 20-10-3-10 6-2-13-14-7 3-16-10-4-20 17 3 14-12 3 5 14-6 4-10-13-10 8-4-8-13 11-5-10 12-6-7-7 3-7-10 2-13-8 9-4 1-7 13 0-6-16 4-13-14 0-4 6-13-3-10-13 3-10-20-9-8 25-13 7 11 10-22 13 5 7-6 5-10-12-10 4-4-17-19 16-20 1 9 23 7-2 4 10 8 2-6 10 6 10-12 14-5-17 6-4-3-6-14-6-14-16-13 27-3-29-24 10-3 8-13-1 33-30-7-7-6 2-10-16-10 4-7-6 6-17 4 10 13-5 12 15 15 2 4-5-3-20 7-17-5-4-16 4-4-7 7-6-15-17 15-2 3-12 14 4 4-17 14-6 3-10-18-17-13 9-14-9-10 2 0-25 6-7-9-10-23 17-24-8-1 24 10 4-5 7-7-4-13 5-5-8 8-10-10-10-7 8-3-10-3 3-11-8-9 3 0 12-10-12 3-7 17-6-15-17 18 2 0-21 19 6-1-23 15-7 3-7-16-13-3-13-17 2-1 14-6 3-13-5 2-11-9 0-10-13-3 8-13-5 13-10-6-10 27-13 7-14-8-8-13 5-17-22-3 5-10-6 13-20 12-4-28-26 13-17-14-17 7-13-10-13 3-14-13-21-20 5-13 15-3 15-11 1-5 22-14 0-8 17 1 15-20-9-5 17-13 13 11 7-7 12-22-15-1-13-9 3-6 33-12-2-3 11-17 8 5 6 13 4-8 16 1-13-17 5 3-8-9-7 12-28-20-10-10 9-10-2 0 18-11 3 7 13-12 0-1 17-6 2 0-10-7-3-13 20-3-5-7 7-13-5-6 11 9 20-17 2 4-16-11-6 7 0 1-10 13-10 10 3 6-10-6-7 5-13-12-8-10 2 2-14-5-6-27 6-7 16-6-31-17 0-1 12-9 1-13 25 8 7-2 9-20-27-16 11 4 14-4 15-6-12-11-3-3-8-10 5-4 11-10-6-3 13-7-6-21 4 11-14 10 1 6-10 0-7-9-2 0-5 22 4 8-10-9-10 3-10-13-4 4-6-12-13-16 8-3-5 13-10 13 3 10-5-3-15 8-10-13-10-13 3 4-13-6-7-10 1-14 13 0-10-10-8-6 7-14-9-10 15-9-2-2-7 5-4 16-3 14-13-7-10 12-3 3-13-12-12-22-2 18-20-2-7-12-3 5-10-3-9-20 0-10 17-10-13-10 5-14 34 0-30-10-12-10 2-3 11-3-10-10-1-8 16-15 7 5-13-5-14 14-13-4-13-15 0 4-16-10-4-6 7-12-1 3-20-8-5-7 5-3-11-7-2-13 2-3 12-6-14-14-1-2 8-8 1-4 15-3-20-10-6 5-10 5 0 3-20 4 15 8 1 2 8 14-1 6-14 3 12 13 2 7-2 3-11 7 5 8-5-3-20 12-1 6 7 10-4-4-16 15 0 4-13-14-13 5-14-5-13 15 7 8 16 10-1 3-10 3 11 10 2 10-12 0-30 14 34 10 5 10-13 10 17 20 0 3-9-5-10 12-3 2-7-18-20 22-2 12-12-3-13-12-3 7-10-14-13-16-3-5-4 2-7 9-2 10 15 14-9 6 7 10-8 0-10 14 13 10 1 6-7-4-13 13 3 13-10-8-10 3-15-10-5-13 3-13-10 3-5 16 8 12-13-4-6 13-4-3-10 9-10-8-10-22 4 0-5 9-2 0-7-6-10-10 1-2-7-8-1 0-7 20 5 7-6 3 13 10-6 4 11 10 5 3-8 11-3 6-12 4 15-4 14 16 11 20-27 2 9-8 7 13 25 9 1-2 7 6 7 17-5-2-19 5-9 7 16 27 6 5-6-2-14 10 2 12-8-5-13 6-7-6-10-10 3-13-10-1-10-7 0 11-6-4-16 17 2-9 20 6 11 13-5 7 7 3-5 13 20 7-3 0-10 6 2 1 17 12 0-7 13 11 3 0 18 10-2 10 9 20-10-12-28 9-7-3-8 17 5-1-13 8 16-13 4-5 6 17 8 3 11 12-2 6 33 9 3 1-13 22-15 7 12-11 7 13 13 5 17 20-9-1 15 8 17 14 0 5 22 11 1 3 15 13 15 20 5 13-21-3-14 10-13-7-13 14-17-13-17 28-26-12-4-13-20 10-6 3 5 17-22 13 5 8-8-7-14-27-13 6-10-13-10 13-5 3 8 10-13 9 0-2-11 13-5 6 3 1 14 17 2 3-13 16-13-3-7-15-7 1-23-19 6 0-21-18 2 15-17-17-6-3-7 10-12 0 12 9 3 11-8 3 3 3-10 7 8 10-10-8-10 5-8 13 5 7-4 5 7-10 4 1 24 24-8 23 17 9-10-6-7 0-25 10 2 14-9 13 9 18-17-3-10-14-6-4-17-14 4-3-12-15-2 15-17-7-6 4-7 16 4 5-4-7-17 3-20-4-5-15 2-12 15-13-5-4 10-6-17 7-6 10 4 10-16 6 2 7-7-33-30 13-1 3 8 24 10 3-29 13 27 14-16 14-6 3-6-6-4 5-17 12 14-6 10 6 10-8 2-4 10-7-2-9 23 20 1 19 16 4-17 10 4 10-12 6 5-5 7 22 13-11 10 13 7 8 25 20-9-3-10 10-13 13-3 4 6 14 0-4-13 6-16-13 0-1-7-9-4 13-8 10 2-3-7 7-7-12-6 5-10 13 11 4-8 10 8 10-13 6 4-5 14 12 3-3 14 20 17 10-4-3-16 14-7 2-13 10 6 10-3 10 20 17-16 10 1 6 9 30-6 4-11-9-17-11-3 1-17-21-7 6-10-6-6 13-7-12-7-5-14-10 11-12-7 2-8 7 4 1-9 10-7-7-3 3-6 10-2 13 11 7-10-5-23-15-3 11-14-6-10 1-13-21 0-2 7-17 4-2-8 16-6 6-10 4 5 23-1-3-27 6 9 7-7 6 7-7 4 1 6 6 0-9 20 13 10 7-7 20 4 7-10-7-15 13 3 3-7 7 12 13-3 5-7-6-6 12-14-4-10-20-1-3-9 20-1-3-9 6-5 10 17 10 1 3-12 14-1 2-13-12-7 10-3 0-6 6 4 4-5 3-20-7-6 7-3 3 6 20-10-4 10-12 5 0 24 15 1-7 3 2 9-10 1 0 12 7 2 6 15 10 2 10-14 10-3 1 6-10 10 18 7-9 8-13-5-6 10 6 7-4 17 10 8 14-11 10 13-6 6 4 10 12-3 13 11 12-4 1-20-5-4 13-6-4-7 23 2-19 21 19 7 9 13-2 7-20-15-10 22 9 3-22 20 3 17 22-7 7 10-9 3 7 17-7 2-7-7-15 15 14 10-9 14-14 3 4 6-22 24 1 10 14 6 10-6 14 9 10-16 26 24 8-14-3-3 12-4 0-10 7 10 12 4 1 9 10 1-6 20 19 9 10-19 20-4-12-16 12-5 13 5-4-20 5-9 12 12-7 3 5 12 6-4 1 6 8 0 1-6 7 6-9 16 15 7-6 12-14-2 7 20-7 17 11 6 6-9 10 3 7-8 12 11-4 23 12 1 17 21 18-22-7-13 22-9 7 5 10-16-17-10-1-10 8-5 4 12 16 2 3-12 7 14 8-4 1 10-9 10 20 10 7 0-3-7 6-9 6 6 10-2 7 12 20-7 0-17-8-3 11-20-17-13 7-2 4-11 11 9-2 14 6 3-6 10 4 24 32-11 1 7-27 13 11 12 5-2 1 15 6 2-9 1-6-11-4 2-13-12-15 17 11 10-6 9-16 4 0 17 6 5 13-7 5 8 5-2 2 6-14 3 9 10-4 4-6-5-7 12-3-8-15 4 5 12-14 7-6-4-18 8-2 7 10 14 16-1 2 27 12 0 3-8 10 5 9-11 3 10-5 4 8 6 0 10-20 20 11 7 4 24 28-7-4-7 9-9 7 9 3-6 10 16-3 11 23 10 11-18-10-10 13-3 0-6 16-2 6 5-6 5-10-3 4 8-10 23 22 3-18 7 6 15-10-6-7 14-7-13-16 10 11 13-11 9-17-4-18 5 3 20 18 0-1 17-14 10 2 13 10 3 7-6 6 4 3 16 7 6 17-15 12 2-5 7-4-3-7 13 11 7-10 3-7 12-3-3-7 7 0-9-8 0 1 9-10 3-13-5-3 6 8 7-2 10-8 3 2 7 9 3 4 12 17-9 5 10-14 7 1 10-6 5-13-5-15 3-5 14 7 11 15 5-10 4-5 12-10-6-10 3 0 11 11 3-8 12-17-2-2 7 6-3 2 6-9 9-10-2 0 11-12 2-5 10-42 23 42 27 5 10 12 2 0 11 13 1 7 9-9 0 2 7 19 0-2 3 8 7-11 3 2 14 18-6 5 12 10 4-15 5-7 11 5 14 15 3 13-5 6 5-1 10 14 7-5 10-17-9-4 12-12 7 11 16-6 10 24 1-1 9 8 0 0-9 7 7 3-3 7 12 10 3-11 4 7 16 8 0-1 6-10 0-17-15-7 6-3 16-6 4-7-6-10 3-2 13 14 10 1 17-18 0-4 16 19 9 17-4 11 9-11 13 15 10 5 0 3-13 7 14 13-4-9 13 18 7-22 3 10 23-4 8 10-3 6 5-6 5-16-2 0-6-10-1 7-12-11-18-23 10 3 11-10 16-3-6-7 9-9-9 4-7-28-7-4 24-11 7 20 20 0 10-8 6 5 4-3 10-9-11-10 5-3-8-12 0-2 27-16-1-10 14 2 7 18 8 6-4 14 7-5 12 15 4 3-8 7 12 6-5 4 4-9 10 15 7-8 0-5 8-17-7-2 22 18 7-2 4 6 2-11 10 15 17 13-12 4 2 6-11 9 1-6 2-1 15-5-2-11 12 27 13-1 7-32-11-4 24 6 10-6 3 2 14-11 9-4-11-7-2 17-13-11-20 8-3-3-19-17-5-7 12-10-2-6 6-6-9 2-7-23 6-3 4 9 10-1 10-8-4-7 14-3-12-16 2-4 12-8-5 1-10 17-10-10-16-7 5-22-9 7-13-18-22-17 21-12 1 4 23-12 11-7-8-10 3-6-9-11 6 7 17-7 20 14-2 6 12-15 7 9 16-7 6-1-6-8 0-1 6-6-4-5 12 7 3-12 12-5-9 4-20-13 5-12-5 12-16-20-4-10-19-19 9 6 20-10 1-1 9-12 4-7 10 0-10-12-4 3-3-8-14-26 24-10-16-14 9-10-6-14 6-1 10 22 24-4 6 14 3 9 14-14 10 15 15 7-7 7 2-7 17 9 3-7 10-22-7-3 17 22 20-9 3 10 22 20-15 2 7-9 13-19 7 19 21-23 2 4-7-13-6 5-4-1-20-12-4-13 11-12-3-4 10 6 6-10 13-14-11-10 8 4 17-6 7 6 10 13-5 9 8-18 7 10 10-1 6-10-3-10-14-10 2-6 15-7 2 0 12 10 1-2 9 7 3-15 1 0 24 12 5zM1288 1169l-2-17 6-3 5 6zM1528 1181l-6-6 10-6 3 3zM1295 1201l-10-6 3-9 15 6zM1318 1227l-10-3-9-12 9-2 12 12zM1145 1434l-8-2 3-4-6-10 10 4zM768 1572l-28-20 28-24 17 17 0 13zM1035 1559l0-18 10 7zM908 1557l-10-5 7-10 7 6zM1138 1682l-4 0 6-10-3-4 8-2zM1308 1890l-9-2 9-12 10-3 2 5zM1292 1912l-4 2-3-9 10-6 8 9zM1532 1931l-10-6 6-6 7 9zM1295 1950l-9-2 2-17zM2515 2564l-3-5-4 6-3-3 13-15 6 11zM2468 2572l0-17 10-6 3 6zM2552 2583l-12-8 12-12-1 5 15 7-11-1-6 4zM2455 2587l0-15 10-4 5 14-12-2zM2435 2633l-19-1 3-17 9-6 13 6z"/>
<path fill="#70b4e8" d="M2428 491l-11-16 1-8 17 1 4 7zM2465 531l-9-3 0-6 7 0zM2548 535l-5-7 5-6 7 6zM2518 553l-6-8 3-9 7 6zM2488 2543l-8-15 2-10-12-6 8-10-2-10-19-4 5-10-17-1-7 19-8-4 5-11-22 1 2-8 20 2 7-11 0-7-14-10 10-3-3-13-7 2-10-8-6 3 2 9-6 5-3-8-10 3-3-3 10-7-9-10 2-6-7-4-3 8-10 2-10-11-17 14 10 17-6 10 9 4-6 7-8-7-2 8-3-8 7-7-2-13-15 3-10-4-4 6-6-9 16-5 1 5 11 0-2-16 8-10-14-14 18-3-4-10 13-7-11-10 7-6-10-7-17 18-9-8 11-3-14-7-1-10-7 4-1-7 11-6 10 14 7-15 15-10-17-7 5-6-6-10 6-5 10 5 8-7-3-17 14-3 1-10 16-13-1-7-21-5-14 5-10-8-6 12-10 1-17-20-10 25-17-3-3 5-1-12-14-7 8-16-20-9 0 12-21 10 11 10-6 6-10-2 6 16-6 4-10-14-10 3 4 4-4 2-4-9-13 12-5-9 13-6-7-7 4-3-5-7-7 4-12-7 9-4 0-6 20 0-13-17 6-3 4-14-10-4-14 13-6-5-7 3-10-17 7-10-14 0-10-13-9 13 5 7-3 7-9 9-7-2 0 13 13 3-6 6-11 1-9 9-7-5-7 8-5-12 4-10-15-1 1 7-11 12-17-7-9 9-1 6 14 10-1 10 10-4 4 4 0 7-10 6-27-25-7 28-3-29-7 6-13-3 15-13-12-10-6 4-10-17-10 5-6-5 6-17 1 10 15-4 3 7 7 0-3 7 23 8 7-15-9-6 12-27-6-10-20 6-3-3 9-6-8-4 4-3-5-7 6-2 3-14 10 8 9-5-5-7 4-10 9-5 7 3 10-14-20-7-7-16-13 15-14-9-10 2 5-9-4-6 5-4-5-6 10-7-14-17-11 7 0 10-6-2-6 8-17-13-15 4 12 36-17 0-7-6 9-10-12-13-7 11-10-18-19 3 16-10-17-15 19 2-2-22 20 12 4-7-6-7 1-16 18-4 7-10-24-13 3-16-16 6-10-6-4 13 6 6-6 3-13-6 0-15-7 5 0-7-10-7-3 8-13-4 15-10-8-10 9 1-3-4 17-10 6 2 1-9 10-7-11-15-8 2-2 10-6 0-17-23-3 6-9-6 12-20 3 4 15-11-15-4-6-13-12-6 5-10 12-4-18-20-1-6 10-7-12-13 7-10-15-45-10 0-10 9-21 36 1 6-10 4-6 22-14-4-1 15-9 10 7 3-2 7-11-1-7-11-7 0 3 15-22 24 15 3-6 11-2-8-4 3-15-9 7-17-12-4-10 7-4 37-10-6-3 14-3-3-4 8-13 0 19 17-16 1-12-11 6-13 12-7-2-14-14-1-6-9-17 14-7-8-4 5 4 20-14 3 10 13-12-2-4 14-10-9-23 23-13-5-8 13 7 10-5 3 7 7-15 1 6-8-4-23 12-9 6 6 7-3 5-14-5-7 10-7-19-13-8 6-6-6 12-10-4-10-38 9-4 11-4-7 8-13-6-10-8 0-3 6-10-10-23 47-14-17-10 17-6-7-4 4 6 17-2 14-4-12-16-13-17 14-7-4-3 14-16-3 16-17 3-12 10 3 4-10 8-1-10-17 5-6-17-3 5-7-14-14 19-5 2-8-7-10 12-1 4-9-10-10-7 3-10-6-4-18-16 1-10 10-14-14-6 9-13-8 14-10-1-10 10-5-3-9 8-6-28-20 5-7-4-3 9-7-7-9-10 2 10-13-7-16-13 1-4 10-10-5-6 19-10-16-10 5-14 32 2-23-7-4 2-10-7-3-3 6-7-3-3 14-3-12-14-2-6 20-10 4 4-10-4-11 16-19-6-4 4-6-14-7 0-14-7 3-3-7-7 1-10 8-6-8 8-10-9-9-30-6-6 13-4-13-10-1 4-7 6 2 4-13 6 13 30-6 9-9-8-10 6-8 17 9 3-7 10-1-3-10 14-7-4-6 6-4-16-19 4-11-4-10 10 4 6 20 14-2 3-12 3 14 7-3 3 6 7-3-2-10 7-4-2-23 14 32 10 5 10-16 6 19 10-5 4 10 13 1 7-16-10-13 10 2 7-9-9-7 4-3-5-7 28-20-8-6 3-9-10-5 1-10-14-10 13-8 6 9 14-14 10 10 16 1 4-18 10-6 7 3 10-10-4-9-12-1 7-10-2-8-19-5 14-14-5-7 17-3-5-6 10-17-8-1-4-10-10 3-3-12-16-17 16-3 3 14 7-4 17 14 16-13 4-12 2 14-6 17 4 4 6-7 10 17 14-17 23 47 10-10 3 6 8 0 6-10-8-13 4-7 4 11 38 9 4-10-12-10 6-6 8 6 19-13-10-7 5-7-5-14-7-3-6 6-12-9 4-23-6-8 15 1-7 7 5 3-7 10 8 13 13-5 23 23 10-9 4 14 12-2-10 13 14 3-4 20 4 5 7-8 17 14 6-9 14-1 2-14-12-7-6-13 12-11 16 1-19 17 13 0 4 8 3-3 3 14 10-6 4 37 10 7 12-4-7-17 15-9 4 3 2-8 6 11-15 3 22 24-3 15 7 0 7-11 11-1 2 7-7 3 9 10 1 15 14-4 6 22 10 4-1 6 21 36 10 9 10 0 15-45-7-10 12-13-10-7 1-6 18-20-12-4-5-10 12-6 6-13 15-4-15-11-3 4-12-20 9-6 3 6 17-23 6 0 2 10 8 2 11-15-10-7-1-9-6 2-17-10 3-4-9 1 8-10-15-10 13-4 3 8 10-7 0-7 7 5 0-15 13-6 6 3-6 6 4 13 10-6 16 6-3-16 24-13-7-10-18-4-1-16 6-7-4-7-20 12 2-22-19 2 17-15-16-10 19 3 10-18 7 11 12-13-9-10 7-6 17 0-12 36 15 4 17-13 6 8 6-2 0 10 11 7 14-17-10-7 5-6-5-4 4-6-5-9 10 2 14-9 13 15 7-16 20-7-10-14-7 3-9-5-4-10 5-7-9-5-10 8-3-14-6-2 5-7-4-3 8-4-9-6 3-3 20 6 6-10-12-27 9-6-7-15-23 8 3 7-7 0-3 7-15-4-1 10-6-17 6-5 10 5 10-17 6 4 12-10-15-13 13-3 7 6 3-29 7 28 27-25 10 6 0 7-4 4-10-4 1 10-14 10 1 6 9 9 17-7 11 12-1 7 15-1-4-10 5-12 7 8 7-5 9 9 11 1 6 6-13 3 0 13 7-2 9 9 3 7-5 7 9 13 10-13 14 0-7-10 10-17 7 3 6-5 14 13 10-4-4-14-6-3 13-17-20 0 0-6-9-4 12-7 7 4 5-7-4-3 7-7-13-6 5-9 13 12 4-9 4 2-4 4 10 3 10-14 6 4-6 16 10-2 6 6-11 10 21 10 0 12 20-9-8-16 14-7 1-12 3 5 17-3 10 25 17-20 10 1 6 12 10-8 14 5 21-5 1-7-16-13-1-10-14-3 3-17-8-7-10 5-6-5 6-10-5-6 17-7-15-10-7-15-10 14-11-6 1-7 7 4 1-10 14-7-11-3 9-8 17 18 10-7-7-6 11-10-13-7 4-10-18-3 14-14-8-10 2-16-11 0-1 5-16-5 6-9 4 6 10-4 15 3 2-13-7-7 3-8 2 8 8-7 6 7-9 4 6 10-10 17 17 14 10-11 10 2 3 8 7-4-2-6 9-10-10-7 3-3 10 3 3-8 6 5-2 9 6 3 10-8 7 2 3-13-10-3 14-10 0-7-7-11-20 2-2-8 22 1-5-11 8-4 7 19 17-1-5-10 19-4 2-10-8-10 12-6-2-10 8-15 2 28 8 3-10 10 4 18 8-1 2 15 6-4 7 6 13-17 4 3-7 12 12 5-2 7-13-7-7 8-1 9 7 3 0 7-9 3 0 9 16 9 7-1 1-10 6-2 0 8 9 4-6 3 2 17 8 3 7-9 13 15 17-9-6-14 12-16 3 6-6 14 7-2 18 12-2 8-19-12 0 14-9 6 2 7 9 0-4 7-13 0 3 6-13 7 1 17 7 7 13-13 9-1 4 7-9 3 8 17-5 4-4-10-10 15-12 4 18 10-9 3-3 13-4-6-10 7 6 6-26 21-5 16 25 6 10-9 17 13 1-10 9-6 23 25 8-6-4-6 6-7-5-3 12-1-2-6 5-5 17 23 10-1 0 10-9 3 2 13 14-3 10 11 4-21 19 0 9-7-17-16 11-4 14 7 3-26 9 6-9 3 7 15 22-1-11 10 7 3-7 3 9 8 6-3 3 9-6 4-17-5-2 7 8 4 4 13-14 17 18 11 6-14 10 4 7-8 11 10 2 10-7 17 14-3 6 6-1 10 15 13 9-13-5-7 13-10-8-13 21-8 7 8 4-7-4-3 14-13-21-7 7-15 6 13 14 3 3-13 7 15 7-6 1 10-13 10 8 9 7-5 10 11 12-5-8-7 6-9 6 8 10-3-1 11 8 3 10-9 13 0-3-20-7-1 10-16 5 29 12 4-6 6 12 14-6 4-10-14-7 3 2 7-12 4-4 9 13 7-12 12-7-5-6 6 6 7-5 10 5 11 17-13 3 9 9-1-16 7 4 3-10 17-3-9-20 6 10 12-7-1-7 7-8-5-25 13 16 14 1 9 15-6 1 31 15-1 2-9 10 5 8-13 4 10-6 4 9 6-8 14 5 3-5 6-7-4-9 11 15 7-4 17 5 11 16-10 19-1-8-7 9-9 7 10 3-6 10 15-8 7 5 8 7-4 10 12 10 2 1-15 11-7-8-6 9-12 6 12-10 23 10 3-7 7 9 13-11-7-7 17-3-16-7 1-3 8-10 1-5 6 8 1 7 9-10 9-17-6-3 6-19-2 8 13-3 14 20-4-1 17-16 10 1 17 15 0 5-7 6 4 6 13-6 3 10 10 10-7 0-9 18-1-4 6-5-2-9 16 13 4-11 3-5 11-10-8-11 4 4 8-27-2 0 10 9 4-14 20 15 3 4 16 3-8 14-4 4 9-8-1-10 22-30-5 3 11-9 7 10 14 6-3 8 5-10 4-4 11-10-7-15 9 8 10 7-2-8 9 3 3-20 0-3 3 7 10-9 7-9-3 2 11-7 5-6-4-1 8-13 9-37 17 47 27 4 11 6-4 7 5-2 11 9-3 9 7-7 10 3 3 20 0-3 3 8 9-7-2-8 10 6 7 9 2 10-7 4 11 10 4-8 5-6-3-10 14 9 7-3 11 30-5 10 22 8-1-4 9-14-4-3-8-4 16-15 3 14 20-9 4 0 10 27-2-4 8 11 4 10-8 5 11 11 3-13 4 9 16 5-2 4 6-18-1 0-9-10-7-10 10 6 3-6 13-6 4-5-7-15 0-1 17 16 10 1 17-20-4 3 14-8 13 19-2 3 6 17-6 10 9-7 9-8 1 5 6 10 1 3 8 7 1 3-16 7 17 11-7-9 13 7 7-10 3 10 23-4 10-7 0 4-3-8-7 8-6-11-7-1-15-10 2-10 12-7-4-5 8 8 7-10 15-3-6-7 10-9-9 8-7-19-1-16-10-5 11 4 17-15 7 9 11 7-4 5 6-5 3 8 14-9 6 6 4-4 10-8-13-10 5-2-9-15-1-1 31-15-6-1 9-16 14 25 13 8-5 7 7 7-1-10 12 20 6 3-9 10 17-4 3 14 3-10 12-17-13-5 11 5 10-6 7 6 6 7-5 12 12-13 7 4 9 12 4-3 4 5 6 13-14 6 4-12 14 6 6-12 4-5 29-10-16 7-1 3-20-13 0-10-9-8 3 1 11-10-3-6 8-6-9 8-7-12-5-10 11-7-5-8 9 13 10-1 10-7-6-7 15-3-13-14 3-6 13-7-15 21-7-14-13 4-3-4-7-7 8-21-8 8-13-13-10 5-7-9-13-15 13 1 10-6 6-14-3 7 17-2 10-11 10-7-8-10 4-6-14-18 11 14 17-4 13-8 4 2 7 17-5 6 4-3 9-6-3-9 8 7 3-7 3 11 10-22-1-7 15 9 3-9 6-3-26-14 7-11-4 17-16-9-7-19 0-4-21-10 11-14-3-2 13 9 3 0 10-10-1-17 23-5-5 2-6-12-1 5-3-6-7 4-6-8-6-23 25-9-6-1-10-17 13-10-9-25 6 5 16 26 21-6 6 10 7 4-6 3 13 9 3-18 10 12 4 10 15 4-10 5 4-8 17 9 3-4 7-9-1-13-13-7 7-1 17 13 7-3 6 13 0 4 7-9 0-2 7 9 6 0 14 19-12 2 8-18 12-7-2 6 14-3 6-12-16 6-14-17-9-13 15-7-9-8 3-2 17 6 3-9 4 0 8-6-2-1-10-7-1-16 9 0 9 9 3 0 7-7 3 1 9 7 8 13-7 2 7-12 5 7 12-4 3-13-17-7 6-6-4-2 15-8-1-4 18 10 10-8 3zM2055 855l-11-17 4-16 7 10zM1985 871l-13-3-10-13 23 7zM2968 893l-10-8 4-16 12 19zM2992 933l-10-8 16-3zM1288 1168l-3-13 7-6 3 6zM1348 1307l-19-9 16 2zM1285 1371l-17-9 4-9 7 2zM772 1570l-30-18 26-23 17 16-1 13zM1058 1570l0-12-9-6 9-10 0-12 4 11 11 7zM908 1555l-9-7 10-3zM1278 1746l-6 1-4-9 17-9zM1332 1805l3-9 16-1zM1292 1951l-7-6 3-13 7 13zM2998 2178l-16-3 10-8zM2962 2231l-4-16 10-8 6 5zM1968 2246l-6-1 10-13 16 0zM2048 2278l-4-16 11-17 0 23zM2515 2564l-3-9 6-8 4 11zM2552 2577l-9-5 5-7 7 7zM2462 2579l-6-1 0-6 9-3zM2425 2632l-7 1-1-8 11-16 11 16-4 7z"/>
<path fill="#dbf6fb" d="M2428 490l-11-15 5-6 13 0 3 9zM2485 2523l-13-11 6-4 0-16-6-7-14 4 6-11-9-6-7 8-3-5-7 13-3-8-7 3-6-5 13-1 10-12-3-10-13-7 12-3 0-13-6-4-7 5-10-9-8 4 4 7-6 7-3-8-10 4-3-3 10-5 0-8-5 0 2-10-11-7-6 13-20-13-7 11-6-1-2 10 4 3-9 0-3-16 8-10-9-10 14-4-6-6 16-14-13-10 8-6-10-10-6 0 0 10-10 10-11-7 12-3-10-7 6-2 7-18 17-10 0-8-19 1 6-6-6-10 5-4 10 4 11-7-7-7 2-10 14-3 4-13 6 3 1-7 13-10-3-6-14-3-3 5-13-6-7 7-14-10-6 12-10 3-17-24-8 16 4 3-6 3 3 4-16 1-21-15 1-9 9-1-3-12-10 2-10-9-4 6 4 10-25 10 14 10-5 5-13-2 7 17-4 3-10-15-14 1-13 13-4-9 13-6-8-7 7-3-8-8-7 5-12-7 10-4-3-3 5-3 20 3-16-20 14-17-14-7-1 7-9 2-4 7-5-5-8 3-10-17 10-10-17 0-3-13-10-6-8 19 7 7-12 15-9-2-1 15 15 2-5 6-13 1 3 3-10 6-7-7-3 7-9-9 9-11-20-3-5 4 5 6-10 11-14-10-16 12 6 12 6-1 3 16 14 0-9 13-27-27-7 30-1-29-12-3 8-7-15-11-6 4-7-17-13 5-6-4 6-16 0 9 17-3 6 16 10-3 6 10 11 0 6-20-12-3 5-4-1-13 12-3-7-20-13 9-13-3 9-6-8-4 5-3-6-7 6 0 3-16 7 10 13-5-6-9 5-10 8-5 7 5 16-13-10-11-16 1-4-18-7 1-3 9-5-2-1 9-14-10-10 3 5-9-4-6 6-4-6-6 13-10-14-7-3-12-13 12 5 7-5 5-4-4-6 8-17-9 0-7-18 3 1 10 8 4 4 10-5 6 7 10-24-6 11-10-10-14-4-2-7 13-3-13-3 6-3-4 1-6-15 2 3-8 9-1-19-13 22 3-5-24 17 16 10-15-9-4 1-16 18-2 10-12-4-6-10 3-13-10 7-17-4-4-16 10-11-9-4 17 6 6-5 3-13-6 4-10-4-7-3 3-20-13 7-3-9-10 8 2-2-5 6-6 3 5 7-9 6 6 1-13 13-7-10-10 1-6-15-1 3 11-9 2-10-9 6-3-12-10-4 6-9-6 9-5-3-5 6-10 3 5 14-5 5-7-5-10-7 9-7-4-6-13-7 1-4-6 4-10 16-7-9-2-7-14-6-1 3-10 9 0-15-16 9-10-7-10 4-10-7-7 4-7-8-23-9-1-10 11-7 20-7 3 0 10-13 14 2 6-10 4-5 10 0 11-15-5 0 17-5 0-5 10 7 3-2 7-13-3-7-17-5 7 3 16-5 7-3-2-7 15-7 0 0 10-11-6 12-17-4-6-13-1-7 10-4-3 0 33-6 7-7-8-2 15-4-3-4 8-16-5 13-3 0-21-17 1-3-11-20 17-7-13-5 10 5 20-6 2-9-6-1 7 12 13-14-3-2 14-10-10-13 19-17 5 7-12 7 1-7-17 10 0 4-7-27-16-4 9-6-6 16-10-6-13-7 3-7-4-10 9-16 2-4 12-3-9 9-10-3-10-13-1-3 7-3-13-7-1-7 18-7 3 3 10-9 6-3 14-14-19-23 16 7 23-17-20-20 17-7-5-4 12-12 1-4-5 10-1 10-22 10 4 4-13 10 2 0-10-12-10 9-6-17-4 2-6-13-14 11-5 6 5 1-20 9-2 6-11-12-12-10 5-8-6-6-22-16 3-10 11-4-9-10-5-6 10-11-8 15-10-4-10 6-6 6 2-4-10 11-6-6-9-10 2-15-13 13-17-12-13 4-7-7-7 3-10-9-7-24 11-6 22-10-19-7 9-8 1 4 7-6 3-13-13 3-9-7-1-3 8-7-4-3 16-3-14-14-1-10 20-6-15 17-14 3-6-10-4 6-9-6-4-4 6-5-6 5-10-6-8-7 6-3-8-7 0-10 9-6-6 11-6-1-7-7-8-10 4-10-9 10-13 10 4 7-8 1-7-11-6 6-6 10 9 7 0 3-8 7 6 6-8-5-10 5-6 4 6 6-4-6-9 10-4-3-6-17-14 6-15 10 20 14-1 3-14 3 16 7-4 3 8 7-1-3-9 13-13 6 3-4 7 8 1 7 9 10-19 6 22 24 11 9-7-3-10 7-7-4-7 12-13-13-17 15-13 10 2 6-9-11-6 4-10-6 2-6-6 4-10-15-10 11-8 6 10 10-5 4-9 10 11 16 3 6-22 8-6 10 5 12-12-6-11-9-2-1-20-6 5-11-5 13-14-2-6 17-4-9-6 12-10 0-10-10 2-4-13-10 4-10-22-10-1 4-5 12 1 4 12 7-5 20 17 17-20-7 23 23 16 14-19 3 14 9 6-3 10 7 3 7 18 7-1 3-13 3 7 13-1 3-10-9-10 3-9 4 12 16 2 10 9 7-4 7 3 6-13-16-10 6-6 4 9 27-16-4-7-10 0 7-17-7 1-7-12 17 5 13 19 10-10 2 14 14-3-12 13 1 7 9-6 6 2-5 20 5 10 7-13 20 17 3-11 17 1 0-21-13-3 16-5 4 8 4-3 2 15 7-8 6 7 0 33 4-3 7 10 13-1 4-6-12-17 11-6 0 10 7 0 7 15 3-2 5 7-3 16 5 7 7-17 13-3 2 7-7 3 5 10 5 0 0 17 15-5 0 11 5 10 10 4-2 6 13 14 0 10 7 3 7 20 10 11 9-1 8-23-4-7 7-7-4-10 7-10-9-10 15-16-9 0-3-10 6-1 7-14 9-2-16-7-4-10 4-6 7 1 6-13 7-4 7 9 5-10-5-7-14-5-3 5-6-10 3-5-9-5 9-6 4 6 12-10-6-3 10-9 9 2-3 11 15-1-1-6 10-10-13-7-1-13-6 6-7-9-3 5-6-6 2-5-8 2 9-10-7-3 20-13 3 3 4-7-4-10 13-6 5 3-6 6 4 17 11-9 16 10 4-4-7-17 13-10 10 3 4-6-10-12-18-2-1-16 9-4-10-15-17 16 5-24-22 3 19-13-9-1-3-8 15 2-1-6 3-4 3 6 3-13 7 13 4-2 10-14-11-10 24-6-7 10 5 6-4 10-8 4-1 10 18 3 0-7 17-9 6 8 4-4 5 5-5 7 13 12 3-12 14-7-13-10 6-6-6-4 4-6-5-9 10 3 14-10 1 9 5-2 3 9 7 1 4-18 16 1 10-11-16-13-7 5-8-5-5-10 6-9-13-5-7 10-3-16-6 0 6-7-5-3 8-4-9-6 13-3 13 9 7-20-12-3 1-13-5-4 12-3-6-20-11 0-6 10-10-3-6 16-17-3 0 9-6-16 6-4 13 5 7-17 6 4 15-11-8-7 12-3 1-29 7 30 27-27 9 13-14 0-3 16-6-1-6 12 16 12 14-10 10 11-5 6 5 4 20-3-9-11 9-9 3 7 7-7 10 6-3 3 13 1 5 6-15 2 1 15 9-2 12 15-7 7 8 19 10-6 3-13 17 0-10-10 10-17 8 3 5-5 4 7 9 2 1 7 14-7-14-17 16-20-20 3-5-3 3-3-10-4 12-7 7 5 8-8-7-3 8-7-13-6 4-9 13 13 14 1 10-15 4 3-7 17 13-2 5 5-14 10 25 10-4 10 4 6 10-9 10 2 3-12-9-1-1-9 21-15 16 1-3 4 6 3-4 3 8 16 17-24 10 3 6 12 14-10 7 7 13-6 3 5 14-3 3-6-13-10-1-7-6 3-4-13-14-3-2-10 7-7-11-7-10 4-5-4 6-10-6-6 19 1 0-8-17-10-7-18-6-2 10-7-12-3 11-7 10 10 0 10 6 0 10-10-8-6 13-10-16-14 6-6-14-4 9-10-8-10 3-16 9 0-4 3 2 10 6-1 7 11 20-13 6 13 11-7-2-10 5 0 0-8-10-5 3-3 10 4 3-8 6 7-4 7 8 4 10-9 7 5 6-4 0-13-12-3 13-7 3-10-10-12-13-1 6-5 7 3 3-8 7 13 3-5 7 8 9-6-6-11 14 4 6-7 0-16-6-4 13-11 13 15-11 6 1 14 4 6 7-3-3 10 6 8 6-7 13 9-11 17 11 3-10 7-3 13 10 0 7 11 10-1 2-13 5-1-1 7 10 4-7 6 6 20 7 0 1-9 10 1-2 5 6 7 6 0 0-6 10 1 5-9-7-10 9-15 6 5-6 5 0 11 7-4 6 5-11 3 1 14-10 6 2 7 10 0-3 7-16 0 2 10-12 6 7 4-5 10 8 10 7 0 7-16 10 3 0 5-8 1 10 10-3 7-2 3-4-11-10 17-14 4 0 7 13 3-3 13-6-3-12 7 8 6-36 29-1 11 18 4 3-5 14 6 6-11 17 16 1-13 9-6 16 13 3 6-4 4 8 5 9-9-5-6 7-7-5-3 11 0-2-7 5-4 17 24 10-3 0 10-12 3 2 14 17-4 10 15 6-12-2-13 16-3 3 6 13-10-21-16 11-3 16 6 1-16 7 16 3-5 3 5 13 0-10 7 9 3-8 3 10 10 6-4 3 8-16 2-9-6-2 14 8-3 6 16-16 20 10-3 10 13 7-3-1-13 10 5 7-8 13 19-10 10 0 9 17-5 6 6-3 11 20 17 1-11 6-7-5-7 12-10-7-13 20-7 7 10 6-10-5-3 15-13-20-4 4-11 20 9 3-13 3 18 10-9 2 10-15 6 0 7 10 8 7-7 13 14 10-5 7-14 3 11 13 4 7-10 13 1 4-9 6 10-24 17-3 10 11 3-2 7-5 9-7-6-8 10 8 4-7 10 7 13 17-14 3 4-9 10 6 3-4 10-13-3-16 5 10 13-52 12 8 14 13 3 1 10 15-7 4 20-8 7 5 6 17-2 3-11 7 8 3-7 11 12-8 14 4 6-10-3 0 7-11 6 17 7-5 17 6 3 0 13 16-15 10-1 4 5 8-5-11-7 9-8 7 10 3-7 10 15-10 7 7 10 7-6 8 6 0 6 13 4 0-17 9-2-1 15 9 0-7 7 9 13-10-8-7 18 0-17-13 1 2 6-19 10 10 1 7 9-10 0 0 9-17-6-7 6-18-2 5 3-3 7 9 3-5 14 12 2 9-6-3 20-15 7 5 3-2 16 6-5 10 4 4-7 6 3 6 13-6 6 10 10 11-10-1-8 18-2-4 6-6-2-8 16 13 4-12 3-4 11-10-8-13 4 6 8-29-2-1 10 10 10-13 15 13 0 7 20 2-8 11 0 4-6 4 9-8-3-10 23-13-4-10 4-7-5-2 5 5 7-9 10 9 3 1 10 3-5 10 5-10 3-3 12-20-8-7 10 16 13-8 4 4 3-21 0-4 3 8 10-8 7-10-4-4 16-6-4-1 9-9 0-4 9-40 17 40 21 4 9 6-2 4 11 6-4 4 16 10-4 8 7-8 10 4 3 21 0-4 3 8 4-16 13 7 10 20-8 3 12 10 3-10 5-3-5-1 10-9 3 9 10-5 7 2 5 7-5 10 4 13-4 10 23 8-3-4 9-4-6-11 0-2-8-7 20-13 0 13 15-10 10 1 10 29-2-6 8 13 4 10-8 4 11 12 3-13 4 8 16 6-2 4 6-18-2 1-8-11-10-10 10 6 6-6 13-6 3-4-7-10 4-6-5 2 16-5 3 15 7 3 20-9-6-12 2 5 14-9 3 3 7-5 3 18-2 7 6 17-6 0 9 10 0-7 9-10 1 19 10-2 6 13 1 0-17 7 18 10-8-9 13 7 7-10 3 3 10-10 0 0-17-13 4 0 6-8 6-7-6-7 10 10 7-10 15-3-7-10 11-6-9 11-7-8-5-4 5-10-1-16-15 0 13-6 3 5 17-17 7 11 6 0 7 10-3-4 6 8 14-11 12-3-7-7 8-3-11-17-2-5 6 8 7-4 20-15-7-1 10-13 3-8 14 52 12-10 13 16 5 13-3 4 10-6 3 9 10-3 4-17-14-7 13 7 10-8 4 8 10 9-4 5 14-11 3 3 10 11 3 13 18-6 6-4-9-13 1-7-10-13 4-3 11-7-14-10-5-13 14-7-7-10 8 0 7 15 6-2 10-10-9-3 18-3-13-20 9-4-11 20-4-15-13 5-3-6-10-7 10-20-7 7-13-12-10 5-7-6-7-1-11-20 17 3 11-6 6-17-5 0 9 10 10-13 19-7-8-10 5 1-13-7-3-10 13-10-3 16 20-6 16-8-3 2 14 9-6 16 2-3 8-6-4-10 10 8 3-9 3 10 7-13 0-3 5-3-5-7 16-1-16-16 6-11-3 21-16-13-10-3 6-16-3 2-13-6-12-10 15-17-4-2 14 12 3 0 10-10-3-17 24-5-4 2-7-11 0 5-3-7-7 5-6-9-9-8 5 4 4-3 6-16 13-9-6-1-13-17 16-6-11-14 6-3-5-18 4 1 11 36 29-8 6 12 7 6-3 3 13-13 3 0 7 14 4 10 17 4-11 2 3 3 7-10 10 8 1 0 5-10 3-7-16-7 0-8 10 5 10-7 4 12 6-2 10 16 0 3 7-10 0-2 7 10 6-1 14 11 3-6 5-7-4 0 11 6 5-6 5-9-15 7-10-5-9-10 1 0-6-6 0-6 7 2 5-10 1-1-9-7 0-6 20 7 6-10 4 1 7-5-1-2-13-10-1-7 11-10 0 3 13 10 7-11 3 11 17-13 9-6-7-6 8 3 10-7-3-4 6-1 14 11 6zM2352 671l0-19 5 10zM2325 672l-12 0 5-8 4 7 10-6 12 3zM2318 774l-10-6 4-6 3 3 3-12 7 5zM1995 878l-10-6 13-3zM2972 891l-13-6 6-12zM2972 928l-6-3-4-19 12 9zM2985 956l-3-14 8 6zM3055 1166l-9-4 9-7-3-5 9 12zM1622 1248l-6-13 6-5 5 8zM1348 1306l-18-8 15 2zM772 1569l-28-17 24-22 16 15 0 13zM1092 1563l0-26 3 10 10 1-10 5zM1065 1557l-13-5 6-9 9 2zM908 1555l-8-7 8-3zM1335 1802l-5 0 5-6 15-1zM1622 1870l-6-5 6-13 5 10zM3055 1949l-9-11 6-6 9 6zM2985 2156l-7-1 7-11 6 4zM2965 2194l-5-2 12-20 2 13zM2965 2227l-6-12 13-6zM1998 2231l-13-3 10-6zM2318 2347l-3-12-3 3-4-6 7-6 9 9zM2318 2436l-3-10 29 6-12 3-10-6zM2352 2448l0-19 5 9zM2435 2631l-13 0-5-6 11-15 10 12z"/>
<path fill="#f9e388" d="M2428 490l-10-15 4-6 13 0 3 9zM2485 2520l-12-8 6-4-1-19-13-7 0-7-3 3-7-7-7 8-11-4 8-10 0-10-9-3 6-7 0-16-7-3-7 6-10-10-10 6 5 7-5 6-8-9 3-10-8-4 5-6-8-4 0-5-10 2 0 12-20-14-17 22-3-3-3-10 10-10-10-10 9-6 4 4 3-5-8-3 17-14-15-10 9-3 1-7-7 0-4-9-12 3 5 10-12 3 1-20 26-27-4-5-10 8-8-3 8-13 19-10-9-7 3-10 7 3 7-16 10 0 0-7 16-8 2-8-22-4-3 5-14-7-6 9-13-7-1-6-6 14-10 4-13-15 4-7-8-3-7 7-1 20-15 0-10-14-10 0 0-8 11-2-5-14-10 4-10-10-8 20-12-1-7 8 16 10-5 5-15-2 8 16-3 3-10-15-14 2-13 13-4-9 14-6-8-7 7-3-9-9-7 5-12-6 12-4-4-3 4-3 21 6-1-11-10-3-6-9 13-9 3-10-6 2-10-10-4 13-6-2-7 9 0-6-10 2-10-16 10-14-17 3-13-22-6 10 6 3-10 10 9 7-12 15-10-3-1 18 14-2-3 8-4-4-10 4 3 4-9 5-7-7-3 8-8-9 12-10-24-6-8 6 7 6-9 10-10-3 0-7-9 0-8 13-3-3-5 7 11 10 5-3 3 16 15 0-9 12-27-28-7 23-3-30-17-11-6 4-9-13 2-5-13 5-6-3 22-10 7 17 10-4 4 10 13 3 7-26-13 0 6-3-2-14 12 1 2-8-9-6 4-7-7-8-10 13-4-2-8-20 6 0 2-16 7 12 17-9-9-7 5-10 7-4 7 5 21-14-15-14-10 7-6-4-4-20-8 4-2 9-6-2 0 8-14-9-10 2 6-8-5-6 7-4-7-6 13-3 3-7-17-7 3-10-6-6-3 9-11 4 5 10-4 5-4-5-6 9-17-9 3-8-6 4-18-3 4 15 7 2 4 10-4 6 7 9-17-5 5-10-10-14-5-3-8 13-2-13-13-7 7-3-19-10 2-6 20 7-7-25 20 18-3-4 13-13-11-4 1-16 13-4 4 4 14-10-8-13-10 6-13-10 7-10-3-3 6-4-7-7-6 10-4-3-6 6-14-11 3 9-6 11 8 5-5 3-12-6 4-10-5-8-3 3-20-12 8-3-10-10 8 3-2-6 6-5 6 5 4-10 6 9 1-16 16-7-13-10 3-8-17-2-3 10 6 4-9 2-10-9 6-3-16-14 3-15 3 4 4-5 10 1 7-8-7-12-7 2 0 9-12-9-3-10-8 0 3-13 19-7-12-2-7-15-6 0 3-9 11-1-16-16 9-7-8-13 5-7-7-10 4-7-8-34-14 5-13 36-10 10 3 3-6 6-4-3-1 17-9 3-3-4 2 11-9 10 6 0-2 4-7 2-10-9 2 20-5-2-8 15 6 4-11 0-3-7 5-10-9-3-7 6 5 20-5 7-4-3-6 16-10 0 6 7-3 3-10-6 4-10 9-4-4-10-9 3-3-5-10 12-7-4 3 34-6 7-7-9-10 21-16-5 13-1 3-23-16-4-4 4 0-13-20 13-10-8-6 3-1 9 7 20-6 2-4-7-6 0-2 8 8 7-10 3 0 12-10-9-10 17-10 3-2-6 6 0 0-10-6-7 12 0 3-10-19-4-10-9 9-7-4-13-19-4-3 8-20 8-3-21-10-1-7 9 0-13-13-5-5 22-8 3 5 10-9 4-3 16-10-22-29 19 8 10-3 7-9-4-4-11-17 10-3 8-7-7-3 7 3-13 14-7 0-9 6 6 7-4 0-10-14-10 10-6-6-8-10 6 0-8-13-10 10-8 6 7 5-9-3-14 9 0 9-13-16-15-10 7-7-5-6-14 5-6-6-5-10 7-10-3-6 13-4-10-10-5-6 10-10-7 16-10-6-10 6-6 7 5-5-13 14-6-6-10-13 3-14-13 14-17-13-13 5-7-8-10 5-7-4-10-5-2-20 15-7-1-6 15-10-12-7 11-3-4-7 5 3 9-16-12 6-10-10-2-10 4-3 16-3-13-17 1-7 18-5-14 19-14 0-16-7-7-7 6-5-6 6-13-5-7-19-1-7 9-6-2 10-16-9-3-1-7-10 6-7-9 7-13 10 6 1-7 9-3-10-16 6-2 7 9 19-1 5-7-6-13 5-6 7 6 7-7 0-16-19-14 5-14 7 18 17 1 3-13 3 16 10 4 10-2-6-10 16-12-3 9 7 5 3-4 7 11 10-12 6 15 7-1 20 15 5-2 4-10-5-7 8-10-5-7 13-13-14-17 14-13 13 3 6-10-14-6 5-13-7 5-6-6 6-10-16-10 10-7 6 10 10-5 4-10 6 13 10-3 10 7 6-5-5-6 6-14 7-5 10 7 16-15-9-13-9 0 3-14-5-9-6 7-10-8 13-10 0-8 10 6 6-8-10-6 14-10 0-10-7-4-6 6 0-9-14-7-3-13 3 7 7-7 3 8 17 10 4-11 9-4 3 7-8 10 29 19 10-22 3 16 9 4-5 10 8 3 5 22 13-5 0-13 7 9 10-1 3-21 20 8 3 8 19-4 4-13-9-7 10-9 19-4-3-10-12 0 6-7 0-10-6 0 2-6 10 3 10 17 10-9 0 12 10 3-8 7 2 8 6 0 4-7 6 2-7 20 1 9 6 3 10-8 20 13 0-13 4 4 16-4-3-23-13-1 16-5 10 21 7-9 6 7-3 34 7-4 10 12 3-5 9 3 4-10-9-4-4-10 10-6 3 3-6 7 10 0 6 16 4-3 5 7-5 20 7 6 9-3-5-10 3-7 11 0-6 4 8 15 5-2-2 20 10-9 7 2 2 4-6 0 9 10-2 11 3-4 9 3 1 17 4-3 6 6-3 3 10 10 13 36 14 5 8-34-4-7 7-10-5-7 8-13-9-7 16-16-11-1-3-9 6 0 7-15 12-2-19-7-3-13 8 0 3-10 12-9 0 9 7 2 7-12-7-8-10 1-4-5-3 4-3-15 16-14-6-3 10-9 9 2-6 4 3 10 17-2-3-8 13-10-16-7-1-16-6 9-4-10-6 5-6-5 2-6-8 3 10-10-8-3 20-12 3 3 5-8-4-10 12-6 5 3-8 5 6 11-3 9 14-11 6 6 4-3 6 10 7-7-6-4 3-3-7-10 13-10 10 6 8-13-14-10-4 4-13-4-1-16 11-4-13-13 3-4-20 18 7-25-20 7-2-6 19-10-7-3 13-7 2-13 8 13 5-3 10-14-5-10 17-5-7 9 4 6-4 10-7 2-4 15 18-3 6 4-3-8 17-9 6 9 4-5 4 5-5 10 11 4 3 9 6-6-3-10 17-7-3-7-13-3 7-6-7-4 5-6-6-8 10 2 14-9 0 8 6-2 2 9 8 4 4-20 6-4 10 7 15-14-21-14-7 5-7-4-5-10 9-7-17-9-7 12-2-16-6 0 8-20 4-2 10 13 7-8-4-7 9-6-2-8-12 1 2-14-6-3 13 0-7-26-13 3-4 10-10-4-7 17-22-10 6-3 13 5-2-5 9-13 6 4 17-11 3-30 7 23 27-28 9 12-15 0-3 16-5-3-11 10 5 7 3-3 8 13 9 0 0-7 10-3 9 10-7 6 8 6 24-6-12-10 8-9 3 8 7-7 9 5-3 4 10 4 4-4 3 8-14-2 1 18 10-3 12 15-9 7 10 10-6 3 6 10 13-22 17 3-10-14 10-16 10 2 0-6 7 9 6-2 4 13 10-10 6 2-3-10-13-9 6-9 10-3 1-11-21 6-4-3 4-3-12-4 12-6 7 5 9-9-7-3 8-7-14-6 4-9 13 13 14 2 10-15 3 3-8 16 15-2 5 5-16 10 7 8 12-1 8 20 10-10 10 4 5-14-11-2 0-8 10 0 10-14 15 0 1 20 7 7 8-3-4-7 13-15 10 4 6 14 1-6 13-7 6 9 14-7 3 5 22-4-2-8-16-8 0-7-10 0-7-16-7 3-3-10 9-7-19-10-8-13 8-3 10 8 4-5-26-27-1-20 12 3-5 10 12 3 4-9 7 0-1-7-9-3 15-10-17-14 8-3-3-5-4 4-9-6 10-10-10-10 3-10 3-3 17 22 20-14 0 12 10 2 0-5 8-4-5-6 8-4-3-10 8-9 5 6-5 7 10 6 10-10 7 6 7-3 0-16-6-7 9-3 0-10-8-10 11-4 7 8 7-7 3 3 0-7 13-7 1-19-6-4 12-8 13 12-12 6 2 20 9-3-2 13 6 7 7-8 12 8-12 17 13 3-11 7-5 14 10 5 3-6 7 14 11-4 2-10 10 5-6 12 6 3-6 7 9 3-3 5 10 0 0-10 20 15 0-9 10 2 7-10 4 7-11 13 0 7 12 0-3 7-18 0 4 10-15 7 10 3-6 10 9 6-3 4 10 2 2-12 8-6 4 6-7 3 11 10-4 9-4-12-10 10 0 9-3-4-12 8-1 10 10-5 4 5-2 13-6-3-15 7 11 6-19 10-26 30 33 0 10 7 6-12 18 15 0-13 9-5 16 12 3 6-6 8 11 2 0-6 10-4-7-6 10-4-8-6 11 0 3-10 17 23 9-3-2 13-10-1 5 4-3 14 18-6 6 9-3 4 7 3 7-14-2-13 15-1 4 4 15-10-6-6-7 2-10-12 10-3 17 9 0-19 7 17 3-5 16 4-11 7 10 3-10 3 14 14-9 2-10-9-2 17 9-3 5 16-18 20 6 3 7-6 10 15 9-5-5-7 2-6 10 6 7-9 12 19-10 20 18-6 6 6-3 13 7 1 13 18 5-12-4-3 7-7-5-7 7-9 7 3 0-14-10-3 20-6 3 12 5-3 6-10-6-3 9-3 7-10-7-4 6-5 4 4 3-14 3 19 7-6 4 6-17 6 13 17 7-8 13 15 3-7 8 0 6-13 6 15 10 1 10-12 7 9-3 8-10 2 4 3-6 7 11 7-5 10-4-6-14 12 9 4-7 10 8 15 17-15 2 6-9 7 7 3-4 10-29 0-4 7 7-2 7 10-56 12 11 7 1 8 13 2 1 12 6-9 9 0 4 20-10 7 6 6 11-4 8 4 2-12 7 8 3-7 11 11-8 14 3 6-9-5 0 9-13 6 6 7 4-5 9 5 1 10-8 7 7 3 1 16 16-17 10-2 4 7 9-7-11-7 5-8 20 15-7 14 10 7 4-7 6 4 4 12 12 0 1-19 9 5-5 7 3 5 8-2-8 7 5 7-5-2-4 8-3-10-13 3 2 7-12 2-8 8 1 5 10-3 6 8-9 0 0 8-17-5-10 6-3-5-14 0 7 6-3 7 9 3-6 14 7 3 3-5 3 5 7-9 3 6-4 16-16 7 7 10-7 10 10-6 10 6 4-8 6 3 5 12-5 7 4-2 6 12 14-20 4 6-8 13 12 4-12 3-3 10-7-8-13 1-4 4 9 6-12 4-6-7-14 0 3 10-4 3 11 10-12 7-1 10 13-2 7 22 3-10 7 0-2 20-15 3-6-6-7 6-7-6-3 6 6 7-11 10 10 3-2 7 9 10-5 7-20-8-7 13 16 11-9 4 4 3-21-3-4 6 7 12-6 5-10-5-4 17-6-5-4 12-7-2-3 9-3-3-7 9-32 15 32 11 7 9 3-3 3 9 10 0 1 10 6-5 4 17 10-5 8 7-9 10 4 6 21-3-4 3 9 4-16 11 7 13 20-8 5 7-9 10 2 7-10 3 11 10-6 7 3 6 7-6 7 6 6-6 15 3 2 20-7 0-3-10-7 22-13-2 1 10 12 7-11 10 4 3-3 10 14 0 6-7 12 4-9 6 4 4 13 1 7-8 3 10 12 3-12 4 8 13-4 6-14-20-6 12-4-2 5 7-5 12-6 3-4-8-10 6-10-6 7 10-7 10 16 7 4 16-3 6-7-9-3 5-3-5-7 3 6 14-9 3 3 7-7 6 14 0 3-5 10 6 17-5 0 8 9 0-6 8-10-3 4 11 13 2 0 9 10 3 6-10 4 8 5-2-5 7 8 7-10 0 4 10-6 5-5-5 1-14-12 0-2 10-8 6-7-6-7 10 7 10-20 15-5-8 11-7-9-7-4 7-10-2-16-17-1 16-7 3 8 7-1 10-9 5-4-5-6 7 13 6 0 9 9-5-3 6 8 14-11 11-3-7-7 8-2-12-8 4-11-4-6 6 10 7-4 20-9 0-6-9-1 12-13 2-1 8-11 7 56 12-7 10-7-2 4 7 29 0 4 10-7 3 9 7-2 6-17-15-8 15 7 10-9 4 14 12 3-7 6 11-11 7 6 7-4 3 12 3-6 16-10-12-10 1-6 15-6-13-8 0-3-7-13 15-7-8-13 17 17 6-4 6-7-6-3 19-3-14-4 4-6-5 7-4-7-10-9-3 6-3-6-10-5-3-3 12-20-6 10-3 0-14-7 3-7-9 5-7-7-7 4-3-5-12-13 18-7 1 3 13-6 6-18-6 10 20-12 19-7-9-10 6-2-6 5-7-9-5-10 15-7-6-6 3 18 20-5 16-9-3 2 17 10-9 9 2-14 14 10 3-10 3 11 7-16 4-3-5-7 17 0-19-17 9-10-3 10-12 7 2 6-6-15-10-4 4-15-1 2-13-7-14-7 3 3 4-6 9-18-6 3 14-5 4 10-1 2 13-9-3-17 23-3-10-11 0 8-6-10-4 7-6-10-4 0-6-11 2 6 8-3 6-16 12-9-5 0-13-18 15-6-12-10 7-33 0 26 30 19 10-11 6 15 7 6-3 2 13-4 5-10-5 1 10 12 8 3-4 0 9 10 10 4-12 4 9-11 10 7 3-4 6-8-6-2-12-10 2 3 4-9 6 6 10-10 3 15 7-4 10 18 0 3 7-12 0 0 7 11 13-4 7-7-10-10 2 0-9-20 15 0-10-10 0 3 5-9 3 6 7-6 3 6 12-10 5-2-10-11-4-7 14-3-6-10 5 5 14 11 7-13 3 12 17-12 8-7-8-6 7 2 13-9-3-2 20 12 6zM2352 671l0-17 4 8zM2605 696l-16-1-3-7 9-14 6 4-6 4 0 13 7-4zM2318 774l-9-9 9-6 5 6zM2972 891l-13-6 6-12zM3052 1167l-5-5 8-5 6 5zM1622 1247l-6-12 6-5 4 8zM772 1568l-27-16 23-20 16 13 0 13zM1065 1556l-10-2-2-6 9-6 6 6zM908 1555l-8-7 8-3zM1622 1870l-6-5 6-12 4 9zM3055 1943l-8-5 5-5 9 5zM2965 2227l-6-12 13-6zM2318 2341l-9-6 6-9 8 9zM2595 2426l-9-14 3-7 16-1-3 5-7-4 0 13 6 4zM2352 2446l0-17 4 9zM2435 2631l-13 0-4-6 10-15 10 12z"/>
<path fill="#ca8103" d="M2428 489l-8-17 15-3 3 9zM2485 598l-12-10 12-6 6 10zM2482 2505l-4-17-12-6-1-10-3 5-4-8-10 8-11-2 9-10 1-10-10-3 9-24-11-4-7 7-6-11-6 2-9 6 6 7-5 5-6-8 2-10-8-4 6-9-7 2-3-9-11 3 1 12-21-15-16 23-3-3-2-10 9-10-9-10 8-6 4 6 5-7-6-7 16-10-2-6-7 6 0-6-9-4 10-3 2-7-9 0-4-11-13 5 5 10-5 3-6-10 1-10 9-7-3-3 18-7-2-6 6-4-6-7-7 7-6-6 24-17-11-7 6-6-3-4 7 4 7-17 11 0-1-7 9 0 14-11 0-8-30 3-14-8-6 10-12-6-2-9 0 9-16 11-6-4 2-6-9-4 6-10-10-1-8 8 4 6-7 4 6 3-7 3 4 4-15 0-9-14-11 0 0-8 13-2-6-3 3-13-14 6-13-14-3 11 6 3-10 12-10-5-11 13 14 4-16 6 11 14-4 3-10-14-14 2-10-7 8-4-14-14 20 4-2-17-12-1-6-9 6-1 4-9 3 3 7-13-10 3-10-12-7 6 6 6-9 0-7 9 3-5-10-2-13-12 8 0 2-16-3 6-14-1-3-12-13-13-4 13 6 3-10 10 9 7-11 14-10-6-4 22 13 0-14 7 1 5-13-6-3 10-7-9 13-11-10-6-10 5-6-7-10 9 9 6-13 9-8-5 2-7-10 2 2 5-9 9-3-4-10 20-24-24-6 4-9-12 5-6 7 10 10-3 3 10 14 3 0-14 10-3-4-13-3 3-6-7 2-10 4-3 7 6 5-10-12-6 7-7-7-9-5-1-8 15-12-22 12-3-5-3 5-6 3 9 20-10-12-7 5-9 7-4 3 5 29-15-9-7-3 3-7-12-10 8-6-3-3-16 4-3-5-3-9 6-1 9-6-4 0 10-14-9-10 2 7-8-5-6 6-4-7-6 9-5 4 4 4-13-8 4-9-7 3-10-7-9-3 12-14 3 8 11-4 5-7-6-3 10-12-6 0-13-5-1-3 7-14-6-8 3 8 16 7 1 4 10-5 6 8 9-17-5 6-10-10-7 0-7-6-4-7 4-15-10 8-3-6-5-3 5-7-12-5 2 2-6 20 9-4-26 9 6 5 16 3-2 4-4-7-3 14-17-11 0 0-15 17-1 6-8 12-2-12-16-10 9-12-10 6-10-3-3 8-4-9-8-6 11-4-3-6 6-8-12-9-1 4 17-11 9-2-9 5-3-6-10-3 4-19-11 9-3-6-3 2-13 10 5 4-12 6 10 5-4-4-13 19-7-10-1-6-9 6-10-16 3-4-6-4 13 7 4-9 2-9-9 5-4-16-13 10-16 10 3 3-10 7 0-7-13-10-1-3 10-11-16-9 0 1-10 19-5 3-10-13 2-7-14-6 0 3-9 14-4-4 3-15-16 11-7-10-13 7-7-9-10 6-7-7-6 3-19-6-20-10 5-18 47-6 0-4 10 4 3-6 6-4-5-2 19-8 3-4-6-7 23 4 4-6 2-6-6 3-8-7 1 2 21-2 4-3-5-8 14 3 7-5 2-6-9 9-10-13-5-8 8 4 10-7 20-6 9-10-1-3 8-2-9 12-3-4-14-10 2-3-8-10 15-7-7 3 8-6 11 6 9-5 4 5 6-6 6-7-9-10 22-9-2 6-3 4-10-5-7 7-7-19-5-4 5 0-16-10 13-10 2-6-9-7 5-3-4 2 19-9 9-3-3-4 11 8 7-10 3-1 7-7-6-11 19-9 2 17-29-13-6 3-4-13 3 0-6-9-3 9-7-7-10 4-7-14 3-7-5-3 9-20 8-3-24-14 4-3 8 0-15-13-6-6 25-8 0 4 16-14 7-5-3 2-10-10 5-3-4-7 12-7-2-26 21-4-4-3 11-6-12 15-7-2-8 6 6 8-5 0-10-7-6 5-10-9-10-10 8 1-8-13-10 9-8 6 9 7-10-6-5 3-6 10-3 10-14-20-17-10 9-7-6-6-13 8-6-9-7-10 9-10-5-6 15-10-16-11 10-3-12 11-4-7-10 6-6 7 7 0-11 12-10-9-12-13 5-5-10-7 0 15-20-15-13 6-7-9-10 6-7-6-16-12 3-13 15-7-2-6 17-10-14-17 10 3 13-15-12 9-9-14-5-13 13-3-6-14 0-10 16-3-9 20-17-6-10 5-3-12-10-4 9-4-6 8-7-4-14-20 2-14-21-9-1-3 6-6-8 6-12 3 6 9-1 14-21 20 2 4-14-8-7 4-6 4 9 12-10-5-3 6-10-20-17 3-9 10 16 14 0 3-6 13 13 14-5-9-9 15-12-3 13 17 10 10-14 6 17 7-2 13 15 12 3 6-16-6-7 9-10-6-7 15-13-15-20 7 0 5-10 13 5 9-12-12-10 0-11-7 7-6-6 7-10-11-4 3-12 11 10 10-16 6 15 10-5 10 9 9-7-8-6 6-13 7-6 10 9 20-17-10-14-10-3-3-6 6-5-7-10-6 9-9-8 13-10-1-8 10 8 9-10-5-10 7-6 0-10-8-5-6 6 2-8-15-7 6-12 3 11 4-4 26 21 7-2 7 12 3-4 10 5-2-10 5-3 14 7-4 16 8 0 6 25 13-6 0-15 3 8 14 4 3-24 20 8 3 9 7-5 14 3-4-7 7-10-9-7 9-3 0-6 13 3-3-4 13-6-17-29 9 2 11 19 7-6 1 7 10 3-8 7 4 11 3-3 9 9-2 19 3-4 7 5 6-9 10 2 10 13 0-16 4 5 19-5-7-7 5-7-4-10-6-3 9-2 10 22 7-9 6 6-5 6 5 4-6 9 6 11-3 8 7-7 10 15 3-8 10 2 4-14-12-3 2-9 3 8 10-1 6 9 7 20-4 10 8 8 13-5-9-10 6-9 5 2-3 7 8 14 3-5 2 4-2 21 7 1-3-8 6-6 6 2-4 4 7 23 4-6 8 3 2 19 4-5 6 6-4 3 4 10 6 0 18 47 10 5 6-20-3-19 7-6-6-7 9-10-7-7 10-13-11-7 15-16 4 3-14-4-3-9 6 0 7-14 13 2-3-10-19-5-1-10 9 0 11-16 3 10 10-1 7-13-7 0-3-10-10 3-10-16 16-13-5-4 9-9 9 2-7 4 4 13 4-6 16 3-6-10 6-9 10-1-19-7 4-13-5-4-6 10-4-12-10 5-2-13 6-3-9-3 19-11 3 4 6-10-5-3 2-9 11 9-4 17 9-1 8-12 6 6 4-3 6 11 9-8-8-4 3-3-6-10 12-10 10 9 12-16-12-2-6-8-17-1 0-15 11 0-14-17 7-3-4-4-3-2-5 16-9 6 4-26-20 9-2-6 5 2 7-12 3 5 6-5-8-3 15-10 7 4 6-4 0-7 10-7-6-10 17-5-8 9 5 6-4 10-7 1-8 16 8 3 14-6 3 7 5-1 0-13 12-6 3 10 7-6 4 5-8 11 14 3 3 12 7-9-3-10 9-7 8 4-4-13-4 4-9-5 7-6-6-4 5-6-7-8 10 2 14-9 0 10 6-4 1 9 9 6 5-3-4-3 3-16 6-3 10 8 7-12 3 3 9-7-29-15-3 5-7-4-5-9 12-7-20-10-3 9-5-6 5-3-12-3 12-22 8 15 5-1 7-9-7-7 12-6-5-10-7 6-4-3-2-10 6-7 3 3 4-13-10-3 0-14-14 3-3 10-10-3-7 10-5-6 9-12 6 4 24-24 10 20 3-4 9 9-2 5 10 2-2-7 8-5 13 9-9 6 10 9 6-7 10 5 10-6-13-11 7-9 3 10 13-6-1 5 14 7-13 0 4 22 10-6 11 14-9 7 10 10-6 3 4 13 13-13 3-12 14-1 3 6-2-16-8 0 13-12 10-2-3-5 7 9 9 0-6 6 7 6 10-12 10 3-7-13-3 3-4-9-6-1 6-9 12-1 2-17-20 4 14-14-8-4 10-7 14 2 10-14 4 3-11 14 16 6-14 4 11 13 10-5 10 12-6 3 3 11 13-14 14 6-3-13 6-3-13-2 0-8 11 0 9-14 15 0-4 4 7 3-6 3 7 4-4 6 8 8 10-1-6-10 9-4-2-6 6-4 16 11 0 9 2-9 12-6 6 10 14-8 30 3 0-8-14-11-9 0 1-7-11 0-7-17-7 4 3-4-6-6 11-7-24-17 6-6 7 7 6-7-6-4 2-6-18-7 3-3-9-7-1-10 6-10 5 3-5 10 13 5 4-11 9 0-2-7-10-3 9-4 0-6 7 6 2-6-16-10 6-7-5-7-4 6-8-6 9-10-9-10 2-10 3-3 16 23 21-15-1 12 11 3 3-9 7 2-6-9 8-4-2-10 6-8 5 5-6 7 9 6 6 2 6-11 7 7 11-4-9-24 10-3-1-10-9-10 11-2 10 8 4-8 3 5 1-10 12-6 4-17 13 36 23 7-11 14 14 3-13 7-4 16 4-3 4 8 6-8 7 15 23-9-7 11 6 3-6 7 9 3-2 8 11-1-1-10 20 15 4-8 6 0 0 17 11-1-4 8-17-1 4 10-15 3 1 7 10 0-6 15 6-1 0 9 7-3 7 6-4 13-3-5-16 12 3 10 6-6 5 6-8 11-14 3 12 6-19 10-9 17-20 9 0 7 37-2 10 8 6-14 17 12-3 7 6-4-3-3 10-15 16 12-3 16 13 0-1-6 12-4-10-6 11-4-9-6 11 1 3-10 17 22 9-3-2 13-13-3 8 10-5 10 20-6 6 9-3 4 10 6 2-30 20 3 16-10-8-7-7 3-9-12 9-2 0 6 7-3 10 6 3-7 4 5 3-5 13 2-10 8 11 3-18 13 1 17 10-5 5 15-7 3 2 6-8-2 3 3-12 10 10 5 7-7 10 16 3-7 8 0-7-7 2-5 10 5 7-3 12 13-13 20 8 3 3-9 3 5 7-4 6 5-6 14 10 0 6 6-5 3 16 12 3-15-6-3 8-7-5-7 6-9 7 5 1-16-10-3 19-6 0 13 7-2 8-12-7-3 12-6 4-7-7-4 6-5 10 10 7-6 4 5-17 4 2 12 4-2 7 10 7-8 13 17 3-10 9 0 5-13 6 16 11 0 4-3-4-3 9-6-1 6 7 3-12 9 4 4-7 7 12 7-6 11-3-9-10 11-6-3 5 3-3 7 9 0-9 13 6 0 4 13 17-15 1 5-8 7 6 3-4 10-5-4-23 2-4 9 12 3-12 11-6-5-24 11-3-5-12 2 14 10 1 10 13 0-3 13 18-10 4 20-11 7 6 10 10-7 13 3 0-12 7 9 3-7 10 10-8 14 4 6-9-7-5 4 5 7-13 6 3 7 7-5 8 5 1 10-9 7 9 3 1 19 15-19 11-3 4 7 16-13 6 6-2 7-7-1 3 9 10 8 4-8 8 5 2 10 16 0 5 6-5 9-3-9-13 1 0 11-15 2-2 13 10-5 6 8-9 0 0 8-20-8-4 9-22-5 9 6-3 8 9 2-6 14 7 3 3-5 3 6 7-10 3 6-6 6 2 10-16 7 7 10-7 3 0 10 10-9 14 6 0-8 8 5 3 10-8 0 3 9 4-4 10 14 10-22 3 6-7 13 11 4-11 2-3 7-7-5-13 2-6 4 10 6-11 4-20-10 3 13-5 3 12 10-13 7 3 3-6 7 16-2 0 13 14 19-14 2 2-5-8-1-7 7-9-6-2 6 7 7-13 10 12 3 6 17-4 7-20-8-7 14 5 0-2 10 4-5 9 5-9 1 4 6-21-5-5 8 10 10-8 7-10-6-4 18-6-5-1 10-10 0-3 9-3-3-7 9-33 11 33 15 7 9 3-3 3 9 10 0 1 10 6-5 4 18 10-6 6 5-8 12 5 8 21-5-4 6 9 1-9 5-4-5 2 10-5 0 7 14 20-8 4 7-6 17-12 3 13 10-7 7 2 6 9-6 7 7 8-1-2-5 14 2-14 19 0 13-16-2 6 7-3 3 13 7-12 10 5 3-3 13 20-10 11 4-10 6 6 4 13 2 7-5 3 7 11 2-11 4 7 13-3 6-10-22-10 14-4-4-3 9 8 0-3 10-8 5 0-8-14 6-10-9 0 10 7 3-7 10 16 7-2 10 6 6-3 6-7-10-3 6-3-5-7 3 6 14-9 2 3 8-9 6 22-5 4 9 20-8 0 8 9 0-6 8-10-5 2 13 15 2 0 11 13 1 3-9 3 12-19 3-2 10-8 5-4-8-10 8-3 9 7-1 2 7-6 6-16-13-4 7-11-3-15-19-1 19-9 3 9 7-1 10-8 5-7-5-3 7 13 6-5 7 5 4 9-7-4 6 8 14-10 10-3-7-7 9 0-12-13 3-10-7-6 10 11 7-4 20-18-10 3 13-13 0-1 10-14 10 12 2 3-5 24 11 6-5 12 11-12 3 4 9 23 2 5-4 4 10-6 3 8 7-1 5-17-15-4 13-6 0 9 13-9 0 3 7-5 3 6-3 10 11 4-8 5 10-12 7 7 7-5 3 13 10-7 3 1 6-9-6 4-3-4-3-11 0-6 16-5-13-9 0-3-10-13 17-7-8-7 10-4-2-2 12 17 4-4 5-7-6-10 10-6-5 7-4-4-7-12-6 7-3-8-12-7-2 0 13-19-6 10-3-1-16-7 5-6-9 5-7-8-7 6-3-3-15-16 12 5 3-6 6-10 0 6 14-6 5-7-4-3 5-3-9-8 3 13 20-12 13-7-3-10 5-2-5 7-7-8 0-3-7-10 16-7-7-10 5 12 10-3 3 8-2-2 6 7 3-5 15-10-5-1 17 18 13-11 3 10 8-13 2-3-5-4 5-3-7-10 6-7-3 0 6-9-2 9-12 7 3 8-7-16-10-20 3-2-30-10 6 3 4-6 9-20-6 5 10-8 10 13-3 2 13-9-3-17 22-3-10-11 1 9-6-11-4 10-6-12-4 1-6-13 0 3 16-16 12-10-15 3-3-6-4 3 7-17 12-6-14-10 8-37-2 0 7 20 9 9 17 19 10-12 6 14 3 8 11-5 6-6-6-3 10 16 12 3-5 4 13-7 6-7-3 0 9-6-1 6 15-10 0-1 7 15 3-4 10 17-1 4 8-11-1 0 17-6 0-4-8-20 15 1-10-11-1 2 8-9 3 6 7-6 3 7 11-23-9-7 15-6-8-4 8-4-3 4 16 13 7-14 3 11 14-23 7zM2595 777l-5-2 1-13 7-6zM2195 858l-13-6 3-8zM2048 864l-13-6 7-8zM2022 885l-5-10 15-7 3 4zM2972 890l-13-5 6-11zM2758 893l-10-8 7-6zM1395 1244l-6-2 5-7-4-3 8-4 4 4zM772 1568l-26-16 22-20 10 3 6 10-1 13zM1062 1558l-9-6 9-10 5 6zM1398 1872l-8-4 2-12 10 12zM2755 2221l-7-6 7-9 6 2zM2965 2226l-6-11 13-5zM2028 2233l-11-8 5-10 13 13zM2042 2250l-7-8 13-6zM2188 2256l-6-8 13-6zM2598 2344l-7-6 1-15 8 9-6 3 7 3zM2485 2518l-12-6 12-10 6 6zM2435 2631l-15-3 8-17 10 11z"/>
<path fill="#0d0a1c" d="M2428 489l-8-14 5-6 13 6zM2485 2496l-18-24-8 3-1-8-10 9-10-1 8-7 2-13-6-3-2-14 7-3 1-8-13-4-7 6-6-11-17 15 0-11-8-4 5-10-14-10 0 5-8 2 2 11-14-15-10 1-12 10 6-14-12-6 8-5 6 5 4-7-6-7 17-10-4-7-16-3 13-10-4-5-6 5-4-13-14 7 1 6-5-3 12-26 15-1-5-6 7-4-7-10-4 8-9-4 6-9 20-8 0-7-7 6-6-6 13-12 7 2-2-13 11 0 1-9 7 2 20-20-41 3-10-9-6 12-12-6-2-10 0 10-16 10-6-3 3-7-10-3 3-6 5 3-2-9-13-2-8 14 7 3-8 4 7 3-8 3 5 4-19-2-5-12-8 3-4-9 17-4-9-3 6-13-17 6-5-13-8-3-4 13 7 3-9 10-11-3-13 10 13 9-10 1-10 10-10-3-10-7 10-3-6-1-9-13 19 7 0-20-14-2-1-5 2-10 8 0-2-6 10-7-20 0-3-11-7 8 3 9-20-1-12-12 9 0 4-16-4-2-3 8-14-1-9-22-11-7 3 14-4 3 7 3-11 10 10 7-8 12-7 0-3-9-3 3-4 24 7 3-10 4 3 5-16-9 9-6-3-5-10-5-10 7-10-8 3 4-10 10 7 0 0 5-10 6-7-4 4-4-3-5-4 5-6-3-4 3 6 4-9 9-3-6-10 19-8-6 13-16-4-7 10-3 0-10-14-7 2-10 4-3 3 9 11-13-14-6 7-7-6-10-8-3 3 6-9 11-6-4 6-7-9 0-2-10 7 2 28-15-9-3 1-11 7-4 3 5 10-10 22-7-12-8-3 4-6-13-11 9-6-3-3-16 6-3-7-5-10 8 0 8-6-4 0 11-14-9-10 1 7-7-5-6 7-4-8-6 9-5 5 5 5-14-10 3-9-6 3-10-7-12-7 9 7 3-17 4-2 6 9 7-3 4-7-6-3 11-13-13 4-6-8-3-3 9-14-8-11 5 9 7-1 9-13-10-4 5-10-5-3-3 7-3-16-7 2-6 16 6-4-20 5-1 7 20 9-9-9-3 16-17-13 0 0-13 38-13-14-10 1-7-12 10-12-10 6-10-3-3 9-4-6-3 0-9-11 6 1 9-4-4-6 6-7-13-10-1-2 9 7 4-5 9-10-17-3 4-10-10-9 0 9 0-6-6 6-9 6 2 4-12 3 12 10-7-3-15 19-1-19-14 6-12-13 6-10-7-2 13 8 4-9 1-9-8 6-3-4-6-7 1-5-9 9-15 10 4 3-12 9 0-9-7 3-7-13-2-3 12-10-16-10 0 10-16 10 2 4-6-1-7-7-3 0 9-10-6 4-3-7-7-5 0 2-9 17-4-6-3-1 6-14-16 4-7 9 0-13-13 9-7-11-13 7-4-8-6 4-17-7-33-7 3-10 37-22 33 5 3-6 5-5-5-1 20-8 3 0-9-6 3 2 10-9 19-6-6 6-8-10-2-3 7 6 10-10 15-6-11-10-1-8 10 3 17-12 22-7-2 4-13-4-5-10 2-3-10-10 13-7-4-3 4 6 6-6 14 5 6-5 10-7-3-3 14-3-3-7 11-5-2 6-3-1-17 7-2 0-7-17-2-6-12-7 0-4 13-10 2 0-5-13 0-3-6-4 16 6 6-9 9-3-5-6 13 8 7-21 6-6 17-9 1 8-18 11-10-12-4 0-7-13 4 2-6-10-3 9-4-7-13 6 0 0-8-17 4-7-7-6 14-17 4-2-24-18 7 0-13-17-5-3 28-7-2-2 12 6 5-10 1-4 6-5-2 5-10-6-3-7 8-3-6-7 14-3-5-14 15-3-3 3-17-9-6 7-10-11-12-10 9 2-7-13-10 8-3 6 6 9-13-7-4 2-6 24-17-18-7-3-10-10 7-10-4-6-13 9-6-10-8-10 9-6-7-7 2 3 7-6 8-10-15-7 1-3 9-3-10 12-6-8-10 5-5 7 8 0-13 14-10-11-7 0-6-13 5-4-9-7 0 3-10 13-10-18-17 9-3-11-10 7-7-5-21-41 28 1 10-10-15-20 17-9-5 12-7-6-7-11-2-13 12-17-3-3-3 12-7-7-10 6-7-13-6-5-21-23 2-9-18-18-3 24-12 3-13 23 2 5-21 13-6-6-7 7-10-12-7 3-3 17-3 13 12 11-2 6-7-12-7 9-5 20 17 10-15-1 10 41 28 5-21-7-7 11-10-9-3 18-17-13-10-3-10 7 0 4-9 13 5 0-6 11-7-14-10 0-13-7 8-5-5 8-10-12-6 1-7 12 7 10-15 6 8-3 7 7 2 6-7 10 9 10-8-9-6 6-13 10-4 10 7 3-10 18-7-24-17-2-6 7-4-9-13-6 6-8-3 13-10-2-7 10 9 11-12-7-10 9-6 0-20 10 13 7-3 7 14 3-6 7 8 6-3-5-10 5-2 4 6 10 1-6 5 2 12 7-2 3 28 17-5 0-13 18 7 2-24 17 4 6 14 7-7 17 4 0-8-6 0 7-13-9-4 10-3-2-6 13 4 0-7 12-4-11-10-8-18 9 1 6 17 21 6-8 7 6 13 3-5 9 9-6 6 4 16 3-6 13 0 0-5 10 2 4 13 7 0 6-12 17-2 0-7-7-2 1-17-6-3 5-2 7 11 3-3 3 14 7-3 5 10-5 6 6 14-6 6 3 4 7-4 10 13 3-10 10 2 4-5-4-13 7-2 12 22-3 17 8 10 10-1 6-11 10 15-6 10 3 7 10-2-6-8 6-6 9 19-2 10 6 3 0-9 8 3 1 20 5-5 6 5-5 3 22 33 10 37 7 3 7-33-4-17 8-6-7-4 11-13-9-7 13-13-9 0-4-7 14-16 1 6 6-3-17-4-2-9 5 0 7-7-4-3 10-6 0 9 7-3 1-7-4-6-10 2-10-16 10 0 10-16 3 12 13-2-3-7 9-7-9 0-3-12-10 4-9-15 5-9 7 1 4-6-6-3 9-8 9 1-8 4 2 13 10-7 13 6-6-12 19-14-19-1 3-15-10-7-3 12-4-12-6 2-6-9 6-6-9 0 9 0 10-10 3 4 10-17 5 9-7 4 2 9 10-1 7-13 6 6 4-4-1 9 11 6 0-9 6-3-9-4 3-3-6-10 12-10 12 10-1-7 14-10-38-13 0-13 13 0-16-17 9-3-9-9-7 20-5-1 4-20-16 6-2-6 16-7-7-3 3-3 10-5 4 5 13-10 1 9-9 7 11 5 14-8 3 9 8-3-4-6 13-13 3 11 7-6 3 4-9 7 2 6 17 4-7 3 7 9 7-12-3-10 9-6 10 3-5-14-5 5-9-5 8-6-7-4 5-6-7-7 10 1 14-9 0 11 6-4 0 8 10 8 7-5-6-3 3-16 6-3 11 9 6-13 3 4 12-8-22-7-10-10-3 5-7-4-1-11 9-3-28-15-7 2 2-10 9 0-6-7 6-4 9 11-3 6 8-3 6-10-7-7 14-6-11-13-3 9-4-3-2-10 14-7 0-10-10-3 4-7-13-16 8-6 10 19 3-6 9 9-6 4 4 3 6-3 4 5 3-5-4-4 7-4 10 6 0 5-7 0 10 10-3 4 10-8 10 7 10-5 3-5-9-6 16-9-3 5 10 4-7 3 4 24 3 3 3-9 7 0 8 12-10 7 11 10-7 3 4 3-3 14 11-7 9-22 14-1 3 8 4-2-4-16-9 0 12-12 20-1-3 9 7 8 3-11 20 0-10-7 2-6-8 0-2-10 1-5 14-2 0-20-19 7 9-13 6-1-10-3 10-7 10-3 10 10 10 1-13 9 13 10 11-3 9 10-7 3 4 13 8-3 5-13 17 6-6-13 9-3-17-4 4-9 8 3 5-12 19-2-5 4 8 3-7 3 8 4-7 3 8 14 13-2 2-9-5 3-3-6 10-3-3-7 6-3 16 10 0 10 2-10 12-6 6 12 10-9 41 3-20-20-7 2-1-9-11 0 2-13-7 2-13-12 6-6 7 6 0-7-20-8-6-9 9-4 4 8 7-10-7-4 5-6-15-1-12-26 5-3-1 6 14 7 4-13 6 5 4-5-13-10 16-3 4-7-17-10 6-7-4-7-6 5-8-5 12-6-6-14 12 10 10 1 14-15-2 11 8 2 0 5 14-10-5-10 8-4 0-11 17 15 6-11 7 6 13-4-1-8-7-3 2-14 6-3-2-13-8-7 10-1 10 9 4-10 5 5 15-25 9 29 7 6 20 0-9 4-4 10 11 6-9 4-5 16 6-3 4 10 6-10 7 17 13-7 9 10-8 10 11 0-2 10 17-8 12 11 8-9 6 3-3 13-10 7 4 8-17 5 3 9 9-2-9 16 10-2 0 9 7-2 6 5-21 14-4 10 9 7 3-7 3 10-21 10 9 3-3 10-13 3-8 17-20 7-7 10 44-3 10 10 6-16 17 12-7 3 4 4 7-4-3-3 9-15 16 12-4 16 8-3 7 7-2-10 12-4-10-6 13-4-10-6 10 1 3-9 17 22 9-4-6 9-10-2 9 13-6 10 8 3-1-6 14-3 0 7 6 2-3 5 10 5-2-10 8-7-6-3 3-10 14 2 0 5 22-14-9-9-7 4-8-11 5-3 3 8 7-4 10 7 3-8 10 11 11 2-11 2-8 11 4 4-2 15 10-7 5 15-24 20 9 0 3 7 7-9 10 19 3-9 10-1-9-7 2-5 7-1 3 7 7-4 11 13-4 9-7-2 3 10-6 3 12 3 1-8 3 5 7-5 6 5-6 16 10-2 6 6-6 4 7 0 10 15 3-19-6-3 9-7-2-13 6-3 4 6-4-7 4-10-9-3 18-5-3 12 16-4-2-6 5-4-7-3 10-3 4-10 7 10-4 6 7-2 7 12 13-5-1 9 5-3 3 7 3-10 11-1 3-12 6 16 12-1 4-3-4-3 8-5-2 5 8 3-16 18 6 5-12 16-8-2 2 10 10 0-9 10 1 7 5-4-1 10 10 4 1-7 12-6-8 9 3 7-18 7-11-4-3 10 11 3-11 7-15-3 2 6-11 0-6 7-3-6-15 3 17 10 0 10 13 0-2 14 18-11 4 20-8 0-4 7 7 3 0 9 10-9 13 4 0-13 6 9 4-5 9 8-7 14 4 6-9-9-6 6 6 7-13 6 3 7 7-4 8 4 1 10-9 7 9 3-4 7 5 14 17-21 9-3 0 10 20-16 6 6-6 9-3-5 1 12 12 7 4-8 10 16 19 2-3 10-3-8-13 1 0 12-17 2 3 3-6 10 13 0-3 10-20-8 0 8-7 2-20-9 6 17 10 7-9 6 10 7 3-4 9 11-9 12-10-2 10 13-8 3 0 10 11-3 0-6 10 7 7-4 7 10-7-1 2 11 5-4 8 14-22 9 7 4-7 6-6-7-15 1 4 10-6 3 12 10-12 7 3 3-6 7 13 4 3-6 0 14 13 18-6 3-13-8-7 7-10-7-2 8 8 7-13 10 10 2 3 11-13 10-6-5-1 9-6 3 11 20-21-6-6 9 10 10-7 7-10-7-4 19-6-6-1 11-10 0-3 9-3-3-7 8-33 12 33 16 7 8 3-3 3 9 10 0 1 11 6-6 4 19 10-7 6 6-9 11 6 9 21-6-11 20 6 3 1 9 6-5 13 10-3 11-10 2 13 10-8 7 2 8 10-7 7 7 13-8 6 3-13 18 0 14-3-6-13 4 6 7-3 3 12 7-12 10 6 3-3 13 20-9 7 6-7 4 22 9-8 14-5-4-2 11 7-1-7 10-7-4-10 7 0-6-11-3 0 10 8 3-10 13 10-2 9 12-9 11-3-4-10 7 9 6-10 7-6 17 20-9 7 2 0 8 20-8 3 10-13 0 6 10-3 3 17 2 0 12 13 1 3-8 3 10-19 2-10 16-4-8-12 7-1 12 3-5 6 9-6 6-20-16 0 10-9-3-17-21-5 14 4 7-9 3 9 7-1 10-8 4-7-4-3 7 13 6-6 7 6 6 9-9-4 6 7 14-9 8-4-5-6 9 0-13-13 4-10-9 0 9-7 3 4 7 8 0-4 20-18-11 2 14-13 0 0 10-17 10 32 1 5 6-4 3 15-3 10 5-10 5 3 10 7-4 7 6 13-2-1 10 8 9-12-6-1-7-10 4 1 10-5-4-1 7 9 10-10 0-2 10 8-2 6 6-3 3 9 7-6 1 4 14 12 8-8 3 2 5-8-5 4-3-4-3-14 0-4 15-3-12-11-1-3-10-3 7-5-3 1 9-13-5-7 12-7-2 4 6-7 10-4-10-10-3 7-3-5-4 2-6-16-4 3 12-18-5 9-3-4-10 4-7-4 6-6-3 2-13-9-7 6-3-3-19-10 15-7 0 6 4-6 6-10-2 6 16-6 5-7-5-3 5-1-8-12 3 6 3-3 10 7-2 4 9-11 13-7-4-3 7-7-1-2-5 9-7-10-1-3-9-10 19-7-9-3 7-9 0 24 20-5 15-10-7 2 15-4 4 8 11 11 2-11 2-10 11-3-8-10 7-7-4-3 8-5-3 8-11 7 4 9-9-22-14 0 5-14 2-3-10 6-3-8-7 2-10-10 5 3 5-6 2 0 7-14-3 1-6-8 3 6 10-9 13 10-2 6 9-9-4-17 22-3-9-10 1 10-6-13-4 10-6-12-4 2-10-7 7-8-3 4 16-16 12-9-15 3-3-7-4-4 4 7 3-17 12-6-16-10 10-44-3 7 10 20 7 8 17 13 3 3 10-9 3 21 10-3 10-3-7-9 7 4 10 21 14-6 5-7-2 0 9-10-2 9 16-9-2-3 9 17 5-4 8 10 7 3 13-6 3-8-9-12 11-17-8 2 10-11 0 8 10-9 10-13-7-7 17-6-10-4 10-6-3 5 16 9 4-11 6 4 10 9 4-20 0-7 6zM2595 777l-5-9 8-11 2 5-7 3 6 3zM2972 890l-13-5 6-11zM1978 911l-4-6 8-12 6 5 7-8 13-2-23 13zM1922 1060l-10 1-1-6 11-6zM1175 1478l-10-10 3-9zM772 1568l-26-16 22-20 10 3 6 10-3 17zM1062 1558l-8-6 8-10 5 6zM1172 1640l-7-8 10-10zM1922 2051l-11-6 1-6 12 3zM2005 2214l-17-12-6 5-8-12 4-6 7 10 20 10zM2965 2226l-6-11 13-5zM2598 2343l-8-11 5-9 4 9-6 3 7 3zM2435 2631l-15-3 8-17 10 11z"/>
<path fill="#46556e" d="M2432 486l-9-1-2-13 4-3 12 3zM2482 2494l-16-19 3-3-9 3-2-9-6 7-10-1 6-3-3-7 5-7-8-3 4-10-5-4 8-3 2-10-6 3-10-7-7 7-6-11-14 7-10-6 6-10-16-10-13 12-7-10-10 1-10 12 4-15-11-6 7-5 7 6 4-8-6-7 17-10-5-7-16-3 14-10-5-6-6 6-4-14-15 8 2 6-5-3 12-25 6 3 11-5-6-6 7-4-8-10-7 7-6-3 19-16 7 1 0-11-7 8-6-6 13-12 10 2-7-6 14-7 0-9 8 2 8-12 4 3 14-11-31-3-3 6-14 0-10-10-6 13-11-6-3-10-4 4 4 6-16 10-5-3 2-7-10-3 3-5 6 2-2-10-8 2-6-6-1 10-9 7 8 3-8 4 0 6-14 1-4-11-12 0 3-9 13 4 0-6-9-2 7-13-8-4-3 10-7-1-6-5 3-7-10-3-4 13 7 3-10 10-10-3-3 6-10 1-2 6 8 4-13 13-19-10 11-3-8-1-8-13 19 7 2-7-6-3 4-10-16-7 2-10 3-3 3 6 1-9 11-7-22 0-3-13-7 10 3 9-16 0-16-13 9 1-2-4 7-3-5-7 7-3-7-4-3 10-14-2 0-8-20-23 3 17-6 3 9 3-6 10-6-3 5 20-9 2-3-9-6 7-1 23 6 0-16 5 1-18-7 2-4-6-13 6-7-8 2 6-9 3-1 17-8-3 3-4-5-6-2 5-8-2-3 3 7 4-12 6-9-13 9 0 3-7-5-3 5-3-10-1-5-9 5-9 3 9 7-4-3-3 8-7-14-6 7-10-6-7-11-3 5 6-9 9-5-2 6-7-6-3 15-16 6 3 9-7 1-5-10 2 4-13 15 3-4-4 5-6 27-4-17-12-3 5-5-13-12 9-6-3-3-16 6-3-7-7-6 9-8-2 6 7-2 3-6-4 0 11-14-8-9 1 6-7-4-6 4 2 3-6-9-6 15 0 5-14-4-3-7 6-9-6 3-10-7-15-7 12 7 3-10 6-7-3-3 10 9 4-2 4-7-8-3 13-12-13 6-6-11-5-5 1 2 9-14-9-14 7 11 7 0 9-30-22-3 5-5-6 1-4 17 7 17-10-9-6 15-10 0-12-6 8-7-3 4-16 13 1 10-11 3 5 10-5-16-10 3-8-14 11-12-10 7-10-4-3 9-4-6-3 0-12-11 9 3 6-12 5-7-15-16 0 5 4-6 8-3-8-3 6-16-16 9-9 3 5 4-15 3 15 10-9-3-16 20-1-20-14 8-6-2-9-13 8-10-9 3 6-6 15-9-8 6-3-4-7-12-7 9-15 6-1 4 7 0-11 10 0 3-6-10-4 3-10-10 3-3-5-3 15-10-17-10 1 10-16 10 3 4-7-4-9-7 2-15-10 2-9 13 1 5-5-8-7-4 4-9-14 13-3 0-7-4 6-9-12 10-7-13-13 8-4-9-6 4-34-7-27-21 47 4 4-13 19-7 0 3 11-5 3 5 3-6 5-7-9 4 14-17 6-2 21-8 6-2-6 8-3-13-5-3 10 5 8-9 14-4-11-9 3-3-6-4 10-6-3 6 16-13 29-6-2 5-7-2-14-14 2-4-8-9 13-7-4-3 5 6 6-8 14 7 6-13 7-5 10 2-20-9 3-13-6 1-14-12 4-3 12-13-4 0-6-10 6-4-5-3 17 6 6-9 8-3-5-7 11 0 7 8 3-21 6 6-10-3-4-10-9-20-3 10-4-6-10 6-13-10-1-7 7-10-8-4 12-9 6-12-9 2-14-13 3-4-9-20-8-2 24-4 7-4-4-3 11 7 8-17 6 4-11-7-4-7 8-3-6-7 14-3-5-14 6 0-13-8-3 8-10-6-10-14 0-13-10 7-3 6 6 11-13-9-4 3-6 7 0 5-10 15-7-15-9-7 2-3-13-10 9-3-2-13-14 9-1-5-15-15 10-10-7-6 18-3-11-14-5 7-5-4-7 9 0 4-7-5-6 15-10-12-7 3-9-10 0-7 8-3-9-8 0 3-10 15-10-20-17 10-3-11-10 7-7-6-27-17 20-26 14 6 3-3 6-7-17-10 11-13 4-3-4 7-6-18-8-13 14-13-6 7-7-8-10 8-7-20-13 7-3-8-13-23 2 0-10-12-9 12-13 0-10 23 2 8-13-7-3 20-13-8-7 7-7-6-10 3-3 7 2 3-5 3 9 4-4 10 9 14-8-7-6 3-4 6 1 17 14 7-17 3 6-6 3 26 14 17 20 6-27-7-7 11-10-10-3 20-17-15-10-3-10 8 0 3-9 7 8 10 0-3-9 12-7-15-10 5-6-4-7-9 0 4-7-7-5 14-5 3-11 6 18 10-7 15 10 5-15-9-1 13-14 3-2 10 9 3-13 7 2 15-9-15-7-5-10-7 0-3-6 9-4-11-13-6 6-7-3 13-10 14 1 6-11-8-10 8-3-1-10 5-4 10 7 3-5 7 14 3-6 7 8 6-2-4-12 4-2 4 6 10 1-7 8 3 11 4-4 4 7 2 24 20-8 4-9 13 3-2-14 12-9 9 6 4 12 10-8 7 7 10-1-6-13 6-10-10-4 20-3 10-9 3-4-6-10 21 6-8 3 0 7 7 11 3-5 9 8-6 6 3 17 4-5 10 6 0-6 13-4 3 12 12 4-1-14 13-6 9 3-2-20 5 10 13 7-7 6 8 14-6 3 3 8 7-4 9 13 4-8 14 2 2-14-5-7 6-2 13 29-6 16 6-3 4 10 3-6 9 3 4-11 9 14-5 8 3 10 13-5-8-3 2-6 8 6 2 21 17 6-4 14 7-9 6 5-5 3 5 3-3 11 7 0 13 19-4 4 21 47 7-27-4-34 9-6-8-4 13-13-10-7 9-12 4 6 0-7-13-3 9-14 4 4 8-7-5-5-13 1-2-9 15-10 7 2 4-9-4-7-10 3-10-16 10 1 10-17 3 15 3-5 10 3-3-10 10-4-3-6-10 0 0-11-4 7-6-1-9-15 12-7 4-7-6-3 9-8 6 15-3 6 10-9 13 8 2-9-8-6 20-14-20-1 3-16-10-9-3 15-4-15-3 5-9-9 16-16 3 6 3-8 6 8-5 4 16 0 7-15 12 5-3 6 11 9 0-12 6-3-9-4 4-3-7-10 12-10 14 11-3-8 16-10-10-5-3 5-10-11-13 1-4-16 7-3 6 8 0-12-15-10 9-6-17-10-17 7-1-4 5-6 3 5 30-22 0 9-11 7 14 7 14-9-2 9 5 1 11-5-6-6 12-13 3 13 7-8 2 4-9 4 3 10 7-3 10 6-7 3 7 12 7-15-3-10 9-6 7 6 4-3-5-14-15 0 9-6-3-6-4 2 4-6-6-7 9 1 14-8 0 11 6-4 2 3-6 7 8-2 6 9 7-7-6-3 3-16 6-3 12 9 5-13 3 5 17-12-27-4-5-6 4-4-15 3-4-13 10 2-1-5-9-7-6 3-15-16 6-3-6-7 5-2 9 9-5 6 11-3 6-7-7-10 14-6-8-7 3-3-7-4-3 9-5-9 5-9 10-1-5-3 5-3-3-7-9 0 9-13 12 6-7 4 3 3 8-2 2 5 5-6-3-4 8-3 1 17 9 3-2 6 7-8 13 6 4-6 7 2-1-18 16 5-6 0 1 23 6 7 3-9 9 2-5 20 6-3 6 10-9 3 6 3-3 17 20-23 0-8 14-2 3 10 7-4-7-3 5-7-7-3 2-4-9 1 16-13 16 0-3 9 7 10 3-13 22 0-11-7-1-9-3 6-3-3-2-10 16-7-4-10 6-3-2-7-19 7 8-13 8-1-11-3 19-10 13 13-8 4 2 6 10 1 3 6 10-3 10 10-7 3 4 13 10-3-3-7 6-5 7-1 3 10 8-4-7-13 9-2 0-6-13 4-3-9 12 0 4-11 14 1 0 6 8 4-8 3 9 7 1 10 6-6 8 2 2-10-6 2-3-5 10-3-2-7 5-3 16 10-4 6 4 4 3-10 11-6 6 13 10-10 14 0 3 6 31-3-14-11-4 3-8-12-8 2 0-9-14-7 7-6-10 2-13-12 6-6 7 8 0-11-7 1-19-16 6-3 7 7 8-10-7-4 6-6-11-5-6 3-12-25 5-3-2 6 15 8 4-14 6 6 5-6-14-10 16-3 5-7-17-10 6-7-4-8-7 6-7-5 11-6-4-15 10 12 10 1 7-10 13 12 16-10-6-10 10-6 14 7 6-11 7 7 10-7 6 3-2-10-8-3 5-4-4-10 8-3-5-7 3-7-6-3 10-1 6 7 2-9 9 3-3-3 16-19 8 26 8 7 19-1-9 4-4 10 5 6-13 20 11 4 1-6 4 10 6-10 7 18 13-8 9 9-9 10 10 13 7-9 3 4 7-6 13 12 7-10 4 3-11 20 3 6-17 7 7 13-3 11 10-3 0 10 4 2 0-6 8 6-22 14 3 3-6 7 6 3-3 5 10-7 3 9-23 10 0 6 7-5 2 5-15 10 3 4-7 1-3 12-34 17 24 3 27-6 10 10 6-16 17 12-8 3 8 7-3-3 8-4-4-3 9-14 16 11-6 6 1 10 9-3 7 10-1-13 11 0 4-7-13-3 25-9 7 12-9 3 1 7 9 7-5 10 9 3-2-6 14-3 0 8 6 1-6 7 6-3 7 6-2-10 9-5 0-7-6 2 2-10 20 8 4-8 10 0 10-16 13 4 3 2-17 7-3 6 6 7-6 7 4 6 10-7 5 14-27 20 12 0 3 7 7-9 10 20 3-10 12-1-8-4-1-8 7-1 3 8 7-4 10 12-3 9-7-2 3 10-6 4 13 2 7-9 6 4-3 19 10-3 6 6-6 5 7-1 13 18 0-22-6-3 9-6 0-16 6 2-2 6 5-3-5-7 5-10-9-3 17-5-5 12 13 0 15-30 6 10-4 6 8-1 7 12 13-6-3 9 10 6 5-6-4-4 9 2 7-17 3 16 10 3 17-8-15 18 3 10-6 3 4 3-6 6-3-6-6 4 2 10 11 0-11 10 7 16 10 2 8-12-2 16-30 1-4 13 4-2 4 6-20-1 3 7-17 7-3-7-18 0 8 11 3-4 8 7 0 10 14 0 1 10-6 0 3 6 17-13 5 20-8-1-5 8 8 3 0 11 10-11 6 7 11 0-4-16 6 9 7 0 3 23-9-10-7 7 6 7-16 3 7 10 7-4 7 4 2 10-9 10 9 0-5 7 5 3 1 14 17-24 9-2-3 9 6 0 11-10 5 10-3 6 8 0 0 9 16-5 4 11 19 2-3 6-3-5-13 1-7 11-10 4 3 3-7 3 1 8 10-3-2 9-12 0-6-6-1 9-6 2-20-9 5 17 11 7-9 6 0 7 6-3 17 13-10 9-3-5-4 6-3-3 9 13-7 3 4 4-5 6 29-5 7 9-7-1 0 11 7-3 7 13-21 9 6 4-6 6-6-7-15 1 4 7-6 7 13 6-16 20 13 4 3-5 0 14 7 10-13 1-7 8-10-9 2 7-5 3 8 7-5 6-5-3-2 7 10 3 3 10-13 10-6-5-1 9-6 3 6 7-3 6-10 5-3-5-7 10 4 10 3-5 3 6-6 6-10-7-4 19-6-6-12 11-2 9-3-3-10 10-30 10 39 24 4-3 2 9 12 11 6-6 4 19 10-7 6 6-3 6-3-5-4 10 7 10 3-5 10 5 3 6-6 7 6 3 1 9 6-5 13 10-3 10-10 3 2 7 5-3 5 6-8 7 5 3-2 7 10-9 7 8 13 1-7 10 0 14-3-5-13 4 16 20-13 6 6 7-4 7 15 1 6-7 6 6-6 4 21 9-7 13-7-3 0 11 7-1-7 9-29-5 5 6-4 4 7 3-9 13 3-3 4 6 3-5 10 9-17 13-6-3 0 7 9 6-11 7-5 17 20-9 6 2 1 9 6-6 12 0 2 9-10-3-1 8 7 3-3 3 10 4 7 11 13 1 3-5 3 6-19 2-4 11-16-5 0 9-8 0 3 6-5 10-11-10-6 0 3 9-9-2-17-24-1 14-5 3 5 7-9 0 9 10-2 10-7 4-7-4-7 10 16 3-6 7 7 7 9-10-3 23-7 0-6 9 4-16-11 0-6 7-10-11 0 11-8 3 5 8 8-1-5 20-17-13-3 6 6 0-1 10-14 0 0 10-8 7-3-4-8 11 18 0 3-7 17 7-3 7 20-1-4 6-4-2 4 13 30 1 2 16-8-12-10 2-7 16 11 10-11 0-2 10 6 4 3-6 6 6-4 3 6 3 2 20 11 7-18-7-10 3-3 16-7-17-9 2 4-4-5-6-10 6 3 9-13-6-7 12-8-1 4 6-6 10-15-30-13 0 5 12-17-5 9-3-5-10 5-7-5-3 2 6-6 2 0-16-9-6 6-3 0-22-13 18-7-1 6 5-6 6-10-3 3 19-6 4-7-9-13 2 6 4-3 10 7-2 3 9-10 12-7-4-3 8-7-1 1-8 8-4-12-1-3-10-10 20-7-9-3 7-12 0 27 20-5 14-10-7-4 6 6 7-6 7 3 6 17 7-3 2-13 4-10-16-10 0-4-8-20 8-2-10 6 2 0-7-9-5 2-10-7 6-6-3 6 7-6 1 0 8-14-3 2-6-9 3 5 10-9 7-1 7 9 3-7 12-25-9 13-3-4-7-11 0 1-13-7 10-9-3-1 10 6 6-16 11-9-14 4-3-8-4 3-3-8 7 8 3-17 12-6-16-10 10-27-6-24 3 34 17 3 12 7 1-3 4 15 10-2 5-7-5 0 6 23 10-3 9-10-7 3 5-6 3 6 7-3 3 22 14-8 6 0-6-4 2 0 10-10-3 3 11-7 13 17 7-3 6 11 20-4 3-7-10-13 12-7-6-3 4-7-9-10 13 9 10-9 9-13-8-7 18-6-10-4 10-1-6-11 4 13 20-5 6 4 10 9 4-19-1-8 7zM2972 889l-12-4 5-10zM1548 1233l-5-8 2-11 7 14zM772 1568l-25-16 21-20 10 3 5 10-2 17zM1062 1558l-7-6 7-10 4 6zM1545 1886l-2-11 5-8 4 5zM2965 2225l-5-10 12-4zM2435 2630l-14-2 4-14 13 8z"/>
<path fill="#000" d="M2432 483l-8-5 1-7 11 7zM2482 2477l-8-2-2-9-17-6 2-5-7-7 0-10 14-16-2-2-24 0-3-4-7 7 2-5-12-8-6 6-5-4 3-7-5-5-7 2-10-19-6 16-20-6-1-15 14-4 2-6-8-6 5-4-10-6 6-4-3-13-2-2-7 6-8-11 17-10-5-6 5-4-3-3 3-3-8-7 12-7 3-6-3-7 13-10-6 2 0-5 7-2 22-22 25-11 13 0 0-4-30 3-3-3-7 3-3-3-10 3-7-7-3 10-7-10-10 7-10-12 1 8-4 7-5-11-12-8-2 8-8 9-10-1 8-8-2-6-6-3-3 4-10-10-6 2 2 10-6 1-4 5-11-13 8-11-13 2-4-6-10 10 2-11-8 1-4-7-3 3-7-6 1 12-6 7 4 3-15 1 1 6-11 5-5-9 6-3-6-3-2-7-8 0 7-7 0-10 11-3-10-9-3 7-4-6-13 5 6-10-3-3-3 4-7-10 1 9-14 8-4-5 6-3-6-4 3-6-9-9-8 5 1 5-6 0 5-15-9-2-3 7-4-5 3-6-7 0-4-10-5 0-13-12 9 32-8 13 3 3-9 4-8 18-10-7-10 4-7-3-3 5-10-9 1 8-8 8-15 2 3-6-6-7 1-7 10-6-8-7 4-3-7-7 3-10-11-7 18-16-5-4 23-14 3 2 14-6 3 4 2-6-12-2-10-8-1-6-8-4 1-3-5-5-9 5 2 4-6-1-4-6 6-10-6-1-7-8-5 5 2 5-10-6-6 1-2-3 8-13 3-3 4 3-4-5-3 4-7-12-17 6 9-17-5-1-3 5 0-7-10-15 0 15-7 1-1 6-12 8-14-10-13 7-8-5 2-10 8-4-5-6 5-4-4-10 5 1 7-8 16-6-6-9-3 3-4-7-6-2 0-11-4 4-11-5 6-3-2-7 3-3-2-4-8 4 3-13-5-9-7 15-3-4-7 9-10-13-3 3-8-1 7-10 2-10 18-7-7-3 3-4-3-6-13-7 6-7-6 0 1-12-14 7-6-7-7 3-5-4 10-7 7-13-2-6-3 3-5-4 10-6-9-9-6 6-4-7-4 0 4-12 9-2-7-10 4-3-6-5-3 6-12-11 7-3-3-4 7-3-3-3 3-7-2-2-4 6-6-6-8-1 10-7 3-10-7 0 4-17-6 1-6-7 6 1 2-8-8 1-4-4 4-5 3 3 5-2-8-6 2-10-6-10 6-4-6-3-1-7 5-3-5-3 3-14-3-3-2-51-2 28-10 26 3 4-6 10 3 3-10 13 0 7-7 3 7 4-17 16 4 4-7 3-2 7 4 4-10-2-6 21-7-3-6 6 4 10-8 5-4-4-11 9 2 14-14 1-3-3-17 10-1 5 5 3-3 7 5 3-6 5-12-5-5-8-5 2 2 4-8-1 2 3-4 6-3-7-7 10-7-4 5 15-8 12-10 1-3-7-7-2 3-12-6 6-4-3 0 6-7-1 1-5-10 14-7-11-5 2 2 7-5 0-2-5-10 3-7-3 5 22-15 17-5-4 2-5-3 3-10-6-5-9 3-3-3-3 10-10-2-2-7 3-6-4-4 4-3-4-7 5-13-6 0 8-3-3-7 5-5-3 3-3-5-10-10-5-3 6-7-7-6 3-4-9-3 6-13-13-2 19 5 3-5 3 3 4-8 10-5 0 2 5-7-4-7 6-10-3-6 10-7 1-3-9 5-6-9-7-3-12-3 3-5-4 1-4 8-3-3-10 9-8 22-9-16-5-3-7-3 3-4-10-6 6 0-12-4 3-3-7-10 4-3-8 5-3-5-6-8-1 4-3-5-4-1-8-10 13-10-6-4 4-4-3 3-6-2-7 15-10-6-3-2-9-10 0 5-5-5-7-10 2-5-5 0-10 5 2 5-5-6-3 3-4-2-5-4 3-8-4 10-7-13-10 9-7-9-3 3-13-3-34-4 0-6 20-11 14-14 4-7 7-7-3-13 1-3 9-5-5 1-5-10 3-3-6-7-1-13 10-3-7-5-1 5 0 5-10-20-13 7-3-7-7-3-13-2-2-14 6-17-14 11-16 6-2 14 6 4-5 1-10 7-7-7-3 20-13-5-10-5 0 5-1 3-7 13 10 7-1 3-6 10 3-1-5 5-5 3 9 13 1 7-3 7 7 14 4 11 14 6 20 4 0 3-34-3-13 9-3-9-7 13-10-10-7 8-4 4 3 2-5-3-4 6-3-5-5-5 2 0-10 5-5 10 2 5-7-5-5 10 0 2-9 6-3-15-10 2-7-3-6 4-3 4 4 10-6 10 13 1-8 5-4-4-3 8-1 5-6-5-3 3-8 10 4 3-7 4 3 0-12 6 6 4-10 3 3 3-7 16-5-22-9-9-8 3-10-8-3-1-4 5-4 3 3 3-12 9-7-5-6 3-9 7 1 6 10 10-3 7 6 7-4-2 5 5 0 8 10-3 4 5 3-5 3 2 19 13-13 3 6 4-9 6 3 7-7 3 6 10-5 5-10-3-3 5-3 7 5 3-3 0 8 13-6 7 5 3-4 4 4 6-4 7 3 2-2-10-10 3-3-3-3 5-9 10-6 3 3-2-5 5-4 15 17-5 22 7-3 10 3 2-5 5 0-2 7 5 2 7-11 10 14-1-5 7-1 0 6 4-3 6 6-3-12 7-2 3-7 10 1 8 12-5 15 7-4 7 10 3-7 4 6-2 3 8-1-2 4 5 2 5-8 12-5 6 5-5 3 3 7-5 3 1 5 17 10 3-3 14 1-2 14 11 9 4-4 8 5-4 10 6 6 7-3 6 21 10-2-4 4 2 7 7 3-4 4 17 16-7 4 7 3 0 7 10 13-3 3 6 10-3 4 10 26 2 28 2-51 3-3-3-14 5-3-5-3 1-7 6-3-6-4 6-10-2-10 8-6-5-2-3 3-4-5 4-4 8 1-2-8-6 1 6-7 6 1-4-17 7 0-3-10-10-7 8-1 6-6 4 6 2-2-3-7 3-3-7-3 3-4-7-3 12-11 3 6 6-5-4-3 7-10-9-2-4-12 4 0 4-7 6 6 9-9-10-6 5-4 3 3 2-6-7-13-10-7 5-4 7 3 6-7 14 7-1-12 6 0-6-7 13-7 3-6-3-4 7-3-18-7-2-10-7-10 8-1 3 3 10-13 7 9 3-4 7 15 5-9-3-13 8 4 2-4-3-3 2-7-6-3 11-5 4 4 0-11 6-2 4-7 3 3 6-9-16-6-7-8-5 1 4-10-5-4 5-6-8-4-2-10 8-5 13 7 14-10 12 8 1 6 7 1 0 15 10-15 0-7 3 5 5-1-9-17 17 6 7-12 3 4 4-5-4 3-3-3-8-13 2-3 6 1 10-6-2 5 5 5 7-8 6-1-6-10 4-6 6-1-2 4 9 5 5-5-1-3 8-4 1-6 10-8 12-2-2-6-3 4-14-6-3 2-23-14 5-4-18-16 11-7-3-10 7-7-4-3 8-7-10-6-1-7 6-7-3-6 15 2 8 8-1 8 10-9 3 5 7-3 10 4 10-7 8 18 9 4-3 3 8 13-9 32 13-12 5 0 4-10 7 0-3-6 4-5 3 7 9-2-5-15 6 0-1 5 8 5 9-9-3-6 6-4-6-3 4-5 14 8-1 9 7-10 3 4 3-3-6-10 13 5 4-6 3 7 10-9-11-3 0-10-7-7 8 0 2-7 6-3-6-3 5-9 11 5-1 6 15 1-4 3 6 7-1 12 7-6 3 3 4-7 8 1-2-11 10 10 4-6 13 2-8-11 11-13 4 5 6 1-2 10 6 2 10-10 3 4 6-3 2-6-8-8 10-1 8 9 2 8 12-8 5-11 4 7-1 8 10-12 10 7 7-10 3 10 7-7 10 3 3-3 7 3 3-3 30 3 0-4-13 0-25-11-22-22-7-2 0-5 6 2-13-10 3-7-3-6-12-7 8-7-3-3 3-3-5-4 5-6-17-10 8-11 7 6 2-2 3-13-6-4 10-6-5-4 8-6-2-6-14-4 1-15 20-6 6 16 10-19 7 2 5-5-3-7 5-4 6 6 12-8-2-5 7 7 3-4 24 0 2-2-14-16 0-10 7-7-2-5 17-6 2-9 4-2 8 5-1 9 18 8-4 7 4 6-5 7 2 3-13 10 2 4 13 2 10 7 3-4 10 13 3-6 8 8-6 3 12 5-2 5 8 10 14-8 14 8-6 3 2 8-19 2 9 14 1 20 12 2-2 4 3 4-8 6-5 0 3 10-6 7 4 3-1 7-5-1-8 11 6 3-1 7-7-5-5 12-26 23-34 10 25 2 4-3 3 3 3-3 10 6 10-6 4 6 10-5 3 6 7-4 13 10 0-10 7 0 4 5-3 3 5 5 4-5 3 2 13-9 5 7-3 3 2 6 3-3 3 3 7-6 6 10 7 5-4-11 11-5 3-6 10 17-10 9 14 0 3 3 10-6 3 13 10-6-2 7 16 9 2-2-6-13 9-14 15-1 10-7 2 8-4 4 6 3 0 7 7 3-10 17-13 3 12 5 3-3 3 6 4-6 3 7 10-7-2 11 9 9 6-7 14-6-2 14 4 4-8 6 6 3 3-4 3 7 4-3 9 1 1 6-6 4 10 3 6 9 10-3-6 7 9-1-2 5 22 21-9-21 4-7-4-3 5-4-4-3 6-3-2-7 6-3 5-15 10 3 6-9 4 4 3-15 8 5 2 9 7-3 3 3 7-7-2 8 5 2 3-3 10 13 2-9 8-6 10 5 7-3-5 8 3 3-1 7-15 10 6 6-3 4 3 6-3 10 9 10-11 1-5 6 2 3-8 4 1 8-6-4-7 10-3-3-7 3-20 0-10-6-2 2 15 14 4-2 6 13 6-2-1 7 9 4-2 6 6 3-3 3 2 3 7-4 6 3-5 12 5 5 4-2 3 16 7-8 16 4-5 5 4 6-12 5-2 5 5 0 18 20-7 7 6 3 4-3-6 10 5 3-2 7 6 15 5-12-3-3 13-7 5-11 3 10 13-5 14 22 6-4 8 5-4 8-9 2-3 7 6 3-10 3 2 8-6-3-10 5-17-5-6 2 7 10-3 3 6 4-3 6 7 4-7 6 7 4-4 3 13 7-9 10 3 10-3 3 3 7-3 13 2 2 3-6 10-4 12 5-1 3 7 3-3 4 8 3-3 7-6-2-7 10-13 0-7-7-2 2 3 7-3 3 0 13 5 10-5 7 3 3-8 4 4 8 6-3 5 5 3 13-11 6-10-8-2 2 0 10-4 3 4 4-7 6 0 7 10 10-11 8-3-4-3 13-6 0-2 6 8 4-3 6-8 2-3-7-2 2-7 13 2 9-8-2-4 13-4-1-6 11-4-1-6 5 2 7-6-2-7 9-3-3-29 15 2 6 7 0 20 13 3-3 7 9 6-2-2 7 6 5 4-1 6 11 4-1 4 13 8-2-2 9 9 15 3-7 8 2 3 6-8 4 2 6 6 0 3 13 3-4 11 8-10 10 0 7 7 6-4 4 4 3 0 10 2 2 10-8 11 6-3 13-5 5-6-3-4 8 8 4-3 3 5 7-5 10 0 13 3 3-3 7 2 2 7-7 13 0 7 10 6-2 3 7-8 3 3 4-7 3 1 3-12 5-10-4-3-6-2 2 3 13-3 7 3 3-3 10 9 10-13 7 4 3-7 4 7 6-7 4 3 6-6 4 3 3-7 10 6 2 17-5 10 5 6-3-2 8 10 3-6 3 3 7 9 2 4 8-8 5-6-4-14 22-13-5-3 10-5-11-13-7 3-3-5-12-6 15 2 7-5 3 6 10-4-3-6 3 7 7-18 20-5 0 2 5 12 5-4 6 5 5-16 4-7-8-3 16-4-2-5 5 5 12-6 3-7-4-2 3 3 3-6 3 2 6-9 4 1 7-6-2-6 13-4-2-15 14 2 2 10-6 20 0 7 3 3-3 7 10 6-4-1 8 8 4-2 3 5 6 11 1-9 10 3 10-3 6 3 4-6 6 15 10 1 7-3 3 6 7-8-2-10 5-8-6-2-9-10 13-3-3-5 2 2 8-7-7-3 3-7-3-2 9-8 5-3-15-4 4-6-9-10 3-5-15-6-3 2-7-6-3 4-3-5-4 4-3-4-7 9-21-22 21 2 5-9-1 6 7-10-3-6 9-10 3 6 4-1 6-9 1-4-3-3 7-3-4-6 3 8 6-4 4 2 14-14-6-6-7-9 9 2 11-10-7-3 7-4-6-3 6-3-3-12 5 13 3 10 17-7 3 0 7-6 3 4 4-2 8-10-7-15-1-9-14 6-13-2-2-16 9 2 7-10-6-3 13-10-6-3 3-14 0 10 9-10 17-3-6-11-5 4-11-7 5-6 10-7-6-3 3-3-3-2 6 3 3-5 7-13-9-3 2-4-5-5 5 3 3-4 5-7 0 0-10-13 10-7-4-3 6-10-5-4 6-10-6-10 6-3-3-3 3-4-3-23 0 0 4 32 8 26 23 5 12 7-5 1 7-6 3 8 11 5-1 1 7-4 3 6 7-3 10 5 0 8 6-3 4 2 4-12 2-1 20-9 14 19 2-2 8 6 3-14 8-14-8-8 10 2 5-12 5 6 3-8 8-3-6-10 13-3-4-10 7-13 2-2 4 13 10-2 3 5 7-4 6 4 7-20 10 3 7zM772 1566l-14-13-6 2-1-3 1-7 6 2 10-13 11 4 0 24zM2425 2629l-1-7 8-5 4 5z"/></g></g></svg>
<rect x="1.20" y="61.20" width="1.20" height="310.30" fill="#2f6fd0"/>
<rect x="417.20" y="61.80" width="3.20" height="343.40" fill="#fff"/>
<g opacity=".92"><path d="M270.500 231C256 214 277 197 283.600 173.700C285 186 270 198 268.500 211" fill="#123f58" stroke="#7d8c98" stroke-width="1.700" stroke-linejoin="round" stroke-linecap="round"/><path d="M270.500 209C272 197 285 191 287.700 176.500C291 190 281 197 288 207.500Z" fill="#1d6485" stroke="#7d8c98" stroke-width="1" stroke-linejoin="round"/><circle cx="280.700" cy="219.800" r="12.600" fill="#1b5f80" stroke="#7d8c98" stroke-width="1.500"/></g>
<rect x="420.40" y="62.60" width="177.00" height="342.40" fill="#f4f4f4"/>
<rect x="420.40" y="62.60" width="0.90" height="342.40" fill="#b9c2cc"/>
<rect x="421.30" y="63.40" width="176.00" height="22.80" fill="#cbd9ea"/>
<rect x="421.60" y="63.60" width="175.60" height="10.30" fill="#a9c1de"/>
<rect x="421.60" y="75.40" width="175.60" height="10.50" fill="#a6bfdc"/>
<path d="M425.6 66.6l2.6 2-2.6 2z" fill="#111"/>
<path d="M424.8 79.6h4l-2 2.600z" fill="#111"/>
<rect x="421.30" y="86.40" width="175.90" height="150.20" fill="#f4f4f4"/>
<line x1="421.30" y1="236.60" x2="597.20" y2="236.60" stroke="#dcdcdc" stroke-width="0.6"/>
<rect x="421.30" y="237.00" width="175.90" height="3.00" fill="#f8f8f8"/>
<path d="M423.2 90h3.400l-1.7 2z" fill="#111"/>
<rect x="430.80" y="89.30" width="165.00" height="21.00" fill="#e0e0e0"/>
<rect x="431.50" y="89.90" width="3.60" height="19.80" fill="url(#gr)"/>
<rect x="591.00" y="89.90" width="3.40" height="19.80" fill="url(#gr)"/>
<rect x="437.50" y="89.90" width="150.00" height="19.80" fill="url(#uf)"/>
<rect x="430.80" y="112.40" width="165.00" height="21.10" fill="#e0e0e0"/>
<rect x="431.50" y="113.00" width="3.60" height="19.90" fill="url(#gg)"/>
<rect x="591.00" y="113.00" width="3.40" height="19.90" fill="url(#gg)"/>
<rect x="437.50" y="113.00" width="150.00" height="19.90" fill="url(#uf)"/>
<rect x="430.80" y="136.00" width="165.00" height="22.20" fill="#e0e0e0"/>
<rect x="431.50" y="136.60" width="3.60" height="21.00" fill="url(#gb)"/>
<rect x="591.00" y="136.60" width="3.40" height="21.00" fill="url(#gb)"/>
<rect x="437.50" y="136.60" width="150.00" height="21.00" fill="url(#uf)"/>
<polyline points="437.5,108.9 438.5,108.9 439.5,108.9 440.5,108.8 441.5,108.8 442.5,108.8 443.5,108.7 444.5,108.6 445.5,108.6 446.5,108.5 447.5,108.4 448.5,108.3 449.5,108.2 450.5,108.1 451.5,108.0 452.5,107.8 453.5,107.7 454.5,107.6 455.5,107.5 456.5,107.3 457.5,107.2 458.5,107.0 459.5,106.9 460.5,106.8 461.5,106.6 462.5,106.5 463.5,106.3 464.5,106.0 465.5,105.7 466.5,105.4 467.5,105.1 468.5,104.8 469.5,104.4 470.5,104.0 471.5,103.6 472.5,103.1 473.5,102.7 474.5,102.2 475.5,101.7 476.5,101.2 477.5,100.7 478.5,100.2 479.5,99.7 480.5,99.2 481.5,98.7 482.5,98.2 483.5,97.7 484.5,97.2 485.5,96.7 486.5,96.2 487.5,95.8 488.5,95.3 489.5,94.9 490.5,94.5 491.5,94.1 492.5,93.7 493.5,93.4 494.5,93.1 495.5,92.8 496.5,92.6 497.5,92.4 498.5,92.2 499.5,92.1 500.5,92.0 501.5,91.9 502.5,91.9 503.5,91.8 504.5,91.7 505.5,91.7 506.5,91.6 507.5,91.5 508.5,91.5 509.5,91.4 510.5,91.4 511.5,91.3 512.5,91.3 513.5,91.2 514.5,91.2 515.5,91.1 516.5,91.1 517.5,91.0 518.5,91.0 519.5,91.0 520.5,90.9 521.5,90.9 522.5,90.9 523.5,90.8 524.5,90.8 525.5,90.8 526.5,90.8 527.5,90.8 528.5,90.7 529.5,90.7 530.5,90.7 531.5,90.7 532.5,90.7 533.5,90.7 534.5,90.7 535.5,90.8 536.5,91.0 537.5,91.3 538.5,91.7 539.5,92.2 540.5,92.7 541.5,93.3 542.5,93.9 543.5,94.6 544.5,95.3 545.5,96.1 546.5,96.9 547.5,97.7 548.5,98.5 549.5,99.4 550.5,100.2 551.5,101.1 552.5,101.9 553.5,102.7 554.5,103.5 555.5,104.3 556.5,105.0 557.5,105.7 558.5,106.3 559.5,106.9 560.5,107.4 561.5,107.9 562.5,108.3 563.5,108.6 564.5,108.8 565.5,108.9 566.5,108.9 567.5,108.9 568.5,108.9 569.5,108.9 570.5,108.9 571.5,108.9 572.5,108.9 573.5,108.9 574.5,108.9 575.5,108.9 576.5,108.9 577.5,108.9 578.5,108.9 579.5,108.9 580.5,108.9 581.5,108.9 582.5,108.9 583.5,108.9 584.5,108.9 585.5,108.9 586.5,108.9 587.5,108.9" fill="none" stroke="#fff" stroke-width=".8" stroke-dasharray="1.4 1.4" opacity=".9"/>
<polyline points="437.5,108.9 438.5,108.9 439.5,108.9 440.5,108.8 441.5,108.8 442.5,108.8 443.5,108.7 444.5,108.6 445.5,108.6 446.5,108.5 447.5,108.4 448.5,108.3 449.5,108.2 450.5,108.1 451.5,108.0 452.5,107.8 453.5,107.7 454.5,107.6 455.5,107.5 456.5,107.3 457.5,107.2 458.5,107.0 459.5,106.9 460.5,106.8 461.5,106.6 462.5,106.5 463.5,106.3 464.5,106.0 465.5,105.7 466.5,105.4 467.5,105.1 468.5,104.8 469.5,104.4 470.5,104.0 471.5,103.6 472.5,103.1 473.5,102.7 474.5,102.2 475.5,101.7 476.5,101.2 477.5,100.7 478.5,100.2 479.5,99.7 480.5,99.2 481.5,98.7 482.5,98.2 483.5,97.7 484.5,97.2 485.5,96.7 486.5,96.2 487.5,95.8 488.5,95.3 489.5,94.9 490.5,94.5 491.5,94.1 492.5,93.7 493.5,93.4 494.5,93.1 495.5,92.8 496.5,92.6 497.5,92.4 498.5,92.2 499.5,92.1 500.5,92.0 501.5,91.9 502.5,91.9 503.5,91.8 504.5,91.7 505.5,91.7 506.5,91.6 507.5,91.5 508.5,91.5 509.5,91.4 510.5,91.4 511.5,91.3 512.5,91.3 513.5,91.2 514.5,91.2 515.5,91.1 516.5,91.1 517.5,91.0 518.5,91.0 519.5,91.0 520.5,90.9 521.5,90.9 522.5,90.9 523.5,90.8 524.5,90.8 525.5,90.8 526.5,90.8 527.5,90.8 528.5,90.7 529.5,90.7 530.5,90.7 531.5,90.7 532.5,90.7 533.5,90.7 534.5,90.7 535.5,90.8 536.5,91.0 537.5,91.3 538.5,91.7 539.5,92.2 540.5,92.7 541.5,93.3 542.5,93.9 543.5,94.6 544.5,95.3 545.5,96.1 546.5,96.9 547.5,97.7 548.5,98.5 549.5,99.4 550.5,100.2 551.5,101.1 552.5,101.9 553.5,102.7 554.5,103.5 555.5,104.3 556.5,105.0 557.5,105.7 558.5,106.3 559.5,106.9 560.5,107.4 561.5,107.9 562.5,108.3 563.5,108.6 564.5,108.8 565.5,108.9 566.5,108.9 567.5,108.9 568.5,108.9 569.5,108.9 570.5,108.9 571.5,108.9 572.5,108.9 573.5,108.9 574.5,108.9 575.5,108.9 576.5,108.9 577.5,108.9 578.5,108.9 579.5,108.9 580.5,108.9 581.5,108.9 582.5,108.9 583.5,108.9 584.5,108.9 585.5,108.9 586.5,108.9 587.5,108.9" fill="none" stroke="#e02020" stroke-width=".8" stroke-dasharray="1.4 1.4" stroke-dashoffset="1.4"/>
<rect x="460.00" y="105.22" width="3.00" height="2.80" fill="#d01818" stroke="#a01010" stroke-width="0.6"/>
<rect x="499.00" y="90.58" width="3.00" height="2.80" fill="#d01818" stroke="#a01010" stroke-width="0.6"/>
<rect x="532.38" y="89.70" width="3.00" height="2.80" fill="#d01818" stroke="#a01010" stroke-width="0.6"/>
<rect x="564.62" y="107.10" width="3.00" height="2.80" fill="#d01818" stroke="#a01010" stroke-width="0.6"/>
<polyline points="437.5,131.6 438.5,131.5 439.5,131.4 440.5,131.3 441.5,131.1 442.5,130.9 443.5,130.7 444.5,130.4 445.5,130.1 446.5,129.8 447.5,129.5 448.5,129.1 449.5,128.8 450.5,128.4 451.5,128.0 452.5,127.6 453.5,127.2 454.5,126.9 455.5,126.5 456.5,126.1 457.5,125.7 458.5,125.4 459.5,125.0 460.5,124.7 461.5,124.4 462.5,124.1 463.5,123.8 464.5,123.5 465.5,123.2 466.5,122.9 467.5,122.5 468.5,122.2 469.5,121.8 470.5,121.5 471.5,121.1 472.5,120.7 473.5,120.4 474.5,120.0 475.5,119.7 476.5,119.3 477.5,118.9 478.5,118.6 479.5,118.2 480.5,117.9 481.5,117.5 482.5,117.2 483.5,116.9 484.5,116.6 485.5,116.3 486.5,116.0 487.5,115.7 488.5,115.5 489.5,115.2 490.5,115.0 491.5,114.8 492.5,114.6 493.5,114.4 494.5,114.3 495.5,114.1 496.5,114.0 497.5,113.9 498.5,113.9 499.5,113.8 500.5,113.8 501.5,113.8 502.5,113.8 503.5,113.9 504.5,113.9 505.5,114.0 506.5,114.1 507.5,114.2 508.5,114.3 509.5,114.5 510.5,114.6 511.5,114.8 512.5,114.9 513.5,115.1 514.5,115.3 515.5,115.5 516.5,115.7 517.5,115.9 518.5,116.1 519.5,116.3 520.5,116.6 521.5,116.8 522.5,117.0 523.5,117.3 524.5,117.5 525.5,117.8 526.5,118.0 527.5,118.3 528.5,118.5 529.5,118.8 530.5,119.1 531.5,119.3 532.5,119.6 533.5,119.8 534.5,120.1 535.5,120.3 536.5,120.7 537.5,121.0 538.5,121.4 539.5,121.8 540.5,122.2 541.5,122.7 542.5,123.2 543.5,123.6 544.5,124.1 545.5,124.6 546.5,125.1 547.5,125.7 548.5,126.2 549.5,126.7 550.5,127.2 551.5,127.7 552.5,128.1 553.5,128.6 554.5,129.0 555.5,129.5 556.5,129.9 557.5,130.2 558.5,130.6 559.5,130.9 560.5,131.2 561.5,131.4 562.5,131.6 563.5,131.8 564.5,131.9 565.5,131.9 566.5,132.0 567.5,132.0 568.5,132.0 569.5,131.9 570.5,131.9 571.5,131.9 572.5,131.9 573.5,131.9 574.5,131.9 575.5,131.9 576.5,131.9 577.5,131.8 578.5,131.8 579.5,131.8 580.5,131.8 581.5,131.8 582.5,131.7 583.5,131.7 584.5,131.7 585.5,131.7 586.5,131.6 587.5,131.6" fill="none" stroke="#fff" stroke-width=".8" stroke-dasharray="1.4 1.4" opacity=".9"/>
<polyline points="437.5,131.6 438.5,131.5 439.5,131.4 440.5,131.3 441.5,131.1 442.5,130.9 443.5,130.7 444.5,130.4 445.5,130.1 446.5,129.8 447.5,129.5 448.5,129.1 449.5,128.8 450.5,128.4 451.5,128.0 452.5,127.6 453.5,127.2 454.5,126.9 455.5,126.5 456.5,126.1 457.5,125.7 458.5,125.4 459.5,125.0 460.5,124.7 461.5,124.4 462.5,124.1 463.5,123.8 464.5,123.5 465.5,123.2 466.5,122.9 467.5,122.5 468.5,122.2 469.5,121.8 470.5,121.5 471.5,121.1 472.5,120.7 473.5,120.4 474.5,120.0 475.5,119.7 476.5,119.3 477.5,118.9 478.5,118.6 479.5,118.2 480.5,117.9 481.5,117.5 482.5,117.2 483.5,116.9 484.5,116.6 485.5,116.3 486.5,116.0 487.5,115.7 488.5,115.5 489.5,115.2 490.5,115.0 491.5,114.8 492.5,114.6 493.5,114.4 494.5,114.3 495.5,114.1 496.5,114.0 497.5,113.9 498.5,113.9 499.5,113.8 500.5,113.8 501.5,113.8 502.5,113.8 503.5,113.9 504.5,113.9 505.5,114.0 506.5,114.1 507.5,114.2 508.5,114.3 509.5,114.5 510.5,114.6 511.5,114.8 512.5,114.9 513.5,115.1 514.5,115.3 515.5,115.5 516.5,115.7 517.5,115.9 518.5,116.1 519.5,116.3 520.5,116.6 521.5,116.8 522.5,117.0 523.5,117.3 524.5,117.5 525.5,117.8 526.5,118.0 527.5,118.3 528.5,118.5 529.5,118.8 530.5,119.1 531.5,119.3 532.5,119.6 533.5,119.8 534.5,120.1 535.5,120.3 536.5,120.7 537.5,121.0 538.5,121.4 539.5,121.8 540.5,122.2 541.5,122.7 542.5,123.2 543.5,123.6 544.5,124.1 545.5,124.6 546.5,125.1 547.5,125.7 548.5,126.2 549.5,126.7 550.5,127.2 551.5,127.7 552.5,128.1 553.5,128.6 554.5,129.0 555.5,129.5 556.5,129.9 557.5,130.2 558.5,130.6 559.5,130.9 560.5,131.2 561.5,131.4 562.5,131.6 563.5,131.8 564.5,131.9 565.5,131.9 566.5,132.0 567.5,132.0 568.5,132.0 569.5,131.9 570.5,131.9 571.5,131.9 572.5,131.9 573.5,131.9 574.5,131.9 575.5,131.9 576.5,131.9 577.5,131.8 578.5,131.8 579.5,131.8 580.5,131.8 581.5,131.8 582.5,131.7 583.5,131.7 584.5,131.7 585.5,131.7 586.5,131.6 587.5,131.6" fill="none" stroke="#20d020" stroke-width=".8" stroke-dasharray="1.4 1.4" stroke-dashoffset="1.4"/>
<rect x="460.00" y="123.02" width="3.00" height="2.80" fill="#1db01d" stroke="#0a7a0a" stroke-width="0.6"/>
<rect x="499.00" y="112.80" width="3.00" height="2.80" fill="#1db01d" stroke="#0a7a0a" stroke-width="0.6"/>
<rect x="532.38" y="118.50" width="3.00" height="2.80" fill="#1db01d" stroke="#0a7a0a" stroke-width="0.6"/>
<rect x="564.62" y="130.30" width="3.00" height="2.80" fill="#1db01d" stroke="#0a7a0a" stroke-width="0.6"/>
<polyline points="437.5,149.2 438.5,148.8 439.5,148.5 440.5,148.1 441.5,147.8 442.5,147.4 443.5,147.0 444.5,146.6 445.5,146.2 446.5,145.9 447.5,145.5 448.5,145.1 449.5,144.7 450.5,144.4 451.5,144.0 452.5,143.7 453.5,143.4 454.5,143.0 455.5,142.7 456.5,142.5 457.5,142.2 458.5,142.0 459.5,141.7 460.5,141.5 461.5,141.4 462.5,141.2 463.5,141.0 464.5,140.9 465.5,140.7 466.5,140.6 467.5,140.4 468.5,140.3 469.5,140.1 470.5,140.0 471.5,139.8 472.5,139.7 473.5,139.5 474.5,139.4 475.5,139.3 476.5,139.1 477.5,139.0 478.5,138.9 479.5,138.8 480.5,138.6 481.5,138.5 482.5,138.4 483.5,138.3 484.5,138.2 485.5,138.1 486.5,138.0 487.5,138.0 488.5,137.9 489.5,137.8 490.5,137.7 491.5,137.7 492.5,137.6 493.5,137.6 494.5,137.5 495.5,137.5 496.5,137.5 497.5,137.4 498.5,137.4 499.5,137.4 500.5,137.4 501.5,137.5 502.5,137.6 503.5,137.8 504.5,138.2 505.5,138.6 506.5,139.1 507.5,139.6 508.5,140.2 509.5,140.9 510.5,141.6 511.5,142.3 512.5,143.1 513.5,143.9 514.5,144.8 515.5,145.6 516.5,146.5 517.5,147.4 518.5,148.2 519.5,149.1 520.5,150.0 521.5,150.8 522.5,151.6 523.5,152.3 524.5,153.1 525.5,153.7 526.5,154.4 527.5,154.9 528.5,155.5 529.5,155.9 530.5,156.2 531.5,156.5 532.5,156.7 533.5,156.8 534.5,156.8 535.5,156.8 536.5,156.8 537.5,156.8 538.5,156.8 539.5,156.8 540.5,156.8 541.5,156.8 542.5,156.8 543.5,156.8 544.5,156.8 545.5,156.8 546.5,156.8 547.5,156.8 548.5,156.8 549.5,156.8 550.5,156.8 551.5,156.8 552.5,156.8 553.5,156.8 554.5,156.8 555.5,156.8 556.5,156.8 557.5,156.8 558.5,156.8 559.5,156.8 560.5,156.8 561.5,156.8 562.5,156.8 563.5,156.8 564.5,156.8 565.5,156.8 566.5,156.8 567.5,156.7 568.5,156.6 569.5,156.4 570.5,156.2 571.5,155.9 572.5,155.6 573.5,155.3 574.5,154.9 575.5,154.5 576.5,154.0 577.5,153.6 578.5,153.1 579.5,152.7 580.5,152.2 581.5,151.7 582.5,151.2 583.5,150.8 584.5,150.4 585.5,149.9 586.5,149.6 587.5,149.2" fill="none" stroke="#fff" stroke-width=".8" stroke-dasharray="1.4 1.4" opacity=".9"/>
<polyline points="437.5,149.2 438.5,148.8 439.5,148.5 440.5,148.1 441.5,147.8 442.5,147.4 443.5,147.0 444.5,146.6 445.5,146.2 446.5,145.9 447.5,145.5 448.5,145.1 449.5,144.7 450.5,144.4 451.5,144.0 452.5,143.7 453.5,143.4 454.5,143.0 455.5,142.7 456.5,142.5 457.5,142.2 458.5,142.0 459.5,141.7 460.5,141.5 461.5,141.4 462.5,141.2 463.5,141.0 464.5,140.9 465.5,140.7 466.5,140.6 467.5,140.4 468.5,140.3 469.5,140.1 470.5,140.0 471.5,139.8 472.5,139.7 473.5,139.5 474.5,139.4 475.5,139.3 476.5,139.1 477.5,139.0 478.5,138.9 479.5,138.8 480.5,138.6 481.5,138.5 482.5,138.4 483.5,138.3 484.5,138.2 485.5,138.1 486.5,138.0 487.5,138.0 488.5,137.9 489.5,137.8 490.5,137.7 491.5,137.7 492.5,137.6 493.5,137.6 494.5,137.5 495.5,137.5 496.5,137.5 497.5,137.4 498.5,137.4 499.5,137.4 500.5,137.4 501.5,137.5 502.5,137.6 503.5,137.8 504.5,138.2 505.5,138.6 506.5,139.1 507.5,139.6 508.5,140.2 509.5,140.9 510.5,141.6 511.5,142.3 512.5,143.1 513.5,143.9 514.5,144.8 515.5,145.6 516.5,146.5 517.5,147.4 518.5,148.2 519.5,149.1 520.5,150.0 521.5,150.8 522.5,151.6 523.5,152.3 524.5,153.1 525.5,153.7 526.5,154.4 527.5,154.9 528.5,155.5 529.5,155.9 530.5,156.2 531.5,156.5 532.5,156.7 533.5,156.8 534.5,156.8 535.5,156.8 536.5,156.8 537.5,156.8 538.5,156.8 539.5,156.8 540.5,156.8 541.5,156.8 542.5,156.8 543.5,156.8 544.5,156.8 545.5,156.8 546.5,156.8 547.5,156.8 548.5,156.8 549.5,156.8 550.5,156.8 551.5,156.8 552.5,156.8 553.5,156.8 554.5,156.8 555.5,156.8 556.5,156.8 557.5,156.8 558.5,156.8 559.5,156.8 560.5,156.8 561.5,156.8 562.5,156.8 563.5,156.8 564.5,156.8 565.5,156.8 566.5,156.8 567.5,156.7 568.5,156.6 569.5,156.4 570.5,156.2 571.5,155.9 572.5,155.6 573.5,155.3 574.5,154.9 575.5,154.5 576.5,154.0 577.5,153.6 578.5,153.1 579.5,152.7 580.5,152.2 581.5,151.7 582.5,151.2 583.5,150.8 584.5,150.4 585.5,149.9 586.5,149.6 587.5,149.2" fill="none" stroke="#2020d0" stroke-width=".8" stroke-dasharray="1.4 1.4" stroke-dashoffset="1.4"/>
<rect x="460.00" y="139.96" width="3.00" height="2.80" fill="#1a1ac8" stroke="#101090" stroke-width="0.6"/>
<rect x="499.00" y="136.40" width="3.00" height="2.80" fill="#1a1ac8" stroke="#101090" stroke-width="0.6"/>
<rect x="532.38" y="155.00" width="3.00" height="2.80" fill="#1a1ac8" stroke="#101090" stroke-width="0.6"/>
<rect x="564.62" y="155.00" width="3.00" height="2.80" fill="#1a1ac8" stroke="#101090" stroke-width="0.6"/>
<path d="M423.600 160.6l2 1.4-2 1.400zM423.600 166.4l2 1.4-2 1.400z" fill="#111"/>
<rect x="428.50" y="160.80" width="5.50" height="2.40" fill="#e4e4e4"/>
<rect x="428.50" y="166.70" width="5.50" height="2.40" fill="#e4e4e4"/>
<rect x="435.70" y="180.60" width="155.20" height="7.40" fill="#e6e9ec" stroke="#d4d7da" stroke-width="0.6"/>
<rect x="511.00" y="179.20" width="4.30" height="10.60" fill="#1a78cf"/>
<path d="M423.200 195.2h3.400l-1.700 2z" fill="#111"/>
<rect x="423.60" y="198.50" width="2.40" height="8.00" fill="#ebebeb"/>
<path d="M433.5 200.2l4.600-.600-.900 1.500 3.800 3.500-4.600-2.400-.700.500z" fill="#a89a28" stroke="#3a3408" stroke-width=".5" stroke-linejoin="round"/>
<path d="M440.6 196.6v2.800M439.2 198.0h2.800" stroke="#2a2a2a" stroke-width=".7"/>
<path d="M448.0 200.2l4.600-.600-.900 1.500 3.800 3.500-4.600-2.400-.700.500z" fill="#e2e2e2" stroke="#cfcfcf" stroke-width=".5" stroke-linejoin="round"/>
<path d="M455.1 196.6v2.800M453.7 198.0h2.800" stroke="#d6d6d6" stroke-width=".7"/>
<line x1="461.40" y1="194.30" x2="461.40" y2="207.00" stroke="#c8c8c8" stroke-width="0.8"/>
<path d="M467.400 199h8.200l-4.100 5z" fill="#3f5f96"/><path d="M469.600 201.800h3.800l-1.900 2.200z" fill="#7f9ccc"/>
<rect x="430.30" y="210.00" width="98.00" height="20.80" fill="#f6f6f6" stroke="#d2d2d2" stroke-width="0.7"/>
<rect x="563.80" y="194.00" width="22.80" height="11.40" fill="#fff" stroke="#7a7a7a" stroke-width="0.9"/>
<rect x="563.80" y="208.60" width="22.80" height="10.20" fill="#f0f0f0" stroke="#d6d6d6" stroke-width="0.7"/>
<rect x="563.80" y="220.20" width="22.80" height="11.40" fill="#f0f0f0" stroke="#d6d6d6" stroke-width="0.7"/>
<rect x="588.00" y="194.20" width="3.80" height="5.20" fill="#f0f0f0" stroke="#c8c8c8" stroke-width="0.5"/>
<rect x="588.00" y="199.90" width="3.80" height="5.20" fill="#f0f0f0" stroke="#c8c8c8" stroke-width="0.5"/>
<path d="M588.9 197.8l1 -1.600 1 1.600zM588.900 201.7l1 1.600 1 -1.600z" fill="#111"/>
<rect x="588.00" y="208.40" width="3.80" height="5.20" fill="#f0f0f0" stroke="#c8c8c8" stroke-width="0.5"/>
<rect x="588.00" y="214.10" width="3.80" height="5.20" fill="#f0f0f0" stroke="#c8c8c8" stroke-width="0.5"/>
<path d="M588.9 212.0l1 -1.600 1 1.600zM588.900 215.9l1 1.600 1 -1.600z" fill="#777"/>
<rect x="588.00" y="221.00" width="3.80" height="5.20" fill="#f0f0f0" stroke="#c8c8c8" stroke-width="0.5"/>
<rect x="588.00" y="226.70" width="3.80" height="5.20" fill="#f0f0f0" stroke="#c8c8c8" stroke-width="0.5"/>
<path d="M588.9 224.6l1 -1.600 1 1.600zM588.900 228.5l1 1.600 1 -1.600z" fill="#777"/>
<rect x="421.60" y="240.00" width="175.60" height="10.60" fill="#a6bfdc"/>
<path d="M424.800 244.4h4l-2 2.600z" fill="#111"/>
<rect x="421.30" y="250.60" width="175.90" height="142.60" fill="#f3f3f3"/>
<rect x="421.30" y="264.30" width="175.90" height="128.40" fill="#fdfdfd"/>
<rect x="450.00" y="254.00" width="24.60" height="10.30" fill="#f0f0f0" stroke="#d9d9d9" stroke-width="0.7"/>
<rect x="474.60" y="254.00" width="28.00" height="10.30" fill="#f0f0f0" stroke="#d9d9d9" stroke-width="0.7"/>
<rect x="502.60" y="254.00" width="38.90" height="10.30" fill="#f0f0f0" stroke="#d9d9d9" stroke-width="0.7"/>
<rect x="422.00" y="252.60" width="27.60" height="12.40" fill="#fff" stroke="#d9d9d9" stroke-width="0.7"/>
<rect x="422.40" y="263.60" width="26.80" height="2.00" fill="#fff"/>
<rect x="425.20" y="268.80" width="53.40" height="12.40" fill="#e6e6e6" stroke="#b8b8b8" stroke-width="0.8"/>
<path d="M472.600 274.300l1.900 1.900 1.900-1.900" fill="none" stroke="#444" stroke-width=".8"/>
<rect x="494.60" y="270.00" width="97.20" height="7.90" fill="#fff"/>
<path d="M494.60 270.00h4.42v3.95h-4.42zM499.02 273.95h4.42v3.95h-4.42zM503.44 270.00h4.42v3.95h-4.42zM507.85 273.95h4.42v3.95h-4.42zM512.27 270.00h4.42v3.95h-4.42zM516.69 273.95h4.42v3.95h-4.42zM521.11 270.00h4.42v3.95h-4.42zM525.53 273.95h4.42v3.95h-4.42zM529.95 270.00h4.42v3.95h-4.42zM534.36 273.95h4.42v3.95h-4.42zM538.78 270.00h4.42v3.95h-4.42zM543.20 273.95h4.42v3.95h-4.42zM547.62 270.00h4.42v3.95h-4.42zM552.04 273.95h4.42v3.95h-4.42zM556.45 270.00h4.42v3.95h-4.42zM560.87 273.95h4.42v3.95h-4.42zM565.29 270.00h4.42v3.95h-4.42zM569.71 273.95h4.42v3.95h-4.42zM574.13 270.00h4.42v3.95h-4.42zM578.55 273.95h4.42v3.95h-4.42zM582.96 270.00h4.42v3.95h-4.42zM587.38 273.95h4.42v3.95h-4.42z" fill="#bdbdbd"/>
<rect x="494.60" y="270.00" width="97.20" height="7.90" fill="url(#opa)"/>
<rect x="589.20" y="275.60" width="3.40" height="5.80" fill="#1a78cf"/>
<rect x="425.40" y="284.60" width="153.20" height="103.40" fill="#fff" stroke="#8c9097" stroke-width="0.8"/>
<rect x="425.80" y="285.00" width="36.80" height="102.60" fill="#f0f0f0"/>
<line x1="462.60" y1="285.00" x2="462.60" y2="387.60" stroke="#dcdcdc" stroke-width="0.6"/>
<rect x="462.80" y="285.20" width="115.40" height="16.60" fill="#0b78d7"/>
<line x1="425.80" y1="302.00" x2="462.60" y2="302.00" stroke="#dcdcdc" stroke-width="0.6"/>
<rect x="427.80" y="287.80" width="22.20" height="11.20" fill="#cbe3f6" stroke="#a8cdee" stroke-width="0.5"/>
<line x1="438.90" y1="288.00" x2="438.90" y2="298.80" stroke="#b4d4f0" stroke-width="0.5"/>
<rect x="429.40" y="290.00" width="7.40" height="7.40" fill="#9fd0f5" stroke="#1a3a7a" stroke-width="1.0"/>
<rect x="430.40" y="291.00" width="5.40" height="2.40" fill="#c8e6fb"/>
<circle cx="443" cy="292.300" r="2" fill="#f4f9fd" stroke="#3a3a3a" stroke-width=".8"/><path d="M444.400 294l2.200 3.200" stroke="#222" stroke-width="1.200" stroke-linecap="round"/><path d="M442 292.300h2M443 291.300v2" stroke="#555" stroke-width=".5"/>
<rect x="451.40" y="289.80" width="7.20" height="7.80" fill="#fdfdfd" stroke="#cfcfcf" stroke-width="0.7"/>
<svg x="464" y="286.400" width="20.600" height="15" viewBox="0 0 415 309" preserveAspectRatio="none" fill-rule="evenodd"><rect width="415" height="309" fill="#124ab5"/><path fill="#1d66c8" d="M351 310 82 310 71 302 29 262 0 219 0 91 20 58 48 28 82 0 351 0 383 38 406 85 415 123 415 187 407 222 393 255 374 285z"/><path fill="#2776d0" d="M285 310 177 310 145 296 102 272 67 244 38 212 22 181 17 158 20 134 30 110 48 85 74 60 104 37 177 0 287 1 313 17 336 38 354 63 367 91 375 123 378 157 375 191 366 222 353 250 334 274 311 294z"/><path fill="#3687d8" d="M242 300 220 298 193 289 104 240 50 192 38 173 34 156 38 138 49 120 101 72 187 24 215 13 238 10 259 12 280 21 304 38 324 58 346 98 354 151 347 206 328 247 309 268 285 286 264 296z"/><path fill="#4b99df" d="M244 288 216 282 112 225 56 179 43 156 46 144 55 132 110 86 213 29 240 22 256 24 273 32 316 70 332 104 338 146 335 197 320 234 278 275z"/><path fill="#64ace6" d="M241 282 227 278 162 237 116 215 56 169 47 155 56 141 116 96 162 73 227 32 240 28 267 38 310 76 323 104 327 137 326 192 314 228 268 271z"/><path fill="#7ebfec" d="M243 277 232 275 209 255 163 226 120 209 95 186 56 164 50 155 56 147 95 124 120 101 164 83 209 55 231 35 240 33 263 41 306 79 314 95 320 126 320 191 311 224 264 268z"/><path fill="#99d1f2" d="M242 275 234 273 214 251 169 220 123 206 97 180 51 155 97 130 123 104 170 90 213 60 233 38 239 35 261 44 280 66 303 80 309 92 316 122 316 192 308 223 300 232 279 245 262 266z"/><path fill="#b2e0f6" d="M240 274 234 272 216 246 191 232 171 214 154 207 124 204 98 174 51 155 98 135 124 106 154 103 171 96 191 78 216 64 238 36 260 45 278 70 302 82 313 120 309 155 313 192 306 222 299 230 277 240 260 264z"/><path fill="#c9eefa" d="M240 273 235 272 231 257 218 242 192 230 172 208 145 202 125 203 115 184 100 170 52 155 100 140 115 126 125 107 145 108 172 102 192 80 218 68 230 54 238 37 260 47 278 75 300 82 311 118 306 155 311 192 305 220 298 230 276 236 260 263z"/><path fill="#def9fd" d="M238 272 234 256 220 239 193 228 173 203 142 198 125 202 118 182 101 167 52 155 101 143 118 128 125 108 142 112 173 107 193 82 220 71 234 54 238 38 259 47 262 59 274 77 284 82 300 83 310 118 303 154 310 192 304 206 304 220 297 229 285 228 274 234 259 263z"/><path fill="#edfefe" d="M238 272 235 271 237 254 222 235 193 227 189 214 175 198 141 195 125 201 122 181 103 164 85 160 76 162 70 158 52 155 70 152 76 148 85 150 103 146 122 129 125 109 141 115 175 112 189 96 193 83 214 80 222 75 237 55 238 38 244 39 250 48 259 48 260 59 271 78 284 85 296 81 299 84 304 92 302 106 309 118 299 154 309 191 301 204 303 220 297 228 284 225 270 232 260 251 259 262 250 262z"/><path fill="#000000" d="M248 248 245 245 246 242 236 239 235 233 238 226 244 222 229 222 224 218 221 222 222 218 216 217 210 211 209 218 203 219 202 213 208 209 200 205 197 199 195 202 192 201 195 196 191 190 187 191 190 188 185 184 187 181 182 174 182 157 179 167 173 176 164 182 157 181 156 185 154 181 150 182 144 178 143 183 140 184 138 180 141 177 135 171 132 172 134 170 131 167 130 157 126 161 120 162 114 155 120 148 126 149 130 153 131 143 134 140 132 138 135 139 141 133 138 130 140 126 143 127 144 132 150 128 154 129 156 125 157 129 164 128 173 134 179 143 182 153 182 136 187 129 185 126 190 122 187 119 191 120 195 114 192 109 195 108 197 111 200 105 208 101 202 97 203 91 209 92 210 99 216 93 222 92 221 88 224 92 229 88 244 88 238 84 235 77 236 71 246 68 248 62 250 64 249 68 258 72 256 84 248 88 264 90 265 88 270 93 273 89 272 94 278 94 284 102 284 98 288 94 294 95 292 104 286 104 295 112 296 120 298 117 303 120 297 122 298 132 302 132 298 134 300 140 297 140 296 148 286 155 296 162 297 170 300 170 298 176 302 178 298 178 297 188 303 190 298 193 296 190 295 198 286 206 292 206 295 214 288 216 284 212 284 208 278 216 272 216 273 221 270 217 265 222 264 220 261 222 248 222 256 226 258 238 249 242z"/></svg>
<path d="M583.7 289.8h3.0l1.600 1.600v4.4h-4.6z" fill="#fff" stroke="#111" stroke-width="1.0" stroke-linejoin="round"/>
<path d="M589.6 287.8v2.600M588.3 289.1h2.600" stroke="#111" stroke-width=".8"/>
<path d="M591.600 296.600h2.200l-2.200 2.200z" fill="#c4c4c4" transform="rotate(90 592.700 297.700)"/>
<path d="M584.3 305.0h2.4l1.600 1.600v3.8h-4.0z" fill="#fff" stroke="#cdcdcd" stroke-width="0.8" stroke-linejoin="round"/>
<path d="M589.6 303.0v2.600M588.3 304.3h2.600" stroke="#e0e0e0" stroke-width=".8"/>
<rect x="583.40" y="319.60" width="6.20" height="4.80" fill="#d6e6fa" stroke="#2a4d9a" stroke-width="0.9" rx="0.8"/>
<path d="M589.800 316.300v2.600M588.500 317.600h2.600" stroke="#1a2a5a" stroke-width=".8"/>
<rect x="583.90" y="331.20" width="6.40" height="6.40" fill="#fbfbfb" stroke="#c8c8c8" stroke-width="0.8"/>
<rect x="583.90" y="345.40" width="6.40" height="6.80" fill="#fff" stroke="#b4b4b4" stroke-width="0.8"/>
<path d="M590 346.400v5.500h-5.500z" fill="#cfcfcf"/>
<rect x="421.60" y="393.00" width="175.60" height="10.40" fill="#a6bfdc"/>
<path d="M425.600 396.400l2.600 2-2.600 2z" fill="#111"/>
<rect x="597.20" y="62.50" width="1.60" height="342.50" fill="#fbfcfd"/>
<rect x="595.90" y="86.00" width="0.70" height="307.00" fill="#bcc8d6"/>
<rect x="1.20" y="371.60" width="416.00" height="33.60" fill="#f0f0f0"/>
<rect x="1.20" y="371.60" width="2.00" height="33.60" fill="#fff"/>
<line x1="8.00" y1="382.60" x2="308.00" y2="382.60" stroke="#a0a0a0" stroke-width="0.8"/>
<path d="M8.5 373.400v20.200M35.5 373.400v20.200M65.5 373.400v20.200M95.5 373.400v20.200M126.5 373.400v20.200M156.5 373.400v20.200M186.5 373.400v20.200M217.5 373.400v20.200M247.5 373.400v20.200M277.5 373.400v20.200M308.5 373.400v20.200" stroke="#3c3c3c" stroke-width=".9" fill="none"/>
<path d="M20.5 390.200v3.400M50.5 390.200v3.400M80.5 390.200v3.400M111.5 390.200v3.400M141.5 390.200v3.400M171.5 390.200v3.400M201.5 390.200v3.400M232.5 390.200v3.400M262.5 390.200v3.400M292.5 390.200v3.400" stroke="#555" stroke-width=".8" fill="none"/>
<path d="M11.5 391.200v2.400M14.5 391.200v2.400M17.5 391.200v2.400M23.5 391.200v2.400M26.5 391.200v2.400M29.5 391.200v2.400M32.5 391.200v2.400M38.5 391.200v2.400M41.5 391.200v2.400M44.5 391.200v2.400M47.5 391.200v2.400M53.5 391.200v2.400M56.5 391.200v2.400M59.5 391.200v2.400M62.5 391.200v2.400M68.5 391.200v2.400M71.5 391.200v2.400M74.5 391.200v2.400M77.5 391.200v2.400M83.5 391.200v2.400M86.5 391.200v2.400M89.5 391.200v2.400M92.5 391.200v2.400M98.5 391.200v2.400M101.5 391.200v2.400M104.5 391.200v2.400M108.5 391.200v2.400M114.5 391.200v2.400M117.5 391.200v2.400M120.5 391.200v2.400M123.5 391.200v2.400M129.5 391.200v2.400M132.5 391.200v2.400M135.5 391.200v2.400M138.5 391.200v2.400M144.5 391.200v2.400M147.5 391.200v2.400M150.5 391.200v2.400M153.5 391.200v2.400M159.5 391.200v2.400M162.5 391.200v2.400M165.5 391.200v2.400M168.5 391.200v2.400M174.5 391.200v2.400M177.5 391.200v2.400M180.5 391.200v2.400M183.5 391.200v2.400M189.5 391.200v2.400M192.5 391.200v2.400M195.5 391.200v2.400M198.5 391.200v2.400M204.5 391.200v2.400M208.5 391.200v2.400M211.5 391.200v2.400M214.5 391.200v2.400M220.5 391.200v2.400M223.5 391.200v2.400M226.5 391.200v2.400M229.5 391.200v2.400M235.5 391.200v2.400M238.5 391.200v2.400M241.5 391.200v2.400M244.5 391.200v2.400M250.5 391.200v2.400M253.5 391.200v2.400M256.5 391.200v2.400M259.5 391.200v2.400M265.5 391.200v2.400M268.5 391.200v2.400M271.5 391.200v2.400M274.5 391.200v2.400M280.5 391.200v2.400M283.5 391.200v2.400M286.5 391.200v2.400M289.5 391.200v2.400M295.5 391.200v2.400M298.5 391.200v2.400M301.5 391.200v2.400M304.5 391.200v2.400" stroke="#6a6a6a" stroke-width=".8" fill="none"/>
<rect x="4.20" y="379.40" width="8.40" height="7.40" fill="#fdfdfd" stroke="#c8c8c8" stroke-width="0.7"/>
<rect x="7.20" y="380.80" width="1.80" height="4.40" fill="#111"/>
<circle cx="322" cy="381.2" r="2.900" fill="#f3c84a" stroke="#a8821a" stroke-width=".9"/>
<line x1="331.60" y1="375.40" x2="331.60" y2="387.40" stroke="#d0d0d0" stroke-width="0.8"/>
<path d="M338.800 378.400v5.600M344 378.400v5.600l-4.200-2.800z" fill="none" stroke="#c0c0c0" stroke-width=".9"/>
<path d="M352.400 377.800v6.800l6-3.400z" fill="#f6d25a" stroke="#8a6a10" stroke-width=".9" stroke-linejoin="round"/>
<path d="M367.200 378.200v6l4.600-3z" fill="#f3c84a" stroke="#4a3a10" stroke-width=".9" stroke-linejoin="round"/><path d="M373.200 378v6.400" stroke="#4a3a10" stroke-width="1.100"/>
<line x1="379.50" y1="375.40" x2="379.50" y2="387.40" stroke="#d0d0d0" stroke-width="0.8"/>
<rect x="384.60" y="377.60" width="7.40" height="6.20" fill="#e8f2fc" stroke="#2a5db0" stroke-width="0.9"/>
<rect x="384.60" y="377.60" width="7.40" height="1.60" fill="#2a5db0"/>
<circle cx="391.400" cy="384" r="2.300" fill="#f6d25a" stroke="#8a6a10" stroke-width=".7"/>
<line x1="398.30" y1="375.40" x2="398.30" y2="387.40" stroke="#d0d0d0" stroke-width="0.8"/>
<path d="M404.400 377.400v5M406.200 377.400v5M408 377.400v5M410 377.400v3" stroke="#3a4a6a" stroke-width=".8" stroke-dasharray="1 1"/>
<circle cx="410.400" cy="384" r="2.500" fill="#f6d25a" stroke="#8a6a10" stroke-width=".7"/>
<rect x="315.80" y="390.40" width="45.00" height="12.80" fill="#fff" stroke="#adadad" stroke-width="0.9"/>
<rect x="0.00" y="405.20" width="600.00" height="10.80" fill="#f0f0f0"/>
<line x1="0.00" y1="405.30" x2="600.00" y2="405.30" stroke="#dedede" stroke-width="0.7"/>
<line x1="79.50" y1="406.50" x2="79.50" y2="415.00" stroke="#d9d9d9" stroke-width="0.7"/>
<line x1="113.30" y1="406.50" x2="113.30" y2="415.00" stroke="#d9d9d9" stroke-width="0.7"/>
<line x1="146.70" y1="406.50" x2="146.70" y2="415.00" stroke="#d9d9d9" stroke-width="0.7"/>
<path d="M597 409l-5 5M597 411.500l-2.500 2.500" stroke="#bdbdbd" stroke-width=".7"/>
<g>
<text x="18.7" y="11.3" font-size="7.2" fill="#111" textLength="21.8" lengthAdjust="spacingAndGlyphs" stroke="#111" stroke-width=".16">Fractal1</text>
<text x="6.7" y="25.3" font-size="7.0" fill="#1a1a1a" textLength="9.5" lengthAdjust="spacingAndGlyphs" stroke="#1a1a1a" stroke-width=".16">File</text>
<text x="24.2" y="25.3" font-size="7.0" fill="#1a1a1a" textLength="10.5" lengthAdjust="spacingAndGlyphs" stroke="#1a1a1a" stroke-width=".16">Edit</text>
<text x="43.0" y="25.3" font-size="7.0" fill="#1a1a1a" textLength="13.7" lengthAdjust="spacingAndGlyphs" stroke="#1a1a1a" stroke-width=".16">View</text>
<text x="65.0" y="25.3" font-size="7.0" fill="#1a1a1a" textLength="18.8" lengthAdjust="spacingAndGlyphs" stroke="#1a1a1a" stroke-width=".16">Fractal</text>
<text x="92.0" y="25.3" font-size="7.0" fill="#1a1a1a" textLength="31.0" lengthAdjust="spacingAndGlyphs" stroke="#1a1a1a" stroke-width=".16">Animation</text>
<text x="131.0" y="25.3" font-size="7.0" fill="#1a1a1a" textLength="24.6" lengthAdjust="spacingAndGlyphs" stroke="#1a1a1a" stroke-width=".16">Window</text>
<text x="163.6" y="25.3" font-size="7.0" fill="#1a1a1a" textLength="13.4" lengthAdjust="spacingAndGlyphs" stroke="#1a1a1a" stroke-width=".16">Help</text>
<text x="10.2" y="59.4" font-size="7.0" fill="#1a1a1a" textLength="38.5" lengthAdjust="spacingAndGlyphs" stroke="#1a1a1a" stroke-width=".16">Mouse Mode</text>
<text x="61.2" y="59.4" font-size="7.0" fill="#1a1a1a" textLength="24.3" lengthAdjust="spacingAndGlyphs" stroke="#1a1a1a" stroke-width=".16">Gradient</text>
<text x="113.2" y="59.4" font-size="7.0" fill="#1a1a1a" textLength="42.8" lengthAdjust="spacingAndGlyphs" stroke="#1a1a1a" stroke-width=".16">Render to Disk</text>
<text x="180.0" y="59.4" font-size="7.0" fill="#1a1a1a" textLength="47.8" lengthAdjust="spacingAndGlyphs" stroke="#1a1a1a" stroke-width=".16">Save Parameters</text>
<text x="240.0" y="59.4" font-size="7.0" fill="#1a1a1a" textLength="20.8" lengthAdjust="spacingAndGlyphs" stroke="#1a1a1a" stroke-width=".16">Browse</text>
<text x="431.7" y="71.5" font-size="7.3" fill="#1c2736" textLength="114.1" lengthAdjust="spacingAndGlyphs" stroke="#1c2736" stroke-width=".16">Layer Properties - Fractal1, Background</text>
<text x="431.7" y="83.4" font-size="7.3" fill="#1c2736" textLength="93.3" lengthAdjust="spacingAndGlyphs" stroke="#1c2736" stroke-width=".16">Gradient - Fractal1, Background</text>
<text x="590.0" y="71.5" font-size="7.0" fill="#e8eef6" textLength="3.5" lengthAdjust="spacingAndGlyphs" font-weight="bold" stroke="#e8eef6" stroke-width=".16">?</text>
<text x="590.0" y="82.9" font-size="7.0" fill="#1c2736" textLength="3.5" lengthAdjust="spacingAndGlyphs" font-weight="bold" stroke="#1c2736" stroke-width=".16">?</text>
<text x="438.2" y="163.9" font-size="5.2" fill="#333" textLength="60.6" lengthAdjust="spacingAndGlyphs" stroke="#333" stroke-width=".16">Hue/Saturation/Luminance</text>
<text x="438.2" y="169.8" font-size="5.2" fill="#333" textLength="16.8" lengthAdjust="spacingAndGlyphs" stroke="#333" stroke-width=".16">Opacity</text>
<text x="534.2" y="202.4" font-size="7.2" fill="#111" textLength="25.9" lengthAdjust="spacingAndGlyphs" stroke="#111" stroke-width=".16">Rotation:</text>
<text x="534.2" y="215.0" font-size="7.2" fill="#222" textLength="24.4" lengthAdjust="spacingAndGlyphs" stroke="#222" stroke-width=".16">Position:</text>
<text x="534.2" y="228.5" font-size="7.2" fill="#a8a8a8" textLength="22.3" lengthAdjust="spacingAndGlyphs" stroke="#a8a8a8" stroke-width=".16">Opacity:</text>
<text x="566.5" y="202.4" font-size="7.2" fill="#111" stroke="#111" stroke-width=".16">1</text>
<text x="431.7" y="248.1" font-size="7.3" fill="#1c2736" textLength="79.7" lengthAdjust="spacingAndGlyphs" stroke="#1c2736" stroke-width=".16">Fractal Properties - Fractal1</text>
<text x="590.0" y="248.2" font-size="7.0" fill="#1c2736" textLength="3.5" lengthAdjust="spacingAndGlyphs" font-weight="bold" stroke="#1c2736" stroke-width=".16">?</text>
<text x="425.6" y="261.5" font-size="7.0" fill="#1a1a1a" textLength="17.7" lengthAdjust="spacingAndGlyphs" stroke="#1a1a1a" stroke-width=".16">Layers</text>
<text x="452.0" y="261.5" font-size="7.0" fill="#1a1a1a" textLength="17.9" lengthAdjust="spacingAndGlyphs" stroke="#1a1a1a" stroke-width=".16">Image</text>
<text x="478.6" y="261.5" font-size="7.0" fill="#1a1a1a" textLength="21.0" lengthAdjust="spacingAndGlyphs" stroke="#1a1a1a" stroke-width=".16">History</text>
<text x="507.0" y="261.5" font-size="7.0" fill="#1a1a1a" textLength="32.0" lengthAdjust="spacingAndGlyphs" stroke="#1a1a1a" stroke-width=".16">Comments</text>
<text x="427.8" y="277.9" font-size="7.0" fill="#1a1a1a" textLength="21.8" lengthAdjust="spacingAndGlyphs" stroke="#1a1a1a" stroke-width=".16">Normal</text>
<text x="577.0" y="276.3" font-size="6.5" fill="#fff" textLength="14.0" lengthAdjust="spacingAndGlyphs" stroke="#fff" stroke-width=".16">100%</text>
<text x="488.4" y="296.8" font-size="7.0" fill="#fff" textLength="35.2" lengthAdjust="spacingAndGlyphs" stroke="#fff" stroke-width=".16">Background</text>
<text x="431.7" y="401.0" font-size="7.3" fill="#1c2736" textLength="67.0" lengthAdjust="spacingAndGlyphs" stroke="#1c2736" stroke-width=".16">Fractal Mode - Fractal1</text>
<text x="588.5" y="401.0" font-size="7.0" fill="#e8eef6" textLength="4.0" lengthAdjust="spacingAndGlyphs" stroke="#e8eef6" stroke-width=".16">Y</text>
<text x="8.0" y="401.6" font-size="6.5" fill="#333" text-anchor="middle" stroke="#333" stroke-width=".16">1</text>
<text x="35.0" y="401.6" font-size="6.5" fill="#333" text-anchor="middle" stroke="#333" stroke-width=".16">10</text>
<text x="65.3" y="401.6" font-size="6.5" fill="#333" text-anchor="middle" stroke="#333" stroke-width=".16">20</text>
<text x="95.6" y="401.6" font-size="6.5" fill="#333" text-anchor="middle" stroke="#333" stroke-width=".16">30</text>
<text x="125.9" y="401.6" font-size="6.5" fill="#333" text-anchor="middle" stroke="#333" stroke-width=".16">40</text>
<text x="156.2" y="401.6" font-size="6.5" fill="#333" text-anchor="middle" stroke="#333" stroke-width=".16">50</text>
<text x="186.5" y="401.6" font-size="6.5" fill="#333" text-anchor="middle" stroke="#333" stroke-width=".16">60</text>
<text x="216.8" y="401.6" font-size="6.5" fill="#333" text-anchor="middle" stroke="#333" stroke-width=".16">70</text>
<text x="247.1" y="401.6" font-size="6.5" fill="#333" text-anchor="middle" stroke="#333" stroke-width=".16">80</text>
<text x="277.4" y="401.6" font-size="6.5" fill="#333" text-anchor="middle" stroke="#333" stroke-width=".16">90</text>
<text x="306.2" y="401.6" font-size="6.5" fill="#333" text-anchor="middle" stroke="#333" stroke-width=".16">100</text>
<text x="318.2" y="399.3" font-size="7.0" fill="#111" stroke="#111" stroke-width=".16">1</text>
<text x="386.0" y="399.2" font-size="6.8" fill="#333" textLength="29.2" lengthAdjust="spacingAndGlyphs" stroke="#333" stroke-width=".16">0:00:00.00</text>
<text x="5.3" y="413.0" font-size="6.8" fill="#222" textLength="32.0" lengthAdjust="spacingAndGlyphs" stroke="#222" stroke-width=".16">Completed</text>
<text x="84.5" y="413.1" font-size="6.8" fill="#222" textLength="16.8" lengthAdjust="spacingAndGlyphs" stroke="#222" stroke-width=".16">X: 246</text>
<text x="117.3" y="413.1" font-size="6.8" fill="#222" textLength="17.4" lengthAdjust="spacingAndGlyphs" stroke="#222" stroke-width=".16">Y: 267</text>
<text x="150.7" y="413.1" font-size="6.8" fill="#222" textLength="54.1" lengthAdjust="spacingAndGlyphs" stroke="#222" stroke-width=".16">Elapsed: 0:00:00.24</text>
<text x="272.300" y="227" font-size="19" font-family="'Liberation Serif',serif" font-style="italic" fill="#b4bec6" opacity=".8">R</text>
<text x="305.500" y="215.300" font-size="21.500" font-weight="bold" font-style="italic" fill="#a6b9d3" stroke="#a6b9d3" stroke-width=".5" opacity=".9" textLength="91.500" lengthAdjust="spacingAndGlyphs">RAHIM</text>
<text x="306" y="228.800" font-size="10.600" fill="#b4cbe8" stroke="#b4cbe8" stroke-width=".3" opacity=".85" textLength="86" lengthAdjust="spacingAndGlyphs">SOFTWARE</text>
</g>
</svg>
</body></html>
